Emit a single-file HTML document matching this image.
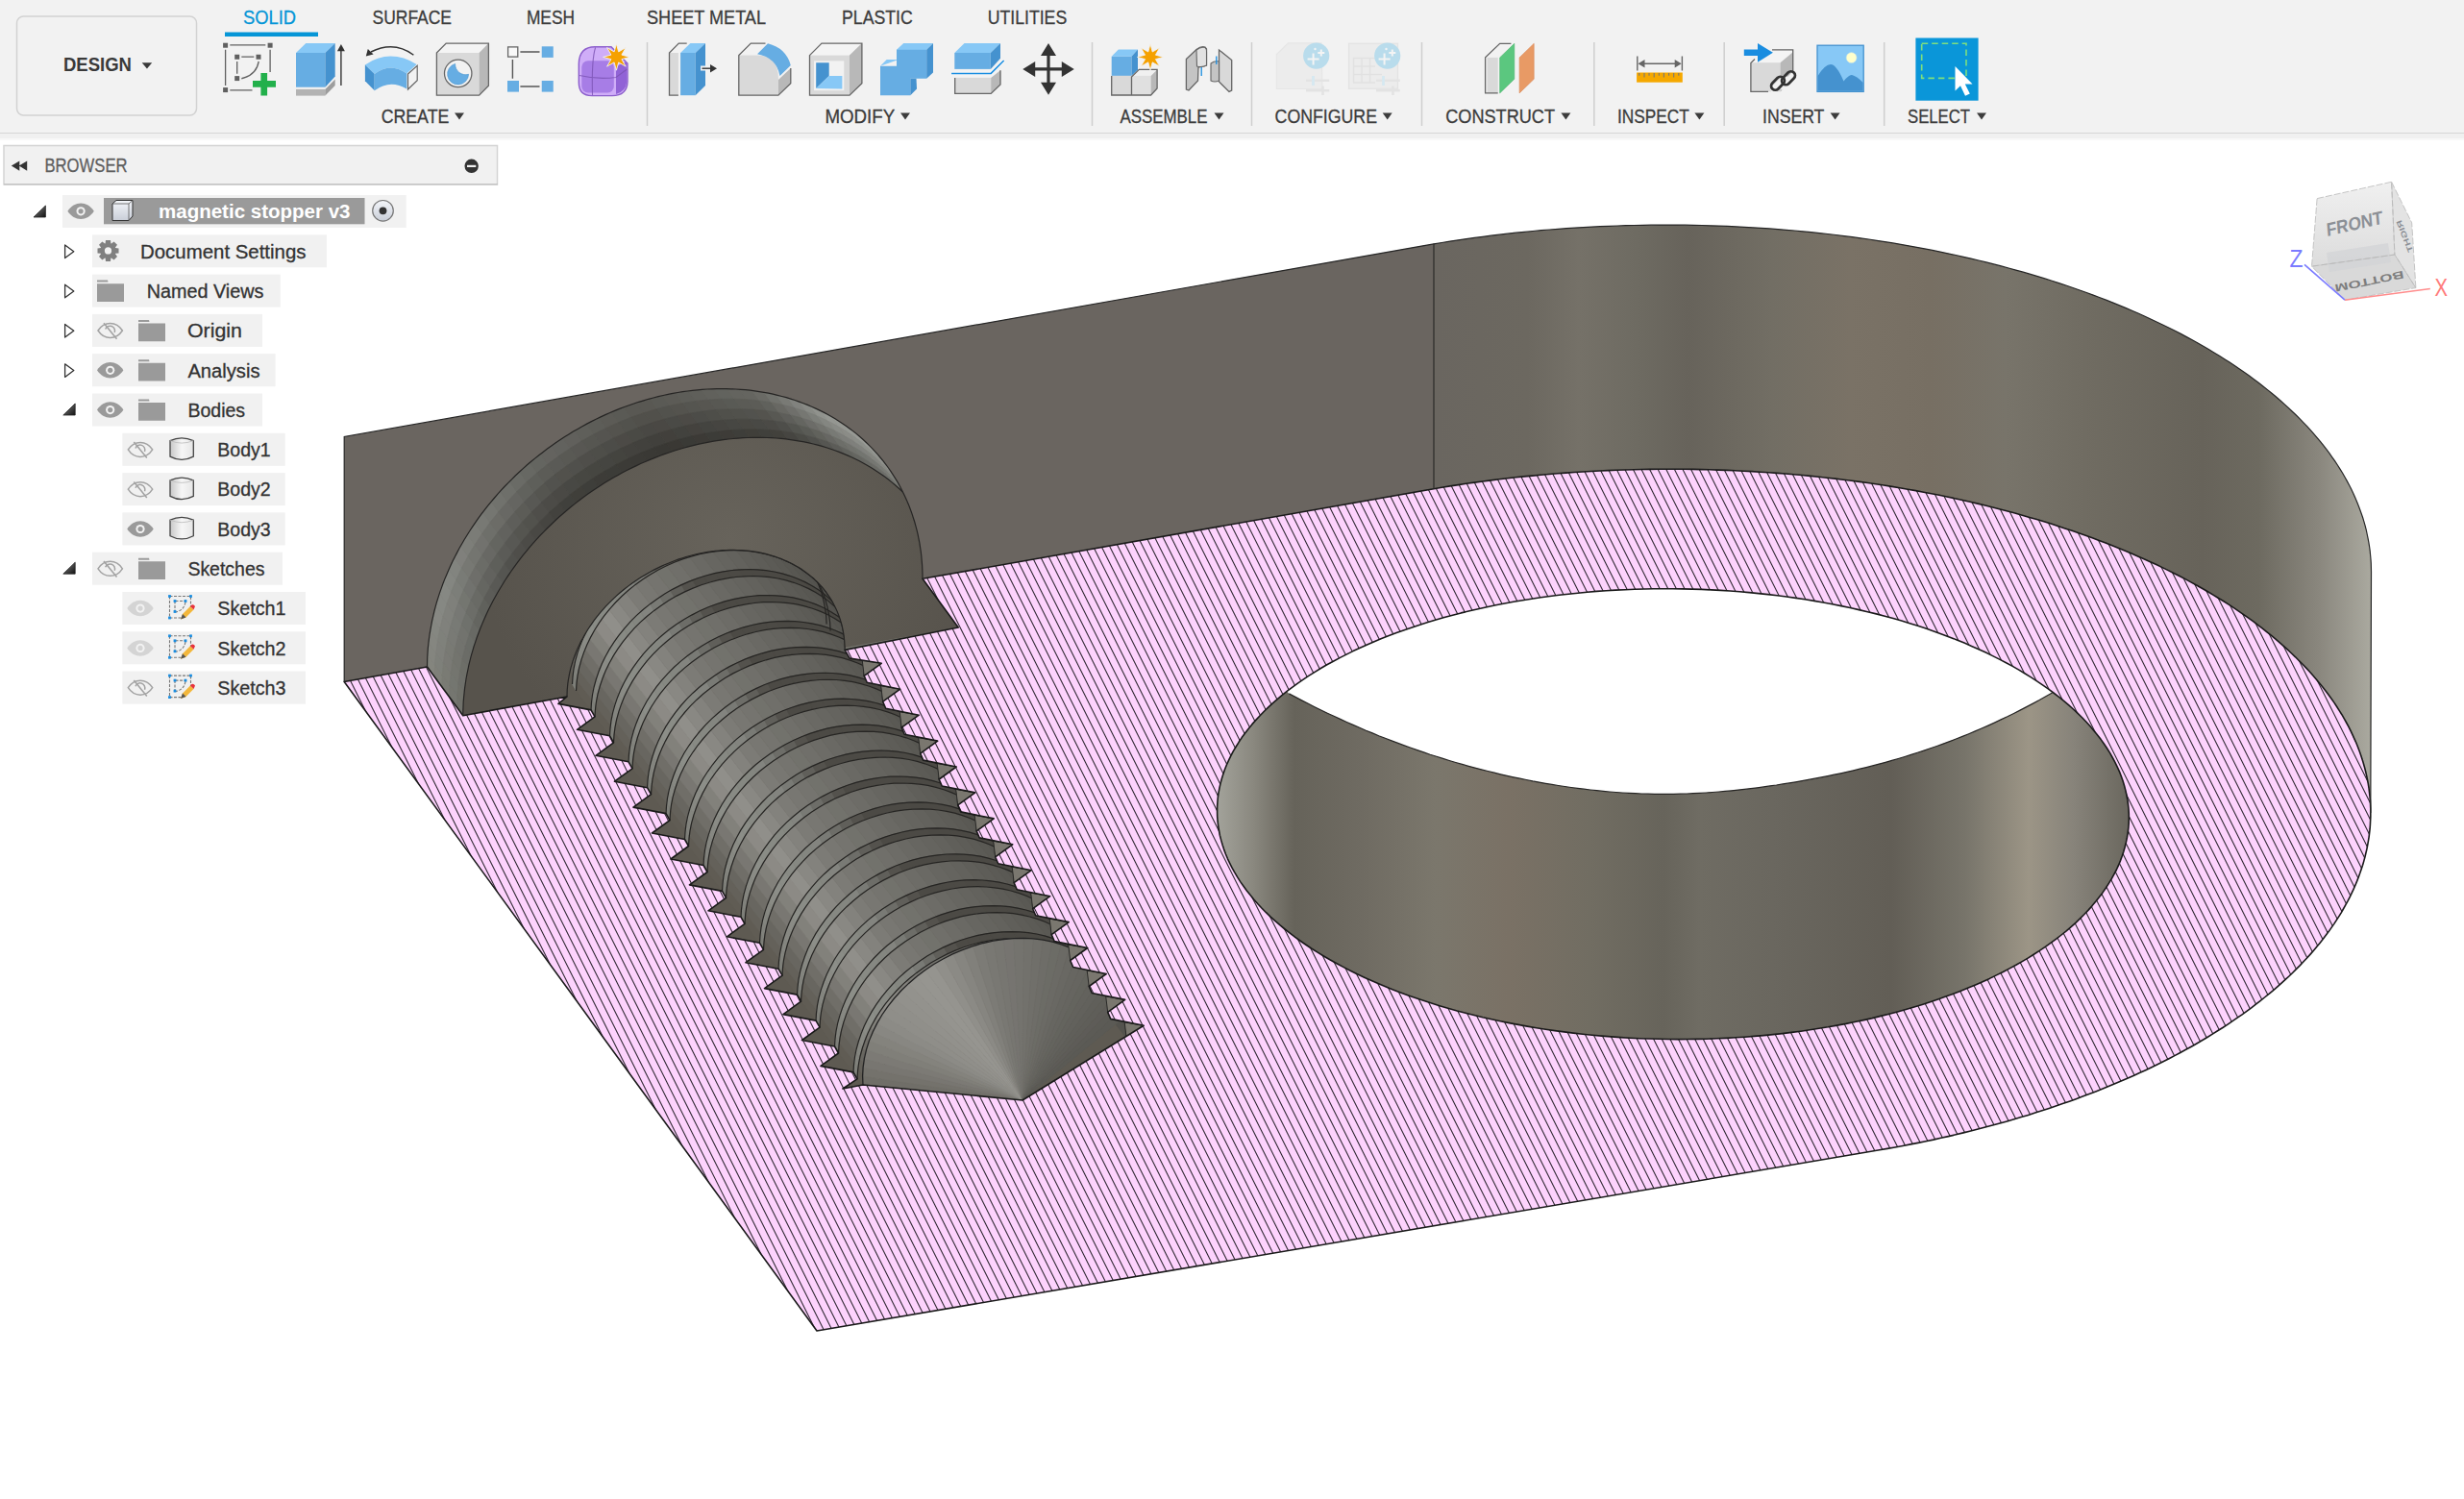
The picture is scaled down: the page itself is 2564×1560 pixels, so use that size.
<!DOCTYPE html>
<html><head><meta charset="utf-8"><style>
html,body{margin:0;padding:0;background:#fff;width:2564px;height:1560px;overflow:hidden}
svg{display:block}
text{font-family:"Liberation Sans",sans-serif}
</style></head><body>
<svg width="2564" height="1560" viewBox="0 0 2564 1560">
<rect width="2564" height="1560" fill="#ffffff"/>
<defs><linearGradient id="gwall" gradientUnits="userSpaceOnUse" x1="1492" y1="0" x2="2467" y2="0"><stop offset="0" stop-color="#6a6660"/><stop offset="0.1" stop-color="#6c6860"/><stop offset="0.155" stop-color="#757168"/><stop offset="0.217" stop-color="#6e6b62"/><stop offset="0.271" stop-color="#67635b"/><stop offset="0.36" stop-color="#726e64"/><stop offset="0.445" stop-color="#7a7266"/><stop offset="0.53" stop-color="#776f63"/><stop offset="0.61" stop-color="#78746a"/><stop offset="0.695" stop-color="#706c62"/><stop offset="0.82" stop-color="#67635a"/><stop offset="0.88" stop-color="#6d6a60"/><stop offset="0.945" stop-color="#8a877e"/><stop offset="1" stop-color="#aaa99f"/></linearGradient><linearGradient id="ghole" gradientUnits="userSpaceOnUse" x1="1266" y1="0" x2="2215" y2="0"><stop offset="0" stop-color="#a3a39b"/><stop offset="0.04" stop-color="#8a887f"/><stop offset="0.085" stop-color="#66635a"/><stop offset="0.16" stop-color="#6f6b62"/><stop offset="0.24" stop-color="#7b776c"/><stop offset="0.32" stop-color="#7a7165"/><stop offset="0.41" stop-color="#716d62"/><stop offset="0.49" stop-color="#67645b"/><stop offset="0.53" stop-color="#6f6c63"/><stop offset="0.61" stop-color="#6a675f"/><stop offset="0.74" stop-color="#625e56"/><stop offset="0.82" stop-color="#77746a"/><stop offset="0.89" stop-color="#9c9586"/><stop offset="0.94" stop-color="#87837a"/><stop offset="1" stop-color="#6a675e"/></linearGradient></defs>
<path d="M358.2,454.5 L1492.0,253.8 L1492.0,508.7 L358.2,709.5 Z" fill="#6a6560"/>
<path d="M1492.0,253.8 L1500.4,252.5 L1508.9,251.1 L1517.4,249.8 L1525.9,248.6 L1534.5,247.4 L1543.0,246.3 L1551.6,245.2 L1560.3,244.2 L1568.9,243.2 L1577.6,242.2 L1586.3,241.4 L1595.0,240.5 L1603.7,239.7 L1612.4,239.0 L1621.2,238.3 L1630.0,237.7 L1638.7,237.1 L1647.5,236.6 L1656.3,236.1 L1665.1,235.7 L1674.0,235.3 L1682.8,235.0 L1691.6,234.7 L1700.5,234.5 L1709.3,234.3 L1718.1,234.2 L1727.0,234.1 L1735.8,234.1 L1744.6,234.1 L1753.5,234.2 L1762.3,234.4 L1771.1,234.5 L1780.0,234.8 L1788.8,235.1 L1797.6,235.4 L1806.3,235.8 L1815.1,236.3 L1823.9,236.8 L1832.6,237.3 L1841.4,237.9 L1850.1,238.6 L1858.8,239.3 L1867.5,240.0 L1876.1,240.8 L1884.7,241.7 L1893.4,242.6 L1901.9,243.5 L1910.5,244.5 L1919.0,245.6 L1927.5,246.7 L1936.0,247.8 L1944.5,249.0 L1952.9,250.3 L1961.3,251.6 L1969.6,252.9 L1977.9,254.3 L1986.2,255.8 L1994.5,257.3 L2002.7,258.8 L2010.8,260.4 L2019.0,262.1 L2027.0,263.8 L2035.1,265.5 L2043.1,267.3 L2051.0,269.1 L2058.9,271.0 L2066.8,272.9 L2074.6,274.9 L2082.4,276.9 L2090.1,279.0 L2097.7,281.1 L2105.3,283.2 L2112.9,285.4 L2120.4,287.6 L2127.8,289.9 L2135.2,292.3 L2142.5,294.6 L2149.8,297.0 L2157.0,299.5 L2164.1,302.0 L2171.2,304.5 L2178.2,307.1 L2185.2,309.7 L2192.1,312.4 L2198.9,315.1 L2205.6,317.9 L2212.3,320.6 L2219.0,323.5 L2225.5,326.3 L2232.0,329.2 L2238.4,332.2 L2244.7,335.2 L2251.0,338.2 L2257.2,341.2 L2263.3,344.3 L2269.3,347.4 L2275.3,350.6 L2281.2,353.8 L2287.0,357.0 L2292.7,360.3 L2298.3,363.6 L2303.9,366.9 L2309.4,370.3 L2314.8,373.7 L2320.1,377.1 L2325.3,380.6 L2330.4,384.1 L2335.5,387.6 L2340.5,391.1 L2345.4,394.7 L2350.2,398.3 L2354.9,402.0 L2359.5,405.6 L2364.0,409.3 L2368.5,413.0 L2372.8,416.8 L2377.1,420.6 L2381.3,424.4 L2385.3,428.2 L2389.3,432.0 L2393.2,435.9 L2397.0,439.8 L2400.7,443.7 L2404.3,447.7 L2407.8,451.6 L2411.2,455.6 L2414.6,459.6 L2417.8,463.6 L2420.9,467.7 L2423.9,471.7 L2426.8,475.8 L2429.7,479.9 L2432.4,484.0 L2435.0,488.1 L2437.6,492.3 L2440.0,496.5 L2442.3,500.6 L2444.5,504.8 L2446.7,509.0 L2448.7,513.2 L2450.6,517.5 L2452.4,521.7 L2454.1,526.0 L2455.7,530.2 L2457.2,534.5 L2458.7,538.8 L2460.0,543.1 L2461.2,547.4 L2462.3,551.7 L2463.2,556.0 L2464.1,560.3 L2464.9,564.7 L2465.6,569.0 L2466.2,573.3 L2466.6,577.7 L2467.0,582.0 L2467.3,586.4 L2467.4,590.7 L2467.5,595.1 L2466.8,845.9 L2466.8,841.6 L2466.6,837.3 L2466.4,833.0 L2466.0,828.6 L2465.5,824.3 L2465.0,820.0 L2464.3,815.7 L2463.5,811.4 L2462.6,807.1 L2461.6,802.8 L2460.5,798.5 L2459.3,794.2 L2458.0,790.0 L2456.6,785.7 L2455.1,781.5 L2453.5,777.2 L2451.8,773.0 L2449.9,768.8 L2448.0,764.6 L2446.0,760.4 L2443.9,756.2 L2441.6,752.0 L2439.3,747.9 L2436.9,743.7 L2434.3,739.6 L2431.7,735.5 L2429.0,731.4 L2426.1,727.3 L2423.2,723.3 L2420.2,719.2 L2417.1,715.2 L2413.8,711.2 L2410.5,707.2 L2407.1,703.3 L2403.6,699.3 L2400.0,695.4 L2396.3,691.5 L2392.5,687.7 L2388.6,683.8 L2384.6,680.0 L2380.5,676.2 L2376.3,672.4 L2372.0,668.7 L2367.7,664.9 L2363.2,661.2 L2358.7,657.6 L2354.1,653.9 L2349.4,650.3 L2344.6,646.7 L2339.7,643.2 L2334.7,639.6 L2329.6,636.1 L2324.5,632.7 L2319.2,629.2 L2313.9,625.8 L2308.5,622.5 L2303.0,619.1 L2297.4,615.8 L2291.8,612.5 L2286.1,609.3 L2280.3,606.1 L2274.4,602.9 L2268.4,599.8 L2262.4,596.7 L2256.2,593.6 L2250.1,590.6 L2243.8,587.6 L2237.5,584.7 L2231.0,581.7 L2224.6,578.9 L2218.0,576.0 L2211.4,573.2 L2204.7,570.5 L2197.9,567.8 L2191.1,565.1 L2184.2,562.4 L2177.2,559.8 L2170.2,557.3 L2163.1,554.8 L2156.0,552.3 L2148.8,549.9 L2141.5,547.5 L2134.2,545.1 L2126.8,542.8 L2119.4,540.6 L2111.9,538.4 L2104.3,536.2 L2096.7,534.1 L2089.1,532.0 L2081.3,530.0 L2073.6,528.0 L2065.8,526.0 L2057.9,524.1 L2050.0,522.3 L2042.1,520.5 L2034.1,518.7 L2026.0,517.0 L2017.9,515.3 L2009.8,513.7 L2001.7,512.2 L1993.5,510.6 L1985.2,509.2 L1976.9,507.7 L1968.6,506.4 L1960.3,505.0 L1951.9,503.8 L1943.5,502.5 L1935.0,501.4 L1926.6,500.2 L1918.1,499.2 L1909.5,498.1 L1901.0,497.2 L1892.4,496.2 L1883.8,495.4 L1875.2,494.5 L1866.5,493.8 L1857.8,493.0 L1849.2,492.4 L1840.5,491.7 L1831.7,491.2 L1823.0,490.6 L1814.2,490.2 L1805.5,489.7 L1796.7,489.4 L1787.9,489.1 L1779.1,488.8 L1770.3,488.6 L1761.5,488.4 L1752.7,488.3 L1743.9,488.2 L1735.1,488.2 L1726.2,488.3 L1717.4,488.4 L1708.6,488.5 L1699.8,488.7 L1691.0,489.0 L1682.2,489.3 L1673.4,489.6 L1664.6,490.0 L1655.8,490.5 L1647.0,491.0 L1638.2,491.5 L1629.5,492.1 L1620.7,492.8 L1612.0,493.5 L1603.3,494.2 L1594.6,495.1 L1585.9,495.9 L1577.2,496.8 L1568.6,497.8 L1560.0,498.8 L1551.4,499.9 L1542.8,501.0 L1534.3,502.1 L1525.8,503.3 L1517.3,504.6 L1508.8,505.9 L1500.4,507.3 L1492.0,508.7 Z" fill="url(#gwall)"/>
<path d="M444.5,694.0 L444.6,689.3 L444.7,684.5 L445.0,679.7 L445.3,675.0 L445.8,670.2 L446.4,665.4 L447.0,660.6 L447.8,655.8 L448.7,651.0 L449.6,646.2 L450.7,641.3 L451.8,636.5 L453.1,631.7 L454.4,626.9 L455.9,622.1 L457.4,617.4 L459.1,612.6 L460.8,607.8 L462.6,603.1 L464.6,598.4 L466.6,593.7 L468.7,589.0 L470.9,584.3 L473.2,579.7 L475.6,575.1 L478.0,570.5 L480.6,566.0 L483.2,561.5 L486.0,557.0 L488.8,552.5 L491.7,548.1 L494.6,543.8 L497.7,539.4 L500.8,535.2 L504.1,530.9 L507.4,526.7 L510.7,522.6 L514.2,518.5 L517.7,514.4 L521.3,510.4 L524.9,506.5 L528.7,502.6 L532.5,498.8 L536.3,495.0 L540.3,491.3 L544.3,487.6 L548.3,484.0 L552.4,480.5 L556.6,477.1 L560.8,473.7 L565.1,470.4 L569.5,467.1 L573.8,463.9 L578.3,460.8 L582.8,457.8 L587.3,454.8 L591.9,451.9 L596.5,449.1 L601.2,446.4 L605.9,443.7 L610.6,441.1 L615.4,438.6 L620.2,436.2 L625.1,433.9 L629.9,431.6 L634.8,429.5 L639.8,427.4 L644.7,425.4 L649.7,423.5 L654.7,421.7 L659.7,420.0 L664.7,418.3 L669.8,416.8 L674.8,415.3 L679.9,414.0 L685.0,412.7 L690.1,411.5 L695.2,410.4 L700.2,409.4 L705.3,408.5 L710.4,407.7 L715.5,407.0 L720.6,406.3 L725.7,405.8 L730.7,405.4 L735.8,405.0 L740.8,404.8 L745.9,404.6 L750.9,404.6 L755.9,404.6 L760.8,404.8 L765.8,405.0 L770.7,405.3 L775.6,405.7 L780.5,406.2 L785.3,406.9 L790.1,407.6 L794.9,408.4 L799.6,409.2 L804.3,410.2 L809.0,411.3 L813.6,412.5 L818.2,413.7 L822.7,415.1 L827.2,416.5 L831.6,418.1 L836.0,419.7 L840.3,421.4 L844.6,423.2 L848.8,425.1 L853.0,427.1 L857.1,429.1 L861.1,431.3 L865.1,433.5 L869.0,435.8 L872.8,438.2 L876.6,440.7 L880.3,443.3 L884.0,445.9 L887.6,448.6 L891.1,451.4 L894.5,454.3 L897.9,457.3 L901.1,460.3 L904.3,463.4 L907.5,466.6 L910.5,469.8 L913.5,473.1 L916.3,476.5 L919.1,479.9 L921.8,483.4 L924.5,487.0 L927.0,490.7 L929.4,494.4 L931.8,498.1 L934.1,501.9 L936.3,505.8 L938.3,509.8 L940.3,513.7 L942.2,517.8 L944.1,521.9 L945.8,526.0 L947.4,530.2 L948.9,534.4 L950.3,538.7 L951.7,543.0 L952.9,547.4 L954.1,551.8 L955.1,556.2 L956.0,560.7 L956.9,565.2 L957.6,569.8 L958.3,574.3 L958.8,578.9 L959.2,583.6 L959.6,588.2 L959.8,592.9 L960.0,597.6 L960.0,602.3 L968.0,606.3 L1001.2,658.0 L477.8,749.7 Z" fill="#77776f"/>
<clipPath id="cbclip0"><path d="M444.5,694.0 L444.6,689.3 L444.7,684.5 L445.0,679.7 L445.3,675.0 L445.8,670.2 L446.4,665.4 L447.0,660.6 L447.8,655.8 L448.7,651.0 L449.6,646.2 L450.7,641.3 L451.8,636.5 L453.1,631.7 L454.4,626.9 L455.9,622.1 L457.4,617.4 L459.1,612.6 L460.8,607.8 L462.6,603.1 L464.6,598.4 L466.6,593.7 L468.7,589.0 L470.9,584.3 L473.2,579.7 L475.6,575.1 L478.0,570.5 L480.6,566.0 L483.2,561.5 L486.0,557.0 L488.8,552.5 L491.7,548.1 L494.6,543.8 L497.7,539.4 L500.8,535.2 L504.1,530.9 L507.4,526.7 L510.7,522.6 L514.2,518.5 L517.7,514.4 L521.3,510.4 L524.9,506.5 L528.7,502.6 L532.5,498.8 L536.3,495.0 L540.3,491.3 L544.3,487.6 L548.3,484.0 L552.4,480.5 L556.6,477.1 L560.8,473.7 L565.1,470.4 L569.5,467.1 L573.8,463.9 L578.3,460.8 L582.8,457.8 L587.3,454.8 L591.9,451.9 L596.5,449.1 L601.2,446.4 L605.9,443.7 L610.6,441.1 L615.4,438.6 L620.2,436.2 L625.1,433.9 L629.9,431.6 L634.8,429.5 L639.8,427.4 L644.7,425.4 L649.7,423.5 L654.7,421.7 L659.7,420.0 L664.7,418.3 L669.8,416.8 L674.8,415.3 L679.9,414.0 L685.0,412.7 L690.1,411.5 L695.2,410.4 L700.2,409.4 L705.3,408.5 L710.4,407.7 L715.5,407.0 L720.6,406.3 L725.7,405.8 L730.7,405.4 L735.8,405.0 L740.8,404.8 L745.9,404.6 L750.9,404.6 L755.9,404.6 L760.8,404.8 L765.8,405.0 L770.7,405.3 L775.6,405.7 L780.5,406.2 L785.3,406.9 L790.1,407.6 L794.9,408.4 L799.6,409.2 L804.3,410.2 L809.0,411.3 L813.6,412.5 L818.2,413.7 L822.7,415.1 L827.2,416.5 L831.6,418.1 L836.0,419.7 L840.3,421.4 L844.6,423.2 L848.8,425.1 L853.0,427.1 L857.1,429.1 L861.1,431.3 L865.1,433.5 L869.0,435.8 L872.8,438.2 L876.6,440.7 L880.3,443.3 L884.0,445.9 L887.6,448.6 L891.1,451.4 L894.5,454.3 L897.9,457.3 L901.1,460.3 L904.3,463.4 L907.5,466.6 L910.5,469.8 L913.5,473.1 L916.3,476.5 L919.1,479.9 L921.8,483.4 L924.5,487.0 L927.0,490.7 L929.4,494.4 L931.8,498.1 L934.1,501.9 L936.3,505.8 L938.3,509.8 L940.3,513.7 L942.2,517.8 L944.1,521.9 L945.8,526.0 L947.4,530.2 L948.9,534.4 L950.3,538.7 L951.7,543.0 L952.9,547.4 L954.1,551.8 L955.1,556.2 L956.0,560.7 L956.9,565.2 L957.6,569.8 L958.3,574.3 L958.8,578.9 L959.2,583.6 L959.6,588.2 L959.8,592.9 L960.0,597.6 L960.0,602.3 L968.0,606.3 L1001.2,658.0 L477.8,749.7 Z"/></clipPath><g clip-path="url(#cbclip0)">
<path d="M444.5,694.0 L444.9,681.4 L452.6,692.0 L452.2,704.5 Z" fill="#84857e" stroke="#84857e" stroke-width="0.7"/>
<path d="M452.2,704.5 L452.6,692.0 L460.4,702.5 L460.0,715.1 Z" fill="#7f8079" stroke="#7f8079" stroke-width="0.7"/>
<path d="M460.0,715.1 L460.4,702.5 L468.1,713.1 L467.7,725.6 Z" fill="#7a7b74" stroke="#7a7b74" stroke-width="0.7"/>
<path d="M467.7,725.6 L468.1,713.1 L475.9,723.6 L475.5,736.2 Z" fill="#757670" stroke="#757670" stroke-width="0.7"/>
<path d="M475.5,736.2 L475.9,723.6 L483.6,734.1 L483.2,746.7 Z" fill="#70716b" stroke="#70716b" stroke-width="0.7"/>
<path d="M444.9,681.4 L446.0,668.7 L453.7,679.3 L452.6,692.0 Z" fill="#84857f" stroke="#84857f" stroke-width="0.7"/>
<path d="M452.6,692.0 L453.7,679.3 L461.5,689.8 L460.4,702.5 Z" fill="#7e807a" stroke="#7e807a" stroke-width="0.7"/>
<path d="M460.4,702.5 L461.5,689.8 L469.2,700.4 L468.1,713.1 Z" fill="#7a7b74" stroke="#7a7b74" stroke-width="0.7"/>
<path d="M468.1,713.1 L469.2,700.4 L477.0,710.9 L475.9,723.6 Z" fill="#747670" stroke="#747670" stroke-width="0.7"/>
<path d="M475.9,723.6 L477.0,710.9 L484.7,721.5 L483.6,734.1 Z" fill="#70716a" stroke="#70716a" stroke-width="0.7"/>
<path d="M446.0,668.7 L447.8,656.0 L455.5,666.6 L453.7,679.3 Z" fill="#858680" stroke="#858680" stroke-width="0.7"/>
<path d="M453.7,679.3 L455.5,666.6 L463.3,677.1 L461.5,689.8 Z" fill="#7f807b" stroke="#7f807b" stroke-width="0.7"/>
<path d="M461.5,689.8 L463.3,677.1 L471.0,687.7 L469.2,700.4 Z" fill="#7a7a75" stroke="#7a7a75" stroke-width="0.7"/>
<path d="M469.2,700.4 L471.0,687.7 L478.7,698.2 L477.0,710.9 Z" fill="#74756f" stroke="#74756f" stroke-width="0.7"/>
<path d="M477.0,710.9 L478.7,698.2 L486.5,708.7 L484.7,721.5 Z" fill="#6e6f6a" stroke="#6e6f6a" stroke-width="0.7"/>
<path d="M447.8,656.0 L450.2,643.3 L458.0,653.8 L455.5,666.6 Z" fill="#858781" stroke="#858781" stroke-width="0.7"/>
<path d="M455.5,666.6 L458.0,653.8 L465.7,664.4 L463.3,677.1 Z" fill="#7f817b" stroke="#7f817b" stroke-width="0.7"/>
<path d="M463.3,677.1 L465.7,664.4 L473.5,674.9 L471.0,687.7 Z" fill="#797a74" stroke="#797a74" stroke-width="0.7"/>
<path d="M471.0,687.7 L473.5,674.9 L481.2,685.4 L478.7,698.2 Z" fill="#73746e" stroke="#73746e" stroke-width="0.7"/>
<path d="M478.7,698.2 L481.2,685.4 L489.0,696.0 L486.5,708.7 Z" fill="#6d6e68" stroke="#6d6e68" stroke-width="0.7"/>
<path d="M450.2,643.3 L453.4,630.5 L461.2,641.1 L458.0,653.8 Z" fill="#878883" stroke="#878883" stroke-width="0.7"/>
<path d="M458.0,653.8 L461.2,641.1 L468.9,651.6 L465.7,664.4 Z" fill="#80817c" stroke="#80817c" stroke-width="0.7"/>
<path d="M465.7,664.4 L468.9,651.6 L476.7,662.2 L473.5,674.9 Z" fill="#797a75" stroke="#797a75" stroke-width="0.7"/>
<path d="M473.5,674.9 L476.7,662.2 L484.4,672.7 L481.2,685.4 Z" fill="#72736e" stroke="#72736e" stroke-width="0.7"/>
<path d="M481.2,685.4 L484.4,672.7 L492.2,683.3 L489.0,696.0 Z" fill="#6b6c67" stroke="#6b6c67" stroke-width="0.7"/>
<path d="M453.4,630.5 L457.3,617.8 L465.0,628.4 L461.2,641.1 Z" fill="#868883" stroke="#868883" stroke-width="0.7"/>
<path d="M461.2,641.1 L465.0,628.4 L472.8,638.9 L468.9,651.6 Z" fill="#80817c" stroke="#80817c" stroke-width="0.7"/>
<path d="M468.9,651.6 L472.8,638.9 L480.5,649.5 L476.7,662.2 Z" fill="#787a75" stroke="#787a75" stroke-width="0.7"/>
<path d="M476.7,662.2 L480.5,649.5 L488.3,660.0 L484.4,672.7 Z" fill="#72736e" stroke="#72736e" stroke-width="0.7"/>
<path d="M484.4,672.7 L488.3,660.0 L496.0,670.6 L492.2,683.3 Z" fill="#6a6c67" stroke="#6a6c67" stroke-width="0.7"/>
<path d="M457.3,617.8 L461.8,605.2 L469.6,615.8 L465.0,628.4 Z" fill="#868883" stroke="#868883" stroke-width="0.7"/>
<path d="M465.0,628.4 L469.6,615.8 L477.3,626.3 L472.8,638.9 Z" fill="#7f807b" stroke="#7f807b" stroke-width="0.7"/>
<path d="M472.8,638.9 L477.3,626.3 L485.1,636.9 L480.5,649.5 Z" fill="#777874" stroke="#777874" stroke-width="0.7"/>
<path d="M480.5,649.5 L485.1,636.9 L492.8,647.4 L488.3,660.0 Z" fill="#6f716c" stroke="#6f716c" stroke-width="0.7"/>
<path d="M488.3,660.0 L492.8,647.4 L500.6,658.0 L496.0,670.6 Z" fill="#686964" stroke="#686964" stroke-width="0.7"/>
<path d="M461.8,605.2 L467.0,592.7 L474.8,603.3 L469.6,615.8 Z" fill="#848681" stroke="#848681" stroke-width="0.7"/>
<path d="M469.6,615.8 L474.8,603.3 L482.5,613.8 L477.3,626.3 Z" fill="#7c7e79" stroke="#7c7e79" stroke-width="0.7"/>
<path d="M477.3,626.3 L482.5,613.8 L490.2,624.4 L485.1,636.9 Z" fill="#747670" stroke="#747670" stroke-width="0.7"/>
<path d="M485.1,636.9 L490.2,624.4 L498.0,634.9 L492.8,647.4 Z" fill="#6c6d68" stroke="#6c6d68" stroke-width="0.7"/>
<path d="M492.8,647.4 L498.0,634.9 L505.7,645.5 L500.6,658.0 Z" fill="#646560" stroke="#646560" stroke-width="0.7"/>
<path d="M467.0,592.7 L472.8,580.4 L480.6,590.9 L474.8,603.3 Z" fill="#82847f" stroke="#82847f" stroke-width="0.7"/>
<path d="M474.8,603.3 L480.6,590.9 L488.3,601.5 L482.5,613.8 Z" fill="#797b76" stroke="#797b76" stroke-width="0.7"/>
<path d="M482.5,613.8 L488.3,601.5 L496.1,612.0 L490.2,624.4 Z" fill="#71726e" stroke="#71726e" stroke-width="0.7"/>
<path d="M490.2,624.4 L496.1,612.0 L503.8,622.6 L498.0,634.9 Z" fill="#696a65" stroke="#696a65" stroke-width="0.7"/>
<path d="M498.0,634.9 L503.8,622.6 L511.6,633.1 L505.7,645.5 Z" fill="#60615c" stroke="#60615c" stroke-width="0.7"/>
<path d="M472.8,580.4 L479.3,568.3 L487.0,578.8 L480.6,590.9 Z" fill="#80807c" stroke="#80807c" stroke-width="0.7"/>
<path d="M480.6,590.9 L487.0,578.8 L494.8,589.3 L488.3,601.5 Z" fill="#777873" stroke="#777873" stroke-width="0.7"/>
<path d="M488.3,601.5 L494.8,589.3 L502.5,599.9 L496.1,612.0 Z" fill="#6e6e6a" stroke="#6e6e6a" stroke-width="0.7"/>
<path d="M496.1,612.0 L502.5,599.9 L510.3,610.4 L503.8,622.6 Z" fill="#656661" stroke="#656661" stroke-width="0.7"/>
<path d="M503.8,622.6 L510.3,610.4 L518.0,621.0 L511.6,633.1 Z" fill="#5c5c58" stroke="#5c5c58" stroke-width="0.7"/>
<path d="M479.3,568.3 L486.4,556.3 L494.1,566.9 L487.0,578.8 Z" fill="#7d7e79" stroke="#7d7e79" stroke-width="0.7"/>
<path d="M487.0,578.8 L494.1,566.9 L501.9,577.4 L494.8,589.3 Z" fill="#747570" stroke="#747570" stroke-width="0.7"/>
<path d="M494.8,589.3 L501.9,577.4 L509.6,588.0 L502.5,599.9 Z" fill="#6b6c67" stroke="#6b6c67" stroke-width="0.7"/>
<path d="M502.5,599.9 L509.6,588.0 L517.4,598.5 L510.3,610.4 Z" fill="#62625e" stroke="#62625e" stroke-width="0.7"/>
<path d="M510.3,610.4 L517.4,598.5 L525.1,609.0 L518.0,621.0 Z" fill="#595955" stroke="#595955" stroke-width="0.7"/>
<path d="M486.4,556.3 L494.0,544.6 L501.8,555.2 L494.1,566.9 Z" fill="#7b7c77" stroke="#7b7c77" stroke-width="0.7"/>
<path d="M494.1,566.9 L501.8,555.2 L509.5,565.7 L501.9,577.4 Z" fill="#72726e" stroke="#72726e" stroke-width="0.7"/>
<path d="M501.9,577.4 L509.5,565.7 L517.3,576.3 L509.6,588.0 Z" fill="#686864" stroke="#686864" stroke-width="0.7"/>
<path d="M509.6,588.0 L517.3,576.3 L525.0,586.8 L517.4,598.5 Z" fill="#5e5f5a" stroke="#5e5f5a" stroke-width="0.7"/>
<path d="M517.4,598.5 L525.0,586.8 L532.8,597.4 L525.1,609.0 Z" fill="#555551" stroke="#555551" stroke-width="0.7"/>
<path d="M494.0,544.6 L502.3,533.2 L510.0,543.8 L501.8,555.2 Z" fill="#787974" stroke="#787974" stroke-width="0.7"/>
<path d="M501.8,555.2 L510.0,543.8 L517.8,554.3 L509.5,565.7 Z" fill="#6e6f6a" stroke="#6e6f6a" stroke-width="0.7"/>
<path d="M509.5,565.7 L517.8,554.3 L525.5,564.9 L517.3,576.3 Z" fill="#646560" stroke="#646560" stroke-width="0.7"/>
<path d="M517.3,576.3 L525.5,564.9 L533.3,575.4 L525.0,586.8 Z" fill="#5b5b57" stroke="#5b5b57" stroke-width="0.7"/>
<path d="M525.0,586.8 L533.3,575.4 L541.0,586.0 L532.8,597.4 Z" fill="#51514d" stroke="#51514d" stroke-width="0.7"/>
<path d="M502.3,533.2 L511.1,522.2 L518.8,532.7 L510.0,543.8 Z" fill="#757671" stroke="#757671" stroke-width="0.7"/>
<path d="M510.0,543.8 L518.8,532.7 L526.6,543.3 L517.8,554.3 Z" fill="#6c6c67" stroke="#6c6c67" stroke-width="0.7"/>
<path d="M517.8,554.3 L526.6,543.3 L534.3,553.8 L525.5,564.9 Z" fill="#62625e" stroke="#62625e" stroke-width="0.7"/>
<path d="M525.5,564.9 L534.3,553.8 L542.1,564.3 L533.3,575.4 Z" fill="#585854" stroke="#585854" stroke-width="0.7"/>
<path d="M533.3,575.4 L542.1,564.3 L549.8,574.9 L541.0,586.0 Z" fill="#4f4e4a" stroke="#4f4e4a" stroke-width="0.7"/>
<path d="M511.1,522.2 L520.4,511.4 L528.1,522.0 L518.8,532.7 Z" fill="#71726d" stroke="#71726d" stroke-width="0.7"/>
<path d="M518.8,532.7 L528.1,522.0 L535.9,532.5 L526.6,543.3 Z" fill="#686864" stroke="#686864" stroke-width="0.7"/>
<path d="M526.6,543.3 L535.9,532.5 L543.6,543.1 L534.3,553.8 Z" fill="#5e5e5a" stroke="#5e5e5a" stroke-width="0.7"/>
<path d="M534.3,553.8 L543.6,543.1 L551.4,553.6 L542.1,564.3 Z" fill="#555550" stroke="#555550" stroke-width="0.7"/>
<path d="M542.1,564.3 L551.4,553.6 L559.1,564.2 L549.8,574.9 Z" fill="#4c4b47" stroke="#4c4b47" stroke-width="0.7"/>
<path d="M520.4,511.4 L530.2,501.1 L537.9,511.6 L528.1,522.0 Z" fill="#6e6f6a" stroke="#6e6f6a" stroke-width="0.7"/>
<path d="M528.1,522.0 L537.9,511.6 L545.7,522.2 L535.9,532.5 Z" fill="#656561" stroke="#656561" stroke-width="0.7"/>
<path d="M535.9,532.5 L545.7,522.2 L553.4,532.7 L543.6,543.1 Z" fill="#5c5c57" stroke="#5c5c57" stroke-width="0.7"/>
<path d="M543.6,543.1 L553.4,532.7 L561.2,543.2 L551.4,553.6 Z" fill="#52524d" stroke="#52524d" stroke-width="0.7"/>
<path d="M551.4,553.6 L561.2,543.2 L568.9,553.8 L559.1,564.2 Z" fill="#494844" stroke="#494844" stroke-width="0.7"/>
<path d="M530.2,501.1 L540.5,491.1 L548.2,501.6 L537.9,511.6 Z" fill="#6a6b66" stroke="#6a6b66" stroke-width="0.7"/>
<path d="M537.9,511.6 L548.2,501.6 L556.0,512.2 L545.7,522.2 Z" fill="#61625d" stroke="#61625d" stroke-width="0.7"/>
<path d="M545.7,522.2 L556.0,512.2 L563.7,522.7 L553.4,532.7 Z" fill="#585854" stroke="#585854" stroke-width="0.7"/>
<path d="M553.4,532.7 L563.7,522.7 L571.5,533.3 L561.2,543.2 Z" fill="#4f4e4a" stroke="#4f4e4a" stroke-width="0.7"/>
<path d="M561.2,543.2 L571.5,533.3 L579.2,543.8 L568.9,553.8 Z" fill="#464541" stroke="#464541" stroke-width="0.7"/>
<path d="M540.5,491.1 L551.2,481.6 L558.9,492.1 L548.2,501.6 Z" fill="#676863" stroke="#676863" stroke-width="0.7"/>
<path d="M548.2,501.6 L558.9,492.1 L566.7,502.7 L556.0,512.2 Z" fill="#5e5f5a" stroke="#5e5f5a" stroke-width="0.7"/>
<path d="M556.0,512.2 L566.7,502.7 L574.4,513.2 L563.7,522.7 Z" fill="#555550" stroke="#555550" stroke-width="0.7"/>
<path d="M563.7,522.7 L574.4,513.2 L582.2,523.8 L571.5,533.3 Z" fill="#4c4b47" stroke="#4c4b47" stroke-width="0.7"/>
<path d="M571.5,533.3 L582.2,523.8 L589.9,534.3 L579.2,543.8 Z" fill="#43423e" stroke="#43423e" stroke-width="0.7"/>
<path d="M551.2,481.6 L562.3,472.5 L570.1,483.0 L558.9,492.1 Z" fill="#646560" stroke="#646560" stroke-width="0.7"/>
<path d="M558.9,492.1 L570.1,483.0 L577.8,493.6 L566.7,502.7 Z" fill="#5c5c57" stroke="#5c5c57" stroke-width="0.7"/>
<path d="M566.7,502.7 L577.8,493.6 L585.6,504.1 L574.4,513.2 Z" fill="#52524e" stroke="#52524e" stroke-width="0.7"/>
<path d="M574.4,513.2 L585.6,504.1 L593.3,514.7 L582.2,523.8 Z" fill="#4a4945" stroke="#4a4945" stroke-width="0.7"/>
<path d="M582.2,523.8 L593.3,514.7 L601.1,525.2 L589.9,534.3 Z" fill="#40403c" stroke="#40403c" stroke-width="0.7"/>
<path d="M562.3,472.5 L573.8,463.9 L581.6,474.5 L570.1,483.0 Z" fill="#64635f" stroke="#64635f" stroke-width="0.7"/>
<path d="M570.1,483.0 L581.6,474.5 L589.3,485.0 L577.8,493.6 Z" fill="#5a5a56" stroke="#5a5a56" stroke-width="0.7"/>
<path d="M577.8,493.6 L589.3,485.0 L597.1,495.5 L585.6,504.1 Z" fill="#52514c" stroke="#52514c" stroke-width="0.7"/>
<path d="M585.6,504.1 L597.1,495.5 L604.8,506.1 L593.3,514.7 Z" fill="#484844" stroke="#484844" stroke-width="0.7"/>
<path d="M593.3,514.7 L604.8,506.1 L612.6,516.6 L601.1,525.2 Z" fill="#403f3a" stroke="#403f3a" stroke-width="0.7"/>
<path d="M573.8,463.9 L585.7,455.8 L593.5,466.4 L581.6,474.5 Z" fill="#62625e" stroke="#62625e" stroke-width="0.7"/>
<path d="M581.6,474.5 L593.5,466.4 L601.2,476.9 L589.3,485.0 Z" fill="#595954" stroke="#595954" stroke-width="0.7"/>
<path d="M589.3,485.0 L601.2,476.9 L609.0,487.5 L597.1,495.5 Z" fill="#50504c" stroke="#50504c" stroke-width="0.7"/>
<path d="M597.1,495.5 L609.0,487.5 L616.7,498.0 L604.8,506.1 Z" fill="#474742" stroke="#474742" stroke-width="0.7"/>
<path d="M604.8,506.1 L616.7,498.0 L624.5,508.6 L612.6,516.6 Z" fill="#3e3e3a" stroke="#3e3e3a" stroke-width="0.7"/>
<path d="M585.7,455.8 L597.9,448.3 L605.7,458.8 L593.5,466.4 Z" fill="#61605c" stroke="#61605c" stroke-width="0.7"/>
<path d="M593.5,466.4 L605.7,458.8 L613.4,469.4 L601.2,476.9 Z" fill="#585753" stroke="#585753" stroke-width="0.7"/>
<path d="M601.2,476.9 L613.4,469.4 L621.2,479.9 L609.0,487.5 Z" fill="#4f4e4a" stroke="#4f4e4a" stroke-width="0.7"/>
<path d="M609.0,487.5 L621.2,479.9 L628.9,490.5 L616.7,498.0 Z" fill="#464641" stroke="#464641" stroke-width="0.7"/>
<path d="M616.7,498.0 L628.9,490.5 L636.6,501.0 L624.5,508.6 Z" fill="#3d3c38" stroke="#3d3c38" stroke-width="0.7"/>
<path d="M597.9,448.3 L610.4,441.3 L618.1,451.8 L605.7,458.8 Z" fill="#5f5f5a" stroke="#5f5f5a" stroke-width="0.7"/>
<path d="M605.7,458.8 L618.1,451.8 L625.9,462.4 L613.4,469.4 Z" fill="#565651" stroke="#565651" stroke-width="0.7"/>
<path d="M613.4,469.4 L625.9,462.4 L633.6,472.9 L621.2,479.9 Z" fill="#4e4e49" stroke="#4e4e49" stroke-width="0.7"/>
<path d="M621.2,479.9 L633.6,472.9 L641.4,483.4 L628.9,490.5 Z" fill="#454541" stroke="#454541" stroke-width="0.7"/>
<path d="M628.9,490.5 L641.4,483.4 L649.1,494.0 L636.6,501.0 Z" fill="#3c3c38" stroke="#3c3c38" stroke-width="0.7"/>
<path d="M610.4,441.3 L623.1,434.8 L630.9,445.4 L618.1,451.8 Z" fill="#5d5d58" stroke="#5d5d58" stroke-width="0.7"/>
<path d="M618.1,451.8 L630.9,445.4 L638.6,455.9 L625.9,462.4 Z" fill="#555450" stroke="#555450" stroke-width="0.7"/>
<path d="M625.9,462.4 L638.6,455.9 L646.4,466.5 L633.6,472.9 Z" fill="#4c4c48" stroke="#4c4c48" stroke-width="0.7"/>
<path d="M633.6,472.9 L646.4,466.5 L654.1,477.0 L641.4,483.4 Z" fill="#44443f" stroke="#44443f" stroke-width="0.7"/>
<path d="M641.4,483.4 L654.1,477.0 L661.9,487.5 L649.1,494.0 Z" fill="#3c3b37" stroke="#3c3b37" stroke-width="0.7"/>
<path d="M623.1,434.8 L636.1,429.0 L643.8,439.5 L630.9,445.4 Z" fill="#5c5b56" stroke="#5c5b56" stroke-width="0.7"/>
<path d="M630.9,445.4 L643.8,439.5 L651.6,450.0 L638.6,455.9 Z" fill="#54534e" stroke="#54534e" stroke-width="0.7"/>
<path d="M638.6,455.9 L651.6,450.0 L659.3,460.6 L646.4,466.5 Z" fill="#4c4a46" stroke="#4c4a46" stroke-width="0.7"/>
<path d="M646.4,466.5 L659.3,460.6 L667.1,471.1 L654.1,477.0 Z" fill="#43423e" stroke="#43423e" stroke-width="0.7"/>
<path d="M654.1,477.0 L667.1,471.1 L674.8,481.7 L661.9,487.5 Z" fill="#3b3a36" stroke="#3b3a36" stroke-width="0.7"/>
<path d="M636.1,429.0 L649.2,423.7 L656.9,434.2 L643.8,439.5 Z" fill="#5a5a55" stroke="#5a5a55" stroke-width="0.7"/>
<path d="M643.8,439.5 L656.9,434.2 L664.7,444.8 L651.6,450.0 Z" fill="#52524d" stroke="#52524d" stroke-width="0.7"/>
<path d="M651.6,450.0 L664.7,444.8 L672.4,455.3 L659.3,460.6 Z" fill="#4a4a45" stroke="#4a4a45" stroke-width="0.7"/>
<path d="M659.3,460.6 L672.4,455.3 L680.2,465.9 L667.1,471.1 Z" fill="#42413d" stroke="#42413d" stroke-width="0.7"/>
<path d="M667.1,471.1 L680.2,465.9 L687.9,476.4 L674.8,481.7 Z" fill="#3a3935" stroke="#3a3935" stroke-width="0.7"/>
<path d="M649.2,423.7 L662.5,419.1 L670.2,429.6 L656.9,434.2 Z" fill="#595853" stroke="#595853" stroke-width="0.7"/>
<path d="M656.9,434.2 L670.2,429.6 L678.0,440.1 L664.7,444.8 Z" fill="#51504b" stroke="#51504b" stroke-width="0.7"/>
<path d="M664.7,444.8 L678.0,440.1 L685.7,450.7 L672.4,455.3 Z" fill="#494844" stroke="#494844" stroke-width="0.7"/>
<path d="M672.4,455.3 L685.7,450.7 L693.5,461.2 L680.2,465.9 Z" fill="#41403c" stroke="#41403c" stroke-width="0.7"/>
<path d="M680.2,465.9 L693.5,461.2 L701.2,471.8 L687.9,476.4 Z" fill="#393834" stroke="#393834" stroke-width="0.7"/>
<path d="M662.5,419.1 L675.8,415.0 L683.6,425.6 L670.2,429.6 Z" fill="#595853" stroke="#595853" stroke-width="0.7"/>
<path d="M670.2,429.6 L683.6,425.6 L691.3,436.1 L678.0,440.1 Z" fill="#51504b" stroke="#51504b" stroke-width="0.7"/>
<path d="M678.0,440.1 L691.3,436.1 L699.1,446.7 L685.7,450.7 Z" fill="#4a4844" stroke="#4a4844" stroke-width="0.7"/>
<path d="M685.7,450.7 L699.1,446.7 L706.8,457.2 L693.5,461.2 Z" fill="#42403c" stroke="#42403c" stroke-width="0.7"/>
<path d="M693.5,461.2 L706.8,457.2 L714.6,467.8 L701.2,471.8 Z" fill="#3a3834" stroke="#3a3834" stroke-width="0.7"/>
<path d="M675.8,415.0 L689.3,411.7 L697.0,422.2 L683.6,425.6 Z" fill="#5a5a55" stroke="#5a5a55" stroke-width="0.7"/>
<path d="M683.6,425.6 L697.0,422.2 L704.8,432.8 L691.3,436.1 Z" fill="#52524d" stroke="#52524d" stroke-width="0.7"/>
<path d="M691.3,436.1 L704.8,432.8 L712.5,443.3 L699.1,446.7 Z" fill="#4a4a46" stroke="#4a4a46" stroke-width="0.7"/>
<path d="M699.1,446.7 L712.5,443.3 L720.3,453.8 L706.8,457.2 Z" fill="#42423e" stroke="#42423e" stroke-width="0.7"/>
<path d="M706.8,457.2 L720.3,453.8 L728.0,464.4 L714.6,467.8 Z" fill="#3a3a36" stroke="#3a3a36" stroke-width="0.7"/>
<path d="M689.3,411.7 L702.8,408.9 L710.5,419.5 L697.0,422.2 Z" fill="#5c5b56" stroke="#5c5b56" stroke-width="0.7"/>
<path d="M697.0,422.2 L710.5,419.5 L718.3,430.0 L704.8,432.8 Z" fill="#54534e" stroke="#54534e" stroke-width="0.7"/>
<path d="M704.8,432.8 L718.3,430.0 L726.0,440.6 L712.5,443.3 Z" fill="#4c4a46" stroke="#4c4a46" stroke-width="0.7"/>
<path d="M712.5,443.3 L726.0,440.6 L733.8,451.1 L720.3,453.8 Z" fill="#44423e" stroke="#44423e" stroke-width="0.7"/>
<path d="M720.3,453.8 L733.8,451.1 L741.5,461.7 L728.0,464.4 Z" fill="#3c3a36" stroke="#3c3a36" stroke-width="0.7"/>
<path d="M702.8,408.9 L716.3,406.9 L724.0,417.4 L710.5,419.5 Z" fill="#5d5d58" stroke="#5d5d58" stroke-width="0.7"/>
<path d="M710.5,419.5 L724.0,417.4 L731.8,428.0 L718.3,430.0 Z" fill="#555550" stroke="#555550" stroke-width="0.7"/>
<path d="M718.3,430.0 L731.8,428.0 L739.5,438.5 L726.0,440.6 Z" fill="#4c4c48" stroke="#4c4c48" stroke-width="0.7"/>
<path d="M726.0,440.6 L739.5,438.5 L747.3,449.1 L733.8,451.1 Z" fill="#444440" stroke="#444440" stroke-width="0.7"/>
<path d="M733.8,451.1 L747.3,449.1 L755.0,459.6 L741.5,461.7 Z" fill="#3c3c38" stroke="#3c3c38" stroke-width="0.7"/>
<path d="M716.3,406.9 L729.7,405.5 L737.5,416.0 L724.0,417.4 Z" fill="#5f5f5a" stroke="#5f5f5a" stroke-width="0.7"/>
<path d="M724.0,417.4 L737.5,416.0 L745.2,426.5 L731.8,428.0 Z" fill="#575651" stroke="#575651" stroke-width="0.7"/>
<path d="M731.8,428.0 L745.2,426.5 L753.0,437.1 L739.5,438.5 Z" fill="#4e4e49" stroke="#4e4e49" stroke-width="0.7"/>
<path d="M739.5,438.5 L753.0,437.1 L760.7,447.6 L747.3,449.1 Z" fill="#464541" stroke="#464541" stroke-width="0.7"/>
<path d="M747.3,449.1 L760.7,447.6 L768.5,458.2 L755.0,459.6 Z" fill="#3e3c38" stroke="#3e3c38" stroke-width="0.7"/>
<path d="M729.7,405.5 L743.1,404.7 L750.9,415.3 L737.5,416.0 Z" fill="#61615c" stroke="#61615c" stroke-width="0.7"/>
<path d="M737.5,416.0 L750.9,415.3 L758.6,425.8 L745.2,426.5 Z" fill="#585853" stroke="#585853" stroke-width="0.7"/>
<path d="M745.2,426.5 L758.6,425.8 L766.3,436.3 L753.0,437.1 Z" fill="#50504b" stroke="#50504b" stroke-width="0.7"/>
<path d="M753.0,437.1 L766.3,436.3 L774.1,446.9 L760.7,447.6 Z" fill="#474743" stroke="#474743" stroke-width="0.7"/>
<path d="M760.7,447.6 L774.1,446.9 L781.8,457.4 L768.5,458.2 Z" fill="#3e3e3a" stroke="#3e3e3a" stroke-width="0.7"/>
<path d="M743.1,404.7 L756.4,404.6 L764.1,415.2 L750.9,415.3 Z" fill="#62635e" stroke="#62635e" stroke-width="0.7"/>
<path d="M750.9,415.3 L764.1,415.2 L771.9,425.7 L758.6,425.8 Z" fill="#595a55" stroke="#595a55" stroke-width="0.7"/>
<path d="M758.6,425.8 L771.9,425.7 L779.6,436.3 L766.3,436.3 Z" fill="#51514c" stroke="#51514c" stroke-width="0.7"/>
<path d="M766.3,436.3 L779.6,436.3 L787.4,446.8 L774.1,446.9 Z" fill="#494843" stroke="#494843" stroke-width="0.7"/>
<path d="M774.1,446.9 L787.4,446.8 L795.1,457.4 L781.8,457.4 Z" fill="#403f3a" stroke="#403f3a" stroke-width="0.7"/>
<path d="M756.4,404.6 L769.5,405.2 L777.2,415.8 L764.1,415.2 Z" fill="#64645f" stroke="#64645f" stroke-width="0.7"/>
<path d="M764.1,415.2 L777.2,415.8 L785.0,426.3 L771.9,425.7 Z" fill="#5b5b56" stroke="#5b5b56" stroke-width="0.7"/>
<path d="M771.9,425.7 L785.0,426.3 L792.7,436.9 L779.6,436.3 Z" fill="#52524e" stroke="#52524e" stroke-width="0.7"/>
<path d="M779.6,436.3 L792.7,436.9 L800.5,447.4 L787.4,446.8 Z" fill="#494945" stroke="#494945" stroke-width="0.7"/>
<path d="M787.4,446.8 L800.5,447.4 L808.2,458.0 L795.1,457.4 Z" fill="#40403c" stroke="#40403c" stroke-width="0.7"/>
<path d="M769.5,405.2 L782.4,406.5 L790.2,417.0 L777.2,415.8 Z" fill="#656560" stroke="#656560" stroke-width="0.7"/>
<path d="M777.2,415.8 L790.2,417.0 L797.9,427.6 L785.0,426.3 Z" fill="#5c5c57" stroke="#5c5c57" stroke-width="0.7"/>
<path d="M785.0,426.3 L797.9,427.6 L805.7,438.1 L792.7,436.9 Z" fill="#54534e" stroke="#54534e" stroke-width="0.7"/>
<path d="M792.7,436.9 L805.7,438.1 L813.4,448.7 L800.5,447.4 Z" fill="#4b4a46" stroke="#4b4a46" stroke-width="0.7"/>
<path d="M800.5,447.4 L813.4,448.7 L821.2,459.2 L808.2,458.0 Z" fill="#42413c" stroke="#42413c" stroke-width="0.7"/>
<path d="M782.4,406.5 L795.1,408.4 L802.9,418.9 L790.2,417.0 Z" fill="#6a6a65" stroke="#6a6a65" stroke-width="0.7"/>
<path d="M790.2,417.0 L802.9,418.9 L810.6,429.5 L797.9,427.6 Z" fill="#60615c" stroke="#60615c" stroke-width="0.7"/>
<path d="M797.9,427.6 L810.6,429.5 L818.4,440.0 L805.7,438.1 Z" fill="#585853" stroke="#585853" stroke-width="0.7"/>
<path d="M805.7,438.1 L818.4,440.0 L826.1,450.6 L813.4,448.7 Z" fill="#4e4e4a" stroke="#4e4e4a" stroke-width="0.7"/>
<path d="M813.4,448.7 L826.1,450.6 L833.9,461.1 L821.2,459.2 Z" fill="#464541" stroke="#464541" stroke-width="0.7"/>
<path d="M795.1,408.4 L807.6,411.0 L815.3,421.5 L802.9,418.9 Z" fill="#71726d" stroke="#71726d" stroke-width="0.7"/>
<path d="M802.9,418.9 L815.3,421.5 L823.1,432.1 L810.6,429.5 Z" fill="#686863" stroke="#686863" stroke-width="0.7"/>
<path d="M810.6,429.5 L823.1,432.1 L830.8,442.6 L818.4,440.0 Z" fill="#5e5e5a" stroke="#5e5e5a" stroke-width="0.7"/>
<path d="M818.4,440.0 L830.8,442.6 L838.6,453.2 L826.1,450.6 Z" fill="#545550" stroke="#545550" stroke-width="0.7"/>
<path d="M826.1,450.6 L838.6,453.2 L846.3,463.7 L833.9,461.1 Z" fill="#4b4b46" stroke="#4b4b46" stroke-width="0.7"/>
<path d="M807.6,411.0 L819.7,414.2 L827.5,424.7 L815.3,421.5 Z" fill="#797a75" stroke="#797a75" stroke-width="0.7"/>
<path d="M815.3,421.5 L827.5,424.7 L835.2,435.3 L823.1,432.1 Z" fill="#6f6f6b" stroke="#6f6f6b" stroke-width="0.7"/>
<path d="M823.1,432.1 L835.2,435.3 L843.0,445.8 L830.8,442.6 Z" fill="#646560" stroke="#646560" stroke-width="0.7"/>
<path d="M830.8,442.6 L843.0,445.8 L850.7,456.4 L838.6,453.2 Z" fill="#5a5b56" stroke="#5a5b56" stroke-width="0.7"/>
<path d="M838.6,453.2 L850.7,456.4 L858.5,466.9 L846.3,463.7 Z" fill="#50504c" stroke="#50504c" stroke-width="0.7"/>
<path d="M819.7,414.2 L831.6,418.1 L839.3,428.6 L827.5,424.7 Z" fill="#81827e" stroke="#81827e" stroke-width="0.7"/>
<path d="M827.5,424.7 L839.3,428.6 L847.1,439.2 L835.2,435.3 Z" fill="#767772" stroke="#767772" stroke-width="0.7"/>
<path d="M835.2,435.3 L847.1,439.2 L854.8,449.7 L843.0,445.8 Z" fill="#6c6c68" stroke="#6c6c68" stroke-width="0.7"/>
<path d="M843.0,445.8 L854.8,449.7 L862.6,460.2 L850.7,456.4 Z" fill="#61625c" stroke="#61625c" stroke-width="0.7"/>
<path d="M850.7,456.4 L862.6,460.2 L870.3,470.8 L858.5,466.9 Z" fill="#565652" stroke="#565652" stroke-width="0.7"/>
<path d="M831.6,418.1 L843.1,422.6 L850.8,433.1 L839.3,428.6 Z" fill="#888a85" stroke="#888a85" stroke-width="0.7"/>
<path d="M839.3,428.6 L850.8,433.1 L858.6,443.7 L847.1,439.2 Z" fill="#7d7f7a" stroke="#7d7f7a" stroke-width="0.7"/>
<path d="M847.1,439.2 L858.6,443.7 L866.3,454.2 L854.8,449.7 Z" fill="#72736e" stroke="#72736e" stroke-width="0.7"/>
<path d="M854.8,449.7 L866.3,454.2 L874.1,464.7 L862.6,460.2 Z" fill="#676763" stroke="#676763" stroke-width="0.7"/>
<path d="M862.6,460.2 L874.1,464.7 L881.8,475.3 L870.3,470.8 Z" fill="#5c5c58" stroke="#5c5c58" stroke-width="0.7"/>
<path d="M843.1,422.6 L854.2,427.7 L861.9,438.2 L850.8,433.1 Z" fill="#90928d" stroke="#90928d" stroke-width="0.7"/>
<path d="M850.8,433.1 L861.9,438.2 L869.7,448.8 L858.6,443.7 Z" fill="#848681" stroke="#848681" stroke-width="0.7"/>
<path d="M858.6,443.7 L869.7,448.8 L877.4,459.3 L866.3,454.2 Z" fill="#787a75" stroke="#787a75" stroke-width="0.7"/>
<path d="M866.3,454.2 L877.4,459.3 L885.2,469.9 L874.1,464.7 Z" fill="#6d6e69" stroke="#6d6e69" stroke-width="0.7"/>
<path d="M874.1,464.7 L885.2,469.9 L892.9,480.4 L881.8,475.3 Z" fill="#61625d" stroke="#61625d" stroke-width="0.7"/>
<path d="M854.2,427.7 L864.9,433.4 L872.6,443.9 L861.9,438.2 Z" fill="#959792" stroke="#959792" stroke-width="0.7"/>
<path d="M861.9,438.2 L872.6,443.9 L880.4,454.5 L869.7,448.8 Z" fill="#898b86" stroke="#898b86" stroke-width="0.7"/>
<path d="M869.7,448.8 L880.4,454.5 L888.1,465.0 L877.4,459.3 Z" fill="#7d7e7a" stroke="#7d7e7a" stroke-width="0.7"/>
<path d="M877.4,459.3 L888.1,465.0 L895.9,475.6 L885.2,469.9 Z" fill="#71726d" stroke="#71726d" stroke-width="0.7"/>
<path d="M885.2,469.9 L895.9,475.6 L903.6,486.1 L892.9,480.4 Z" fill="#656661" stroke="#656661" stroke-width="0.7"/>
<path d="M864.9,433.4 L875.1,439.7 L882.9,450.2 L872.6,443.9 Z" fill="#969893" stroke="#969893" stroke-width="0.7"/>
<path d="M872.6,443.9 L882.9,450.2 L890.6,460.8 L880.4,454.5 Z" fill="#8b8c87" stroke="#8b8c87" stroke-width="0.7"/>
<path d="M880.4,454.5 L890.6,460.8 L898.4,471.3 L888.1,465.0 Z" fill="#7f807c" stroke="#7f807c" stroke-width="0.7"/>
<path d="M888.1,465.0 L898.4,471.3 L906.1,481.9 L895.9,475.6 Z" fill="#737570" stroke="#737570" stroke-width="0.7"/>
<path d="M895.9,475.6 L906.1,481.9 L913.9,492.4 L903.6,486.1 Z" fill="#686964" stroke="#686964" stroke-width="0.7"/>
<path d="M875.1,439.7 L884.9,446.6 L892.6,457.1 L882.9,450.2 Z" fill="#979994" stroke="#979994" stroke-width="0.7"/>
<path d="M882.9,450.2 L892.6,457.1 L900.4,467.7 L890.6,460.8 Z" fill="#8c8e89" stroke="#8c8e89" stroke-width="0.7"/>
<path d="M890.6,460.8 L900.4,467.7 L908.1,478.2 L898.4,471.3 Z" fill="#81827e" stroke="#81827e" stroke-width="0.7"/>
<path d="M898.4,471.3 L908.1,478.2 L915.9,488.8 L906.1,481.9 Z" fill="#767772" stroke="#767772" stroke-width="0.7"/>
<path d="M906.1,481.9 L915.9,488.8 L923.6,499.3 L913.9,492.4 Z" fill="#6b6c67" stroke="#6b6c67" stroke-width="0.7"/>
<path d="M884.9,446.6 L894.2,454.0 L901.9,464.6 L892.6,457.1 Z" fill="#9a9b96" stroke="#9a9b96" stroke-width="0.7"/>
<path d="M892.6,457.1 L901.9,464.6 L909.7,475.1 L900.4,467.7 Z" fill="#8e908b" stroke="#8e908b" stroke-width="0.7"/>
<path d="M900.4,467.7 L909.7,475.1 L917.4,485.7 L908.1,478.2 Z" fill="#848580" stroke="#848580" stroke-width="0.7"/>
<path d="M908.1,478.2 L917.4,485.7 L925.1,496.2 L915.9,488.8 Z" fill="#787a75" stroke="#787a75" stroke-width="0.7"/>
<path d="M915.9,488.8 L925.1,496.2 L932.9,506.7 L923.6,499.3 Z" fill="#6e6f6a" stroke="#6e6f6a" stroke-width="0.7"/>
<path d="M894.2,454.0 L902.9,462.0 L910.6,472.5 L901.9,464.6 Z" fill="#9b9d98" stroke="#9b9d98" stroke-width="0.7"/>
<path d="M901.9,464.6 L910.6,472.5 L918.4,483.1 L909.7,475.1 Z" fill="#90928d" stroke="#90928d" stroke-width="0.7"/>
<path d="M909.7,475.1 L918.4,483.1 L926.1,493.6 L917.4,485.7 Z" fill="#868782" stroke="#868782" stroke-width="0.7"/>
<path d="M917.4,485.7 L926.1,493.6 L933.9,504.2 L925.1,496.2 Z" fill="#7b7c77" stroke="#7b7c77" stroke-width="0.7"/>
<path d="M925.1,496.2 L933.9,504.2 L941.6,514.7 L932.9,506.7 Z" fill="#70716c" stroke="#70716c" stroke-width="0.7"/>
<path d="M902.9,462.0 L911.1,470.5 L918.8,481.0 L910.6,472.5 Z" fill="#9c9e99" stroke="#9c9e99" stroke-width="0.7"/>
<path d="M910.6,472.5 L918.8,481.0 L926.6,491.5 L918.4,483.1 Z" fill="#92938e" stroke="#92938e" stroke-width="0.7"/>
<path d="M918.4,483.1 L926.6,491.5 L934.3,502.1 L926.1,493.6 Z" fill="#888984" stroke="#888984" stroke-width="0.7"/>
<path d="M926.1,493.6 L934.3,502.1 L942.1,512.6 L933.9,504.2 Z" fill="#7d7f7a" stroke="#7d7f7a" stroke-width="0.7"/>
<path d="M933.9,504.2 L942.1,512.6 L949.8,523.2 L941.6,514.7 Z" fill="#73746f" stroke="#73746f" stroke-width="0.7"/>
<path d="M911.1,470.5 L918.7,479.4 L926.5,490.0 L918.8,481.0 Z" fill="#999b96" stroke="#999b96" stroke-width="0.7"/>
<path d="M918.8,481.0 L926.5,490.0 L934.2,500.5 L926.6,491.5 Z" fill="#8f918c" stroke="#8f918c" stroke-width="0.7"/>
<path d="M926.6,491.5 L934.2,500.5 L942.0,511.1 L934.3,502.1 Z" fill="#858682" stroke="#858682" stroke-width="0.7"/>
<path d="M934.3,502.1 L942.0,511.1 L949.7,521.6 L942.1,512.6 Z" fill="#7b7c77" stroke="#7b7c77" stroke-width="0.7"/>
<path d="M942.1,512.6 L949.7,521.6 L957.5,532.1 L949.8,523.2 Z" fill="#71726d" stroke="#71726d" stroke-width="0.7"/>
<path d="M918.7,479.4 L925.7,488.8 L933.5,499.4 L926.5,490.0 Z" fill="#91938e" stroke="#91938e" stroke-width="0.7"/>
<path d="M926.5,490.0 L933.5,499.4 L941.2,509.9 L934.2,500.5 Z" fill="#888984" stroke="#888984" stroke-width="0.7"/>
<path d="M934.2,500.5 L941.2,509.9 L949.0,520.5 L942.0,511.1 Z" fill="#7f807a" stroke="#7f807a" stroke-width="0.7"/>
<path d="M942.0,511.1 L949.0,520.5 L956.7,531.0 L949.7,521.6 Z" fill="#767671" stroke="#767671" stroke-width="0.7"/>
<path d="M949.7,521.6 L956.7,531.0 L964.5,541.6 L957.5,532.1 Z" fill="#6d6c67" stroke="#6d6c67" stroke-width="0.7"/>
<path d="M925.7,488.8 L932.2,498.7 L939.9,509.2 L933.5,499.4 Z" fill="#8a8b86" stroke="#8a8b86" stroke-width="0.7"/>
<path d="M933.5,499.4 L939.9,509.2 L947.6,519.8 L941.2,509.9 Z" fill="#81827c" stroke="#81827c" stroke-width="0.7"/>
<path d="M941.2,509.9 L947.6,519.8 L955.4,530.3 L949.0,520.5 Z" fill="#787874" stroke="#787874" stroke-width="0.7"/>
<path d="M949.0,520.5 L955.4,530.3 L963.1,540.9 L956.7,531.0 Z" fill="#6f706a" stroke="#6f706a" stroke-width="0.7"/>
<path d="M956.7,531.0 L963.1,540.9 L970.9,551.4 L964.5,541.6 Z" fill="#666662" stroke="#666662" stroke-width="0.7"/>
<path d="M932.2,498.7 L937.9,509.0 L945.7,519.5 L939.9,509.2 Z" fill="#82837e" stroke="#82837e" stroke-width="0.7"/>
<path d="M939.9,509.2 L945.7,519.5 L953.4,530.1 L947.6,519.8 Z" fill="#7a7a75" stroke="#7a7a75" stroke-width="0.7"/>
<path d="M947.6,519.8 L953.4,530.1 L961.2,540.6 L955.4,530.3 Z" fill="#72726c" stroke="#72726c" stroke-width="0.7"/>
<path d="M955.4,530.3 L961.2,540.6 L968.9,551.2 L963.1,540.9 Z" fill="#696964" stroke="#696964" stroke-width="0.7"/>
<path d="M963.1,540.9 L968.9,551.2 L976.7,561.7 L970.9,551.4 Z" fill="#61605b" stroke="#61605b" stroke-width="0.7"/>
<path d="M937.9,509.0 L943.1,519.6 L950.8,530.2 L945.7,519.5 Z" fill="#7a7b76" stroke="#7a7b76" stroke-width="0.7"/>
<path d="M945.7,519.5 L950.8,530.2 L958.6,540.7 L953.4,530.1 Z" fill="#73736e" stroke="#73736e" stroke-width="0.7"/>
<path d="M953.4,530.1 L958.6,540.7 L966.3,551.3 L961.2,540.6 Z" fill="#6c6b66" stroke="#6c6b66" stroke-width="0.7"/>
<path d="M961.2,540.6 L966.3,551.3 L974.1,561.8 L968.9,551.2 Z" fill="#64635e" stroke="#64635e" stroke-width="0.7"/>
<path d="M968.9,551.2 L974.1,561.8 L981.8,572.3 L976.7,561.7 Z" fill="#5d5b56" stroke="#5d5b56" stroke-width="0.7"/>
<path d="M943.1,519.6 L947.6,530.6 L955.3,541.2 L950.8,530.2 Z" fill="#767570" stroke="#767570" stroke-width="0.7"/>
<path d="M950.8,530.2 L955.3,541.2 L963.0,551.7 L958.6,540.7 Z" fill="#6f6e69" stroke="#6f6e69" stroke-width="0.7"/>
<path d="M958.6,540.7 L963.0,551.7 L970.8,562.3 L966.3,551.3 Z" fill="#686762" stroke="#686762" stroke-width="0.7"/>
<path d="M966.3,551.3 L970.8,562.3 L978.5,572.8 L974.1,561.8 Z" fill="#61605b" stroke="#61605b" stroke-width="0.7"/>
<path d="M974.1,561.8 L978.5,572.8 L986.3,583.4 L981.8,572.3 Z" fill="#5a5954" stroke="#5a5954" stroke-width="0.7"/>
<path d="M947.6,530.6 L951.4,542.0 L959.1,552.5 L955.3,541.2 Z" fill="#70706b" stroke="#70706b" stroke-width="0.7"/>
<path d="M955.3,541.2 L959.1,552.5 L966.9,563.0 L963.0,551.7 Z" fill="#6a6964" stroke="#6a6964" stroke-width="0.7"/>
<path d="M963.0,551.7 L966.9,563.0 L974.6,573.6 L970.8,562.3 Z" fill="#64635e" stroke="#64635e" stroke-width="0.7"/>
<path d="M970.8,562.3 L974.6,573.6 L982.3,584.1 L978.5,572.8 Z" fill="#5e5d58" stroke="#5e5d58" stroke-width="0.7"/>
<path d="M978.5,572.8 L982.3,584.1 L990.1,594.7 L986.3,583.4 Z" fill="#585651" stroke="#585651" stroke-width="0.7"/>
<path d="M951.4,542.0 L954.5,553.6 L962.2,564.1 L959.1,552.5 Z" fill="#6b6a65" stroke="#6b6a65" stroke-width="0.7"/>
<path d="M959.1,552.5 L962.2,564.1 L970.0,574.7 L966.9,563.0 Z" fill="#66655f" stroke="#66655f" stroke-width="0.7"/>
<path d="M966.9,563.0 L970.0,574.7 L977.7,585.2 L974.6,573.6 Z" fill="#605f5a" stroke="#605f5a" stroke-width="0.7"/>
<path d="M974.6,573.6 L977.7,585.2 L985.5,595.7 L982.3,584.1 Z" fill="#5b5954" stroke="#5b5954" stroke-width="0.7"/>
<path d="M982.3,584.1 L985.5,595.7 L993.2,606.3 L990.1,594.7 Z" fill="#56544e" stroke="#56544e" stroke-width="0.7"/>
<path d="M954.5,553.6 L956.9,565.4 L964.7,576.0 L962.2,564.1 Z" fill="#666560" stroke="#666560" stroke-width="0.7"/>
<path d="M962.2,564.1 L964.7,576.0 L972.4,586.5 L970.0,574.7 Z" fill="#61605a" stroke="#61605a" stroke-width="0.7"/>
<path d="M970.0,574.7 L972.4,586.5 L980.2,597.1 L977.7,585.2 Z" fill="#5c5b56" stroke="#5c5b56" stroke-width="0.7"/>
<path d="M977.7,585.2 L980.2,597.1 L987.9,607.6 L985.5,595.7 Z" fill="#585650" stroke="#585650" stroke-width="0.7"/>
<path d="M985.5,595.7 L987.9,607.6 L995.7,618.2 L993.2,606.3 Z" fill="#53514c" stroke="#53514c" stroke-width="0.7"/>
<path d="M956.9,565.4 L958.6,577.5 L966.4,588.1 L964.7,576.0 Z" fill="#615f59" stroke="#615f59" stroke-width="0.7"/>
<path d="M964.7,576.0 L966.4,588.1 L974.1,598.6 L972.4,586.5 Z" fill="#5d5b55" stroke="#5d5b55" stroke-width="0.7"/>
<path d="M972.4,586.5 L974.1,598.6 L981.9,609.2 L980.2,597.1 Z" fill="#595651" stroke="#595651" stroke-width="0.7"/>
<path d="M980.2,597.1 L981.9,609.2 L989.6,619.7 L987.9,607.6 Z" fill="#55524d" stroke="#55524d" stroke-width="0.7"/>
<path d="M987.9,607.6 L989.6,619.7 L997.4,630.3 L995.7,618.2 Z" fill="#514e49" stroke="#514e49" stroke-width="0.7"/>
<path d="M958.6,577.5 L959.7,589.8 L967.4,600.4 L966.4,588.1 Z" fill="#5b5953" stroke="#5b5953" stroke-width="0.7"/>
<path d="M966.4,588.1 L967.4,600.4 L975.2,610.9 L974.1,598.6 Z" fill="#585650" stroke="#585650" stroke-width="0.7"/>
<path d="M974.1,598.6 L975.2,610.9 L982.9,621.5 L981.9,609.2 Z" fill="#55524c" stroke="#55524c" stroke-width="0.7"/>
<path d="M981.9,609.2 L982.9,621.5 L990.7,632.0 L989.6,619.7 Z" fill="#524f49" stroke="#524f49" stroke-width="0.7"/>
<path d="M989.6,619.7 L990.7,632.0 L998.4,642.6 L997.4,630.3 Z" fill="#4f4c46" stroke="#4f4c46" stroke-width="0.7"/>
<path d="M959.7,589.8 L960.0,602.3 L967.7,612.8 L967.4,600.4 Z" fill="#57544e" stroke="#57544e" stroke-width="0.7"/>
<path d="M967.4,600.4 L967.7,612.8 L975.5,623.4 L975.2,610.9 Z" fill="#54514b" stroke="#54514b" stroke-width="0.7"/>
<path d="M975.2,610.9 L975.5,623.4 L983.2,633.9 L982.9,621.5 Z" fill="#524e48" stroke="#524e48" stroke-width="0.7"/>
<path d="M982.9,621.5 L983.2,633.9 L991.0,644.5 L990.7,632.0 Z" fill="#4f4c46" stroke="#4f4c46" stroke-width="0.7"/>
<path d="M990.7,632.0 L991.0,644.5 L998.7,655.0 L998.4,642.6 Z" fill="#4c4943" stroke="#4c4943" stroke-width="0.7"/>
</g>
<clipPath id="cbclip"><path d="M444.5,694.0 L444.6,689.3 L444.7,684.5 L445.0,679.7 L445.3,675.0 L445.8,670.2 L446.4,665.4 L447.0,660.6 L447.8,655.8 L448.7,651.0 L449.6,646.2 L450.7,641.3 L451.8,636.5 L453.1,631.7 L454.4,626.9 L455.9,622.1 L457.4,617.4 L459.1,612.6 L460.8,607.8 L462.6,603.1 L464.6,598.4 L466.6,593.7 L468.7,589.0 L470.9,584.3 L473.2,579.7 L475.6,575.1 L478.0,570.5 L480.6,566.0 L483.2,561.5 L486.0,557.0 L488.8,552.5 L491.7,548.1 L494.6,543.8 L497.7,539.4 L500.8,535.2 L504.1,530.9 L507.4,526.7 L510.7,522.6 L514.2,518.5 L517.7,514.4 L521.3,510.4 L524.9,506.5 L528.7,502.6 L532.5,498.8 L536.3,495.0 L540.3,491.3 L544.3,487.6 L548.3,484.0 L552.4,480.5 L556.6,477.1 L560.8,473.7 L565.1,470.4 L569.5,467.1 L573.8,463.9 L578.3,460.8 L582.8,457.8 L587.3,454.8 L591.9,451.9 L596.5,449.1 L601.2,446.4 L605.9,443.7 L610.6,441.1 L615.4,438.6 L620.2,436.2 L625.1,433.9 L629.9,431.6 L634.8,429.5 L639.8,427.4 L644.7,425.4 L649.7,423.5 L654.7,421.7 L659.7,420.0 L664.7,418.3 L669.8,416.8 L674.8,415.3 L679.9,414.0 L685.0,412.7 L690.1,411.5 L695.2,410.4 L700.2,409.4 L705.3,408.5 L710.4,407.7 L715.5,407.0 L720.6,406.3 L725.7,405.8 L730.7,405.4 L735.8,405.0 L740.8,404.8 L745.9,404.6 L750.9,404.6 L755.9,404.6 L760.8,404.8 L765.8,405.0 L770.7,405.3 L775.6,405.7 L780.5,406.2 L785.3,406.9 L790.1,407.6 L794.9,408.4 L799.6,409.2 L804.3,410.2 L809.0,411.3 L813.6,412.5 L818.2,413.7 L822.7,415.1 L827.2,416.5 L831.6,418.1 L836.0,419.7 L840.3,421.4 L844.6,423.2 L848.8,425.1 L853.0,427.1 L857.1,429.1 L861.1,431.3 L865.1,433.5 L869.0,435.8 L872.8,438.2 L876.6,440.7 L880.3,443.3 L884.0,445.9 L887.6,448.6 L891.1,451.4 L894.5,454.3 L897.9,457.3 L901.1,460.3 L904.3,463.4 L907.5,466.6 L910.5,469.8 L913.5,473.1 L916.3,476.5 L919.1,479.9 L921.8,483.4 L924.5,487.0 L927.0,490.7 L929.4,494.4 L931.8,498.1 L934.1,501.9 L936.3,505.8 L938.3,509.8 L940.3,513.7 L942.2,517.8 L944.1,521.9 L945.8,526.0 L947.4,530.2 L948.9,534.4 L950.3,538.7 L951.7,543.0 L952.9,547.4 L954.1,551.8 L955.1,556.2 L956.0,560.7 L956.9,565.2 L957.6,569.8 L958.3,574.3 L958.8,578.9 L959.2,583.6 L959.6,588.2 L959.8,592.9 L960.0,597.6 L960.0,602.3 L968.0,606.3 L1001.2,658.0 L477.8,749.7 Z"/></clipPath>
<radialGradient id="gfloor" gradientUnits="userSpaceOnUse" cx="760" cy="560" r="260"><stop offset="0" stop-color="#67635b"/><stop offset="1" stop-color="#57534c"/></radialGradient>
<path d="M481.8,744.7 L481.8,740.0 L482.0,735.2 L482.2,730.4 L482.6,725.7 L483.1,720.9 L483.6,716.1 L484.3,711.3 L485.0,706.5 L485.9,701.7 L486.9,696.9 L487.9,692.0 L489.1,687.2 L490.3,682.4 L491.7,677.6 L493.1,672.8 L494.7,668.1 L496.3,663.3 L498.1,658.5 L499.9,653.8 L501.8,649.1 L503.8,644.4 L505.9,639.7 L508.1,635.0 L510.4,630.4 L512.8,625.8 L515.3,621.2 L517.8,616.7 L520.5,612.2 L523.2,607.7 L526.0,603.2 L528.9,598.8 L531.9,594.5 L535.0,590.1 L538.1,585.9 L541.3,581.6 L544.6,577.4 L548.0,573.3 L551.4,569.2 L554.9,565.1 L558.5,561.1 L562.2,557.2 L565.9,553.3 L569.7,549.5 L573.6,545.7 L577.5,542.0 L581.5,538.3 L585.6,534.7 L589.7,531.2 L593.8,527.8 L598.1,524.4 L602.4,521.1 L606.7,517.8 L611.1,514.6 L615.5,511.5 L620.0,508.5 L624.6,505.5 L629.1,502.6 L633.8,499.8 L638.4,497.1 L643.1,494.4 L647.9,491.8 L652.7,489.3 L657.5,486.9 L662.3,484.6 L667.2,482.3 L672.1,480.2 L677.0,478.1 L682.0,476.1 L686.9,474.2 L691.9,472.4 L696.9,470.7 L702.0,469.0 L707.0,467.5 L712.1,466.0 L717.2,464.7 L722.2,463.4 L727.3,462.2 L732.4,461.1 L737.5,460.1 L742.6,459.2 L747.7,458.4 L752.8,457.7 L757.8,457.0 L762.9,456.5 L768.0,456.1 L773.0,455.7 L778.1,455.5 L783.1,455.3 L788.1,455.3 L793.1,455.3 L798.1,455.5 L803.0,455.7 L808.0,456.0 L812.9,456.4 L817.7,456.9 L822.6,457.6 L827.4,458.3 L832.1,459.1 L836.9,459.9 L841.6,460.9 L846.2,462.0 L850.8,463.2 L855.4,464.4 L859.9,465.8 L864.4,467.2 L868.8,468.8 L873.2,470.4 L877.5,472.1 L881.8,473.9 L886.0,475.8 L890.2,477.8 L894.3,479.8 L898.3,482.0 L902.3,484.2 L906.2,486.5 L910.1,488.9 L913.9,491.4 L917.6,494.0 L921.2,496.6 L924.8,499.3 L928.3,502.1 L931.7,505.0 L935.1,508.0 L938.4,511.0 L941.6,514.1 L944.7,517.3 L947.7,520.5 L950.7,523.8 L953.6,527.2 L956.4,530.6 L959.1,534.1 L961.7,537.7 L964.2,541.4 L966.7,545.1 L969.1,548.8 L971.3,552.6 L973.5,556.5 L975.6,560.5 L977.6,564.4 L979.5,568.5 L981.3,572.6 L983.0,576.7 L984.6,580.9 L986.2,585.1 L987.6,589.4 L988.9,593.7 L990.2,598.1 L991.3,602.5 L992.3,606.9 L993.3,611.4 L994.1,615.9 L994.9,620.5 L995.5,625.0 L996.0,629.6 L996.5,634.3 L996.8,638.9 L997.1,643.6 L997.2,648.3 L997.2,653.0 Z" fill="url(#gfloor)" clip-path="url(#cbclip)"/>
<clipPath id="boreclip"><path d="M590.0,725.0 L590.1,721.7 L590.2,718.3 L590.5,715.0 L590.8,711.6 L591.3,708.2 L591.9,704.8 L592.5,701.4 L593.3,698.0 L594.1,694.7 L595.1,691.3 L596.1,687.9 L597.3,684.5 L598.5,681.2 L599.9,677.8 L601.3,674.5 L602.8,671.2 L604.4,667.9 L606.2,664.7 L608.0,661.4 L609.8,658.2 L611.8,655.0 L613.9,651.9 L616.0,648.8 L618.2,645.7 L620.5,642.6 L622.9,639.6 L625.4,636.7 L627.9,633.8 L630.5,630.9 L633.2,628.1 L636.0,625.3 L638.8,622.6 L641.7,619.9 L644.7,617.3 L647.7,614.8 L650.8,612.3 L653.9,609.9 L657.1,607.5 L660.3,605.2 L663.6,603.0 L667.0,600.8 L670.4,598.7 L673.8,596.7 L677.3,594.8 L680.8,592.9 L684.4,591.1 L688.0,589.4 L691.6,587.7 L695.3,586.2 L699.0,584.7 L702.7,583.3 L706.4,581.9 L710.2,580.7 L713.9,579.5 L717.7,578.5 L721.5,577.5 L725.3,576.6 L729.1,575.8 L732.9,575.0 L736.8,574.4 L740.6,573.8 L744.4,573.4 L748.2,573.0 L752.0,572.7 L755.8,572.5 L759.5,572.4 L763.3,572.4 L767.0,572.5 L770.7,572.6 L774.4,572.9 L778.1,573.2 L781.7,573.6 L785.3,574.1 L788.8,574.7 L792.3,575.4 L795.8,576.2 L799.3,577.1 L802.6,578.0 L806.0,579.1 L809.3,580.2 L812.5,581.4 L815.7,582.7 L818.8,584.1 L821.9,585.5 L824.9,587.0 L827.9,588.7 L830.7,590.3 L833.6,592.1 L836.3,593.9 L839.0,595.9 L841.6,597.9 L844.1,599.9 L846.6,602.0 L848.9,604.3 L851.2,606.5 L853.4,608.9 L855.6,611.2 L857.6,613.7 L859.6,616.2 L861.4,618.8 L863.2,621.4 L864.9,624.1 L866.5,626.9 L868.0,629.7 L869.4,632.5 L870.8,635.4 L872.0,638.4 L873.1,641.3 L874.2,644.4 L875.1,647.4 L876.0,650.5 L876.7,653.7 L877.3,656.8 L877.9,660.0 L878.3,663.3 L878.7,666.5 L878.9,669.8 L879.1,673.1 L879.1,676.4 L960.0,700.0 L1230.0,1070.0 L1064.0,1160.0 L860.0,1150.0 L560.0,740.0 Z"/></clipPath>
<path d="M590.0,725.0 L590.1,721.7 L590.2,718.3 L590.5,715.0 L590.8,711.6 L591.3,708.2 L591.9,704.8 L592.5,701.4 L593.3,698.0 L594.1,694.7 L595.1,691.3 L596.1,687.9 L597.3,684.5 L598.5,681.2 L599.9,677.8 L601.3,674.5 L602.8,671.2 L604.4,667.9 L606.2,664.7 L608.0,661.4 L609.8,658.2 L611.8,655.0 L613.9,651.9 L616.0,648.8 L618.2,645.7 L620.5,642.6 L622.9,639.6 L625.4,636.7 L627.9,633.8 L630.5,630.9 L633.2,628.1 L636.0,625.3 L638.8,622.6 L641.7,619.9 L644.7,617.3 L647.7,614.8 L650.8,612.3 L653.9,609.9 L657.1,607.5 L660.3,605.2 L663.6,603.0 L667.0,600.8 L670.4,598.7 L673.8,596.7 L677.3,594.8 L680.8,592.9 L684.4,591.1 L688.0,589.4 L691.6,587.7 L695.3,586.2 L699.0,584.7 L702.7,583.3 L706.4,581.9 L710.2,580.7 L713.9,579.5 L717.7,578.5 L721.5,577.5 L725.3,576.6 L729.1,575.8 L732.9,575.0 L736.8,574.4 L740.6,573.8 L744.4,573.4 L748.2,573.0 L752.0,572.7 L755.8,572.5 L759.5,572.4 L763.3,572.4 L767.0,572.5 L770.7,572.6 L774.4,572.9 L778.1,573.2 L781.7,573.6 L785.3,574.1 L788.8,574.7 L792.3,575.4 L795.8,576.2 L799.3,577.1 L802.6,578.0 L806.0,579.1 L809.3,580.2 L812.5,581.4 L815.7,582.7 L818.8,584.1 L821.9,585.5 L824.9,587.0 L827.9,588.7 L830.7,590.3 L833.6,592.1 L836.3,593.9 L839.0,595.9 L841.6,597.9 L844.1,599.9 L846.6,602.0 L848.9,604.3 L851.2,606.5 L853.4,608.9 L855.6,611.2 L857.6,613.7 L859.6,616.2 L861.4,618.8 L863.2,621.4 L864.9,624.1 L866.5,626.9 L868.0,629.7 L869.4,632.5 L870.8,635.4 L872.0,638.4 L873.1,641.3 L874.2,644.4 L875.1,647.4 L876.0,650.5 L876.7,653.7 L877.3,656.8 L877.9,660.0 L878.3,663.3 L878.7,666.5 L878.9,669.8 L879.1,673.1 L879.1,676.4 L960.0,700.0 L1230.0,1070.0 L1064.0,1160.0 L860.0,1150.0 L560.0,740.0 Z" fill="#5e5a52"/>
<g clip-path="url(#boreclip)">
<path d="M576.0,685.0 L576.8,674.3 L580.8,681.3 L580.0,692.0 Z" fill="#7e7f79" stroke="#7e7f79" stroke-width="0.6"/>
<path d="M580.0,692.0 L580.8,681.3 L596.3,701.2 L595.5,712.0 Z" fill="#605c54" stroke="#605c54" stroke-width="0.6"/>
<path d="M576.8,674.3 L578.6,663.4 L582.6,670.4 L580.8,681.3 Z" fill="#81827c" stroke="#81827c" stroke-width="0.6"/>
<path d="M580.8,681.3 L582.6,670.4 L598.1,690.3 L596.3,701.2 Z" fill="#64615a" stroke="#64615a" stroke-width="0.6"/>
<path d="M578.6,663.4 L581.5,652.5 L585.5,659.5 L582.6,670.4 Z" fill="#84857f" stroke="#84857f" stroke-width="0.6"/>
<path d="M582.6,670.4 L585.5,659.5 L601.0,679.4 L598.1,690.3 Z" fill="#686660" stroke="#686660" stroke-width="0.6"/>
<path d="M581.5,652.5 L585.4,641.6 L589.4,648.6 L585.5,659.5 Z" fill="#878882" stroke="#878882" stroke-width="0.6"/>
<path d="M585.5,659.5 L589.4,648.6 L604.9,668.6 L601.0,679.4 Z" fill="#706e68" stroke="#706e68" stroke-width="0.6"/>
<path d="M585.4,641.6 L590.2,630.9 L594.2,637.9 L589.4,648.6 Z" fill="#8a8b85" stroke="#8a8b85" stroke-width="0.6"/>
<path d="M589.4,648.6 L594.2,637.9 L609.7,657.9 L604.9,668.6 Z" fill="#797772" stroke="#797772" stroke-width="0.6"/>
<path d="M590.2,630.9 L596.0,620.5 L600.0,627.5 L594.2,637.9 Z" fill="#8c8e88" stroke="#8c8e88" stroke-width="0.6"/>
<path d="M594.2,637.9 L600.0,627.5 L615.5,647.4 L609.7,657.9 Z" fill="#82817b" stroke="#82817b" stroke-width="0.6"/>
<path d="M596.0,620.5 L602.7,610.4 L606.7,617.4 L600.0,627.5 Z" fill="#8a8c86" stroke="#8a8c86" stroke-width="0.6"/>
<path d="M600.0,627.5 L606.7,617.4 L622.2,637.3 L615.5,647.4 Z" fill="#8c8a85" stroke="#8c8a85" stroke-width="0.6"/>
<path d="M602.7,610.4 L610.3,600.7 L614.3,607.7 L606.7,617.4 Z" fill="#888a84" stroke="#888a84" stroke-width="0.6"/>
<path d="M606.7,617.4 L614.3,607.7 L629.8,627.6 L622.2,637.3 Z" fill="#908f8a" stroke="#908f8a" stroke-width="0.6"/>
<path d="M610.3,600.7 L618.6,591.4 L622.6,598.4 L614.3,607.7 Z" fill="#868882" stroke="#868882" stroke-width="0.6"/>
<path d="M614.3,607.7 L622.6,598.4 L638.1,618.4 L629.8,627.6 Z" fill="#898883" stroke="#898883" stroke-width="0.6"/>
<path d="M618.6,591.4 L627.7,582.7 L631.7,589.7 L622.6,598.4 Z" fill="#848680" stroke="#848680" stroke-width="0.6"/>
<path d="M622.6,598.4 L631.7,589.7 L647.2,609.7 L638.1,618.4 Z" fill="#83827d" stroke="#83827d" stroke-width="0.6"/>
<path d="M627.7,582.7 L637.5,574.7 L641.5,581.7 L631.7,589.7 Z" fill="#83847f" stroke="#83847f" stroke-width="0.6"/>
<path d="M631.7,589.7 L641.5,581.7 L657.0,601.6 L647.2,609.7 Z" fill="#7c7b76" stroke="#7c7b76" stroke-width="0.6"/>
<path d="M637.5,574.7 L647.8,567.3 L651.8,574.3 L641.5,581.7 Z" fill="#797a75" stroke="#797a75" stroke-width="0.6"/>
<path d="M641.5,581.7 L651.8,574.3 L667.3,594.2 L657.0,601.6 Z" fill="#787772" stroke="#787772" stroke-width="0.6"/>
<path d="M647.8,567.3 L658.7,560.7 L662.7,567.7 L651.8,574.3 Z" fill="#6d6d68" stroke="#6d6d68" stroke-width="0.6"/>
<path d="M651.8,574.3 L662.7,567.7 L678.2,587.6 L667.3,594.2 Z" fill="#75746f" stroke="#75746f" stroke-width="0.6"/>
<path d="M658.7,560.7 L670.1,554.8 L674.1,561.8 L662.7,567.7 Z" fill="#605f5a" stroke="#605f5a" stroke-width="0.6"/>
<path d="M662.7,567.7 L674.1,561.8 L689.6,581.7 L678.2,587.6 Z" fill="#72726c" stroke="#72726c" stroke-width="0.6"/>
<path d="M670.1,554.8 L681.8,549.8 L685.8,556.8 L674.1,561.8 Z" fill="#54524d" stroke="#54524d" stroke-width="0.6"/>
<path d="M674.1,561.8 L685.8,556.8 L701.3,576.7 L689.6,581.7 Z" fill="#706f6a" stroke="#706f6a" stroke-width="0.6"/>
<path d="M681.8,549.8 L693.7,545.7 L697.7,552.7 L685.8,556.8 Z" fill="#4c4a45" stroke="#4c4a45" stroke-width="0.6"/>
<path d="M685.8,556.8 L697.7,552.7 L713.2,572.6 L701.3,576.7 Z" fill="#6d6c67" stroke="#6d6c67" stroke-width="0.6"/>
<path d="M693.7,545.7 L705.8,542.5 L709.8,549.5 L697.7,552.7 Z" fill="#4c4a45" stroke="#4c4a45" stroke-width="0.6"/>
<path d="M697.7,552.7 L709.8,549.5 L725.3,569.4 L713.2,572.6 Z" fill="#6a6964" stroke="#6a6964" stroke-width="0.6"/>
<path d="M705.8,542.5 L718.1,540.3 L722.1,547.3 L709.8,549.5 Z" fill="#4c4a45" stroke="#4c4a45" stroke-width="0.6"/>
<path d="M709.8,549.5 L722.1,547.3 L737.6,567.2 L725.3,569.4 Z" fill="#676661" stroke="#676661" stroke-width="0.6"/>
<path d="M718.1,540.3 L730.3,539.0 L734.3,546.0 L722.1,547.3 Z" fill="#4c4a45" stroke="#4c4a45" stroke-width="0.6"/>
<path d="M722.1,547.3 L734.3,546.0 L749.8,565.9 L737.6,567.2 Z" fill="#65645f" stroke="#65645f" stroke-width="0.6"/>
<path d="M730.3,539.0 L742.4,538.7 L746.4,545.7 L734.3,546.0 Z" fill="#4b4944" stroke="#4b4944" stroke-width="0.6"/>
<path d="M734.3,546.0 L746.4,545.7 L761.9,565.6 L749.8,565.9 Z" fill="#63625d" stroke="#63625d" stroke-width="0.6"/>
<path d="M742.4,538.7 L754.4,539.4 L758.4,546.4 L746.4,545.7 Z" fill="#4b4944" stroke="#4b4944" stroke-width="0.6"/>
<path d="M746.4,545.7 L758.4,546.4 L773.9,566.3 L761.9,565.6 Z" fill="#605f5a" stroke="#605f5a" stroke-width="0.6"/>
<path d="M754.4,539.4 L766.1,541.0 L770.1,548.0 L758.4,546.4 Z" fill="#4b4944" stroke="#4b4944" stroke-width="0.6"/>
<path d="M758.4,546.4 L770.1,548.0 L785.6,568.0 L773.9,566.3 Z" fill="#5e5d58" stroke="#5e5d58" stroke-width="0.6"/>
<path d="M766.1,541.0 L777.4,543.7 L781.4,550.7 L770.1,548.0 Z" fill="#4b4944" stroke="#4b4944" stroke-width="0.6"/>
<path d="M770.1,548.0 L781.4,550.7 L796.9,570.6 L785.6,568.0 Z" fill="#5c5b56" stroke="#5c5b56" stroke-width="0.6"/>
<path d="M777.4,543.7 L788.3,547.3 L792.3,554.3 L781.4,550.7 Z" fill="#4b4944" stroke="#4b4944" stroke-width="0.6"/>
<path d="M781.4,550.7 L792.3,554.3 L807.8,574.2 L796.9,570.6 Z" fill="#5a5954" stroke="#5a5954" stroke-width="0.6"/>
<path d="M788.3,547.3 L798.7,551.8 L802.7,558.8 L792.3,554.3 Z" fill="#4b4944" stroke="#4b4944" stroke-width="0.6"/>
<path d="M792.3,554.3 L802.7,558.8 L818.2,578.7 L807.8,574.2 Z" fill="#585752" stroke="#585752" stroke-width="0.6"/>
<path d="M798.7,551.8 L808.4,557.2 L812.4,564.2 L802.7,558.8 Z" fill="#4a4843" stroke="#4a4843" stroke-width="0.6"/>
<path d="M802.7,558.8 L812.4,564.2 L827.9,584.2 L818.2,578.7 Z" fill="#565550" stroke="#565550" stroke-width="0.6"/>
<path d="M808.4,557.2 L817.5,563.5 L821.5,570.5 L812.4,564.2 Z" fill="#4a4843" stroke="#4a4843" stroke-width="0.6"/>
<path d="M812.4,564.2 L821.5,570.5 L837.0,590.4 L827.9,584.2 Z" fill="#54534f" stroke="#54534f" stroke-width="0.6"/>
<path d="M817.5,563.5 L825.9,570.6 L829.9,577.6 L821.5,570.5 Z" fill="#4a4843" stroke="#4a4843" stroke-width="0.6"/>
<path d="M821.5,570.5 L829.9,577.6 L845.4,597.5 L837.0,590.4 Z" fill="#53524d" stroke="#53524d" stroke-width="0.6"/>
<path d="M825.9,570.6 L833.4,578.5 L837.4,585.5 L829.9,577.6 Z" fill="#4a4843" stroke="#4a4843" stroke-width="0.6"/>
<path d="M829.9,577.6 L837.4,585.5 L852.9,605.4 L845.4,597.5 Z" fill="#52514c" stroke="#52514c" stroke-width="0.6"/>
<path d="M833.4,578.5 L840.1,587.0 L844.1,594.0 L837.4,585.5 Z" fill="#4b4944" stroke="#4b4944" stroke-width="0.6"/>
<path d="M837.4,585.5 L844.1,594.0 L859.6,614.0 L852.9,605.4 Z" fill="#504f4b" stroke="#504f4b" stroke-width="0.6"/>
<path d="M840.1,587.0 L845.9,596.3 L849.9,603.3 L844.1,594.0 Z" fill="#4b4944" stroke="#4b4944" stroke-width="0.6"/>
<path d="M844.1,594.0 L849.9,603.3 L865.4,623.2 L859.6,614.0 Z" fill="#4f4e4a" stroke="#4f4e4a" stroke-width="0.6"/>
<path d="M845.9,596.3 L850.8,606.0 L854.8,613.0 L849.9,603.3 Z" fill="#4c4a45" stroke="#4c4a45" stroke-width="0.6"/>
<path d="M849.9,603.3 L854.8,613.0 L870.3,633.0 L865.4,623.2 Z" fill="#504f4b" stroke="#504f4b" stroke-width="0.6"/>
<path d="M850.8,606.0 L854.7,616.3 L858.7,623.3 L854.8,613.0 Z" fill="#4d4b46" stroke="#4d4b46" stroke-width="0.6"/>
<path d="M854.8,613.0 L858.7,623.3 L874.2,643.3 L870.3,633.0 Z" fill="#51504b" stroke="#51504b" stroke-width="0.6"/>
<path d="M854.7,616.3 L857.5,627.1 L861.5,634.1 L858.7,623.3 Z" fill="#4e4c47" stroke="#4e4c47" stroke-width="0.6"/>
<path d="M858.7,623.3 L861.5,634.1 L877.0,654.0 L874.2,643.3 Z" fill="#52514c" stroke="#52514c" stroke-width="0.6"/>
<path d="M857.5,627.1 L859.4,638.2 L863.4,645.2 L861.5,634.1 Z" fill="#4f4d48" stroke="#4f4d48" stroke-width="0.6"/>
<path d="M861.5,634.1 L863.4,645.2 L878.9,665.1 L877.0,654.0 Z" fill="#53524d" stroke="#53524d" stroke-width="0.6"/>
<path d="M859.4,638.2 L860.1,649.5 L864.1,656.5 L863.4,645.2 Z" fill="#504e49" stroke="#504e49" stroke-width="0.6"/>
<path d="M863.4,645.2 L864.1,656.5 L879.6,676.4 L878.9,665.1 Z" fill="#54534e" stroke="#54534e" stroke-width="0.6"/>
<path d="M595.5,712.0 L596.3,701.2 L600.3,708.2 L599.5,719.0 Z" fill="#7e7f79" stroke="#7e7f79" stroke-width="0.6"/>
<path d="M599.5,719.0 L600.3,708.2 L615.8,728.1 L615.0,738.9 Z" fill="#605c54" stroke="#605c54" stroke-width="0.6"/>
<path d="M596.3,701.2 L598.1,690.3 L602.1,697.3 L600.3,708.2 Z" fill="#81827c" stroke="#81827c" stroke-width="0.6"/>
<path d="M600.3,708.2 L602.1,697.3 L617.6,717.2 L615.8,728.1 Z" fill="#64615a" stroke="#64615a" stroke-width="0.6"/>
<path d="M598.1,690.3 L601.0,679.4 L605.0,686.4 L602.1,697.3 Z" fill="#84857f" stroke="#84857f" stroke-width="0.6"/>
<path d="M602.1,697.3 L605.0,686.4 L620.5,706.3 L617.6,717.2 Z" fill="#686660" stroke="#686660" stroke-width="0.6"/>
<path d="M601.0,679.4 L604.9,668.6 L608.9,675.6 L605.0,686.4 Z" fill="#878882" stroke="#878882" stroke-width="0.6"/>
<path d="M605.0,686.4 L608.9,675.6 L624.4,695.5 L620.5,706.3 Z" fill="#706e68" stroke="#706e68" stroke-width="0.6"/>
<path d="M604.9,668.6 L609.7,657.9 L613.7,664.9 L608.9,675.6 Z" fill="#8a8b85" stroke="#8a8b85" stroke-width="0.6"/>
<path d="M608.9,675.6 L613.7,664.9 L629.2,684.8 L624.4,695.5 Z" fill="#797772" stroke="#797772" stroke-width="0.6"/>
<path d="M609.7,657.9 L615.5,647.4 L619.5,654.4 L613.7,664.9 Z" fill="#8c8e88" stroke="#8c8e88" stroke-width="0.6"/>
<path d="M613.7,664.9 L619.5,654.4 L635.0,674.4 L629.2,684.8 Z" fill="#82817b" stroke="#82817b" stroke-width="0.6"/>
<path d="M615.5,647.4 L622.2,637.3 L626.2,644.3 L619.5,654.4 Z" fill="#8a8c86" stroke="#8a8c86" stroke-width="0.6"/>
<path d="M619.5,654.4 L626.2,644.3 L641.7,664.2 L635.0,674.4 Z" fill="#8c8a85" stroke="#8c8a85" stroke-width="0.6"/>
<path d="M622.2,637.3 L629.8,627.6 L633.8,634.6 L626.2,644.3 Z" fill="#888a84" stroke="#888a84" stroke-width="0.6"/>
<path d="M626.2,644.3 L633.8,634.6 L649.3,654.5 L641.7,664.2 Z" fill="#908f8a" stroke="#908f8a" stroke-width="0.6"/>
<path d="M629.8,627.6 L638.1,618.4 L642.1,625.4 L633.8,634.6 Z" fill="#868882" stroke="#868882" stroke-width="0.6"/>
<path d="M633.8,634.6 L642.1,625.4 L657.6,645.3 L649.3,654.5 Z" fill="#898883" stroke="#898883" stroke-width="0.6"/>
<path d="M638.1,618.4 L647.2,609.7 L651.2,616.7 L642.1,625.4 Z" fill="#848680" stroke="#848680" stroke-width="0.6"/>
<path d="M642.1,625.4 L651.2,616.7 L666.7,636.6 L657.6,645.3 Z" fill="#83827d" stroke="#83827d" stroke-width="0.6"/>
<path d="M647.2,609.7 L657.0,601.6 L661.0,608.6 L651.2,616.7 Z" fill="#83847f" stroke="#83847f" stroke-width="0.6"/>
<path d="M651.2,616.7 L661.0,608.6 L676.5,628.5 L666.7,636.6 Z" fill="#7c7b76" stroke="#7c7b76" stroke-width="0.6"/>
<path d="M657.0,601.6 L667.3,594.2 L671.3,601.2 L661.0,608.6 Z" fill="#797a75" stroke="#797a75" stroke-width="0.6"/>
<path d="M661.0,608.6 L671.3,601.2 L686.8,621.2 L676.5,628.5 Z" fill="#787772" stroke="#787772" stroke-width="0.6"/>
<path d="M667.3,594.2 L678.2,587.6 L682.2,594.6 L671.3,601.2 Z" fill="#6d6d68" stroke="#6d6d68" stroke-width="0.6"/>
<path d="M671.3,601.2 L682.2,594.6 L697.7,614.5 L686.8,621.2 Z" fill="#75746f" stroke="#75746f" stroke-width="0.6"/>
<path d="M678.2,587.6 L689.6,581.7 L693.6,588.7 L682.2,594.6 Z" fill="#605f5a" stroke="#605f5a" stroke-width="0.6"/>
<path d="M682.2,594.6 L693.6,588.7 L709.1,608.7 L697.7,614.5 Z" fill="#72726c" stroke="#72726c" stroke-width="0.6"/>
<path d="M689.6,581.7 L701.3,576.7 L705.3,583.7 L693.6,588.7 Z" fill="#54524d" stroke="#54524d" stroke-width="0.6"/>
<path d="M693.6,588.7 L705.3,583.7 L720.8,603.7 L709.1,608.7 Z" fill="#706f6a" stroke="#706f6a" stroke-width="0.6"/>
<path d="M701.3,576.7 L713.2,572.6 L717.2,579.6 L705.3,583.7 Z" fill="#4c4a45" stroke="#4c4a45" stroke-width="0.6"/>
<path d="M705.3,583.7 L717.2,579.6 L732.7,599.6 L720.8,603.7 Z" fill="#6d6c67" stroke="#6d6c67" stroke-width="0.6"/>
<path d="M713.2,572.6 L725.3,569.4 L729.3,576.4 L717.2,579.6 Z" fill="#4c4a45" stroke="#4c4a45" stroke-width="0.6"/>
<path d="M717.2,579.6 L729.3,576.4 L744.8,596.4 L732.7,599.6 Z" fill="#6a6964" stroke="#6a6964" stroke-width="0.6"/>
<path d="M725.3,569.4 L737.6,567.2 L741.6,574.2 L729.3,576.4 Z" fill="#4c4a45" stroke="#4c4a45" stroke-width="0.6"/>
<path d="M729.3,576.4 L741.6,574.2 L757.1,594.1 L744.8,596.4 Z" fill="#676661" stroke="#676661" stroke-width="0.6"/>
<path d="M737.6,567.2 L749.8,565.9 L753.8,572.9 L741.6,574.2 Z" fill="#4c4a45" stroke="#4c4a45" stroke-width="0.6"/>
<path d="M741.6,574.2 L753.8,572.9 L769.3,592.9 L757.1,594.1 Z" fill="#65645f" stroke="#65645f" stroke-width="0.6"/>
<path d="M749.8,565.9 L761.9,565.6 L765.9,572.6 L753.8,572.9 Z" fill="#4b4944" stroke="#4b4944" stroke-width="0.6"/>
<path d="M753.8,572.9 L765.9,572.6 L781.4,592.6 L769.3,592.9 Z" fill="#63625d" stroke="#63625d" stroke-width="0.6"/>
<path d="M761.9,565.6 L773.9,566.3 L777.9,573.3 L765.9,572.6 Z" fill="#4b4944" stroke="#4b4944" stroke-width="0.6"/>
<path d="M765.9,572.6 L777.9,573.3 L793.4,593.2 L781.4,592.6 Z" fill="#605f5a" stroke="#605f5a" stroke-width="0.6"/>
<path d="M773.9,566.3 L785.6,568.0 L789.6,575.0 L777.9,573.3 Z" fill="#4b4944" stroke="#4b4944" stroke-width="0.6"/>
<path d="M777.9,573.3 L789.6,575.0 L805.1,594.9 L793.4,593.2 Z" fill="#5e5d58" stroke="#5e5d58" stroke-width="0.6"/>
<path d="M785.6,568.0 L796.9,570.6 L800.9,577.6 L789.6,575.0 Z" fill="#4b4944" stroke="#4b4944" stroke-width="0.6"/>
<path d="M789.6,575.0 L800.9,577.6 L816.4,597.5 L805.1,594.9 Z" fill="#5c5b56" stroke="#5c5b56" stroke-width="0.6"/>
<path d="M796.9,570.6 L807.8,574.2 L811.8,581.2 L800.9,577.6 Z" fill="#4b4944" stroke="#4b4944" stroke-width="0.6"/>
<path d="M800.9,577.6 L811.8,581.2 L827.3,601.1 L816.4,597.5 Z" fill="#5a5954" stroke="#5a5954" stroke-width="0.6"/>
<path d="M807.8,574.2 L818.2,578.7 L822.2,585.7 L811.8,581.2 Z" fill="#4b4944" stroke="#4b4944" stroke-width="0.6"/>
<path d="M811.8,581.2 L822.2,585.7 L837.7,605.7 L827.3,601.1 Z" fill="#585752" stroke="#585752" stroke-width="0.6"/>
<path d="M818.2,578.7 L827.9,584.2 L831.9,591.2 L822.2,585.7 Z" fill="#4a4843" stroke="#4a4843" stroke-width="0.6"/>
<path d="M822.2,585.7 L831.9,591.2 L847.4,611.1 L837.7,605.7 Z" fill="#565550" stroke="#565550" stroke-width="0.6"/>
<path d="M827.9,584.2 L837.0,590.4 L841.0,597.4 L831.9,591.2 Z" fill="#4a4843" stroke="#4a4843" stroke-width="0.6"/>
<path d="M831.9,591.2 L841.0,597.4 L856.5,617.4 L847.4,611.1 Z" fill="#54534f" stroke="#54534f" stroke-width="0.6"/>
<path d="M837.0,590.4 L845.4,597.5 L849.4,604.5 L841.0,597.4 Z" fill="#4a4843" stroke="#4a4843" stroke-width="0.6"/>
<path d="M841.0,597.4 L849.4,604.5 L864.9,624.5 L856.5,617.4 Z" fill="#53524d" stroke="#53524d" stroke-width="0.6"/>
<path d="M845.4,597.5 L852.9,605.4 L856.9,612.4 L849.4,604.5 Z" fill="#4a4843" stroke="#4a4843" stroke-width="0.6"/>
<path d="M849.4,604.5 L856.9,612.4 L872.4,632.3 L864.9,624.5 Z" fill="#52514c" stroke="#52514c" stroke-width="0.6"/>
<path d="M852.9,605.4 L859.6,614.0 L863.6,621.0 L856.9,612.4 Z" fill="#4b4944" stroke="#4b4944" stroke-width="0.6"/>
<path d="M856.9,612.4 L863.6,621.0 L879.1,640.9 L872.4,632.3 Z" fill="#504f4b" stroke="#504f4b" stroke-width="0.6"/>
<path d="M859.6,614.0 L865.4,623.2 L869.4,630.2 L863.6,621.0 Z" fill="#4b4944" stroke="#4b4944" stroke-width="0.6"/>
<path d="M863.6,621.0 L869.4,630.2 L884.9,650.1 L879.1,640.9 Z" fill="#4f4e4a" stroke="#4f4e4a" stroke-width="0.6"/>
<path d="M865.4,623.2 L870.3,633.0 L874.3,640.0 L869.4,630.2 Z" fill="#4c4a45" stroke="#4c4a45" stroke-width="0.6"/>
<path d="M869.4,630.2 L874.3,640.0 L889.8,659.9 L884.9,650.1 Z" fill="#504f4b" stroke="#504f4b" stroke-width="0.6"/>
<path d="M870.3,633.0 L874.2,643.3 L878.2,650.3 L874.3,640.0 Z" fill="#4d4b46" stroke="#4d4b46" stroke-width="0.6"/>
<path d="M874.3,640.0 L878.2,650.3 L893.7,670.2 L889.8,659.9 Z" fill="#51504b" stroke="#51504b" stroke-width="0.6"/>
<path d="M874.2,643.3 L877.0,654.0 L881.0,661.0 L878.2,650.3 Z" fill="#4e4c47" stroke="#4e4c47" stroke-width="0.6"/>
<path d="M878.2,650.3 L881.0,661.0 L896.5,680.9 L893.7,670.2 Z" fill="#52514c" stroke="#52514c" stroke-width="0.6"/>
<path d="M877.0,654.0 L878.9,665.1 L882.9,672.1 L881.0,661.0 Z" fill="#4f4d48" stroke="#4f4d48" stroke-width="0.6"/>
<path d="M881.0,661.0 L882.9,672.1 L898.4,692.0 L896.5,680.9 Z" fill="#53524d" stroke="#53524d" stroke-width="0.6"/>
<path d="M878.9,665.1 L879.6,676.4 L883.6,683.4 L882.9,672.1 Z" fill="#504e49" stroke="#504e49" stroke-width="0.6"/>
<path d="M882.9,672.1 L883.6,683.4 L899.1,703.4 L898.4,692.0 Z" fill="#54534e" stroke="#54534e" stroke-width="0.6"/>
<path d="M615.0,738.9 L615.8,728.1 L619.8,735.1 L619.0,745.9 Z" fill="#7e7f79" stroke="#7e7f79" stroke-width="0.6"/>
<path d="M619.0,745.9 L619.8,735.1 L635.3,755.0 L634.5,765.8 Z" fill="#605c54" stroke="#605c54" stroke-width="0.6"/>
<path d="M615.8,728.1 L617.6,717.2 L621.6,724.2 L619.8,735.1 Z" fill="#81827c" stroke="#81827c" stroke-width="0.6"/>
<path d="M619.8,735.1 L621.6,724.2 L637.1,744.2 L635.3,755.0 Z" fill="#64615a" stroke="#64615a" stroke-width="0.6"/>
<path d="M617.6,717.2 L620.5,706.3 L624.5,713.3 L621.6,724.2 Z" fill="#84857f" stroke="#84857f" stroke-width="0.6"/>
<path d="M621.6,724.2 L624.5,713.3 L640.0,733.2 L637.1,744.2 Z" fill="#686660" stroke="#686660" stroke-width="0.6"/>
<path d="M620.5,706.3 L624.4,695.5 L628.4,702.5 L624.5,713.3 Z" fill="#878882" stroke="#878882" stroke-width="0.6"/>
<path d="M624.5,713.3 L628.4,702.5 L643.9,722.4 L640.0,733.2 Z" fill="#706e68" stroke="#706e68" stroke-width="0.6"/>
<path d="M624.4,695.5 L629.2,684.8 L633.2,691.8 L628.4,702.5 Z" fill="#8a8b85" stroke="#8a8b85" stroke-width="0.6"/>
<path d="M628.4,702.5 L633.2,691.8 L648.7,711.7 L643.9,722.4 Z" fill="#797772" stroke="#797772" stroke-width="0.6"/>
<path d="M629.2,684.8 L635.0,674.4 L639.0,681.4 L633.2,691.8 Z" fill="#8c8e88" stroke="#8c8e88" stroke-width="0.6"/>
<path d="M633.2,691.8 L639.0,681.4 L654.5,701.3 L648.7,711.7 Z" fill="#82817b" stroke="#82817b" stroke-width="0.6"/>
<path d="M635.0,674.4 L641.7,664.2 L645.7,671.2 L639.0,681.4 Z" fill="#8a8c86" stroke="#8a8c86" stroke-width="0.6"/>
<path d="M639.0,681.4 L645.7,671.2 L661.2,691.2 L654.5,701.3 Z" fill="#8c8a85" stroke="#8c8a85" stroke-width="0.6"/>
<path d="M641.7,664.2 L649.3,654.5 L653.3,661.5 L645.7,671.2 Z" fill="#888a84" stroke="#888a84" stroke-width="0.6"/>
<path d="M645.7,671.2 L653.3,661.5 L668.8,681.5 L661.2,691.2 Z" fill="#908f8a" stroke="#908f8a" stroke-width="0.6"/>
<path d="M649.3,654.5 L657.6,645.3 L661.6,652.3 L653.3,661.5 Z" fill="#868882" stroke="#868882" stroke-width="0.6"/>
<path d="M653.3,661.5 L661.6,652.3 L677.1,672.2 L668.8,681.5 Z" fill="#898883" stroke="#898883" stroke-width="0.6"/>
<path d="M657.6,645.3 L666.7,636.6 L670.7,643.6 L661.6,652.3 Z" fill="#848680" stroke="#848680" stroke-width="0.6"/>
<path d="M661.6,652.3 L670.7,643.6 L686.2,663.5 L677.1,672.2 Z" fill="#83827d" stroke="#83827d" stroke-width="0.6"/>
<path d="M666.7,636.6 L676.5,628.5 L680.5,635.5 L670.7,643.6 Z" fill="#83847f" stroke="#83847f" stroke-width="0.6"/>
<path d="M670.7,643.6 L680.5,635.5 L696.0,655.5 L686.2,663.5 Z" fill="#7c7b76" stroke="#7c7b76" stroke-width="0.6"/>
<path d="M676.5,628.5 L686.8,621.2 L690.8,628.2 L680.5,635.5 Z" fill="#797a75" stroke="#797a75" stroke-width="0.6"/>
<path d="M680.5,635.5 L690.8,628.2 L706.3,648.1 L696.0,655.5 Z" fill="#787772" stroke="#787772" stroke-width="0.6"/>
<path d="M686.8,621.2 L697.7,614.5 L701.7,621.5 L690.8,628.2 Z" fill="#6d6d68" stroke="#6d6d68" stroke-width="0.6"/>
<path d="M690.8,628.2 L701.7,621.5 L717.2,641.4 L706.3,648.1 Z" fill="#75746f" stroke="#75746f" stroke-width="0.6"/>
<path d="M697.7,614.5 L709.1,608.7 L713.1,615.7 L701.7,621.5 Z" fill="#605f5a" stroke="#605f5a" stroke-width="0.6"/>
<path d="M701.7,621.5 L713.1,615.7 L728.6,635.6 L717.2,641.4 Z" fill="#72726c" stroke="#72726c" stroke-width="0.6"/>
<path d="M709.1,608.7 L720.8,603.7 L724.8,610.7 L713.1,615.7 Z" fill="#54524d" stroke="#54524d" stroke-width="0.6"/>
<path d="M713.1,615.7 L724.8,610.7 L740.3,630.6 L728.6,635.6 Z" fill="#706f6a" stroke="#706f6a" stroke-width="0.6"/>
<path d="M720.8,603.7 L732.7,599.6 L736.7,606.6 L724.8,610.7 Z" fill="#4c4a45" stroke="#4c4a45" stroke-width="0.6"/>
<path d="M724.8,610.7 L736.7,606.6 L752.2,626.5 L740.3,630.6 Z" fill="#6d6c67" stroke="#6d6c67" stroke-width="0.6"/>
<path d="M732.7,599.6 L744.8,596.4 L748.8,603.4 L736.7,606.6 Z" fill="#4c4a45" stroke="#4c4a45" stroke-width="0.6"/>
<path d="M736.7,606.6 L748.8,603.4 L764.3,623.3 L752.2,626.5 Z" fill="#6a6964" stroke="#6a6964" stroke-width="0.6"/>
<path d="M744.8,596.4 L757.1,594.1 L761.1,601.1 L748.8,603.4 Z" fill="#4c4a45" stroke="#4c4a45" stroke-width="0.6"/>
<path d="M748.8,603.4 L761.1,601.1 L776.6,621.1 L764.3,623.3 Z" fill="#676661" stroke="#676661" stroke-width="0.6"/>
<path d="M757.1,594.1 L769.3,592.9 L773.3,599.9 L761.1,601.1 Z" fill="#4c4a45" stroke="#4c4a45" stroke-width="0.6"/>
<path d="M761.1,601.1 L773.3,599.9 L788.8,619.8 L776.6,621.1 Z" fill="#65645f" stroke="#65645f" stroke-width="0.6"/>
<path d="M769.3,592.9 L781.4,592.6 L785.4,599.6 L773.3,599.9 Z" fill="#4b4944" stroke="#4b4944" stroke-width="0.6"/>
<path d="M773.3,599.9 L785.4,599.6 L800.9,619.5 L788.8,619.8 Z" fill="#63625d" stroke="#63625d" stroke-width="0.6"/>
<path d="M781.4,592.6 L793.4,593.2 L797.4,600.2 L785.4,599.6 Z" fill="#4b4944" stroke="#4b4944" stroke-width="0.6"/>
<path d="M785.4,599.6 L797.4,600.2 L812.9,620.2 L800.9,619.5 Z" fill="#605f5a" stroke="#605f5a" stroke-width="0.6"/>
<path d="M793.4,593.2 L805.1,594.9 L809.1,601.9 L797.4,600.2 Z" fill="#4b4944" stroke="#4b4944" stroke-width="0.6"/>
<path d="M797.4,600.2 L809.1,601.9 L824.6,621.8 L812.9,620.2 Z" fill="#5e5d58" stroke="#5e5d58" stroke-width="0.6"/>
<path d="M805.1,594.9 L816.4,597.5 L820.4,604.5 L809.1,601.9 Z" fill="#4b4944" stroke="#4b4944" stroke-width="0.6"/>
<path d="M809.1,601.9 L820.4,604.5 L835.9,624.5 L824.6,621.8 Z" fill="#5c5b56" stroke="#5c5b56" stroke-width="0.6"/>
<path d="M816.4,597.5 L827.3,601.1 L831.3,608.1 L820.4,604.5 Z" fill="#4b4944" stroke="#4b4944" stroke-width="0.6"/>
<path d="M820.4,604.5 L831.3,608.1 L846.8,628.1 L835.9,624.5 Z" fill="#5a5954" stroke="#5a5954" stroke-width="0.6"/>
<path d="M827.3,601.1 L837.7,605.7 L841.7,612.7 L831.3,608.1 Z" fill="#4b4944" stroke="#4b4944" stroke-width="0.6"/>
<path d="M831.3,608.1 L841.7,612.7 L857.2,632.6 L846.8,628.1 Z" fill="#585752" stroke="#585752" stroke-width="0.6"/>
<path d="M837.7,605.7 L847.4,611.1 L851.4,618.1 L841.7,612.7 Z" fill="#4a4843" stroke="#4a4843" stroke-width="0.6"/>
<path d="M841.7,612.7 L851.4,618.1 L866.9,638.0 L857.2,632.6 Z" fill="#565550" stroke="#565550" stroke-width="0.6"/>
<path d="M847.4,611.1 L856.5,617.4 L860.5,624.4 L851.4,618.1 Z" fill="#4a4843" stroke="#4a4843" stroke-width="0.6"/>
<path d="M851.4,618.1 L860.5,624.4 L876.0,644.3 L866.9,638.0 Z" fill="#54534f" stroke="#54534f" stroke-width="0.6"/>
<path d="M856.5,617.4 L864.9,624.5 L868.9,631.5 L860.5,624.4 Z" fill="#4a4843" stroke="#4a4843" stroke-width="0.6"/>
<path d="M860.5,624.4 L868.9,631.5 L884.4,651.4 L876.0,644.3 Z" fill="#53524d" stroke="#53524d" stroke-width="0.6"/>
<path d="M864.9,624.5 L872.4,632.3 L876.4,639.3 L868.9,631.5 Z" fill="#4a4843" stroke="#4a4843" stroke-width="0.6"/>
<path d="M868.9,631.5 L876.4,639.3 L891.9,659.3 L884.4,651.4 Z" fill="#52514c" stroke="#52514c" stroke-width="0.6"/>
<path d="M872.4,632.3 L879.1,640.9 L883.1,647.9 L876.4,639.3 Z" fill="#4b4944" stroke="#4b4944" stroke-width="0.6"/>
<path d="M876.4,639.3 L883.1,647.9 L898.6,667.8 L891.9,659.3 Z" fill="#504f4b" stroke="#504f4b" stroke-width="0.6"/>
<path d="M879.1,640.9 L884.9,650.1 L888.9,657.1 L883.1,647.9 Z" fill="#4b4944" stroke="#4b4944" stroke-width="0.6"/>
<path d="M883.1,647.9 L888.9,657.1 L904.4,677.0 L898.6,667.8 Z" fill="#4f4e4a" stroke="#4f4e4a" stroke-width="0.6"/>
<path d="M884.9,650.1 L889.8,659.9 L893.8,666.9 L888.9,657.1 Z" fill="#4c4a45" stroke="#4c4a45" stroke-width="0.6"/>
<path d="M888.9,657.1 L893.8,666.9 L909.3,686.8 L904.4,677.0 Z" fill="#504f4b" stroke="#504f4b" stroke-width="0.6"/>
<path d="M889.8,659.9 L893.7,670.2 L897.7,677.2 L893.8,666.9 Z" fill="#4d4b46" stroke="#4d4b46" stroke-width="0.6"/>
<path d="M893.8,666.9 L897.7,677.2 L913.2,697.1 L909.3,686.8 Z" fill="#51504b" stroke="#51504b" stroke-width="0.6"/>
<path d="M893.7,670.2 L896.5,680.9 L900.5,687.9 L897.7,677.2 Z" fill="#4e4c47" stroke="#4e4c47" stroke-width="0.6"/>
<path d="M897.7,677.2 L900.5,687.9 L916.0,707.9 L913.2,697.1 Z" fill="#52514c" stroke="#52514c" stroke-width="0.6"/>
<path d="M896.5,680.9 L898.4,692.0 L902.4,699.0 L900.5,687.9 Z" fill="#4f4d48" stroke="#4f4d48" stroke-width="0.6"/>
<path d="M900.5,687.9 L902.4,699.0 L917.9,718.9 L916.0,707.9 Z" fill="#53524d" stroke="#53524d" stroke-width="0.6"/>
<path d="M898.4,692.0 L899.1,703.4 L903.1,710.4 L902.4,699.0 Z" fill="#504e49" stroke="#504e49" stroke-width="0.6"/>
<path d="M902.4,699.0 L903.1,710.4 L918.6,730.3 L917.9,718.9 Z" fill="#54534e" stroke="#54534e" stroke-width="0.6"/>
<path d="M634.5,765.8 L635.3,755.0 L639.3,762.0 L638.5,772.8 Z" fill="#7e7f79" stroke="#7e7f79" stroke-width="0.6"/>
<path d="M638.5,772.8 L639.3,762.0 L654.8,782.0 L654.0,792.8 Z" fill="#605c54" stroke="#605c54" stroke-width="0.6"/>
<path d="M635.3,755.0 L637.1,744.2 L641.1,751.2 L639.3,762.0 Z" fill="#81827c" stroke="#81827c" stroke-width="0.6"/>
<path d="M639.3,762.0 L641.1,751.2 L656.6,771.1 L654.8,782.0 Z" fill="#64615a" stroke="#64615a" stroke-width="0.6"/>
<path d="M637.1,744.2 L640.0,733.2 L644.0,740.2 L641.1,751.2 Z" fill="#84857f" stroke="#84857f" stroke-width="0.6"/>
<path d="M641.1,751.2 L644.0,740.2 L659.5,760.2 L656.6,771.1 Z" fill="#686660" stroke="#686660" stroke-width="0.6"/>
<path d="M640.0,733.2 L643.9,722.4 L647.9,729.4 L644.0,740.2 Z" fill="#878882" stroke="#878882" stroke-width="0.6"/>
<path d="M644.0,740.2 L647.9,729.4 L663.4,749.3 L659.5,760.2 Z" fill="#706e68" stroke="#706e68" stroke-width="0.6"/>
<path d="M643.9,722.4 L648.7,711.7 L652.7,718.7 L647.9,729.4 Z" fill="#8a8b85" stroke="#8a8b85" stroke-width="0.6"/>
<path d="M647.9,729.4 L652.7,718.7 L668.2,738.7 L663.4,749.3 Z" fill="#797772" stroke="#797772" stroke-width="0.6"/>
<path d="M648.7,711.7 L654.5,701.3 L658.5,708.3 L652.7,718.7 Z" fill="#8c8e88" stroke="#8c8e88" stroke-width="0.6"/>
<path d="M652.7,718.7 L658.5,708.3 L674.0,728.2 L668.2,738.7 Z" fill="#82817b" stroke="#82817b" stroke-width="0.6"/>
<path d="M654.5,701.3 L661.2,691.2 L665.2,698.2 L658.5,708.3 Z" fill="#8a8c86" stroke="#8a8c86" stroke-width="0.6"/>
<path d="M658.5,708.3 L665.2,698.2 L680.7,718.1 L674.0,728.2 Z" fill="#8c8a85" stroke="#8c8a85" stroke-width="0.6"/>
<path d="M661.2,691.2 L668.8,681.5 L672.8,688.5 L665.2,698.2 Z" fill="#888a84" stroke="#888a84" stroke-width="0.6"/>
<path d="M665.2,698.2 L672.8,688.5 L688.3,708.4 L680.7,718.1 Z" fill="#908f8a" stroke="#908f8a" stroke-width="0.6"/>
<path d="M668.8,681.5 L677.1,672.2 L681.1,679.2 L672.8,688.5 Z" fill="#868882" stroke="#868882" stroke-width="0.6"/>
<path d="M672.8,688.5 L681.1,679.2 L696.6,699.1 L688.3,708.4 Z" fill="#898883" stroke="#898883" stroke-width="0.6"/>
<path d="M677.1,672.2 L686.2,663.5 L690.2,670.5 L681.1,679.2 Z" fill="#848680" stroke="#848680" stroke-width="0.6"/>
<path d="M681.1,679.2 L690.2,670.5 L705.7,690.5 L696.6,699.1 Z" fill="#83827d" stroke="#83827d" stroke-width="0.6"/>
<path d="M686.2,663.5 L696.0,655.5 L700.0,662.5 L690.2,670.5 Z" fill="#83847f" stroke="#83847f" stroke-width="0.6"/>
<path d="M690.2,670.5 L700.0,662.5 L715.5,682.4 L705.7,690.5 Z" fill="#7c7b76" stroke="#7c7b76" stroke-width="0.6"/>
<path d="M696.0,655.5 L706.3,648.1 L710.3,655.1 L700.0,662.5 Z" fill="#797a75" stroke="#797a75" stroke-width="0.6"/>
<path d="M700.0,662.5 L710.3,655.1 L725.8,675.0 L715.5,682.4 Z" fill="#787772" stroke="#787772" stroke-width="0.6"/>
<path d="M706.3,648.1 L717.2,641.4 L721.2,648.4 L710.3,655.1 Z" fill="#6d6d68" stroke="#6d6d68" stroke-width="0.6"/>
<path d="M710.3,655.1 L721.2,648.4 L736.7,668.4 L725.8,675.0 Z" fill="#75746f" stroke="#75746f" stroke-width="0.6"/>
<path d="M717.2,641.4 L728.6,635.6 L732.6,642.6 L721.2,648.4 Z" fill="#605f5a" stroke="#605f5a" stroke-width="0.6"/>
<path d="M721.2,648.4 L732.6,642.6 L748.1,662.5 L736.7,668.4 Z" fill="#72726c" stroke="#72726c" stroke-width="0.6"/>
<path d="M728.6,635.6 L740.3,630.6 L744.3,637.6 L732.6,642.6 Z" fill="#54524d" stroke="#54524d" stroke-width="0.6"/>
<path d="M732.6,642.6 L744.3,637.6 L759.8,657.5 L748.1,662.5 Z" fill="#706f6a" stroke="#706f6a" stroke-width="0.6"/>
<path d="M740.3,630.6 L752.2,626.5 L756.2,633.5 L744.3,637.6 Z" fill="#4c4a45" stroke="#4c4a45" stroke-width="0.6"/>
<path d="M744.3,637.6 L756.2,633.5 L771.7,653.4 L759.8,657.5 Z" fill="#6d6c67" stroke="#6d6c67" stroke-width="0.6"/>
<path d="M752.2,626.5 L764.3,623.3 L768.3,630.3 L756.2,633.5 Z" fill="#4c4a45" stroke="#4c4a45" stroke-width="0.6"/>
<path d="M756.2,633.5 L768.3,630.3 L783.8,650.2 L771.7,653.4 Z" fill="#6a6964" stroke="#6a6964" stroke-width="0.6"/>
<path d="M764.3,623.3 L776.6,621.1 L780.6,628.1 L768.3,630.3 Z" fill="#4c4a45" stroke="#4c4a45" stroke-width="0.6"/>
<path d="M768.3,630.3 L780.6,628.1 L796.1,648.0 L783.8,650.2 Z" fill="#676661" stroke="#676661" stroke-width="0.6"/>
<path d="M776.6,621.1 L788.8,619.8 L792.8,626.8 L780.6,628.1 Z" fill="#4c4a45" stroke="#4c4a45" stroke-width="0.6"/>
<path d="M780.6,628.1 L792.8,626.8 L808.3,646.7 L796.1,648.0 Z" fill="#65645f" stroke="#65645f" stroke-width="0.6"/>
<path d="M788.8,619.8 L800.9,619.5 L804.9,626.5 L792.8,626.8 Z" fill="#4b4944" stroke="#4b4944" stroke-width="0.6"/>
<path d="M792.8,626.8 L804.9,626.5 L820.4,646.4 L808.3,646.7 Z" fill="#63625d" stroke="#63625d" stroke-width="0.6"/>
<path d="M800.9,619.5 L812.9,620.2 L816.9,627.2 L804.9,626.5 Z" fill="#4b4944" stroke="#4b4944" stroke-width="0.6"/>
<path d="M804.9,626.5 L816.9,627.2 L832.4,647.1 L820.4,646.4 Z" fill="#605f5a" stroke="#605f5a" stroke-width="0.6"/>
<path d="M812.9,620.2 L824.6,621.8 L828.6,628.8 L816.9,627.2 Z" fill="#4b4944" stroke="#4b4944" stroke-width="0.6"/>
<path d="M816.9,627.2 L828.6,628.8 L844.1,648.8 L832.4,647.1 Z" fill="#5e5d58" stroke="#5e5d58" stroke-width="0.6"/>
<path d="M824.6,621.8 L835.9,624.5 L839.9,631.5 L828.6,628.8 Z" fill="#4b4944" stroke="#4b4944" stroke-width="0.6"/>
<path d="M828.6,628.8 L839.9,631.5 L855.4,651.4 L844.1,648.8 Z" fill="#5c5b56" stroke="#5c5b56" stroke-width="0.6"/>
<path d="M835.9,624.5 L846.8,628.1 L850.8,635.1 L839.9,631.5 Z" fill="#4b4944" stroke="#4b4944" stroke-width="0.6"/>
<path d="M839.9,631.5 L850.8,635.1 L866.3,655.0 L855.4,651.4 Z" fill="#5a5954" stroke="#5a5954" stroke-width="0.6"/>
<path d="M846.8,628.1 L857.2,632.6 L861.2,639.6 L850.8,635.1 Z" fill="#4b4944" stroke="#4b4944" stroke-width="0.6"/>
<path d="M850.8,635.1 L861.2,639.6 L876.7,659.5 L866.3,655.0 Z" fill="#585752" stroke="#585752" stroke-width="0.6"/>
<path d="M857.2,632.6 L866.9,638.0 L870.9,645.0 L861.2,639.6 Z" fill="#4a4843" stroke="#4a4843" stroke-width="0.6"/>
<path d="M861.2,639.6 L870.9,645.0 L886.4,664.9 L876.7,659.5 Z" fill="#565550" stroke="#565550" stroke-width="0.6"/>
<path d="M866.9,638.0 L876.0,644.3 L880.0,651.3 L870.9,645.0 Z" fill="#4a4843" stroke="#4a4843" stroke-width="0.6"/>
<path d="M870.9,645.0 L880.0,651.3 L895.5,671.2 L886.4,664.9 Z" fill="#54534f" stroke="#54534f" stroke-width="0.6"/>
<path d="M876.0,644.3 L884.4,651.4 L888.4,658.4 L880.0,651.3 Z" fill="#4a4843" stroke="#4a4843" stroke-width="0.6"/>
<path d="M880.0,651.3 L888.4,658.4 L903.9,678.3 L895.5,671.2 Z" fill="#53524d" stroke="#53524d" stroke-width="0.6"/>
<path d="M884.4,651.4 L891.9,659.3 L895.9,666.3 L888.4,658.4 Z" fill="#4a4843" stroke="#4a4843" stroke-width="0.6"/>
<path d="M888.4,658.4 L895.9,666.3 L911.4,686.2 L903.9,678.3 Z" fill="#52514c" stroke="#52514c" stroke-width="0.6"/>
<path d="M891.9,659.3 L898.6,667.8 L902.6,674.8 L895.9,666.3 Z" fill="#4b4944" stroke="#4b4944" stroke-width="0.6"/>
<path d="M895.9,666.3 L902.6,674.8 L918.1,694.8 L911.4,686.2 Z" fill="#504f4b" stroke="#504f4b" stroke-width="0.6"/>
<path d="M898.6,667.8 L904.4,677.0 L908.4,684.0 L902.6,674.8 Z" fill="#4b4944" stroke="#4b4944" stroke-width="0.6"/>
<path d="M902.6,674.8 L908.4,684.0 L923.9,704.0 L918.1,694.8 Z" fill="#4f4e4a" stroke="#4f4e4a" stroke-width="0.6"/>
<path d="M904.4,677.0 L909.3,686.8 L913.3,693.8 L908.4,684.0 Z" fill="#4c4a45" stroke="#4c4a45" stroke-width="0.6"/>
<path d="M908.4,684.0 L913.3,693.8 L928.8,713.8 L923.9,704.0 Z" fill="#504f4b" stroke="#504f4b" stroke-width="0.6"/>
<path d="M909.3,686.8 L913.2,697.1 L917.2,704.1 L913.3,693.8 Z" fill="#4d4b46" stroke="#4d4b46" stroke-width="0.6"/>
<path d="M913.3,693.8 L917.2,704.1 L932.7,724.1 L928.8,713.8 Z" fill="#51504b" stroke="#51504b" stroke-width="0.6"/>
<path d="M913.2,697.1 L916.0,707.9 L920.0,714.9 L917.2,704.1 Z" fill="#4e4c47" stroke="#4e4c47" stroke-width="0.6"/>
<path d="M917.2,704.1 L920.0,714.9 L935.5,734.8 L932.7,724.1 Z" fill="#52514c" stroke="#52514c" stroke-width="0.6"/>
<path d="M916.0,707.9 L917.9,718.9 L921.9,725.9 L920.0,714.9 Z" fill="#4f4d48" stroke="#4f4d48" stroke-width="0.6"/>
<path d="M920.0,714.9 L921.9,725.9 L937.4,745.9 L935.5,734.8 Z" fill="#53524d" stroke="#53524d" stroke-width="0.6"/>
<path d="M917.9,718.9 L918.6,730.3 L922.6,737.3 L921.9,725.9 Z" fill="#504e49" stroke="#504e49" stroke-width="0.6"/>
<path d="M921.9,725.9 L922.6,737.3 L938.1,757.2 L937.4,745.9 Z" fill="#54534e" stroke="#54534e" stroke-width="0.6"/>
<path d="M654.0,792.8 L654.8,782.0 L658.8,789.0 L658.0,799.8 Z" fill="#7e7f79" stroke="#7e7f79" stroke-width="0.6"/>
<path d="M658.0,799.8 L658.8,789.0 L674.3,808.9 L673.5,819.7 Z" fill="#605c54" stroke="#605c54" stroke-width="0.6"/>
<path d="M654.8,782.0 L656.6,771.1 L660.6,778.1 L658.8,789.0 Z" fill="#81827c" stroke="#81827c" stroke-width="0.6"/>
<path d="M658.8,789.0 L660.6,778.1 L676.1,798.0 L674.3,808.9 Z" fill="#64615a" stroke="#64615a" stroke-width="0.6"/>
<path d="M656.6,771.1 L659.5,760.2 L663.5,767.2 L660.6,778.1 Z" fill="#84857f" stroke="#84857f" stroke-width="0.6"/>
<path d="M660.6,778.1 L663.5,767.2 L679.0,787.1 L676.1,798.0 Z" fill="#686660" stroke="#686660" stroke-width="0.6"/>
<path d="M659.5,760.2 L663.4,749.3 L667.4,756.3 L663.5,767.2 Z" fill="#878882" stroke="#878882" stroke-width="0.6"/>
<path d="M663.5,767.2 L667.4,756.3 L682.9,776.3 L679.0,787.1 Z" fill="#706e68" stroke="#706e68" stroke-width="0.6"/>
<path d="M663.4,749.3 L668.2,738.7 L672.2,745.7 L667.4,756.3 Z" fill="#8a8b85" stroke="#8a8b85" stroke-width="0.6"/>
<path d="M667.4,756.3 L672.2,745.7 L687.7,765.6 L682.9,776.3 Z" fill="#797772" stroke="#797772" stroke-width="0.6"/>
<path d="M668.2,738.7 L674.0,728.2 L678.0,735.2 L672.2,745.7 Z" fill="#8c8e88" stroke="#8c8e88" stroke-width="0.6"/>
<path d="M672.2,745.7 L678.0,735.2 L693.5,755.2 L687.7,765.6 Z" fill="#82817b" stroke="#82817b" stroke-width="0.6"/>
<path d="M674.0,728.2 L680.7,718.1 L684.7,725.1 L678.0,735.2 Z" fill="#8a8c86" stroke="#8a8c86" stroke-width="0.6"/>
<path d="M678.0,735.2 L684.7,725.1 L700.2,745.0 L693.5,755.2 Z" fill="#8c8a85" stroke="#8c8a85" stroke-width="0.6"/>
<path d="M680.7,718.1 L688.3,708.4 L692.3,715.4 L684.7,725.1 Z" fill="#888a84" stroke="#888a84" stroke-width="0.6"/>
<path d="M684.7,725.1 L692.3,715.4 L707.8,735.3 L700.2,745.0 Z" fill="#908f8a" stroke="#908f8a" stroke-width="0.6"/>
<path d="M688.3,708.4 L696.6,699.1 L700.6,706.1 L692.3,715.4 Z" fill="#868882" stroke="#868882" stroke-width="0.6"/>
<path d="M692.3,715.4 L700.6,706.1 L716.1,726.1 L707.8,735.3 Z" fill="#898883" stroke="#898883" stroke-width="0.6"/>
<path d="M696.6,699.1 L705.7,690.5 L709.7,697.5 L700.6,706.1 Z" fill="#848680" stroke="#848680" stroke-width="0.6"/>
<path d="M700.6,706.1 L709.7,697.5 L725.2,717.4 L716.1,726.1 Z" fill="#83827d" stroke="#83827d" stroke-width="0.6"/>
<path d="M705.7,690.5 L715.5,682.4 L719.5,689.4 L709.7,697.5 Z" fill="#83847f" stroke="#83847f" stroke-width="0.6"/>
<path d="M709.7,697.5 L719.5,689.4 L735.0,709.3 L725.2,717.4 Z" fill="#7c7b76" stroke="#7c7b76" stroke-width="0.6"/>
<path d="M715.5,682.4 L725.8,675.0 L729.8,682.0 L719.5,689.4 Z" fill="#797a75" stroke="#797a75" stroke-width="0.6"/>
<path d="M719.5,689.4 L729.8,682.0 L745.3,701.9 L735.0,709.3 Z" fill="#787772" stroke="#787772" stroke-width="0.6"/>
<path d="M725.8,675.0 L736.7,668.4 L740.7,675.4 L729.8,682.0 Z" fill="#6d6d68" stroke="#6d6d68" stroke-width="0.6"/>
<path d="M729.8,682.0 L740.7,675.4 L756.2,695.3 L745.3,701.9 Z" fill="#75746f" stroke="#75746f" stroke-width="0.6"/>
<path d="M736.7,668.4 L748.1,662.5 L752.1,669.5 L740.7,675.4 Z" fill="#605f5a" stroke="#605f5a" stroke-width="0.6"/>
<path d="M740.7,675.4 L752.1,669.5 L767.6,689.5 L756.2,695.3 Z" fill="#72726c" stroke="#72726c" stroke-width="0.6"/>
<path d="M748.1,662.5 L759.8,657.5 L763.8,664.5 L752.1,669.5 Z" fill="#54524d" stroke="#54524d" stroke-width="0.6"/>
<path d="M752.1,669.5 L763.8,664.5 L779.3,684.5 L767.6,689.5 Z" fill="#706f6a" stroke="#706f6a" stroke-width="0.6"/>
<path d="M759.8,657.5 L771.7,653.4 L775.7,660.4 L763.8,664.5 Z" fill="#4c4a45" stroke="#4c4a45" stroke-width="0.6"/>
<path d="M763.8,664.5 L775.7,660.4 L791.2,680.4 L779.3,684.5 Z" fill="#6d6c67" stroke="#6d6c67" stroke-width="0.6"/>
<path d="M771.7,653.4 L783.8,650.2 L787.8,657.2 L775.7,660.4 Z" fill="#4c4a45" stroke="#4c4a45" stroke-width="0.6"/>
<path d="M775.7,660.4 L787.8,657.2 L803.3,677.2 L791.2,680.4 Z" fill="#6a6964" stroke="#6a6964" stroke-width="0.6"/>
<path d="M783.8,650.2 L796.1,648.0 L800.1,655.0 L787.8,657.2 Z" fill="#4c4a45" stroke="#4c4a45" stroke-width="0.6"/>
<path d="M787.8,657.2 L800.1,655.0 L815.6,674.9 L803.3,677.2 Z" fill="#676661" stroke="#676661" stroke-width="0.6"/>
<path d="M796.1,648.0 L808.3,646.7 L812.3,653.7 L800.1,655.0 Z" fill="#4c4a45" stroke="#4c4a45" stroke-width="0.6"/>
<path d="M800.1,655.0 L812.3,653.7 L827.8,673.6 L815.6,674.9 Z" fill="#65645f" stroke="#65645f" stroke-width="0.6"/>
<path d="M808.3,646.7 L820.4,646.4 L824.4,653.4 L812.3,653.7 Z" fill="#4b4944" stroke="#4b4944" stroke-width="0.6"/>
<path d="M812.3,653.7 L824.4,653.4 L839.9,673.3 L827.8,673.6 Z" fill="#63625d" stroke="#63625d" stroke-width="0.6"/>
<path d="M820.4,646.4 L832.4,647.1 L836.4,654.1 L824.4,653.4 Z" fill="#4b4944" stroke="#4b4944" stroke-width="0.6"/>
<path d="M824.4,653.4 L836.4,654.1 L851.9,674.0 L839.9,673.3 Z" fill="#605f5a" stroke="#605f5a" stroke-width="0.6"/>
<path d="M832.4,647.1 L844.1,648.8 L848.1,655.8 L836.4,654.1 Z" fill="#4b4944" stroke="#4b4944" stroke-width="0.6"/>
<path d="M836.4,654.1 L848.1,655.8 L863.6,675.7 L851.9,674.0 Z" fill="#5e5d58" stroke="#5e5d58" stroke-width="0.6"/>
<path d="M844.1,648.8 L855.4,651.4 L859.4,658.4 L848.1,655.8 Z" fill="#4b4944" stroke="#4b4944" stroke-width="0.6"/>
<path d="M848.1,655.8 L859.4,658.4 L874.9,678.3 L863.6,675.7 Z" fill="#5c5b56" stroke="#5c5b56" stroke-width="0.6"/>
<path d="M855.4,651.4 L866.3,655.0 L870.3,662.0 L859.4,658.4 Z" fill="#4b4944" stroke="#4b4944" stroke-width="0.6"/>
<path d="M859.4,658.4 L870.3,662.0 L885.8,681.9 L874.9,678.3 Z" fill="#5a5954" stroke="#5a5954" stroke-width="0.6"/>
<path d="M866.3,655.0 L876.7,659.5 L880.7,666.5 L870.3,662.0 Z" fill="#4b4944" stroke="#4b4944" stroke-width="0.6"/>
<path d="M870.3,662.0 L880.7,666.5 L896.2,686.5 L885.8,681.9 Z" fill="#585752" stroke="#585752" stroke-width="0.6"/>
<path d="M876.7,659.5 L886.4,664.9 L890.4,671.9 L880.7,666.5 Z" fill="#4a4843" stroke="#4a4843" stroke-width="0.6"/>
<path d="M880.7,666.5 L890.4,671.9 L905.9,691.9 L896.2,686.5 Z" fill="#565550" stroke="#565550" stroke-width="0.6"/>
<path d="M886.4,664.9 L895.5,671.2 L899.5,678.2 L890.4,671.9 Z" fill="#4a4843" stroke="#4a4843" stroke-width="0.6"/>
<path d="M890.4,671.9 L899.5,678.2 L915.0,698.2 L905.9,691.9 Z" fill="#54534f" stroke="#54534f" stroke-width="0.6"/>
<path d="M895.5,671.2 L903.9,678.3 L907.9,685.3 L899.5,678.2 Z" fill="#4a4843" stroke="#4a4843" stroke-width="0.6"/>
<path d="M899.5,678.2 L907.9,685.3 L923.4,705.3 L915.0,698.2 Z" fill="#53524d" stroke="#53524d" stroke-width="0.6"/>
<path d="M903.9,678.3 L911.4,686.2 L915.4,693.2 L907.9,685.3 Z" fill="#4a4843" stroke="#4a4843" stroke-width="0.6"/>
<path d="M907.9,685.3 L915.4,693.2 L930.9,713.1 L923.4,705.3 Z" fill="#52514c" stroke="#52514c" stroke-width="0.6"/>
<path d="M911.4,686.2 L918.1,694.8 L922.1,701.8 L915.4,693.2 Z" fill="#4b4944" stroke="#4b4944" stroke-width="0.6"/>
<path d="M915.4,693.2 L922.1,701.8 L937.6,721.7 L930.9,713.1 Z" fill="#504f4b" stroke="#504f4b" stroke-width="0.6"/>
<path d="M918.1,694.8 L923.9,704.0 L927.9,711.0 L922.1,701.8 Z" fill="#4b4944" stroke="#4b4944" stroke-width="0.6"/>
<path d="M922.1,701.8 L927.9,711.0 L943.4,730.9 L937.6,721.7 Z" fill="#4f4e4a" stroke="#4f4e4a" stroke-width="0.6"/>
<path d="M923.9,704.0 L928.8,713.8 L932.8,720.8 L927.9,711.0 Z" fill="#4c4a45" stroke="#4c4a45" stroke-width="0.6"/>
<path d="M927.9,711.0 L932.8,720.8 L948.3,740.7 L943.4,730.9 Z" fill="#504f4b" stroke="#504f4b" stroke-width="0.6"/>
<path d="M928.8,713.8 L932.7,724.1 L936.7,731.1 L932.8,720.8 Z" fill="#4d4b46" stroke="#4d4b46" stroke-width="0.6"/>
<path d="M932.8,720.8 L936.7,731.1 L952.2,751.0 L948.3,740.7 Z" fill="#51504b" stroke="#51504b" stroke-width="0.6"/>
<path d="M932.7,724.1 L935.5,734.8 L939.5,741.8 L936.7,731.1 Z" fill="#4e4c47" stroke="#4e4c47" stroke-width="0.6"/>
<path d="M936.7,731.1 L939.5,741.8 L955.0,761.7 L952.2,751.0 Z" fill="#52514c" stroke="#52514c" stroke-width="0.6"/>
<path d="M935.5,734.8 L937.4,745.9 L941.4,752.9 L939.5,741.8 Z" fill="#4f4d48" stroke="#4f4d48" stroke-width="0.6"/>
<path d="M939.5,741.8 L941.4,752.9 L956.9,772.8 L955.0,761.7 Z" fill="#53524d" stroke="#53524d" stroke-width="0.6"/>
<path d="M937.4,745.9 L938.1,757.2 L942.1,764.2 L941.4,752.9 Z" fill="#504e49" stroke="#504e49" stroke-width="0.6"/>
<path d="M941.4,752.9 L942.1,764.2 L957.6,784.2 L956.9,772.8 Z" fill="#54534e" stroke="#54534e" stroke-width="0.6"/>
<path d="M673.5,819.7 L674.3,808.9 L678.3,815.9 L677.5,826.7 Z" fill="#7e7f79" stroke="#7e7f79" stroke-width="0.6"/>
<path d="M677.5,826.7 L678.3,815.9 L693.8,835.8 L693.0,846.6 Z" fill="#605c54" stroke="#605c54" stroke-width="0.6"/>
<path d="M674.3,808.9 L676.1,798.0 L680.1,805.0 L678.3,815.9 Z" fill="#81827c" stroke="#81827c" stroke-width="0.6"/>
<path d="M678.3,815.9 L680.1,805.0 L695.6,824.9 L693.8,835.8 Z" fill="#64615a" stroke="#64615a" stroke-width="0.6"/>
<path d="M676.1,798.0 L679.0,787.1 L683.0,794.1 L680.1,805.0 Z" fill="#84857f" stroke="#84857f" stroke-width="0.6"/>
<path d="M680.1,805.0 L683.0,794.1 L698.5,814.0 L695.6,824.9 Z" fill="#686660" stroke="#686660" stroke-width="0.6"/>
<path d="M679.0,787.1 L682.9,776.3 L686.9,783.3 L683.0,794.1 Z" fill="#878882" stroke="#878882" stroke-width="0.6"/>
<path d="M683.0,794.1 L686.9,783.3 L702.4,803.2 L698.5,814.0 Z" fill="#706e68" stroke="#706e68" stroke-width="0.6"/>
<path d="M682.9,776.3 L687.7,765.6 L691.7,772.6 L686.9,783.3 Z" fill="#8a8b85" stroke="#8a8b85" stroke-width="0.6"/>
<path d="M686.9,783.3 L691.7,772.6 L707.2,792.5 L702.4,803.2 Z" fill="#797772" stroke="#797772" stroke-width="0.6"/>
<path d="M687.7,765.6 L693.5,755.2 L697.5,762.2 L691.7,772.6 Z" fill="#8c8e88" stroke="#8c8e88" stroke-width="0.6"/>
<path d="M691.7,772.6 L697.5,762.2 L713.0,782.1 L707.2,792.5 Z" fill="#82817b" stroke="#82817b" stroke-width="0.6"/>
<path d="M693.5,755.2 L700.2,745.0 L704.2,752.0 L697.5,762.2 Z" fill="#8a8c86" stroke="#8a8c86" stroke-width="0.6"/>
<path d="M697.5,762.2 L704.2,752.0 L719.7,772.0 L713.0,782.1 Z" fill="#8c8a85" stroke="#8c8a85" stroke-width="0.6"/>
<path d="M700.2,745.0 L707.8,735.3 L711.8,742.3 L704.2,752.0 Z" fill="#888a84" stroke="#888a84" stroke-width="0.6"/>
<path d="M704.2,752.0 L711.8,742.3 L727.3,762.2 L719.7,772.0 Z" fill="#908f8a" stroke="#908f8a" stroke-width="0.6"/>
<path d="M707.8,735.3 L716.1,726.1 L720.1,733.1 L711.8,742.3 Z" fill="#868882" stroke="#868882" stroke-width="0.6"/>
<path d="M711.8,742.3 L720.1,733.1 L735.6,753.0 L727.3,762.2 Z" fill="#898883" stroke="#898883" stroke-width="0.6"/>
<path d="M716.1,726.1 L725.2,717.4 L729.2,724.4 L720.1,733.1 Z" fill="#848680" stroke="#848680" stroke-width="0.6"/>
<path d="M720.1,733.1 L729.2,724.4 L744.7,744.3 L735.6,753.0 Z" fill="#83827d" stroke="#83827d" stroke-width="0.6"/>
<path d="M725.2,717.4 L735.0,709.3 L739.0,716.3 L729.2,724.4 Z" fill="#83847f" stroke="#83847f" stroke-width="0.6"/>
<path d="M729.2,724.4 L739.0,716.3 L754.5,736.3 L744.7,744.3 Z" fill="#7c7b76" stroke="#7c7b76" stroke-width="0.6"/>
<path d="M735.0,709.3 L745.3,701.9 L749.3,708.9 L739.0,716.3 Z" fill="#797a75" stroke="#797a75" stroke-width="0.6"/>
<path d="M739.0,716.3 L749.3,708.9 L764.8,728.9 L754.5,736.3 Z" fill="#787772" stroke="#787772" stroke-width="0.6"/>
<path d="M745.3,701.9 L756.2,695.3 L760.2,702.3 L749.3,708.9 Z" fill="#6d6d68" stroke="#6d6d68" stroke-width="0.6"/>
<path d="M749.3,708.9 L760.2,702.3 L775.7,722.2 L764.8,728.9 Z" fill="#75746f" stroke="#75746f" stroke-width="0.6"/>
<path d="M756.2,695.3 L767.6,689.5 L771.6,696.5 L760.2,702.3 Z" fill="#605f5a" stroke="#605f5a" stroke-width="0.6"/>
<path d="M760.2,702.3 L771.6,696.5 L787.1,716.4 L775.7,722.2 Z" fill="#72726c" stroke="#72726c" stroke-width="0.6"/>
<path d="M767.6,689.5 L779.3,684.5 L783.3,691.5 L771.6,696.5 Z" fill="#54524d" stroke="#54524d" stroke-width="0.6"/>
<path d="M771.6,696.5 L783.3,691.5 L798.8,711.4 L787.1,716.4 Z" fill="#706f6a" stroke="#706f6a" stroke-width="0.6"/>
<path d="M779.3,684.5 L791.2,680.4 L795.2,687.4 L783.3,691.5 Z" fill="#4c4a45" stroke="#4c4a45" stroke-width="0.6"/>
<path d="M783.3,691.5 L795.2,687.4 L810.7,707.3 L798.8,711.4 Z" fill="#6d6c67" stroke="#6d6c67" stroke-width="0.6"/>
<path d="M791.2,680.4 L803.3,677.2 L807.3,684.2 L795.2,687.4 Z" fill="#4c4a45" stroke="#4c4a45" stroke-width="0.6"/>
<path d="M795.2,687.4 L807.3,684.2 L822.8,704.1 L810.7,707.3 Z" fill="#6a6964" stroke="#6a6964" stroke-width="0.6"/>
<path d="M803.3,677.2 L815.6,674.9 L819.6,681.9 L807.3,684.2 Z" fill="#4c4a45" stroke="#4c4a45" stroke-width="0.6"/>
<path d="M807.3,684.2 L819.6,681.9 L835.1,701.9 L822.8,704.1 Z" fill="#676661" stroke="#676661" stroke-width="0.6"/>
<path d="M815.6,674.9 L827.8,673.6 L831.8,680.6 L819.6,681.9 Z" fill="#4c4a45" stroke="#4c4a45" stroke-width="0.6"/>
<path d="M819.6,681.9 L831.8,680.6 L847.3,700.6 L835.1,701.9 Z" fill="#65645f" stroke="#65645f" stroke-width="0.6"/>
<path d="M827.8,673.6 L839.9,673.3 L843.9,680.3 L831.8,680.6 Z" fill="#4b4944" stroke="#4b4944" stroke-width="0.6"/>
<path d="M831.8,680.6 L843.9,680.3 L859.4,700.3 L847.3,700.6 Z" fill="#63625d" stroke="#63625d" stroke-width="0.6"/>
<path d="M839.9,673.3 L851.9,674.0 L855.9,681.0 L843.9,680.3 Z" fill="#4b4944" stroke="#4b4944" stroke-width="0.6"/>
<path d="M843.9,680.3 L855.9,681.0 L871.4,701.0 L859.4,700.3 Z" fill="#605f5a" stroke="#605f5a" stroke-width="0.6"/>
<path d="M851.9,674.0 L863.6,675.7 L867.6,682.7 L855.9,681.0 Z" fill="#4b4944" stroke="#4b4944" stroke-width="0.6"/>
<path d="M855.9,681.0 L867.6,682.7 L883.1,702.6 L871.4,701.0 Z" fill="#5e5d58" stroke="#5e5d58" stroke-width="0.6"/>
<path d="M863.6,675.7 L874.9,678.3 L878.9,685.3 L867.6,682.7 Z" fill="#4b4944" stroke="#4b4944" stroke-width="0.6"/>
<path d="M867.6,682.7 L878.9,685.3 L894.4,705.3 L883.1,702.6 Z" fill="#5c5b56" stroke="#5c5b56" stroke-width="0.6"/>
<path d="M874.9,678.3 L885.8,681.9 L889.8,688.9 L878.9,685.3 Z" fill="#4b4944" stroke="#4b4944" stroke-width="0.6"/>
<path d="M878.9,685.3 L889.8,688.9 L905.3,708.9 L894.4,705.3 Z" fill="#5a5954" stroke="#5a5954" stroke-width="0.6"/>
<path d="M885.8,681.9 L896.2,686.5 L900.2,693.5 L889.8,688.9 Z" fill="#4b4944" stroke="#4b4944" stroke-width="0.6"/>
<path d="M889.8,688.9 L900.2,693.5 L915.7,713.4 L905.3,708.9 Z" fill="#585752" stroke="#585752" stroke-width="0.6"/>
<path d="M896.2,686.5 L905.9,691.9 L909.9,698.9 L900.2,693.5 Z" fill="#4a4843" stroke="#4a4843" stroke-width="0.6"/>
<path d="M900.2,693.5 L909.9,698.9 L925.4,718.8 L915.7,713.4 Z" fill="#565550" stroke="#565550" stroke-width="0.6"/>
<path d="M905.9,691.9 L915.0,698.2 L919.0,705.2 L909.9,698.9 Z" fill="#4a4843" stroke="#4a4843" stroke-width="0.6"/>
<path d="M909.9,698.9 L919.0,705.2 L934.5,725.1 L925.4,718.8 Z" fill="#54534f" stroke="#54534f" stroke-width="0.6"/>
<path d="M915.0,698.2 L923.4,705.3 L927.4,712.3 L919.0,705.2 Z" fill="#4a4843" stroke="#4a4843" stroke-width="0.6"/>
<path d="M919.0,705.2 L927.4,712.3 L942.9,732.2 L934.5,725.1 Z" fill="#53524d" stroke="#53524d" stroke-width="0.6"/>
<path d="M923.4,705.3 L930.9,713.1 L934.9,720.1 L927.4,712.3 Z" fill="#4a4843" stroke="#4a4843" stroke-width="0.6"/>
<path d="M927.4,712.3 L934.9,720.1 L950.4,740.1 L942.9,732.2 Z" fill="#52514c" stroke="#52514c" stroke-width="0.6"/>
<path d="M930.9,713.1 L937.6,721.7 L941.6,728.7 L934.9,720.1 Z" fill="#4b4944" stroke="#4b4944" stroke-width="0.6"/>
<path d="M934.9,720.1 L941.6,728.7 L957.1,748.6 L950.4,740.1 Z" fill="#504f4b" stroke="#504f4b" stroke-width="0.6"/>
<path d="M937.6,721.7 L943.4,730.9 L947.4,737.9 L941.6,728.7 Z" fill="#4b4944" stroke="#4b4944" stroke-width="0.6"/>
<path d="M941.6,728.7 L947.4,737.9 L962.9,757.8 L957.1,748.6 Z" fill="#4f4e4a" stroke="#4f4e4a" stroke-width="0.6"/>
<path d="M943.4,730.9 L948.3,740.7 L952.3,747.7 L947.4,737.9 Z" fill="#4c4a45" stroke="#4c4a45" stroke-width="0.6"/>
<path d="M947.4,737.9 L952.3,747.7 L967.8,767.6 L962.9,757.8 Z" fill="#504f4b" stroke="#504f4b" stroke-width="0.6"/>
<path d="M948.3,740.7 L952.2,751.0 L956.2,758.0 L952.3,747.7 Z" fill="#4d4b46" stroke="#4d4b46" stroke-width="0.6"/>
<path d="M952.3,747.7 L956.2,758.0 L971.7,777.9 L967.8,767.6 Z" fill="#51504b" stroke="#51504b" stroke-width="0.6"/>
<path d="M952.2,751.0 L955.0,761.7 L959.0,768.7 L956.2,758.0 Z" fill="#4e4c47" stroke="#4e4c47" stroke-width="0.6"/>
<path d="M956.2,758.0 L959.0,768.7 L974.5,788.7 L971.7,777.9 Z" fill="#52514c" stroke="#52514c" stroke-width="0.6"/>
<path d="M955.0,761.7 L956.9,772.8 L960.9,779.8 L959.0,768.7 Z" fill="#4f4d48" stroke="#4f4d48" stroke-width="0.6"/>
<path d="M959.0,768.7 L960.9,779.8 L976.4,799.7 L974.5,788.7 Z" fill="#53524d" stroke="#53524d" stroke-width="0.6"/>
<path d="M956.9,772.8 L957.6,784.2 L961.6,791.2 L960.9,779.8 Z" fill="#504e49" stroke="#504e49" stroke-width="0.6"/>
<path d="M960.9,779.8 L961.6,791.2 L977.1,811.1 L976.4,799.7 Z" fill="#54534e" stroke="#54534e" stroke-width="0.6"/>
<path d="M693.0,846.6 L693.8,835.8 L697.8,842.8 L697.0,853.6 Z" fill="#7e7f79" stroke="#7e7f79" stroke-width="0.6"/>
<path d="M697.0,853.6 L697.8,842.8 L713.3,862.8 L712.5,873.5 Z" fill="#605c54" stroke="#605c54" stroke-width="0.6"/>
<path d="M693.8,835.8 L695.6,824.9 L699.6,831.9 L697.8,842.8 Z" fill="#81827c" stroke="#81827c" stroke-width="0.6"/>
<path d="M697.8,842.8 L699.6,831.9 L715.1,851.9 L713.3,862.8 Z" fill="#64615a" stroke="#64615a" stroke-width="0.6"/>
<path d="M695.6,824.9 L698.5,814.0 L702.5,821.0 L699.6,831.9 Z" fill="#84857f" stroke="#84857f" stroke-width="0.6"/>
<path d="M699.6,831.9 L702.5,821.0 L718.0,841.0 L715.1,851.9 Z" fill="#686660" stroke="#686660" stroke-width="0.6"/>
<path d="M698.5,814.0 L702.4,803.2 L706.4,810.2 L702.5,821.0 Z" fill="#878882" stroke="#878882" stroke-width="0.6"/>
<path d="M702.5,821.0 L706.4,810.2 L721.9,830.1 L718.0,841.0 Z" fill="#706e68" stroke="#706e68" stroke-width="0.6"/>
<path d="M702.4,803.2 L707.2,792.5 L711.2,799.5 L706.4,810.2 Z" fill="#8a8b85" stroke="#8a8b85" stroke-width="0.6"/>
<path d="M706.4,810.2 L711.2,799.5 L726.7,819.5 L721.9,830.1 Z" fill="#797772" stroke="#797772" stroke-width="0.6"/>
<path d="M707.2,792.5 L713.0,782.1 L717.0,789.1 L711.2,799.5 Z" fill="#8c8e88" stroke="#8c8e88" stroke-width="0.6"/>
<path d="M711.2,799.5 L717.0,789.1 L732.5,809.0 L726.7,819.5 Z" fill="#82817b" stroke="#82817b" stroke-width="0.6"/>
<path d="M713.0,782.1 L719.7,772.0 L723.7,779.0 L717.0,789.1 Z" fill="#8a8c86" stroke="#8a8c86" stroke-width="0.6"/>
<path d="M717.0,789.1 L723.7,779.0 L739.2,798.9 L732.5,809.0 Z" fill="#8c8a85" stroke="#8c8a85" stroke-width="0.6"/>
<path d="M719.7,772.0 L727.3,762.2 L731.3,769.2 L723.7,779.0 Z" fill="#888a84" stroke="#888a84" stroke-width="0.6"/>
<path d="M723.7,779.0 L731.3,769.2 L746.8,789.2 L739.2,798.9 Z" fill="#908f8a" stroke="#908f8a" stroke-width="0.6"/>
<path d="M727.3,762.2 L735.6,753.0 L739.6,760.0 L731.3,769.2 Z" fill="#868882" stroke="#868882" stroke-width="0.6"/>
<path d="M731.3,769.2 L739.6,760.0 L755.1,779.9 L746.8,789.2 Z" fill="#898883" stroke="#898883" stroke-width="0.6"/>
<path d="M735.6,753.0 L744.7,744.3 L748.7,751.3 L739.6,760.0 Z" fill="#848680" stroke="#848680" stroke-width="0.6"/>
<path d="M739.6,760.0 L748.7,751.3 L764.2,771.3 L755.1,779.9 Z" fill="#83827d" stroke="#83827d" stroke-width="0.6"/>
<path d="M744.7,744.3 L754.5,736.3 L758.5,743.3 L748.7,751.3 Z" fill="#83847f" stroke="#83847f" stroke-width="0.6"/>
<path d="M748.7,751.3 L758.5,743.3 L774.0,763.2 L764.2,771.3 Z" fill="#7c7b76" stroke="#7c7b76" stroke-width="0.6"/>
<path d="M754.5,736.3 L764.8,728.9 L768.8,735.9 L758.5,743.3 Z" fill="#797a75" stroke="#797a75" stroke-width="0.6"/>
<path d="M758.5,743.3 L768.8,735.9 L784.3,755.8 L774.0,763.2 Z" fill="#787772" stroke="#787772" stroke-width="0.6"/>
<path d="M764.8,728.9 L775.7,722.2 L779.7,729.2 L768.8,735.9 Z" fill="#6d6d68" stroke="#6d6d68" stroke-width="0.6"/>
<path d="M768.8,735.9 L779.7,729.2 L795.2,749.2 L784.3,755.8 Z" fill="#75746f" stroke="#75746f" stroke-width="0.6"/>
<path d="M775.7,722.2 L787.1,716.4 L791.1,723.4 L779.7,729.2 Z" fill="#605f5a" stroke="#605f5a" stroke-width="0.6"/>
<path d="M779.7,729.2 L791.1,723.4 L806.6,743.3 L795.2,749.2 Z" fill="#72726c" stroke="#72726c" stroke-width="0.6"/>
<path d="M787.1,716.4 L798.8,711.4 L802.8,718.4 L791.1,723.4 Z" fill="#54524d" stroke="#54524d" stroke-width="0.6"/>
<path d="M791.1,723.4 L802.8,718.4 L818.3,738.3 L806.6,743.3 Z" fill="#706f6a" stroke="#706f6a" stroke-width="0.6"/>
<path d="M798.8,711.4 L810.7,707.3 L814.7,714.3 L802.8,718.4 Z" fill="#4c4a45" stroke="#4c4a45" stroke-width="0.6"/>
<path d="M802.8,718.4 L814.7,714.3 L830.2,734.2 L818.3,738.3 Z" fill="#6d6c67" stroke="#6d6c67" stroke-width="0.6"/>
<path d="M810.7,707.3 L822.8,704.1 L826.8,711.1 L814.7,714.3 Z" fill="#4c4a45" stroke="#4c4a45" stroke-width="0.6"/>
<path d="M814.7,714.3 L826.8,711.1 L842.3,731.0 L830.2,734.2 Z" fill="#6a6964" stroke="#6a6964" stroke-width="0.6"/>
<path d="M822.8,704.1 L835.1,701.9 L839.1,708.9 L826.8,711.1 Z" fill="#4c4a45" stroke="#4c4a45" stroke-width="0.6"/>
<path d="M826.8,711.1 L839.1,708.9 L854.6,728.8 L842.3,731.0 Z" fill="#676661" stroke="#676661" stroke-width="0.6"/>
<path d="M835.1,701.9 L847.3,700.6 L851.3,707.6 L839.1,708.9 Z" fill="#4c4a45" stroke="#4c4a45" stroke-width="0.6"/>
<path d="M839.1,708.9 L851.3,707.6 L866.8,727.5 L854.6,728.8 Z" fill="#65645f" stroke="#65645f" stroke-width="0.6"/>
<path d="M847.3,700.6 L859.4,700.3 L863.4,707.3 L851.3,707.6 Z" fill="#4b4944" stroke="#4b4944" stroke-width="0.6"/>
<path d="M851.3,707.6 L863.4,707.3 L878.9,727.2 L866.8,727.5 Z" fill="#63625d" stroke="#63625d" stroke-width="0.6"/>
<path d="M859.4,700.3 L871.4,701.0 L875.4,708.0 L863.4,707.3 Z" fill="#4b4944" stroke="#4b4944" stroke-width="0.6"/>
<path d="M863.4,707.3 L875.4,708.0 L890.9,727.9 L878.9,727.2 Z" fill="#605f5a" stroke="#605f5a" stroke-width="0.6"/>
<path d="M871.4,701.0 L883.1,702.6 L887.1,709.6 L875.4,708.0 Z" fill="#4b4944" stroke="#4b4944" stroke-width="0.6"/>
<path d="M875.4,708.0 L887.1,709.6 L902.6,729.6 L890.9,727.9 Z" fill="#5e5d58" stroke="#5e5d58" stroke-width="0.6"/>
<path d="M883.1,702.6 L894.4,705.3 L898.4,712.3 L887.1,709.6 Z" fill="#4b4944" stroke="#4b4944" stroke-width="0.6"/>
<path d="M887.1,709.6 L898.4,712.3 L913.9,732.2 L902.6,729.6 Z" fill="#5c5b56" stroke="#5c5b56" stroke-width="0.6"/>
<path d="M894.4,705.3 L905.3,708.9 L909.3,715.9 L898.4,712.3 Z" fill="#4b4944" stroke="#4b4944" stroke-width="0.6"/>
<path d="M898.4,712.3 L909.3,715.9 L924.8,735.8 L913.9,732.2 Z" fill="#5a5954" stroke="#5a5954" stroke-width="0.6"/>
<path d="M905.3,708.9 L915.7,713.4 L919.7,720.4 L909.3,715.9 Z" fill="#4b4944" stroke="#4b4944" stroke-width="0.6"/>
<path d="M909.3,715.9 L919.7,720.4 L935.2,740.3 L924.8,735.8 Z" fill="#585752" stroke="#585752" stroke-width="0.6"/>
<path d="M915.7,713.4 L925.4,718.8 L929.4,725.8 L919.7,720.4 Z" fill="#4a4843" stroke="#4a4843" stroke-width="0.6"/>
<path d="M919.7,720.4 L929.4,725.8 L944.9,745.7 L935.2,740.3 Z" fill="#565550" stroke="#565550" stroke-width="0.6"/>
<path d="M925.4,718.8 L934.5,725.1 L938.5,732.1 L929.4,725.8 Z" fill="#4a4843" stroke="#4a4843" stroke-width="0.6"/>
<path d="M929.4,725.8 L938.5,732.1 L954.0,752.0 L944.9,745.7 Z" fill="#54534f" stroke="#54534f" stroke-width="0.6"/>
<path d="M934.5,725.1 L942.9,732.2 L946.9,739.2 L938.5,732.1 Z" fill="#4a4843" stroke="#4a4843" stroke-width="0.6"/>
<path d="M938.5,732.1 L946.9,739.2 L962.4,759.1 L954.0,752.0 Z" fill="#53524d" stroke="#53524d" stroke-width="0.6"/>
<path d="M942.9,732.2 L950.4,740.1 L954.4,747.1 L946.9,739.2 Z" fill="#4a4843" stroke="#4a4843" stroke-width="0.6"/>
<path d="M946.9,739.2 L954.4,747.1 L969.9,767.0 L962.4,759.1 Z" fill="#52514c" stroke="#52514c" stroke-width="0.6"/>
<path d="M950.4,740.1 L957.1,748.6 L961.1,755.6 L954.4,747.1 Z" fill="#4b4944" stroke="#4b4944" stroke-width="0.6"/>
<path d="M954.4,747.1 L961.1,755.6 L976.6,775.6 L969.9,767.0 Z" fill="#504f4b" stroke="#504f4b" stroke-width="0.6"/>
<path d="M957.1,748.6 L962.9,757.8 L966.9,764.8 L961.1,755.6 Z" fill="#4b4944" stroke="#4b4944" stroke-width="0.6"/>
<path d="M961.1,755.6 L966.9,764.8 L982.4,784.8 L976.6,775.6 Z" fill="#4f4e4a" stroke="#4f4e4a" stroke-width="0.6"/>
<path d="M962.9,757.8 L967.8,767.6 L971.8,774.6 L966.9,764.8 Z" fill="#4c4a45" stroke="#4c4a45" stroke-width="0.6"/>
<path d="M966.9,764.8 L971.8,774.6 L987.3,794.6 L982.4,784.8 Z" fill="#504f4b" stroke="#504f4b" stroke-width="0.6"/>
<path d="M967.8,767.6 L971.7,777.9 L975.7,784.9 L971.8,774.6 Z" fill="#4d4b46" stroke="#4d4b46" stroke-width="0.6"/>
<path d="M971.8,774.6 L975.7,784.9 L991.2,804.9 L987.3,794.6 Z" fill="#51504b" stroke="#51504b" stroke-width="0.6"/>
<path d="M971.7,777.9 L974.5,788.7 L978.5,795.7 L975.7,784.9 Z" fill="#4e4c47" stroke="#4e4c47" stroke-width="0.6"/>
<path d="M975.7,784.9 L978.5,795.7 L994.0,815.6 L991.2,804.9 Z" fill="#52514c" stroke="#52514c" stroke-width="0.6"/>
<path d="M974.5,788.7 L976.4,799.7 L980.4,806.7 L978.5,795.7 Z" fill="#4f4d48" stroke="#4f4d48" stroke-width="0.6"/>
<path d="M978.5,795.7 L980.4,806.7 L995.9,826.7 L994.0,815.6 Z" fill="#53524d" stroke="#53524d" stroke-width="0.6"/>
<path d="M976.4,799.7 L977.1,811.1 L981.1,818.1 L980.4,806.7 Z" fill="#504e49" stroke="#504e49" stroke-width="0.6"/>
<path d="M980.4,806.7 L981.1,818.1 L996.6,838.0 L995.9,826.7 Z" fill="#54534e" stroke="#54534e" stroke-width="0.6"/>
<path d="M712.5,873.5 L713.3,862.8 L717.3,869.8 L716.5,880.5 Z" fill="#7e7f79" stroke="#7e7f79" stroke-width="0.6"/>
<path d="M716.5,880.5 L717.3,869.8 L732.8,889.7 L732.0,900.5 Z" fill="#605c54" stroke="#605c54" stroke-width="0.6"/>
<path d="M713.3,862.8 L715.1,851.9 L719.1,858.9 L717.3,869.8 Z" fill="#81827c" stroke="#81827c" stroke-width="0.6"/>
<path d="M717.3,869.8 L719.1,858.9 L734.6,878.8 L732.8,889.7 Z" fill="#64615a" stroke="#64615a" stroke-width="0.6"/>
<path d="M715.1,851.9 L718.0,841.0 L722.0,848.0 L719.1,858.9 Z" fill="#84857f" stroke="#84857f" stroke-width="0.6"/>
<path d="M719.1,858.9 L722.0,848.0 L737.5,867.9 L734.6,878.8 Z" fill="#686660" stroke="#686660" stroke-width="0.6"/>
<path d="M718.0,841.0 L721.9,830.1 L725.9,837.1 L722.0,848.0 Z" fill="#878882" stroke="#878882" stroke-width="0.6"/>
<path d="M722.0,848.0 L725.9,837.1 L741.4,857.1 L737.5,867.9 Z" fill="#706e68" stroke="#706e68" stroke-width="0.6"/>
<path d="M721.9,830.1 L726.7,819.5 L730.7,826.5 L725.9,837.1 Z" fill="#8a8b85" stroke="#8a8b85" stroke-width="0.6"/>
<path d="M725.9,837.1 L730.7,826.5 L746.2,846.4 L741.4,857.1 Z" fill="#797772" stroke="#797772" stroke-width="0.6"/>
<path d="M726.7,819.5 L732.5,809.0 L736.5,816.0 L730.7,826.5 Z" fill="#8c8e88" stroke="#8c8e88" stroke-width="0.6"/>
<path d="M730.7,826.5 L736.5,816.0 L752.0,835.9 L746.2,846.4 Z" fill="#82817b" stroke="#82817b" stroke-width="0.6"/>
<path d="M732.5,809.0 L739.2,798.9 L743.2,805.9 L736.5,816.0 Z" fill="#8a8c86" stroke="#8a8c86" stroke-width="0.6"/>
<path d="M736.5,816.0 L743.2,805.9 L758.7,825.8 L752.0,835.9 Z" fill="#8c8a85" stroke="#8c8a85" stroke-width="0.6"/>
<path d="M739.2,798.9 L746.8,789.2 L750.8,796.2 L743.2,805.9 Z" fill="#888a84" stroke="#888a84" stroke-width="0.6"/>
<path d="M743.2,805.9 L750.8,796.2 L766.3,816.1 L758.7,825.8 Z" fill="#908f8a" stroke="#908f8a" stroke-width="0.6"/>
<path d="M746.8,789.2 L755.1,779.9 L759.1,786.9 L750.8,796.2 Z" fill="#868882" stroke="#868882" stroke-width="0.6"/>
<path d="M750.8,796.2 L759.1,786.9 L774.6,806.9 L766.3,816.1 Z" fill="#898883" stroke="#898883" stroke-width="0.6"/>
<path d="M755.1,779.9 L764.2,771.3 L768.2,778.3 L759.1,786.9 Z" fill="#848680" stroke="#848680" stroke-width="0.6"/>
<path d="M759.1,786.9 L768.2,778.3 L783.7,798.2 L774.6,806.9 Z" fill="#83827d" stroke="#83827d" stroke-width="0.6"/>
<path d="M764.2,771.3 L774.0,763.2 L778.0,770.2 L768.2,778.3 Z" fill="#83847f" stroke="#83847f" stroke-width="0.6"/>
<path d="M768.2,778.3 L778.0,770.2 L793.5,790.1 L783.7,798.2 Z" fill="#7c7b76" stroke="#7c7b76" stroke-width="0.6"/>
<path d="M774.0,763.2 L784.3,755.8 L788.3,762.8 L778.0,770.2 Z" fill="#797a75" stroke="#797a75" stroke-width="0.6"/>
<path d="M778.0,770.2 L788.3,762.8 L803.8,782.7 L793.5,790.1 Z" fill="#787772" stroke="#787772" stroke-width="0.6"/>
<path d="M784.3,755.8 L795.2,749.2 L799.2,756.2 L788.3,762.8 Z" fill="#6d6d68" stroke="#6d6d68" stroke-width="0.6"/>
<path d="M788.3,762.8 L799.2,756.2 L814.7,776.1 L803.8,782.7 Z" fill="#75746f" stroke="#75746f" stroke-width="0.6"/>
<path d="M795.2,749.2 L806.6,743.3 L810.6,750.3 L799.2,756.2 Z" fill="#605f5a" stroke="#605f5a" stroke-width="0.6"/>
<path d="M799.2,756.2 L810.6,750.3 L826.1,770.3 L814.7,776.1 Z" fill="#72726c" stroke="#72726c" stroke-width="0.6"/>
<path d="M806.6,743.3 L818.3,738.3 L822.3,745.3 L810.6,750.3 Z" fill="#54524d" stroke="#54524d" stroke-width="0.6"/>
<path d="M810.6,750.3 L822.3,745.3 L837.8,765.3 L826.1,770.3 Z" fill="#706f6a" stroke="#706f6a" stroke-width="0.6"/>
<path d="M818.3,738.3 L830.2,734.2 L834.2,741.2 L822.3,745.3 Z" fill="#4c4a45" stroke="#4c4a45" stroke-width="0.6"/>
<path d="M822.3,745.3 L834.2,741.2 L849.7,761.1 L837.8,765.3 Z" fill="#6d6c67" stroke="#6d6c67" stroke-width="0.6"/>
<path d="M830.2,734.2 L842.3,731.0 L846.3,738.0 L834.2,741.2 Z" fill="#4c4a45" stroke="#4c4a45" stroke-width="0.6"/>
<path d="M834.2,741.2 L846.3,738.0 L861.8,758.0 L849.7,761.1 Z" fill="#6a6964" stroke="#6a6964" stroke-width="0.6"/>
<path d="M842.3,731.0 L854.6,728.8 L858.6,735.8 L846.3,738.0 Z" fill="#4c4a45" stroke="#4c4a45" stroke-width="0.6"/>
<path d="M846.3,738.0 L858.6,735.8 L874.1,755.7 L861.8,758.0 Z" fill="#676661" stroke="#676661" stroke-width="0.6"/>
<path d="M854.6,728.8 L866.8,727.5 L870.8,734.5 L858.6,735.8 Z" fill="#4c4a45" stroke="#4c4a45" stroke-width="0.6"/>
<path d="M858.6,735.8 L870.8,734.5 L886.3,754.4 L874.1,755.7 Z" fill="#65645f" stroke="#65645f" stroke-width="0.6"/>
<path d="M866.8,727.5 L878.9,727.2 L882.9,734.2 L870.8,734.5 Z" fill="#4b4944" stroke="#4b4944" stroke-width="0.6"/>
<path d="M870.8,734.5 L882.9,734.2 L898.4,754.1 L886.3,754.4 Z" fill="#63625d" stroke="#63625d" stroke-width="0.6"/>
<path d="M878.9,727.2 L890.9,727.9 L894.9,734.9 L882.9,734.2 Z" fill="#4b4944" stroke="#4b4944" stroke-width="0.6"/>
<path d="M882.9,734.2 L894.9,734.9 L910.4,754.8 L898.4,754.1 Z" fill="#605f5a" stroke="#605f5a" stroke-width="0.6"/>
<path d="M890.9,727.9 L902.6,729.6 L906.6,736.6 L894.9,734.9 Z" fill="#4b4944" stroke="#4b4944" stroke-width="0.6"/>
<path d="M894.9,734.9 L906.6,736.6 L922.1,756.5 L910.4,754.8 Z" fill="#5e5d58" stroke="#5e5d58" stroke-width="0.6"/>
<path d="M902.6,729.6 L913.9,732.2 L917.9,739.2 L906.6,736.6 Z" fill="#4b4944" stroke="#4b4944" stroke-width="0.6"/>
<path d="M906.6,736.6 L917.9,739.2 L933.4,759.1 L922.1,756.5 Z" fill="#5c5b56" stroke="#5c5b56" stroke-width="0.6"/>
<path d="M913.9,732.2 L924.8,735.8 L928.8,742.8 L917.9,739.2 Z" fill="#4b4944" stroke="#4b4944" stroke-width="0.6"/>
<path d="M917.9,739.2 L928.8,742.8 L944.3,762.7 L933.4,759.1 Z" fill="#5a5954" stroke="#5a5954" stroke-width="0.6"/>
<path d="M924.8,735.8 L935.2,740.3 L939.2,747.3 L928.8,742.8 Z" fill="#4b4944" stroke="#4b4944" stroke-width="0.6"/>
<path d="M928.8,742.8 L939.2,747.3 L954.7,767.2 L944.3,762.7 Z" fill="#585752" stroke="#585752" stroke-width="0.6"/>
<path d="M935.2,740.3 L944.9,745.7 L948.9,752.7 L939.2,747.3 Z" fill="#4a4843" stroke="#4a4843" stroke-width="0.6"/>
<path d="M939.2,747.3 L948.9,752.7 L964.4,772.7 L954.7,767.2 Z" fill="#565550" stroke="#565550" stroke-width="0.6"/>
<path d="M944.9,745.7 L954.0,752.0 L958.0,759.0 L948.9,752.7 Z" fill="#4a4843" stroke="#4a4843" stroke-width="0.6"/>
<path d="M948.9,752.7 L958.0,759.0 L973.5,779.0 L964.4,772.7 Z" fill="#54534f" stroke="#54534f" stroke-width="0.6"/>
<path d="M954.0,752.0 L962.4,759.1 L966.4,766.1 L958.0,759.0 Z" fill="#4a4843" stroke="#4a4843" stroke-width="0.6"/>
<path d="M958.0,759.0 L966.4,766.1 L981.9,786.1 L973.5,779.0 Z" fill="#53524d" stroke="#53524d" stroke-width="0.6"/>
<path d="M962.4,759.1 L969.9,767.0 L973.9,774.0 L966.4,766.1 Z" fill="#4a4843" stroke="#4a4843" stroke-width="0.6"/>
<path d="M966.4,766.1 L973.9,774.0 L989.4,793.9 L981.9,786.1 Z" fill="#52514c" stroke="#52514c" stroke-width="0.6"/>
<path d="M969.9,767.0 L976.6,775.6 L980.6,782.6 L973.9,774.0 Z" fill="#4b4944" stroke="#4b4944" stroke-width="0.6"/>
<path d="M973.9,774.0 L980.6,782.6 L996.1,802.5 L989.4,793.9 Z" fill="#504f4b" stroke="#504f4b" stroke-width="0.6"/>
<path d="M976.6,775.6 L982.4,784.8 L986.4,791.8 L980.6,782.6 Z" fill="#4b4944" stroke="#4b4944" stroke-width="0.6"/>
<path d="M980.6,782.6 L986.4,791.8 L1001.9,811.7 L996.1,802.5 Z" fill="#4f4e4a" stroke="#4f4e4a" stroke-width="0.6"/>
<path d="M982.4,784.8 L987.3,794.6 L991.3,801.6 L986.4,791.8 Z" fill="#4c4a45" stroke="#4c4a45" stroke-width="0.6"/>
<path d="M986.4,791.8 L991.3,801.6 L1006.8,821.5 L1001.9,811.7 Z" fill="#504f4b" stroke="#504f4b" stroke-width="0.6"/>
<path d="M987.3,794.6 L991.2,804.9 L995.2,811.9 L991.3,801.6 Z" fill="#4d4b46" stroke="#4d4b46" stroke-width="0.6"/>
<path d="M991.3,801.6 L995.2,811.9 L1010.7,831.8 L1006.8,821.5 Z" fill="#51504b" stroke="#51504b" stroke-width="0.6"/>
<path d="M991.2,804.9 L994.0,815.6 L998.0,822.6 L995.2,811.9 Z" fill="#4e4c47" stroke="#4e4c47" stroke-width="0.6"/>
<path d="M995.2,811.9 L998.0,822.6 L1013.5,842.5 L1010.7,831.8 Z" fill="#52514c" stroke="#52514c" stroke-width="0.6"/>
<path d="M994.0,815.6 L995.9,826.7 L999.9,833.7 L998.0,822.6 Z" fill="#4f4d48" stroke="#4f4d48" stroke-width="0.6"/>
<path d="M998.0,822.6 L999.9,833.7 L1015.4,853.6 L1013.5,842.5 Z" fill="#53524d" stroke="#53524d" stroke-width="0.6"/>
<path d="M995.9,826.7 L996.6,838.0 L1000.6,845.0 L999.9,833.7 Z" fill="#504e49" stroke="#504e49" stroke-width="0.6"/>
<path d="M999.9,833.7 L1000.6,845.0 L1016.1,864.9 L1015.4,853.6 Z" fill="#54534e" stroke="#54534e" stroke-width="0.6"/>
<path d="M732.0,900.5 L732.8,889.7 L736.8,896.7 L736.0,907.5 Z" fill="#7e7f79" stroke="#7e7f79" stroke-width="0.6"/>
<path d="M736.0,907.5 L736.8,896.7 L752.3,916.6 L751.5,927.4 Z" fill="#605c54" stroke="#605c54" stroke-width="0.6"/>
<path d="M732.8,889.7 L734.6,878.8 L738.6,885.8 L736.8,896.7 Z" fill="#81827c" stroke="#81827c" stroke-width="0.6"/>
<path d="M736.8,896.7 L738.6,885.8 L754.1,905.7 L752.3,916.6 Z" fill="#64615a" stroke="#64615a" stroke-width="0.6"/>
<path d="M734.6,878.8 L737.5,867.9 L741.5,874.9 L738.6,885.8 Z" fill="#84857f" stroke="#84857f" stroke-width="0.6"/>
<path d="M738.6,885.8 L741.5,874.9 L757.0,894.8 L754.1,905.7 Z" fill="#686660" stroke="#686660" stroke-width="0.6"/>
<path d="M737.5,867.9 L741.4,857.1 L745.4,864.1 L741.5,874.9 Z" fill="#878882" stroke="#878882" stroke-width="0.6"/>
<path d="M741.5,874.9 L745.4,864.1 L760.9,884.0 L757.0,894.8 Z" fill="#706e68" stroke="#706e68" stroke-width="0.6"/>
<path d="M741.4,857.1 L746.2,846.4 L750.2,853.4 L745.4,864.1 Z" fill="#8a8b85" stroke="#8a8b85" stroke-width="0.6"/>
<path d="M745.4,864.1 L750.2,853.4 L765.7,873.3 L760.9,884.0 Z" fill="#797772" stroke="#797772" stroke-width="0.6"/>
<path d="M746.2,846.4 L752.0,835.9 L756.0,842.9 L750.2,853.4 Z" fill="#8c8e88" stroke="#8c8e88" stroke-width="0.6"/>
<path d="M750.2,853.4 L756.0,842.9 L771.5,862.9 L765.7,873.3 Z" fill="#82817b" stroke="#82817b" stroke-width="0.6"/>
<path d="M752.0,835.9 L758.7,825.8 L762.7,832.8 L756.0,842.9 Z" fill="#8a8c86" stroke="#8a8c86" stroke-width="0.6"/>
<path d="M756.0,842.9 L762.7,832.8 L778.2,852.8 L771.5,862.9 Z" fill="#8c8a85" stroke="#8c8a85" stroke-width="0.6"/>
<path d="M758.7,825.8 L766.3,816.1 L770.3,823.1 L762.7,832.8 Z" fill="#888a84" stroke="#888a84" stroke-width="0.6"/>
<path d="M762.7,832.8 L770.3,823.1 L785.8,843.0 L778.2,852.8 Z" fill="#908f8a" stroke="#908f8a" stroke-width="0.6"/>
<path d="M766.3,816.1 L774.6,806.9 L778.6,813.9 L770.3,823.1 Z" fill="#868882" stroke="#868882" stroke-width="0.6"/>
<path d="M770.3,823.1 L778.6,813.9 L794.1,833.8 L785.8,843.0 Z" fill="#898883" stroke="#898883" stroke-width="0.6"/>
<path d="M774.6,806.9 L783.7,798.2 L787.7,805.2 L778.6,813.9 Z" fill="#848680" stroke="#848680" stroke-width="0.6"/>
<path d="M778.6,813.9 L787.7,805.2 L803.2,825.1 L794.1,833.8 Z" fill="#83827d" stroke="#83827d" stroke-width="0.6"/>
<path d="M783.7,798.2 L793.5,790.1 L797.5,797.1 L787.7,805.2 Z" fill="#83847f" stroke="#83847f" stroke-width="0.6"/>
<path d="M787.7,805.2 L797.5,797.1 L813.0,817.0 L803.2,825.1 Z" fill="#7c7b76" stroke="#7c7b76" stroke-width="0.6"/>
<path d="M793.5,790.1 L803.8,782.7 L807.8,789.7 L797.5,797.1 Z" fill="#797a75" stroke="#797a75" stroke-width="0.6"/>
<path d="M797.5,797.1 L807.8,789.7 L823.3,809.7 L813.0,817.0 Z" fill="#787772" stroke="#787772" stroke-width="0.6"/>
<path d="M803.8,782.7 L814.7,776.1 L818.7,783.1 L807.8,789.7 Z" fill="#6d6d68" stroke="#6d6d68" stroke-width="0.6"/>
<path d="M807.8,789.7 L818.7,783.1 L834.2,803.0 L823.3,809.7 Z" fill="#75746f" stroke="#75746f" stroke-width="0.6"/>
<path d="M814.7,776.1 L826.1,770.3 L830.1,777.3 L818.7,783.1 Z" fill="#605f5a" stroke="#605f5a" stroke-width="0.6"/>
<path d="M818.7,783.1 L830.1,777.3 L845.6,797.2 L834.2,803.0 Z" fill="#72726c" stroke="#72726c" stroke-width="0.6"/>
<path d="M826.1,770.3 L837.8,765.3 L841.8,772.3 L830.1,777.3 Z" fill="#54524d" stroke="#54524d" stroke-width="0.6"/>
<path d="M830.1,777.3 L841.8,772.3 L857.3,792.2 L845.6,797.2 Z" fill="#706f6a" stroke="#706f6a" stroke-width="0.6"/>
<path d="M837.8,765.3 L849.7,761.1 L853.7,768.1 L841.8,772.3 Z" fill="#4c4a45" stroke="#4c4a45" stroke-width="0.6"/>
<path d="M841.8,772.3 L853.7,768.1 L869.2,788.1 L857.3,792.2 Z" fill="#6d6c67" stroke="#6d6c67" stroke-width="0.6"/>
<path d="M849.7,761.1 L861.8,758.0 L865.8,765.0 L853.7,768.1 Z" fill="#4c4a45" stroke="#4c4a45" stroke-width="0.6"/>
<path d="M853.7,768.1 L865.8,765.0 L881.3,784.9 L869.2,788.1 Z" fill="#6a6964" stroke="#6a6964" stroke-width="0.6"/>
<path d="M861.8,758.0 L874.1,755.7 L878.1,762.7 L865.8,765.0 Z" fill="#4c4a45" stroke="#4c4a45" stroke-width="0.6"/>
<path d="M865.8,765.0 L878.1,762.7 L893.6,782.6 L881.3,784.9 Z" fill="#676661" stroke="#676661" stroke-width="0.6"/>
<path d="M874.1,755.7 L886.3,754.4 L890.3,761.4 L878.1,762.7 Z" fill="#4c4a45" stroke="#4c4a45" stroke-width="0.6"/>
<path d="M878.1,762.7 L890.3,761.4 L905.8,781.4 L893.6,782.6 Z" fill="#65645f" stroke="#65645f" stroke-width="0.6"/>
<path d="M886.3,754.4 L898.4,754.1 L902.4,761.1 L890.3,761.4 Z" fill="#4b4944" stroke="#4b4944" stroke-width="0.6"/>
<path d="M890.3,761.4 L902.4,761.1 L917.9,781.1 L905.8,781.4 Z" fill="#63625d" stroke="#63625d" stroke-width="0.6"/>
<path d="M898.4,754.1 L910.4,754.8 L914.4,761.8 L902.4,761.1 Z" fill="#4b4944" stroke="#4b4944" stroke-width="0.6"/>
<path d="M902.4,761.1 L914.4,761.8 L929.9,781.8 L917.9,781.1 Z" fill="#605f5a" stroke="#605f5a" stroke-width="0.6"/>
<path d="M910.4,754.8 L922.1,756.5 L926.1,763.5 L914.4,761.8 Z" fill="#4b4944" stroke="#4b4944" stroke-width="0.6"/>
<path d="M914.4,761.8 L926.1,763.5 L941.6,783.4 L929.9,781.8 Z" fill="#5e5d58" stroke="#5e5d58" stroke-width="0.6"/>
<path d="M922.1,756.5 L933.4,759.1 L937.4,766.1 L926.1,763.5 Z" fill="#4b4944" stroke="#4b4944" stroke-width="0.6"/>
<path d="M926.1,763.5 L937.4,766.1 L952.9,786.1 L941.6,783.4 Z" fill="#5c5b56" stroke="#5c5b56" stroke-width="0.6"/>
<path d="M933.4,759.1 L944.3,762.7 L948.3,769.7 L937.4,766.1 Z" fill="#4b4944" stroke="#4b4944" stroke-width="0.6"/>
<path d="M937.4,766.1 L948.3,769.7 L963.8,789.7 L952.9,786.1 Z" fill="#5a5954" stroke="#5a5954" stroke-width="0.6"/>
<path d="M944.3,762.7 L954.7,767.2 L958.7,774.2 L948.3,769.7 Z" fill="#4b4944" stroke="#4b4944" stroke-width="0.6"/>
<path d="M948.3,769.7 L958.7,774.2 L974.2,794.2 L963.8,789.7 Z" fill="#585752" stroke="#585752" stroke-width="0.6"/>
<path d="M954.7,767.2 L964.4,772.7 L968.4,779.7 L958.7,774.2 Z" fill="#4a4843" stroke="#4a4843" stroke-width="0.6"/>
<path d="M958.7,774.2 L968.4,779.7 L983.9,799.6 L974.2,794.2 Z" fill="#565550" stroke="#565550" stroke-width="0.6"/>
<path d="M964.4,772.7 L973.5,779.0 L977.5,786.0 L968.4,779.7 Z" fill="#4a4843" stroke="#4a4843" stroke-width="0.6"/>
<path d="M968.4,779.7 L977.5,786.0 L993.0,805.9 L983.9,799.6 Z" fill="#54534f" stroke="#54534f" stroke-width="0.6"/>
<path d="M973.5,779.0 L981.9,786.1 L985.9,793.1 L977.5,786.0 Z" fill="#4a4843" stroke="#4a4843" stroke-width="0.6"/>
<path d="M977.5,786.0 L985.9,793.1 L1001.4,813.0 L993.0,805.9 Z" fill="#53524d" stroke="#53524d" stroke-width="0.6"/>
<path d="M981.9,786.1 L989.4,793.9 L993.4,800.9 L985.9,793.1 Z" fill="#4a4843" stroke="#4a4843" stroke-width="0.6"/>
<path d="M985.9,793.1 L993.4,800.9 L1008.9,820.8 L1001.4,813.0 Z" fill="#52514c" stroke="#52514c" stroke-width="0.6"/>
<path d="M989.4,793.9 L996.1,802.5 L1000.1,809.5 L993.4,800.9 Z" fill="#4b4944" stroke="#4b4944" stroke-width="0.6"/>
<path d="M993.4,800.9 L1000.1,809.5 L1015.6,829.4 L1008.9,820.8 Z" fill="#504f4b" stroke="#504f4b" stroke-width="0.6"/>
<path d="M996.1,802.5 L1001.9,811.7 L1005.9,818.7 L1000.1,809.5 Z" fill="#4b4944" stroke="#4b4944" stroke-width="0.6"/>
<path d="M1000.1,809.5 L1005.9,818.7 L1021.4,838.6 L1015.6,829.4 Z" fill="#4f4e4a" stroke="#4f4e4a" stroke-width="0.6"/>
<path d="M1001.9,811.7 L1006.8,821.5 L1010.8,828.5 L1005.9,818.7 Z" fill="#4c4a45" stroke="#4c4a45" stroke-width="0.6"/>
<path d="M1005.9,818.7 L1010.8,828.5 L1026.3,848.4 L1021.4,838.6 Z" fill="#504f4b" stroke="#504f4b" stroke-width="0.6"/>
<path d="M1006.8,821.5 L1010.7,831.8 L1014.7,838.8 L1010.8,828.5 Z" fill="#4d4b46" stroke="#4d4b46" stroke-width="0.6"/>
<path d="M1010.8,828.5 L1014.7,838.8 L1030.2,858.7 L1026.3,848.4 Z" fill="#51504b" stroke="#51504b" stroke-width="0.6"/>
<path d="M1010.7,831.8 L1013.5,842.5 L1017.5,849.5 L1014.7,838.8 Z" fill="#4e4c47" stroke="#4e4c47" stroke-width="0.6"/>
<path d="M1014.7,838.8 L1017.5,849.5 L1033.0,869.4 L1030.2,858.7 Z" fill="#52514c" stroke="#52514c" stroke-width="0.6"/>
<path d="M1013.5,842.5 L1015.4,853.6 L1019.4,860.6 L1017.5,849.5 Z" fill="#4f4d48" stroke="#4f4d48" stroke-width="0.6"/>
<path d="M1017.5,849.5 L1019.4,860.6 L1034.9,880.5 L1033.0,869.4 Z" fill="#53524d" stroke="#53524d" stroke-width="0.6"/>
<path d="M1015.4,853.6 L1016.1,864.9 L1020.1,871.9 L1019.4,860.6 Z" fill="#504e49" stroke="#504e49" stroke-width="0.6"/>
<path d="M1019.4,860.6 L1020.1,871.9 L1035.7,891.9 L1034.9,880.5 Z" fill="#54534e" stroke="#54534e" stroke-width="0.6"/>
<path d="M751.5,927.4 L752.3,916.6 L756.3,923.6 L755.5,934.4 Z" fill="#7e7f79" stroke="#7e7f79" stroke-width="0.6"/>
<path d="M755.5,934.4 L756.3,923.6 L771.8,943.6 L771.0,954.3 Z" fill="#605c54" stroke="#605c54" stroke-width="0.6"/>
<path d="M752.3,916.6 L754.1,905.7 L758.1,912.7 L756.3,923.6 Z" fill="#81827c" stroke="#81827c" stroke-width="0.6"/>
<path d="M756.3,923.6 L758.1,912.7 L773.6,932.7 L771.8,943.6 Z" fill="#64615a" stroke="#64615a" stroke-width="0.6"/>
<path d="M754.1,905.7 L757.0,894.8 L761.0,901.8 L758.1,912.7 Z" fill="#84857f" stroke="#84857f" stroke-width="0.6"/>
<path d="M758.1,912.7 L761.0,901.8 L776.5,921.8 L773.6,932.7 Z" fill="#686660" stroke="#686660" stroke-width="0.6"/>
<path d="M757.0,894.8 L760.9,884.0 L764.9,891.0 L761.0,901.8 Z" fill="#878882" stroke="#878882" stroke-width="0.6"/>
<path d="M761.0,901.8 L764.9,891.0 L780.4,910.9 L776.5,921.8 Z" fill="#706e68" stroke="#706e68" stroke-width="0.6"/>
<path d="M760.9,884.0 L765.7,873.3 L769.7,880.3 L764.9,891.0 Z" fill="#8a8b85" stroke="#8a8b85" stroke-width="0.6"/>
<path d="M764.9,891.0 L769.7,880.3 L785.2,900.2 L780.4,910.9 Z" fill="#797772" stroke="#797772" stroke-width="0.6"/>
<path d="M765.7,873.3 L771.5,862.9 L775.5,869.9 L769.7,880.3 Z" fill="#8c8e88" stroke="#8c8e88" stroke-width="0.6"/>
<path d="M769.7,880.3 L775.5,869.9 L791.0,889.8 L785.2,900.2 Z" fill="#82817b" stroke="#82817b" stroke-width="0.6"/>
<path d="M771.5,862.9 L778.2,852.8 L782.2,859.8 L775.5,869.9 Z" fill="#8a8c86" stroke="#8a8c86" stroke-width="0.6"/>
<path d="M775.5,869.9 L782.2,859.8 L797.7,879.7 L791.0,889.8 Z" fill="#8c8a85" stroke="#8c8a85" stroke-width="0.6"/>
<path d="M778.2,852.8 L785.8,843.0 L789.8,850.0 L782.2,859.8 Z" fill="#888a84" stroke="#888a84" stroke-width="0.6"/>
<path d="M782.2,859.8 L789.8,850.0 L805.3,870.0 L797.7,879.7 Z" fill="#908f8a" stroke="#908f8a" stroke-width="0.6"/>
<path d="M785.8,843.0 L794.1,833.8 L798.1,840.8 L789.8,850.0 Z" fill="#868882" stroke="#868882" stroke-width="0.6"/>
<path d="M789.8,850.0 L798.1,840.8 L813.6,860.7 L805.3,870.0 Z" fill="#898883" stroke="#898883" stroke-width="0.6"/>
<path d="M794.1,833.8 L803.2,825.1 L807.2,832.1 L798.1,840.8 Z" fill="#848680" stroke="#848680" stroke-width="0.6"/>
<path d="M798.1,840.8 L807.2,832.1 L822.7,852.0 L813.6,860.7 Z" fill="#83827d" stroke="#83827d" stroke-width="0.6"/>
<path d="M803.2,825.1 L813.0,817.0 L817.0,824.0 L807.2,832.1 Z" fill="#83847f" stroke="#83847f" stroke-width="0.6"/>
<path d="M807.2,832.1 L817.0,824.0 L832.5,844.0 L822.7,852.0 Z" fill="#7c7b76" stroke="#7c7b76" stroke-width="0.6"/>
<path d="M813.0,817.0 L823.3,809.7 L827.3,816.7 L817.0,824.0 Z" fill="#797a75" stroke="#797a75" stroke-width="0.6"/>
<path d="M817.0,824.0 L827.3,816.7 L842.8,836.6 L832.5,844.0 Z" fill="#787772" stroke="#787772" stroke-width="0.6"/>
<path d="M823.3,809.7 L834.2,803.0 L838.2,810.0 L827.3,816.7 Z" fill="#6d6d68" stroke="#6d6d68" stroke-width="0.6"/>
<path d="M827.3,816.7 L838.2,810.0 L853.7,830.0 L842.8,836.6 Z" fill="#75746f" stroke="#75746f" stroke-width="0.6"/>
<path d="M834.2,803.0 L845.6,797.2 L849.6,804.2 L838.2,810.0 Z" fill="#605f5a" stroke="#605f5a" stroke-width="0.6"/>
<path d="M838.2,810.0 L849.6,804.2 L865.1,824.1 L853.7,830.0 Z" fill="#72726c" stroke="#72726c" stroke-width="0.6"/>
<path d="M845.6,797.2 L857.3,792.2 L861.3,799.2 L849.6,804.2 Z" fill="#54524d" stroke="#54524d" stroke-width="0.6"/>
<path d="M849.6,804.2 L861.3,799.2 L876.8,819.1 L865.1,824.1 Z" fill="#706f6a" stroke="#706f6a" stroke-width="0.6"/>
<path d="M857.3,792.2 L869.2,788.1 L873.2,795.1 L861.3,799.2 Z" fill="#4c4a45" stroke="#4c4a45" stroke-width="0.6"/>
<path d="M861.3,799.2 L873.2,795.1 L888.7,815.0 L876.8,819.1 Z" fill="#6d6c67" stroke="#6d6c67" stroke-width="0.6"/>
<path d="M869.2,788.1 L881.3,784.9 L885.3,791.9 L873.2,795.1 Z" fill="#4c4a45" stroke="#4c4a45" stroke-width="0.6"/>
<path d="M873.2,795.1 L885.3,791.9 L900.8,811.8 L888.7,815.0 Z" fill="#6a6964" stroke="#6a6964" stroke-width="0.6"/>
<path d="M881.3,784.9 L893.6,782.6 L897.6,789.6 L885.3,791.9 Z" fill="#4c4a45" stroke="#4c4a45" stroke-width="0.6"/>
<path d="M885.3,791.9 L897.6,789.6 L913.1,809.6 L900.8,811.8 Z" fill="#676661" stroke="#676661" stroke-width="0.6"/>
<path d="M893.6,782.6 L905.8,781.4 L909.8,788.4 L897.6,789.6 Z" fill="#4c4a45" stroke="#4c4a45" stroke-width="0.6"/>
<path d="M897.6,789.6 L909.8,788.4 L925.3,808.3 L913.1,809.6 Z" fill="#65645f" stroke="#65645f" stroke-width="0.6"/>
<path d="M905.8,781.4 L917.9,781.1 L921.9,788.1 L909.8,788.4 Z" fill="#4b4944" stroke="#4b4944" stroke-width="0.6"/>
<path d="M909.8,788.4 L921.9,788.1 L937.4,808.0 L925.3,808.3 Z" fill="#63625d" stroke="#63625d" stroke-width="0.6"/>
<path d="M917.9,781.1 L929.9,781.8 L933.9,788.8 L921.9,788.1 Z" fill="#4b4944" stroke="#4b4944" stroke-width="0.6"/>
<path d="M921.9,788.1 L933.9,788.8 L949.4,808.7 L937.4,808.0 Z" fill="#605f5a" stroke="#605f5a" stroke-width="0.6"/>
<path d="M929.9,781.8 L941.6,783.4 L945.6,790.4 L933.9,788.8 Z" fill="#4b4944" stroke="#4b4944" stroke-width="0.6"/>
<path d="M933.9,788.8 L945.6,790.4 L961.1,810.3 L949.4,808.7 Z" fill="#5e5d58" stroke="#5e5d58" stroke-width="0.6"/>
<path d="M941.6,783.4 L952.9,786.1 L956.9,793.1 L945.6,790.4 Z" fill="#4b4944" stroke="#4b4944" stroke-width="0.6"/>
<path d="M945.6,790.4 L956.9,793.1 L972.4,813.0 L961.1,810.3 Z" fill="#5c5b56" stroke="#5c5b56" stroke-width="0.6"/>
<path d="M952.9,786.1 L963.8,789.7 L967.8,796.7 L956.9,793.1 Z" fill="#4b4944" stroke="#4b4944" stroke-width="0.6"/>
<path d="M956.9,793.1 L967.8,796.7 L983.3,816.6 L972.4,813.0 Z" fill="#5a5954" stroke="#5a5954" stroke-width="0.6"/>
<path d="M963.8,789.7 L974.2,794.2 L978.2,801.2 L967.8,796.7 Z" fill="#4b4944" stroke="#4b4944" stroke-width="0.6"/>
<path d="M967.8,796.7 L978.2,801.2 L993.7,821.1 L983.3,816.6 Z" fill="#585752" stroke="#585752" stroke-width="0.6"/>
<path d="M974.2,794.2 L983.9,799.6 L987.9,806.6 L978.2,801.2 Z" fill="#4a4843" stroke="#4a4843" stroke-width="0.6"/>
<path d="M978.2,801.2 L987.9,806.6 L1003.4,826.5 L993.7,821.1 Z" fill="#565550" stroke="#565550" stroke-width="0.6"/>
<path d="M983.9,799.6 L993.0,805.9 L997.0,812.9 L987.9,806.6 Z" fill="#4a4843" stroke="#4a4843" stroke-width="0.6"/>
<path d="M987.9,806.6 L997.0,812.9 L1012.5,832.8 L1003.4,826.5 Z" fill="#54534f" stroke="#54534f" stroke-width="0.6"/>
<path d="M993.0,805.9 L1001.4,813.0 L1005.4,820.0 L997.0,812.9 Z" fill="#4a4843" stroke="#4a4843" stroke-width="0.6"/>
<path d="M997.0,812.9 L1005.4,820.0 L1020.9,839.9 L1012.5,832.8 Z" fill="#53524d" stroke="#53524d" stroke-width="0.6"/>
<path d="M1001.4,813.0 L1008.9,820.8 L1012.9,827.8 L1005.4,820.0 Z" fill="#4a4843" stroke="#4a4843" stroke-width="0.6"/>
<path d="M1005.4,820.0 L1012.9,827.8 L1028.4,847.8 L1020.9,839.9 Z" fill="#52514c" stroke="#52514c" stroke-width="0.6"/>
<path d="M1008.9,820.8 L1015.6,829.4 L1019.6,836.4 L1012.9,827.8 Z" fill="#4b4944" stroke="#4b4944" stroke-width="0.6"/>
<path d="M1012.9,827.8 L1019.6,836.4 L1035.1,856.3 L1028.4,847.8 Z" fill="#504f4b" stroke="#504f4b" stroke-width="0.6"/>
<path d="M1015.6,829.4 L1021.4,838.6 L1025.4,845.6 L1019.6,836.4 Z" fill="#4b4944" stroke="#4b4944" stroke-width="0.6"/>
<path d="M1019.6,836.4 L1025.4,845.6 L1040.9,865.6 L1035.1,856.3 Z" fill="#4f4e4a" stroke="#4f4e4a" stroke-width="0.6"/>
<path d="M1021.4,838.6 L1026.3,848.4 L1030.3,855.4 L1025.4,845.6 Z" fill="#4c4a45" stroke="#4c4a45" stroke-width="0.6"/>
<path d="M1025.4,845.6 L1030.3,855.4 L1045.8,875.3 L1040.9,865.6 Z" fill="#504f4b" stroke="#504f4b" stroke-width="0.6"/>
<path d="M1026.3,848.4 L1030.2,858.7 L1034.2,865.7 L1030.3,855.4 Z" fill="#4d4b46" stroke="#4d4b46" stroke-width="0.6"/>
<path d="M1030.3,855.4 L1034.2,865.7 L1049.7,885.6 L1045.8,875.3 Z" fill="#51504b" stroke="#51504b" stroke-width="0.6"/>
<path d="M1030.2,858.7 L1033.0,869.4 L1037.0,876.4 L1034.2,865.7 Z" fill="#4e4c47" stroke="#4e4c47" stroke-width="0.6"/>
<path d="M1034.2,865.7 L1037.0,876.4 L1052.5,896.4 L1049.7,885.6 Z" fill="#52514c" stroke="#52514c" stroke-width="0.6"/>
<path d="M1033.0,869.4 L1034.9,880.5 L1038.9,887.5 L1037.0,876.4 Z" fill="#4f4d48" stroke="#4f4d48" stroke-width="0.6"/>
<path d="M1037.0,876.4 L1038.9,887.5 L1054.4,907.5 L1052.5,896.4 Z" fill="#53524d" stroke="#53524d" stroke-width="0.6"/>
<path d="M1034.9,880.5 L1035.7,891.9 L1039.7,898.9 L1038.9,887.5 Z" fill="#504e49" stroke="#504e49" stroke-width="0.6"/>
<path d="M1038.9,887.5 L1039.7,898.9 L1055.2,918.8 L1054.4,907.5 Z" fill="#54534e" stroke="#54534e" stroke-width="0.6"/>
<path d="M771.0,954.3 L771.8,943.6 L775.8,950.6 L775.0,961.3 Z" fill="#7e7f79" stroke="#7e7f79" stroke-width="0.6"/>
<path d="M775.0,961.3 L775.8,950.6 L791.3,970.5 L790.5,981.3 Z" fill="#605c54" stroke="#605c54" stroke-width="0.6"/>
<path d="M771.8,943.6 L773.6,932.7 L777.6,939.7 L775.8,950.6 Z" fill="#81827c" stroke="#81827c" stroke-width="0.6"/>
<path d="M775.8,950.6 L777.6,939.7 L793.1,959.6 L791.3,970.5 Z" fill="#64615a" stroke="#64615a" stroke-width="0.6"/>
<path d="M773.6,932.7 L776.5,921.8 L780.5,928.8 L777.6,939.7 Z" fill="#84857f" stroke="#84857f" stroke-width="0.6"/>
<path d="M777.6,939.7 L780.5,928.8 L796.0,948.7 L793.1,959.6 Z" fill="#686660" stroke="#686660" stroke-width="0.6"/>
<path d="M776.5,921.8 L780.4,910.9 L784.4,917.9 L780.5,928.8 Z" fill="#878882" stroke="#878882" stroke-width="0.6"/>
<path d="M780.5,928.8 L784.4,917.9 L799.9,937.9 L796.0,948.7 Z" fill="#706e68" stroke="#706e68" stroke-width="0.6"/>
<path d="M780.4,910.9 L785.2,900.2 L789.2,907.2 L784.4,917.9 Z" fill="#8a8b85" stroke="#8a8b85" stroke-width="0.6"/>
<path d="M784.4,917.9 L789.2,907.2 L804.7,927.2 L799.9,937.9 Z" fill="#797772" stroke="#797772" stroke-width="0.6"/>
<path d="M785.2,900.2 L791.0,889.8 L795.0,896.8 L789.2,907.2 Z" fill="#8c8e88" stroke="#8c8e88" stroke-width="0.6"/>
<path d="M789.2,907.2 L795.0,896.8 L810.5,916.7 L804.7,927.2 Z" fill="#82817b" stroke="#82817b" stroke-width="0.6"/>
<path d="M791.0,889.8 L797.7,879.7 L801.7,886.7 L795.0,896.8 Z" fill="#8a8c86" stroke="#8a8c86" stroke-width="0.6"/>
<path d="M795.0,896.8 L801.7,886.7 L817.2,906.6 L810.5,916.7 Z" fill="#8c8a85" stroke="#8c8a85" stroke-width="0.6"/>
<path d="M797.7,879.7 L805.3,870.0 L809.3,877.0 L801.7,886.7 Z" fill="#888a84" stroke="#888a84" stroke-width="0.6"/>
<path d="M801.7,886.7 L809.3,877.0 L824.8,896.9 L817.2,906.6 Z" fill="#908f8a" stroke="#908f8a" stroke-width="0.6"/>
<path d="M805.3,870.0 L813.6,860.7 L817.6,867.7 L809.3,877.0 Z" fill="#868882" stroke="#868882" stroke-width="0.6"/>
<path d="M809.3,877.0 L817.6,867.7 L833.1,887.7 L824.8,896.9 Z" fill="#898883" stroke="#898883" stroke-width="0.6"/>
<path d="M813.6,860.7 L822.7,852.0 L826.7,859.0 L817.6,867.7 Z" fill="#848680" stroke="#848680" stroke-width="0.6"/>
<path d="M817.6,867.7 L826.7,859.0 L842.2,879.0 L833.1,887.7 Z" fill="#83827d" stroke="#83827d" stroke-width="0.6"/>
<path d="M822.7,852.0 L832.5,844.0 L836.5,851.0 L826.7,859.0 Z" fill="#83847f" stroke="#83847f" stroke-width="0.6"/>
<path d="M826.7,859.0 L836.5,851.0 L852.0,870.9 L842.2,879.0 Z" fill="#7c7b76" stroke="#7c7b76" stroke-width="0.6"/>
<path d="M832.5,844.0 L842.8,836.6 L846.8,843.6 L836.5,851.0 Z" fill="#797a75" stroke="#797a75" stroke-width="0.6"/>
<path d="M836.5,851.0 L846.8,843.6 L862.3,863.5 L852.0,870.9 Z" fill="#787772" stroke="#787772" stroke-width="0.6"/>
<path d="M842.8,836.6 L853.7,830.0 L857.7,837.0 L846.8,843.6 Z" fill="#6d6d68" stroke="#6d6d68" stroke-width="0.6"/>
<path d="M846.8,843.6 L857.7,837.0 L873.2,856.9 L862.3,863.5 Z" fill="#75746f" stroke="#75746f" stroke-width="0.6"/>
<path d="M853.7,830.0 L865.1,824.1 L869.1,831.1 L857.7,837.0 Z" fill="#605f5a" stroke="#605f5a" stroke-width="0.6"/>
<path d="M857.7,837.0 L869.1,831.1 L884.6,851.0 L873.2,856.9 Z" fill="#72726c" stroke="#72726c" stroke-width="0.6"/>
<path d="M865.1,824.1 L876.8,819.1 L880.8,826.1 L869.1,831.1 Z" fill="#54524d" stroke="#54524d" stroke-width="0.6"/>
<path d="M869.1,831.1 L880.8,826.1 L896.3,846.0 L884.6,851.0 Z" fill="#706f6a" stroke="#706f6a" stroke-width="0.6"/>
<path d="M876.8,819.1 L888.7,815.0 L892.7,822.0 L880.8,826.1 Z" fill="#4c4a45" stroke="#4c4a45" stroke-width="0.6"/>
<path d="M880.8,826.1 L892.7,822.0 L908.2,841.9 L896.3,846.0 Z" fill="#6d6c67" stroke="#6d6c67" stroke-width="0.6"/>
<path d="M888.7,815.0 L900.8,811.8 L904.8,818.8 L892.7,822.0 Z" fill="#4c4a45" stroke="#4c4a45" stroke-width="0.6"/>
<path d="M892.7,822.0 L904.8,818.8 L920.3,838.7 L908.2,841.9 Z" fill="#6a6964" stroke="#6a6964" stroke-width="0.6"/>
<path d="M900.8,811.8 L913.1,809.6 L917.1,816.6 L904.8,818.8 Z" fill="#4c4a45" stroke="#4c4a45" stroke-width="0.6"/>
<path d="M904.8,818.8 L917.1,816.6 L932.6,836.5 L920.3,838.7 Z" fill="#676661" stroke="#676661" stroke-width="0.6"/>
<path d="M913.1,809.6 L925.3,808.3 L929.3,815.3 L917.1,816.6 Z" fill="#4c4a45" stroke="#4c4a45" stroke-width="0.6"/>
<path d="M917.1,816.6 L929.3,815.3 L944.8,835.2 L932.6,836.5 Z" fill="#65645f" stroke="#65645f" stroke-width="0.6"/>
<path d="M925.3,808.3 L937.4,808.0 L941.4,815.0 L929.3,815.3 Z" fill="#4b4944" stroke="#4b4944" stroke-width="0.6"/>
<path d="M929.3,815.3 L941.4,815.0 L956.9,834.9 L944.8,835.2 Z" fill="#63625d" stroke="#63625d" stroke-width="0.6"/>
<path d="M937.4,808.0 L949.4,808.7 L953.4,815.7 L941.4,815.0 Z" fill="#4b4944" stroke="#4b4944" stroke-width="0.6"/>
<path d="M941.4,815.0 L953.4,815.7 L968.9,835.6 L956.9,834.9 Z" fill="#605f5a" stroke="#605f5a" stroke-width="0.6"/>
<path d="M949.4,808.7 L961.1,810.3 L965.1,817.3 L953.4,815.7 Z" fill="#4b4944" stroke="#4b4944" stroke-width="0.6"/>
<path d="M953.4,815.7 L965.1,817.3 L980.6,837.3 L968.9,835.6 Z" fill="#5e5d58" stroke="#5e5d58" stroke-width="0.6"/>
<path d="M961.1,810.3 L972.4,813.0 L976.4,820.0 L965.1,817.3 Z" fill="#4b4944" stroke="#4b4944" stroke-width="0.6"/>
<path d="M965.1,817.3 L976.4,820.0 L991.9,839.9 L980.6,837.3 Z" fill="#5c5b56" stroke="#5c5b56" stroke-width="0.6"/>
<path d="M972.4,813.0 L983.3,816.6 L987.3,823.6 L976.4,820.0 Z" fill="#4b4944" stroke="#4b4944" stroke-width="0.6"/>
<path d="M976.4,820.0 L987.3,823.6 L1002.8,843.5 L991.9,839.9 Z" fill="#5a5954" stroke="#5a5954" stroke-width="0.6"/>
<path d="M983.3,816.6 L993.7,821.1 L997.7,828.1 L987.3,823.6 Z" fill="#4b4944" stroke="#4b4944" stroke-width="0.6"/>
<path d="M987.3,823.6 L997.7,828.1 L1013.2,848.0 L1002.8,843.5 Z" fill="#585752" stroke="#585752" stroke-width="0.6"/>
<path d="M993.7,821.1 L1003.4,826.5 L1007.4,833.5 L997.7,828.1 Z" fill="#4a4843" stroke="#4a4843" stroke-width="0.6"/>
<path d="M997.7,828.1 L1007.4,833.5 L1022.9,853.5 L1013.2,848.0 Z" fill="#565550" stroke="#565550" stroke-width="0.6"/>
<path d="M1003.4,826.5 L1012.5,832.8 L1016.5,839.8 L1007.4,833.5 Z" fill="#4a4843" stroke="#4a4843" stroke-width="0.6"/>
<path d="M1007.4,833.5 L1016.5,839.8 L1032.0,859.7 L1022.9,853.5 Z" fill="#54534f" stroke="#54534f" stroke-width="0.6"/>
<path d="M1012.5,832.8 L1020.9,839.9 L1024.9,846.9 L1016.5,839.8 Z" fill="#4a4843" stroke="#4a4843" stroke-width="0.6"/>
<path d="M1016.5,839.8 L1024.9,846.9 L1040.4,866.8 L1032.0,859.7 Z" fill="#53524d" stroke="#53524d" stroke-width="0.6"/>
<path d="M1020.9,839.9 L1028.4,847.8 L1032.4,854.8 L1024.9,846.9 Z" fill="#4a4843" stroke="#4a4843" stroke-width="0.6"/>
<path d="M1024.9,846.9 L1032.4,854.8 L1047.9,874.7 L1040.4,866.8 Z" fill="#52514c" stroke="#52514c" stroke-width="0.6"/>
<path d="M1028.4,847.8 L1035.1,856.3 L1039.1,863.3 L1032.4,854.8 Z" fill="#4b4944" stroke="#4b4944" stroke-width="0.6"/>
<path d="M1032.4,854.8 L1039.1,863.3 L1054.6,883.3 L1047.9,874.7 Z" fill="#504f4b" stroke="#504f4b" stroke-width="0.6"/>
<path d="M1035.1,856.3 L1040.9,865.6 L1044.9,872.6 L1039.1,863.3 Z" fill="#4b4944" stroke="#4b4944" stroke-width="0.6"/>
<path d="M1039.1,863.3 L1044.9,872.6 L1060.4,892.5 L1054.6,883.3 Z" fill="#4f4e4a" stroke="#4f4e4a" stroke-width="0.6"/>
<path d="M1040.9,865.6 L1045.8,875.3 L1049.8,882.3 L1044.9,872.6 Z" fill="#4c4a45" stroke="#4c4a45" stroke-width="0.6"/>
<path d="M1044.9,872.6 L1049.8,882.3 L1065.3,902.3 L1060.4,892.5 Z" fill="#504f4b" stroke="#504f4b" stroke-width="0.6"/>
<path d="M1045.8,875.3 L1049.7,885.6 L1053.7,892.6 L1049.8,882.3 Z" fill="#4d4b46" stroke="#4d4b46" stroke-width="0.6"/>
<path d="M1049.8,882.3 L1053.7,892.6 L1069.2,912.6 L1065.3,902.3 Z" fill="#51504b" stroke="#51504b" stroke-width="0.6"/>
<path d="M1049.7,885.6 L1052.5,896.4 L1056.5,903.4 L1053.7,892.6 Z" fill="#4e4c47" stroke="#4e4c47" stroke-width="0.6"/>
<path d="M1053.7,892.6 L1056.5,903.4 L1072.0,923.3 L1069.2,912.6 Z" fill="#52514c" stroke="#52514c" stroke-width="0.6"/>
<path d="M1052.5,896.4 L1054.4,907.5 L1058.4,914.5 L1056.5,903.4 Z" fill="#4f4d48" stroke="#4f4d48" stroke-width="0.6"/>
<path d="M1056.5,903.4 L1058.4,914.5 L1073.9,934.4 L1072.0,923.3 Z" fill="#53524d" stroke="#53524d" stroke-width="0.6"/>
<path d="M1054.4,907.5 L1055.2,918.8 L1059.2,925.8 L1058.4,914.5 Z" fill="#504e49" stroke="#504e49" stroke-width="0.6"/>
<path d="M1058.4,914.5 L1059.2,925.8 L1074.7,945.7 L1073.9,934.4 Z" fill="#54534e" stroke="#54534e" stroke-width="0.6"/>
<path d="M790.5,981.3 L791.3,970.5 L795.3,977.5 L794.5,988.3 Z" fill="#7e7f79" stroke="#7e7f79" stroke-width="0.6"/>
<path d="M794.5,988.3 L795.3,977.5 L810.8,997.4 L810.0,1008.2 Z" fill="#605c54" stroke="#605c54" stroke-width="0.6"/>
<path d="M791.3,970.5 L793.1,959.6 L797.1,966.6 L795.3,977.5 Z" fill="#81827c" stroke="#81827c" stroke-width="0.6"/>
<path d="M795.3,977.5 L797.1,966.6 L812.6,986.5 L810.8,997.4 Z" fill="#64615a" stroke="#64615a" stroke-width="0.6"/>
<path d="M793.1,959.6 L796.0,948.7 L800.0,955.7 L797.1,966.6 Z" fill="#84857f" stroke="#84857f" stroke-width="0.6"/>
<path d="M797.1,966.6 L800.0,955.7 L815.5,975.6 L812.6,986.5 Z" fill="#686660" stroke="#686660" stroke-width="0.6"/>
<path d="M796.0,948.7 L799.9,937.9 L803.9,944.9 L800.0,955.7 Z" fill="#878882" stroke="#878882" stroke-width="0.6"/>
<path d="M800.0,955.7 L803.9,944.9 L819.4,964.8 L815.5,975.6 Z" fill="#706e68" stroke="#706e68" stroke-width="0.6"/>
<path d="M799.9,937.9 L804.7,927.2 L808.7,934.2 L803.9,944.9 Z" fill="#8a8b85" stroke="#8a8b85" stroke-width="0.6"/>
<path d="M803.9,944.9 L808.7,934.2 L824.2,954.1 L819.4,964.8 Z" fill="#797772" stroke="#797772" stroke-width="0.6"/>
<path d="M804.7,927.2 L810.5,916.7 L814.5,923.7 L808.7,934.2 Z" fill="#8c8e88" stroke="#8c8e88" stroke-width="0.6"/>
<path d="M808.7,934.2 L814.5,923.7 L830.0,943.7 L824.2,954.1 Z" fill="#82817b" stroke="#82817b" stroke-width="0.6"/>
<path d="M810.5,916.7 L817.2,906.6 L821.2,913.6 L814.5,923.7 Z" fill="#8a8c86" stroke="#8a8c86" stroke-width="0.6"/>
<path d="M814.5,923.7 L821.2,913.6 L836.7,933.5 L830.0,943.7 Z" fill="#8c8a85" stroke="#8c8a85" stroke-width="0.6"/>
<path d="M817.2,906.6 L824.8,896.9 L828.8,903.9 L821.2,913.6 Z" fill="#888a84" stroke="#888a84" stroke-width="0.6"/>
<path d="M821.2,913.6 L828.8,903.9 L844.3,923.8 L836.7,933.5 Z" fill="#908f8a" stroke="#908f8a" stroke-width="0.6"/>
<path d="M824.8,896.9 L833.1,887.7 L837.1,894.7 L828.8,903.9 Z" fill="#868882" stroke="#868882" stroke-width="0.6"/>
<path d="M828.8,903.9 L837.1,894.7 L852.6,914.6 L844.3,923.8 Z" fill="#898883" stroke="#898883" stroke-width="0.6"/>
<path d="M833.1,887.7 L842.2,879.0 L846.2,886.0 L837.1,894.7 Z" fill="#848680" stroke="#848680" stroke-width="0.6"/>
<path d="M837.1,894.7 L846.2,886.0 L861.7,905.9 L852.6,914.6 Z" fill="#83827d" stroke="#83827d" stroke-width="0.6"/>
<path d="M842.2,879.0 L852.0,870.9 L856.0,877.9 L846.2,886.0 Z" fill="#83847f" stroke="#83847f" stroke-width="0.6"/>
<path d="M846.2,886.0 L856.0,877.9 L871.5,897.8 L861.7,905.9 Z" fill="#7c7b76" stroke="#7c7b76" stroke-width="0.6"/>
<path d="M852.0,870.9 L862.3,863.5 L866.3,870.5 L856.0,877.9 Z" fill="#797a75" stroke="#797a75" stroke-width="0.6"/>
<path d="M856.0,877.9 L866.3,870.5 L881.8,890.5 L871.5,897.8 Z" fill="#787772" stroke="#787772" stroke-width="0.6"/>
<path d="M862.3,863.5 L873.2,856.9 L877.2,863.9 L866.3,870.5 Z" fill="#6d6d68" stroke="#6d6d68" stroke-width="0.6"/>
<path d="M866.3,870.5 L877.2,863.9 L892.7,883.8 L881.8,890.5 Z" fill="#75746f" stroke="#75746f" stroke-width="0.6"/>
<path d="M873.2,856.9 L884.6,851.0 L888.6,858.0 L877.2,863.9 Z" fill="#605f5a" stroke="#605f5a" stroke-width="0.6"/>
<path d="M877.2,863.9 L888.6,858.0 L904.1,878.0 L892.7,883.8 Z" fill="#72726c" stroke="#72726c" stroke-width="0.6"/>
<path d="M884.6,851.0 L896.3,846.0 L900.3,853.0 L888.6,858.0 Z" fill="#54524d" stroke="#54524d" stroke-width="0.6"/>
<path d="M888.6,858.0 L900.3,853.0 L915.8,873.0 L904.1,878.0 Z" fill="#706f6a" stroke="#706f6a" stroke-width="0.6"/>
<path d="M896.3,846.0 L908.2,841.9 L912.2,848.9 L900.3,853.0 Z" fill="#4c4a45" stroke="#4c4a45" stroke-width="0.6"/>
<path d="M900.3,853.0 L912.2,848.9 L927.7,868.9 L915.8,873.0 Z" fill="#6d6c67" stroke="#6d6c67" stroke-width="0.6"/>
<path d="M908.2,841.9 L920.3,838.7 L924.3,845.7 L912.2,848.9 Z" fill="#4c4a45" stroke="#4c4a45" stroke-width="0.6"/>
<path d="M912.2,848.9 L924.3,845.7 L939.8,865.7 L927.7,868.9 Z" fill="#6a6964" stroke="#6a6964" stroke-width="0.6"/>
<path d="M920.3,838.7 L932.6,836.5 L936.6,843.5 L924.3,845.7 Z" fill="#4c4a45" stroke="#4c4a45" stroke-width="0.6"/>
<path d="M924.3,845.7 L936.6,843.5 L952.1,863.4 L939.8,865.7 Z" fill="#676661" stroke="#676661" stroke-width="0.6"/>
<path d="M932.6,836.5 L944.8,835.2 L948.8,842.2 L936.6,843.5 Z" fill="#4c4a45" stroke="#4c4a45" stroke-width="0.6"/>
<path d="M936.6,843.5 L948.8,842.2 L964.3,862.2 L952.1,863.4 Z" fill="#65645f" stroke="#65645f" stroke-width="0.6"/>
<path d="M944.8,835.2 L956.9,834.9 L960.9,841.9 L948.8,842.2 Z" fill="#4b4944" stroke="#4b4944" stroke-width="0.6"/>
<path d="M948.8,842.2 L960.9,841.9 L976.4,861.9 L964.3,862.2 Z" fill="#63625d" stroke="#63625d" stroke-width="0.6"/>
<path d="M956.9,834.9 L968.9,835.6 L972.9,842.6 L960.9,841.9 Z" fill="#4b4944" stroke="#4b4944" stroke-width="0.6"/>
<path d="M960.9,841.9 L972.9,842.6 L988.4,862.5 L976.4,861.9 Z" fill="#605f5a" stroke="#605f5a" stroke-width="0.6"/>
<path d="M968.9,835.6 L980.6,837.3 L984.6,844.3 L972.9,842.6 Z" fill="#4b4944" stroke="#4b4944" stroke-width="0.6"/>
<path d="M972.9,842.6 L984.6,844.3 L1000.1,864.2 L988.4,862.5 Z" fill="#5e5d58" stroke="#5e5d58" stroke-width="0.6"/>
<path d="M980.6,837.3 L991.9,839.9 L995.9,846.9 L984.6,844.3 Z" fill="#4b4944" stroke="#4b4944" stroke-width="0.6"/>
<path d="M984.6,844.3 L995.9,846.9 L1011.4,866.8 L1000.1,864.2 Z" fill="#5c5b56" stroke="#5c5b56" stroke-width="0.6"/>
<path d="M991.9,839.9 L1002.8,843.5 L1006.8,850.5 L995.9,846.9 Z" fill="#4b4944" stroke="#4b4944" stroke-width="0.6"/>
<path d="M995.9,846.9 L1006.8,850.5 L1022.3,870.4 L1011.4,866.8 Z" fill="#5a5954" stroke="#5a5954" stroke-width="0.6"/>
<path d="M1002.8,843.5 L1013.2,848.0 L1017.2,855.0 L1006.8,850.5 Z" fill="#4b4944" stroke="#4b4944" stroke-width="0.6"/>
<path d="M1006.8,850.5 L1017.2,855.0 L1032.7,875.0 L1022.3,870.4 Z" fill="#585752" stroke="#585752" stroke-width="0.6"/>
<path d="M1013.2,848.0 L1022.9,853.5 L1026.9,860.5 L1017.2,855.0 Z" fill="#4a4843" stroke="#4a4843" stroke-width="0.6"/>
<path d="M1017.2,855.0 L1026.9,860.5 L1042.4,880.4 L1032.7,875.0 Z" fill="#565550" stroke="#565550" stroke-width="0.6"/>
<path d="M1022.9,853.5 L1032.0,859.7 L1036.0,866.7 L1026.9,860.5 Z" fill="#4a4843" stroke="#4a4843" stroke-width="0.6"/>
<path d="M1026.9,860.5 L1036.0,866.7 L1051.5,886.7 L1042.4,880.4 Z" fill="#54534f" stroke="#54534f" stroke-width="0.6"/>
<path d="M1032.0,859.7 L1040.4,866.8 L1044.4,873.8 L1036.0,866.7 Z" fill="#4a4843" stroke="#4a4843" stroke-width="0.6"/>
<path d="M1036.0,866.7 L1044.4,873.8 L1059.9,893.8 L1051.5,886.7 Z" fill="#53524d" stroke="#53524d" stroke-width="0.6"/>
<path d="M1040.4,866.8 L1047.9,874.7 L1051.9,881.7 L1044.4,873.8 Z" fill="#4a4843" stroke="#4a4843" stroke-width="0.6"/>
<path d="M1044.4,873.8 L1051.9,881.7 L1067.4,901.6 L1059.9,893.8 Z" fill="#52514c" stroke="#52514c" stroke-width="0.6"/>
<path d="M1047.9,874.7 L1054.6,883.3 L1058.6,890.3 L1051.9,881.7 Z" fill="#4b4944" stroke="#4b4944" stroke-width="0.6"/>
<path d="M1051.9,881.7 L1058.6,890.3 L1074.1,910.2 L1067.4,901.6 Z" fill="#504f4b" stroke="#504f4b" stroke-width="0.6"/>
<path d="M1054.6,883.3 L1060.4,892.5 L1064.4,899.5 L1058.6,890.3 Z" fill="#4b4944" stroke="#4b4944" stroke-width="0.6"/>
<path d="M1058.6,890.3 L1064.4,899.5 L1079.9,919.4 L1074.1,910.2 Z" fill="#4f4e4a" stroke="#4f4e4a" stroke-width="0.6"/>
<path d="M1060.4,892.5 L1065.3,902.3 L1069.3,909.3 L1064.4,899.5 Z" fill="#4c4a45" stroke="#4c4a45" stroke-width="0.6"/>
<path d="M1064.4,899.5 L1069.3,909.3 L1084.8,929.2 L1079.9,919.4 Z" fill="#504f4b" stroke="#504f4b" stroke-width="0.6"/>
<path d="M1065.3,902.3 L1069.2,912.6 L1073.2,919.6 L1069.3,909.3 Z" fill="#4d4b46" stroke="#4d4b46" stroke-width="0.6"/>
<path d="M1069.3,909.3 L1073.2,919.6 L1088.7,939.5 L1084.8,929.2 Z" fill="#51504b" stroke="#51504b" stroke-width="0.6"/>
<path d="M1069.2,912.6 L1072.0,923.3 L1076.0,930.3 L1073.2,919.6 Z" fill="#4e4c47" stroke="#4e4c47" stroke-width="0.6"/>
<path d="M1073.2,919.6 L1076.0,930.3 L1091.5,950.2 L1088.7,939.5 Z" fill="#52514c" stroke="#52514c" stroke-width="0.6"/>
<path d="M1072.0,923.3 L1073.9,934.4 L1077.9,941.4 L1076.0,930.3 Z" fill="#4f4d48" stroke="#4f4d48" stroke-width="0.6"/>
<path d="M1076.0,930.3 L1077.9,941.4 L1093.4,961.3 L1091.5,950.2 Z" fill="#53524d" stroke="#53524d" stroke-width="0.6"/>
<path d="M1073.9,934.4 L1074.7,945.7 L1078.7,952.7 L1077.9,941.4 Z" fill="#504e49" stroke="#504e49" stroke-width="0.6"/>
<path d="M1077.9,941.4 L1078.7,952.7 L1094.2,972.7 L1093.4,961.3 Z" fill="#54534e" stroke="#54534e" stroke-width="0.6"/>
<path d="M810.0,1008.2 L810.8,997.4 L814.8,1004.4 L814.0,1015.2 Z" fill="#7e7f79" stroke="#7e7f79" stroke-width="0.6"/>
<path d="M814.0,1015.2 L814.8,1004.4 L830.3,1024.3 L829.5,1035.1 Z" fill="#605c54" stroke="#605c54" stroke-width="0.6"/>
<path d="M810.8,997.4 L812.6,986.5 L816.6,993.5 L814.8,1004.4 Z" fill="#81827c" stroke="#81827c" stroke-width="0.6"/>
<path d="M814.8,1004.4 L816.6,993.5 L832.1,1013.5 L830.3,1024.3 Z" fill="#64615a" stroke="#64615a" stroke-width="0.6"/>
<path d="M812.6,986.5 L815.5,975.6 L819.5,982.6 L816.6,993.5 Z" fill="#84857f" stroke="#84857f" stroke-width="0.6"/>
<path d="M816.6,993.5 L819.5,982.6 L835.0,1002.5 L832.1,1013.5 Z" fill="#686660" stroke="#686660" stroke-width="0.6"/>
<path d="M815.5,975.6 L819.4,964.8 L823.4,971.8 L819.5,982.6 Z" fill="#878882" stroke="#878882" stroke-width="0.6"/>
<path d="M819.5,982.6 L823.4,971.8 L838.9,991.7 L835.0,1002.5 Z" fill="#706e68" stroke="#706e68" stroke-width="0.6"/>
<path d="M819.4,964.8 L824.2,954.1 L828.2,961.1 L823.4,971.8 Z" fill="#8a8b85" stroke="#8a8b85" stroke-width="0.6"/>
<path d="M823.4,971.8 L828.2,961.1 L843.7,981.0 L838.9,991.7 Z" fill="#797772" stroke="#797772" stroke-width="0.6"/>
<path d="M824.2,954.1 L830.0,943.7 L834.0,950.7 L828.2,961.1 Z" fill="#8c8e88" stroke="#8c8e88" stroke-width="0.6"/>
<path d="M828.2,961.1 L834.0,950.7 L849.5,970.6 L843.7,981.0 Z" fill="#82817b" stroke="#82817b" stroke-width="0.6"/>
<path d="M830.0,943.7 L836.7,933.5 L840.7,940.5 L834.0,950.7 Z" fill="#8a8c86" stroke="#8a8c86" stroke-width="0.6"/>
<path d="M834.0,950.7 L840.7,940.5 L856.2,960.5 L849.5,970.6 Z" fill="#8c8a85" stroke="#8c8a85" stroke-width="0.6"/>
<path d="M836.7,933.5 L844.3,923.8 L848.3,930.8 L840.7,940.5 Z" fill="#888a84" stroke="#888a84" stroke-width="0.6"/>
<path d="M840.7,940.5 L848.3,930.8 L863.8,950.8 L856.2,960.5 Z" fill="#908f8a" stroke="#908f8a" stroke-width="0.6"/>
<path d="M844.3,923.8 L852.6,914.6 L856.6,921.6 L848.3,930.8 Z" fill="#868882" stroke="#868882" stroke-width="0.6"/>
<path d="M848.3,930.8 L856.6,921.6 L872.1,941.5 L863.8,950.8 Z" fill="#898883" stroke="#898883" stroke-width="0.6"/>
<path d="M852.6,914.6 L861.7,905.9 L865.7,912.9 L856.6,921.6 Z" fill="#848680" stroke="#848680" stroke-width="0.6"/>
<path d="M856.6,921.6 L865.7,912.9 L881.2,932.8 L872.1,941.5 Z" fill="#83827d" stroke="#83827d" stroke-width="0.6"/>
<path d="M861.7,905.9 L871.5,897.8 L875.5,904.8 L865.7,912.9 Z" fill="#83847f" stroke="#83847f" stroke-width="0.6"/>
<path d="M865.7,912.9 L875.5,904.8 L891.0,924.8 L881.2,932.8 Z" fill="#7c7b76" stroke="#7c7b76" stroke-width="0.6"/>
<path d="M871.5,897.8 L881.8,890.5 L885.8,897.5 L875.5,904.8 Z" fill="#797a75" stroke="#797a75" stroke-width="0.6"/>
<path d="M875.5,904.8 L885.8,897.5 L901.3,917.4 L891.0,924.8 Z" fill="#787772" stroke="#787772" stroke-width="0.6"/>
<path d="M881.8,890.5 L892.7,883.8 L896.7,890.8 L885.8,897.5 Z" fill="#6d6d68" stroke="#6d6d68" stroke-width="0.6"/>
<path d="M885.8,897.5 L896.7,890.8 L912.2,910.7 L901.3,917.4 Z" fill="#75746f" stroke="#75746f" stroke-width="0.6"/>
<path d="M892.7,883.8 L904.1,878.0 L908.1,885.0 L896.7,890.8 Z" fill="#605f5a" stroke="#605f5a" stroke-width="0.6"/>
<path d="M896.7,890.8 L908.1,885.0 L923.6,904.9 L912.2,910.7 Z" fill="#72726c" stroke="#72726c" stroke-width="0.6"/>
<path d="M904.1,878.0 L915.8,873.0 L919.8,880.0 L908.1,885.0 Z" fill="#54524d" stroke="#54524d" stroke-width="0.6"/>
<path d="M908.1,885.0 L919.8,880.0 L935.3,899.9 L923.6,904.9 Z" fill="#706f6a" stroke="#706f6a" stroke-width="0.6"/>
<path d="M915.8,873.0 L927.7,868.9 L931.7,875.9 L919.8,880.0 Z" fill="#4c4a45" stroke="#4c4a45" stroke-width="0.6"/>
<path d="M919.8,880.0 L931.7,875.9 L947.2,895.8 L935.3,899.9 Z" fill="#6d6c67" stroke="#6d6c67" stroke-width="0.6"/>
<path d="M927.7,868.9 L939.8,865.7 L943.8,872.7 L931.7,875.9 Z" fill="#4c4a45" stroke="#4c4a45" stroke-width="0.6"/>
<path d="M931.7,875.9 L943.8,872.7 L959.3,892.6 L947.2,895.8 Z" fill="#6a6964" stroke="#6a6964" stroke-width="0.6"/>
<path d="M939.8,865.7 L952.1,863.4 L956.1,870.4 L943.8,872.7 Z" fill="#4c4a45" stroke="#4c4a45" stroke-width="0.6"/>
<path d="M943.8,872.7 L956.1,870.4 L971.6,890.4 L959.3,892.6 Z" fill="#676661" stroke="#676661" stroke-width="0.6"/>
<path d="M952.1,863.4 L964.3,862.2 L968.3,869.2 L956.1,870.4 Z" fill="#4c4a45" stroke="#4c4a45" stroke-width="0.6"/>
<path d="M956.1,870.4 L968.3,869.2 L983.8,889.1 L971.6,890.4 Z" fill="#65645f" stroke="#65645f" stroke-width="0.6"/>
<path d="M964.3,862.2 L976.4,861.9 L980.4,868.9 L968.3,869.2 Z" fill="#4b4944" stroke="#4b4944" stroke-width="0.6"/>
<path d="M968.3,869.2 L980.4,868.9 L995.9,888.8 L983.8,889.1 Z" fill="#63625d" stroke="#63625d" stroke-width="0.6"/>
<path d="M976.4,861.9 L988.4,862.5 L992.4,869.5 L980.4,868.9 Z" fill="#4b4944" stroke="#4b4944" stroke-width="0.6"/>
<path d="M980.4,868.9 L992.4,869.5 L1007.9,889.5 L995.9,888.8 Z" fill="#605f5a" stroke="#605f5a" stroke-width="0.6"/>
<path d="M988.4,862.5 L1000.1,864.2 L1004.1,871.2 L992.4,869.5 Z" fill="#4b4944" stroke="#4b4944" stroke-width="0.6"/>
<path d="M992.4,869.5 L1004.1,871.2 L1019.6,891.1 L1007.9,889.5 Z" fill="#5e5d58" stroke="#5e5d58" stroke-width="0.6"/>
<path d="M1000.1,864.2 L1011.4,866.8 L1015.4,873.8 L1004.1,871.2 Z" fill="#4b4944" stroke="#4b4944" stroke-width="0.6"/>
<path d="M1004.1,871.2 L1015.4,873.8 L1030.9,893.8 L1019.6,891.1 Z" fill="#5c5b56" stroke="#5c5b56" stroke-width="0.6"/>
<path d="M1011.4,866.8 L1022.3,870.4 L1026.3,877.4 L1015.4,873.8 Z" fill="#4b4944" stroke="#4b4944" stroke-width="0.6"/>
<path d="M1015.4,873.8 L1026.3,877.4 L1041.8,897.4 L1030.9,893.8 Z" fill="#5a5954" stroke="#5a5954" stroke-width="0.6"/>
<path d="M1022.3,870.4 L1032.7,875.0 L1036.7,882.0 L1026.3,877.4 Z" fill="#4b4944" stroke="#4b4944" stroke-width="0.6"/>
<path d="M1026.3,877.4 L1036.7,882.0 L1052.2,901.9 L1041.8,897.4 Z" fill="#585752" stroke="#585752" stroke-width="0.6"/>
<path d="M1032.7,875.0 L1042.4,880.4 L1046.4,887.4 L1036.7,882.0 Z" fill="#4a4843" stroke="#4a4843" stroke-width="0.6"/>
<path d="M1036.7,882.0 L1046.4,887.4 L1061.9,907.3 L1052.2,901.9 Z" fill="#565550" stroke="#565550" stroke-width="0.6"/>
<path d="M1042.4,880.4 L1051.5,886.7 L1055.5,893.7 L1046.4,887.4 Z" fill="#4a4843" stroke="#4a4843" stroke-width="0.6"/>
<path d="M1046.4,887.4 L1055.5,893.7 L1071.0,913.6 L1061.9,907.3 Z" fill="#54534f" stroke="#54534f" stroke-width="0.6"/>
<path d="M1051.5,886.7 L1059.9,893.8 L1063.9,900.8 L1055.5,893.7 Z" fill="#4a4843" stroke="#4a4843" stroke-width="0.6"/>
<path d="M1055.5,893.7 L1063.9,900.8 L1079.4,920.7 L1071.0,913.6 Z" fill="#53524d" stroke="#53524d" stroke-width="0.6"/>
<path d="M1059.9,893.8 L1067.4,901.6 L1071.4,908.6 L1063.9,900.8 Z" fill="#4a4843" stroke="#4a4843" stroke-width="0.6"/>
<path d="M1063.9,900.8 L1071.4,908.6 L1086.9,928.6 L1079.4,920.7 Z" fill="#52514c" stroke="#52514c" stroke-width="0.6"/>
<path d="M1067.4,901.6 L1074.1,910.2 L1078.1,917.2 L1071.4,908.6 Z" fill="#4b4944" stroke="#4b4944" stroke-width="0.6"/>
<path d="M1071.4,908.6 L1078.1,917.2 L1093.6,937.1 L1086.9,928.6 Z" fill="#504f4b" stroke="#504f4b" stroke-width="0.6"/>
<path d="M1074.1,910.2 L1079.9,919.4 L1083.9,926.4 L1078.1,917.2 Z" fill="#4b4944" stroke="#4b4944" stroke-width="0.6"/>
<path d="M1078.1,917.2 L1083.9,926.4 L1099.4,946.3 L1093.6,937.1 Z" fill="#4f4e4a" stroke="#4f4e4a" stroke-width="0.6"/>
<path d="M1079.9,919.4 L1084.8,929.2 L1088.8,936.2 L1083.9,926.4 Z" fill="#4c4a45" stroke="#4c4a45" stroke-width="0.6"/>
<path d="M1083.9,926.4 L1088.8,936.2 L1104.3,956.1 L1099.4,946.3 Z" fill="#504f4b" stroke="#504f4b" stroke-width="0.6"/>
<path d="M1084.8,929.2 L1088.7,939.5 L1092.7,946.5 L1088.8,936.2 Z" fill="#4d4b46" stroke="#4d4b46" stroke-width="0.6"/>
<path d="M1088.8,936.2 L1092.7,946.5 L1108.2,966.4 L1104.3,956.1 Z" fill="#51504b" stroke="#51504b" stroke-width="0.6"/>
<path d="M1088.7,939.5 L1091.5,950.2 L1095.5,957.2 L1092.7,946.5 Z" fill="#4e4c47" stroke="#4e4c47" stroke-width="0.6"/>
<path d="M1092.7,946.5 L1095.5,957.2 L1111.0,977.2 L1108.2,966.4 Z" fill="#52514c" stroke="#52514c" stroke-width="0.6"/>
<path d="M1091.5,950.2 L1093.4,961.3 L1097.4,968.3 L1095.5,957.2 Z" fill="#4f4d48" stroke="#4f4d48" stroke-width="0.6"/>
<path d="M1095.5,957.2 L1097.4,968.3 L1112.9,988.2 L1111.0,977.2 Z" fill="#53524d" stroke="#53524d" stroke-width="0.6"/>
<path d="M1093.4,961.3 L1094.2,972.7 L1098.2,979.7 L1097.4,968.3 Z" fill="#504e49" stroke="#504e49" stroke-width="0.6"/>
<path d="M1097.4,968.3 L1098.2,979.7 L1113.7,999.6 L1112.9,988.2 Z" fill="#54534e" stroke="#54534e" stroke-width="0.6"/>
<path d="M829.5,1035.1 L830.3,1024.3 L834.3,1031.3 L833.5,1042.1 Z" fill="#7e7f79" stroke="#7e7f79" stroke-width="0.6"/>
<path d="M833.5,1042.1 L834.3,1031.3 L849.8,1051.3 L849.0,1062.1 Z" fill="#605c54" stroke="#605c54" stroke-width="0.6"/>
<path d="M830.3,1024.3 L832.1,1013.5 L836.1,1020.5 L834.3,1031.3 Z" fill="#81827c" stroke="#81827c" stroke-width="0.6"/>
<path d="M834.3,1031.3 L836.1,1020.5 L851.6,1040.4 L849.8,1051.3 Z" fill="#64615a" stroke="#64615a" stroke-width="0.6"/>
<path d="M832.1,1013.5 L835.0,1002.5 L839.0,1009.5 L836.1,1020.5 Z" fill="#84857f" stroke="#84857f" stroke-width="0.6"/>
<path d="M836.1,1020.5 L839.0,1009.5 L854.5,1029.5 L851.6,1040.4 Z" fill="#686660" stroke="#686660" stroke-width="0.6"/>
<path d="M835.0,1002.5 L838.9,991.7 L842.9,998.7 L839.0,1009.5 Z" fill="#878882" stroke="#878882" stroke-width="0.6"/>
<path d="M839.0,1009.5 L842.9,998.7 L858.4,1018.6 L854.5,1029.5 Z" fill="#706e68" stroke="#706e68" stroke-width="0.6"/>
<path d="M838.9,991.7 L843.7,981.0 L847.7,988.0 L842.9,998.7 Z" fill="#8a8b85" stroke="#8a8b85" stroke-width="0.6"/>
<path d="M842.9,998.7 L847.7,988.0 L863.2,1008.0 L858.4,1018.6 Z" fill="#797772" stroke="#797772" stroke-width="0.6"/>
<path d="M843.7,981.0 L849.5,970.6 L853.5,977.6 L847.7,988.0 Z" fill="#8c8e88" stroke="#8c8e88" stroke-width="0.6"/>
<path d="M847.7,988.0 L853.5,977.6 L869.0,997.5 L863.2,1008.0 Z" fill="#82817b" stroke="#82817b" stroke-width="0.6"/>
<path d="M849.5,970.6 L856.2,960.5 L860.2,967.5 L853.5,977.6 Z" fill="#8a8c86" stroke="#8a8c86" stroke-width="0.6"/>
<path d="M853.5,977.6 L860.2,967.5 L875.7,987.4 L869.0,997.5 Z" fill="#8c8a85" stroke="#8c8a85" stroke-width="0.6"/>
<path d="M856.2,960.5 L863.8,950.8 L867.8,957.8 L860.2,967.5 Z" fill="#888a84" stroke="#888a84" stroke-width="0.6"/>
<path d="M860.2,967.5 L867.8,957.8 L883.3,977.7 L875.7,987.4 Z" fill="#908f8a" stroke="#908f8a" stroke-width="0.6"/>
<path d="M863.8,950.8 L872.1,941.5 L876.1,948.5 L867.8,957.8 Z" fill="#868882" stroke="#868882" stroke-width="0.6"/>
<path d="M867.8,957.8 L876.1,948.5 L891.6,968.4 L883.3,977.7 Z" fill="#898883" stroke="#898883" stroke-width="0.6"/>
<path d="M872.1,941.5 L881.2,932.8 L885.2,939.8 L876.1,948.5 Z" fill="#848680" stroke="#848680" stroke-width="0.6"/>
<path d="M876.1,948.5 L885.2,939.8 L900.7,959.8 L891.6,968.4 Z" fill="#83827d" stroke="#83827d" stroke-width="0.6"/>
<path d="M881.2,932.8 L891.0,924.8 L895.0,931.8 L885.2,939.8 Z" fill="#83847f" stroke="#83847f" stroke-width="0.6"/>
<path d="M885.2,939.8 L895.0,931.8 L910.5,951.7 L900.7,959.8 Z" fill="#7c7b76" stroke="#7c7b76" stroke-width="0.6"/>
<path d="M891.0,924.8 L901.3,917.4 L905.3,924.4 L895.0,931.8 Z" fill="#797a75" stroke="#797a75" stroke-width="0.6"/>
<path d="M895.0,931.8 L905.3,924.4 L920.8,944.3 L910.5,951.7 Z" fill="#787772" stroke="#787772" stroke-width="0.6"/>
<path d="M901.3,917.4 L912.2,910.7 L916.2,917.7 L905.3,924.4 Z" fill="#6d6d68" stroke="#6d6d68" stroke-width="0.6"/>
<path d="M905.3,924.4 L916.2,917.7 L931.7,937.7 L920.8,944.3 Z" fill="#75746f" stroke="#75746f" stroke-width="0.6"/>
<path d="M912.2,910.7 L923.6,904.9 L927.6,911.9 L916.2,917.7 Z" fill="#605f5a" stroke="#605f5a" stroke-width="0.6"/>
<path d="M916.2,917.7 L927.6,911.9 L943.1,931.8 L931.7,937.7 Z" fill="#72726c" stroke="#72726c" stroke-width="0.6"/>
<path d="M923.6,904.9 L935.3,899.9 L939.3,906.9 L927.6,911.9 Z" fill="#54524d" stroke="#54524d" stroke-width="0.6"/>
<path d="M927.6,911.9 L939.3,906.9 L954.8,926.8 L943.1,931.8 Z" fill="#706f6a" stroke="#706f6a" stroke-width="0.6"/>
<path d="M935.3,899.9 L947.2,895.8 L951.2,902.8 L939.3,906.9 Z" fill="#4c4a45" stroke="#4c4a45" stroke-width="0.6"/>
<path d="M939.3,906.9 L951.2,902.8 L966.7,922.7 L954.8,926.8 Z" fill="#6d6c67" stroke="#6d6c67" stroke-width="0.6"/>
<path d="M947.2,895.8 L959.3,892.6 L963.3,899.6 L951.2,902.8 Z" fill="#4c4a45" stroke="#4c4a45" stroke-width="0.6"/>
<path d="M951.2,902.8 L963.3,899.6 L978.8,919.5 L966.7,922.7 Z" fill="#6a6964" stroke="#6a6964" stroke-width="0.6"/>
<path d="M959.3,892.6 L971.6,890.4 L975.6,897.4 L963.3,899.6 Z" fill="#4c4a45" stroke="#4c4a45" stroke-width="0.6"/>
<path d="M963.3,899.6 L975.6,897.4 L991.1,917.3 L978.8,919.5 Z" fill="#676661" stroke="#676661" stroke-width="0.6"/>
<path d="M971.6,890.4 L983.8,889.1 L987.8,896.1 L975.6,897.4 Z" fill="#4c4a45" stroke="#4c4a45" stroke-width="0.6"/>
<path d="M975.6,897.4 L987.8,896.1 L1003.3,916.0 L991.1,917.3 Z" fill="#65645f" stroke="#65645f" stroke-width="0.6"/>
<path d="M983.8,889.1 L995.9,888.8 L999.9,895.8 L987.8,896.1 Z" fill="#4b4944" stroke="#4b4944" stroke-width="0.6"/>
<path d="M987.8,896.1 L999.9,895.8 L1015.4,915.7 L1003.3,916.0 Z" fill="#63625d" stroke="#63625d" stroke-width="0.6"/>
<path d="M995.9,888.8 L1007.9,889.5 L1011.9,896.5 L999.9,895.8 Z" fill="#4b4944" stroke="#4b4944" stroke-width="0.6"/>
<path d="M999.9,895.8 L1011.9,896.5 L1027.4,916.4 L1015.4,915.7 Z" fill="#605f5a" stroke="#605f5a" stroke-width="0.6"/>
<path d="M1007.9,889.5 L1019.6,891.1 L1023.6,898.1 L1011.9,896.5 Z" fill="#4b4944" stroke="#4b4944" stroke-width="0.6"/>
<path d="M1011.9,896.5 L1023.6,898.1 L1039.1,918.1 L1027.4,916.4 Z" fill="#5e5d58" stroke="#5e5d58" stroke-width="0.6"/>
<path d="M1019.6,891.1 L1030.9,893.8 L1034.9,900.8 L1023.6,898.1 Z" fill="#4b4944" stroke="#4b4944" stroke-width="0.6"/>
<path d="M1023.6,898.1 L1034.9,900.8 L1050.4,920.7 L1039.1,918.1 Z" fill="#5c5b56" stroke="#5c5b56" stroke-width="0.6"/>
<path d="M1030.9,893.8 L1041.8,897.4 L1045.8,904.4 L1034.9,900.8 Z" fill="#4b4944" stroke="#4b4944" stroke-width="0.6"/>
<path d="M1034.9,900.8 L1045.8,904.4 L1061.3,924.3 L1050.4,920.7 Z" fill="#5a5954" stroke="#5a5954" stroke-width="0.6"/>
<path d="M1041.8,897.4 L1052.2,901.9 L1056.2,908.9 L1045.8,904.4 Z" fill="#4b4944" stroke="#4b4944" stroke-width="0.6"/>
<path d="M1045.8,904.4 L1056.2,908.9 L1071.7,928.8 L1061.3,924.3 Z" fill="#585752" stroke="#585752" stroke-width="0.6"/>
<path d="M1052.2,901.9 L1061.9,907.3 L1065.9,914.3 L1056.2,908.9 Z" fill="#4a4843" stroke="#4a4843" stroke-width="0.6"/>
<path d="M1056.2,908.9 L1065.9,914.3 L1081.4,934.2 L1071.7,928.8 Z" fill="#565550" stroke="#565550" stroke-width="0.6"/>
<path d="M1061.9,907.3 L1071.0,913.6 L1075.0,920.6 L1065.9,914.3 Z" fill="#4a4843" stroke="#4a4843" stroke-width="0.6"/>
<path d="M1065.9,914.3 L1075.0,920.6 L1090.5,940.5 L1081.4,934.2 Z" fill="#54534f" stroke="#54534f" stroke-width="0.6"/>
<path d="M1071.0,913.6 L1079.4,920.7 L1083.4,927.7 L1075.0,920.6 Z" fill="#4a4843" stroke="#4a4843" stroke-width="0.6"/>
<path d="M1075.0,920.6 L1083.4,927.7 L1098.9,947.6 L1090.5,940.5 Z" fill="#53524d" stroke="#53524d" stroke-width="0.6"/>
<path d="M1079.4,920.7 L1086.9,928.6 L1090.9,935.6 L1083.4,927.7 Z" fill="#4a4843" stroke="#4a4843" stroke-width="0.6"/>
<path d="M1083.4,927.7 L1090.9,935.6 L1106.4,955.5 L1098.9,947.6 Z" fill="#52514c" stroke="#52514c" stroke-width="0.6"/>
<path d="M1086.9,928.6 L1093.6,937.1 L1097.6,944.1 L1090.9,935.6 Z" fill="#4b4944" stroke="#4b4944" stroke-width="0.6"/>
<path d="M1090.9,935.6 L1097.6,944.1 L1113.1,964.1 L1106.4,955.5 Z" fill="#504f4b" stroke="#504f4b" stroke-width="0.6"/>
<path d="M1093.6,937.1 L1099.4,946.3 L1103.4,953.3 L1097.6,944.1 Z" fill="#4b4944" stroke="#4b4944" stroke-width="0.6"/>
<path d="M1097.6,944.1 L1103.4,953.3 L1118.9,973.3 L1113.1,964.1 Z" fill="#4f4e4a" stroke="#4f4e4a" stroke-width="0.6"/>
<path d="M1099.4,946.3 L1104.3,956.1 L1108.3,963.1 L1103.4,953.3 Z" fill="#4c4a45" stroke="#4c4a45" stroke-width="0.6"/>
<path d="M1103.4,953.3 L1108.3,963.1 L1123.8,983.1 L1118.9,973.3 Z" fill="#504f4b" stroke="#504f4b" stroke-width="0.6"/>
<path d="M1104.3,956.1 L1108.2,966.4 L1112.2,973.4 L1108.3,963.1 Z" fill="#4d4b46" stroke="#4d4b46" stroke-width="0.6"/>
<path d="M1108.3,963.1 L1112.2,973.4 L1127.7,993.4 L1123.8,983.1 Z" fill="#51504b" stroke="#51504b" stroke-width="0.6"/>
<path d="M1108.2,966.4 L1111.0,977.2 L1115.0,984.2 L1112.2,973.4 Z" fill="#4e4c47" stroke="#4e4c47" stroke-width="0.6"/>
<path d="M1112.2,973.4 L1115.0,984.2 L1130.5,1004.1 L1127.7,993.4 Z" fill="#52514c" stroke="#52514c" stroke-width="0.6"/>
<path d="M1111.0,977.2 L1112.9,988.2 L1116.9,995.2 L1115.0,984.2 Z" fill="#4f4d48" stroke="#4f4d48" stroke-width="0.6"/>
<path d="M1115.0,984.2 L1116.9,995.2 L1132.4,1015.2 L1130.5,1004.1 Z" fill="#53524d" stroke="#53524d" stroke-width="0.6"/>
<path d="M1112.9,988.2 L1113.7,999.6 L1117.7,1006.6 L1116.9,995.2 Z" fill="#504e49" stroke="#504e49" stroke-width="0.6"/>
<path d="M1116.9,995.2 L1117.7,1006.6 L1133.2,1026.5 L1132.4,1015.2 Z" fill="#54534e" stroke="#54534e" stroke-width="0.6"/>
<path d="M849.0,1062.1 L849.8,1051.3 L853.8,1058.3 L853.0,1069.1 Z" fill="#7e7f79" stroke="#7e7f79" stroke-width="0.6"/>
<path d="M853.0,1069.1 L853.8,1058.3 L869.3,1078.2 L868.5,1089.0 Z" fill="#605c54" stroke="#605c54" stroke-width="0.6"/>
<path d="M849.8,1051.3 L851.6,1040.4 L855.6,1047.4 L853.8,1058.3 Z" fill="#81827c" stroke="#81827c" stroke-width="0.6"/>
<path d="M853.8,1058.3 L855.6,1047.4 L871.1,1067.3 L869.3,1078.2 Z" fill="#64615a" stroke="#64615a" stroke-width="0.6"/>
<path d="M851.6,1040.4 L854.5,1029.5 L858.5,1036.5 L855.6,1047.4 Z" fill="#84857f" stroke="#84857f" stroke-width="0.6"/>
<path d="M855.6,1047.4 L858.5,1036.5 L874.0,1056.4 L871.1,1067.3 Z" fill="#686660" stroke="#686660" stroke-width="0.6"/>
<path d="M854.5,1029.5 L858.4,1018.6 L862.4,1025.6 L858.5,1036.5 Z" fill="#878882" stroke="#878882" stroke-width="0.6"/>
<path d="M858.5,1036.5 L862.4,1025.6 L877.9,1045.6 L874.0,1056.4 Z" fill="#706e68" stroke="#706e68" stroke-width="0.6"/>
<path d="M858.4,1018.6 L863.2,1008.0 L867.2,1015.0 L862.4,1025.6 Z" fill="#8a8b85" stroke="#8a8b85" stroke-width="0.6"/>
<path d="M862.4,1025.6 L867.2,1015.0 L882.7,1034.9 L877.9,1045.6 Z" fill="#797772" stroke="#797772" stroke-width="0.6"/>
<path d="M863.2,1008.0 L869.0,997.5 L873.0,1004.5 L867.2,1015.0 Z" fill="#8c8e88" stroke="#8c8e88" stroke-width="0.6"/>
<path d="M867.2,1015.0 L873.0,1004.5 L888.5,1024.5 L882.7,1034.9 Z" fill="#82817b" stroke="#82817b" stroke-width="0.6"/>
<path d="M869.0,997.5 L875.7,987.4 L879.7,994.4 L873.0,1004.5 Z" fill="#8a8c86" stroke="#8a8c86" stroke-width="0.6"/>
<path d="M873.0,1004.5 L879.7,994.4 L895.2,1014.3 L888.5,1024.5 Z" fill="#8c8a85" stroke="#8c8a85" stroke-width="0.6"/>
<path d="M875.7,987.4 L883.3,977.7 L887.3,984.7 L879.7,994.4 Z" fill="#888a84" stroke="#888a84" stroke-width="0.6"/>
<path d="M879.7,994.4 L887.3,984.7 L902.8,1004.6 L895.2,1014.3 Z" fill="#908f8a" stroke="#908f8a" stroke-width="0.6"/>
<path d="M883.3,977.7 L891.6,968.4 L895.6,975.4 L887.3,984.7 Z" fill="#868882" stroke="#868882" stroke-width="0.6"/>
<path d="M887.3,984.7 L895.6,975.4 L911.1,995.4 L902.8,1004.6 Z" fill="#898883" stroke="#898883" stroke-width="0.6"/>
<path d="M891.6,968.4 L900.7,959.8 L904.7,966.8 L895.6,975.4 Z" fill="#848680" stroke="#848680" stroke-width="0.6"/>
<path d="M895.6,975.4 L904.7,966.8 L920.2,986.7 L911.1,995.4 Z" fill="#83827d" stroke="#83827d" stroke-width="0.6"/>
<path d="M900.7,959.8 L910.5,951.7 L914.5,958.7 L904.7,966.8 Z" fill="#83847f" stroke="#83847f" stroke-width="0.6"/>
<path d="M904.7,966.8 L914.5,958.7 L930.0,978.6 L920.2,986.7 Z" fill="#7c7b76" stroke="#7c7b76" stroke-width="0.6"/>
<path d="M910.5,951.7 L920.8,944.3 L924.8,951.3 L914.5,958.7 Z" fill="#797a75" stroke="#797a75" stroke-width="0.6"/>
<path d="M914.5,958.7 L924.8,951.3 L940.3,971.2 L930.0,978.6 Z" fill="#787772" stroke="#787772" stroke-width="0.6"/>
<path d="M920.8,944.3 L931.7,937.7 L935.7,944.7 L924.8,951.3 Z" fill="#6d6d68" stroke="#6d6d68" stroke-width="0.6"/>
<path d="M924.8,951.3 L935.7,944.7 L951.2,964.6 L940.3,971.2 Z" fill="#75746f" stroke="#75746f" stroke-width="0.6"/>
<path d="M931.7,937.7 L943.1,931.8 L947.1,938.8 L935.7,944.7 Z" fill="#605f5a" stroke="#605f5a" stroke-width="0.6"/>
<path d="M935.7,944.7 L947.1,938.8 L962.6,958.8 L951.2,964.6 Z" fill="#72726c" stroke="#72726c" stroke-width="0.6"/>
<path d="M943.1,931.8 L954.8,926.8 L958.8,933.8 L947.1,938.8 Z" fill="#54524d" stroke="#54524d" stroke-width="0.6"/>
<path d="M947.1,938.8 L958.8,933.8 L974.3,953.8 L962.6,958.8 Z" fill="#706f6a" stroke="#706f6a" stroke-width="0.6"/>
<path d="M954.8,926.8 L966.7,922.7 L970.7,929.7 L958.8,933.8 Z" fill="#4c4a45" stroke="#4c4a45" stroke-width="0.6"/>
<path d="M958.8,933.8 L970.7,929.7 L986.2,949.7 L974.3,953.8 Z" fill="#6d6c67" stroke="#6d6c67" stroke-width="0.6"/>
<path d="M966.7,922.7 L978.8,919.5 L982.8,926.5 L970.7,929.7 Z" fill="#4c4a45" stroke="#4c4a45" stroke-width="0.6"/>
<path d="M970.7,929.7 L982.8,926.5 L998.3,946.5 L986.2,949.7 Z" fill="#6a6964" stroke="#6a6964" stroke-width="0.6"/>
<path d="M978.8,919.5 L991.1,917.3 L995.1,924.3 L982.8,926.5 Z" fill="#4c4a45" stroke="#4c4a45" stroke-width="0.6"/>
<path d="M982.8,926.5 L995.1,924.3 L1010.6,944.2 L998.3,946.5 Z" fill="#676661" stroke="#676661" stroke-width="0.6"/>
<path d="M991.1,917.3 L1003.3,916.0 L1007.3,923.0 L995.1,924.3 Z" fill="#4c4a45" stroke="#4c4a45" stroke-width="0.6"/>
<path d="M995.1,924.3 L1007.3,923.0 L1022.8,942.9 L1010.6,944.2 Z" fill="#65645f" stroke="#65645f" stroke-width="0.6"/>
<path d="M1003.3,916.0 L1015.4,915.7 L1019.4,922.7 L1007.3,923.0 Z" fill="#4b4944" stroke="#4b4944" stroke-width="0.6"/>
<path d="M1007.3,923.0 L1019.4,922.7 L1034.9,942.6 L1022.8,942.9 Z" fill="#63625d" stroke="#63625d" stroke-width="0.6"/>
<path d="M1015.4,915.7 L1027.4,916.4 L1031.4,923.4 L1019.4,922.7 Z" fill="#4b4944" stroke="#4b4944" stroke-width="0.6"/>
<path d="M1019.4,922.7 L1031.4,923.4 L1046.9,943.3 L1034.9,942.6 Z" fill="#605f5a" stroke="#605f5a" stroke-width="0.6"/>
<path d="M1027.4,916.4 L1039.1,918.1 L1043.1,925.1 L1031.4,923.4 Z" fill="#4b4944" stroke="#4b4944" stroke-width="0.6"/>
<path d="M1031.4,923.4 L1043.1,925.1 L1058.6,945.0 L1046.9,943.3 Z" fill="#5e5d58" stroke="#5e5d58" stroke-width="0.6"/>
<path d="M1039.1,918.1 L1050.4,920.7 L1054.4,927.7 L1043.1,925.1 Z" fill="#4b4944" stroke="#4b4944" stroke-width="0.6"/>
<path d="M1043.1,925.1 L1054.4,927.7 L1069.9,947.6 L1058.6,945.0 Z" fill="#5c5b56" stroke="#5c5b56" stroke-width="0.6"/>
<path d="M1050.4,920.7 L1061.3,924.3 L1065.3,931.3 L1054.4,927.7 Z" fill="#4b4944" stroke="#4b4944" stroke-width="0.6"/>
<path d="M1054.4,927.7 L1065.3,931.3 L1080.8,951.2 L1069.9,947.6 Z" fill="#5a5954" stroke="#5a5954" stroke-width="0.6"/>
<path d="M1061.3,924.3 L1071.7,928.8 L1075.7,935.8 L1065.3,931.3 Z" fill="#4b4944" stroke="#4b4944" stroke-width="0.6"/>
<path d="M1065.3,931.3 L1075.7,935.8 L1091.2,955.8 L1080.8,951.2 Z" fill="#585752" stroke="#585752" stroke-width="0.6"/>
<path d="M1071.7,928.8 L1081.4,934.2 L1085.4,941.2 L1075.7,935.8 Z" fill="#4a4843" stroke="#4a4843" stroke-width="0.6"/>
<path d="M1075.7,935.8 L1085.4,941.2 L1100.9,961.2 L1091.2,955.8 Z" fill="#565550" stroke="#565550" stroke-width="0.6"/>
<path d="M1081.4,934.2 L1090.5,940.5 L1094.5,947.5 L1085.4,941.2 Z" fill="#4a4843" stroke="#4a4843" stroke-width="0.6"/>
<path d="M1085.4,941.2 L1094.5,947.5 L1110.0,967.5 L1100.9,961.2 Z" fill="#54534f" stroke="#54534f" stroke-width="0.6"/>
<path d="M1090.5,940.5 L1098.9,947.6 L1102.9,954.6 L1094.5,947.5 Z" fill="#4a4843" stroke="#4a4843" stroke-width="0.6"/>
<path d="M1094.5,947.5 L1102.9,954.6 L1118.4,974.6 L1110.0,967.5 Z" fill="#53524d" stroke="#53524d" stroke-width="0.6"/>
<path d="M1098.9,947.6 L1106.4,955.5 L1110.4,962.5 L1102.9,954.6 Z" fill="#4a4843" stroke="#4a4843" stroke-width="0.6"/>
<path d="M1102.9,954.6 L1110.4,962.5 L1125.9,982.4 L1118.4,974.6 Z" fill="#52514c" stroke="#52514c" stroke-width="0.6"/>
<path d="M1106.4,955.5 L1113.1,964.1 L1117.1,971.1 L1110.4,962.5 Z" fill="#4b4944" stroke="#4b4944" stroke-width="0.6"/>
<path d="M1110.4,962.5 L1117.1,971.1 L1132.6,991.0 L1125.9,982.4 Z" fill="#504f4b" stroke="#504f4b" stroke-width="0.6"/>
<path d="M1113.1,964.1 L1118.9,973.3 L1122.9,980.3 L1117.1,971.1 Z" fill="#4b4944" stroke="#4b4944" stroke-width="0.6"/>
<path d="M1117.1,971.1 L1122.9,980.3 L1138.4,1000.2 L1132.6,991.0 Z" fill="#4f4e4a" stroke="#4f4e4a" stroke-width="0.6"/>
<path d="M1118.9,973.3 L1123.8,983.1 L1127.8,990.1 L1122.9,980.3 Z" fill="#4c4a45" stroke="#4c4a45" stroke-width="0.6"/>
<path d="M1122.9,980.3 L1127.8,990.1 L1143.3,1010.0 L1138.4,1000.2 Z" fill="#504f4b" stroke="#504f4b" stroke-width="0.6"/>
<path d="M1123.8,983.1 L1127.7,993.4 L1131.7,1000.4 L1127.8,990.1 Z" fill="#4d4b46" stroke="#4d4b46" stroke-width="0.6"/>
<path d="M1127.8,990.1 L1131.7,1000.4 L1147.2,1020.3 L1143.3,1010.0 Z" fill="#51504b" stroke="#51504b" stroke-width="0.6"/>
<path d="M1127.7,993.4 L1130.5,1004.1 L1134.5,1011.1 L1131.7,1000.4 Z" fill="#4e4c47" stroke="#4e4c47" stroke-width="0.6"/>
<path d="M1131.7,1000.4 L1134.5,1011.1 L1150.0,1031.0 L1147.2,1020.3 Z" fill="#52514c" stroke="#52514c" stroke-width="0.6"/>
<path d="M1130.5,1004.1 L1132.4,1015.2 L1136.4,1022.2 L1134.5,1011.1 Z" fill="#4f4d48" stroke="#4f4d48" stroke-width="0.6"/>
<path d="M1134.5,1011.1 L1136.4,1022.2 L1151.9,1042.1 L1150.0,1031.0 Z" fill="#53524d" stroke="#53524d" stroke-width="0.6"/>
<path d="M1132.4,1015.2 L1133.2,1026.5 L1137.2,1033.5 L1136.4,1022.2 Z" fill="#504e49" stroke="#504e49" stroke-width="0.6"/>
<path d="M1136.4,1022.2 L1137.2,1033.5 L1152.7,1053.5 L1151.9,1042.1 Z" fill="#54534e" stroke="#54534e" stroke-width="0.6"/>
<path d="M868.5,1089.0 L869.3,1078.2 L873.3,1085.2 L872.5,1096.0 Z" fill="#7e7f79" stroke="#7e7f79" stroke-width="0.6"/>
<path d="M872.5,1096.0 L873.3,1085.2 L888.8,1105.1 L888.0,1115.9 Z" fill="#605c54" stroke="#605c54" stroke-width="0.6"/>
<path d="M869.3,1078.2 L871.1,1067.3 L875.1,1074.3 L873.3,1085.2 Z" fill="#81827c" stroke="#81827c" stroke-width="0.6"/>
<path d="M873.3,1085.2 L875.1,1074.3 L890.6,1094.2 L888.8,1105.1 Z" fill="#64615a" stroke="#64615a" stroke-width="0.6"/>
<path d="M871.1,1067.3 L874.0,1056.4 L878.0,1063.4 L875.1,1074.3 Z" fill="#84857f" stroke="#84857f" stroke-width="0.6"/>
<path d="M875.1,1074.3 L878.0,1063.4 L893.5,1083.3 L890.6,1094.2 Z" fill="#686660" stroke="#686660" stroke-width="0.6"/>
<path d="M874.0,1056.4 L877.9,1045.6 L881.9,1052.6 L878.0,1063.4 Z" fill="#878882" stroke="#878882" stroke-width="0.6"/>
<path d="M878.0,1063.4 L881.9,1052.6 L897.4,1072.5 L893.5,1083.3 Z" fill="#706e68" stroke="#706e68" stroke-width="0.6"/>
<path d="M877.9,1045.6 L882.7,1034.9 L886.7,1041.9 L881.9,1052.6 Z" fill="#8a8b85" stroke="#8a8b85" stroke-width="0.6"/>
<path d="M881.9,1052.6 L886.7,1041.9 L902.2,1061.8 L897.4,1072.5 Z" fill="#797772" stroke="#797772" stroke-width="0.6"/>
<path d="M882.7,1034.9 L888.5,1024.5 L892.5,1031.5 L886.7,1041.9 Z" fill="#8c8e88" stroke="#8c8e88" stroke-width="0.6"/>
<path d="M886.7,1041.9 L892.5,1031.5 L908.0,1051.4 L902.2,1061.8 Z" fill="#82817b" stroke="#82817b" stroke-width="0.6"/>
<path d="M888.5,1024.5 L895.2,1014.3 L899.2,1021.3 L892.5,1031.5 Z" fill="#8a8c86" stroke="#8a8c86" stroke-width="0.6"/>
<path d="M892.5,1031.5 L899.2,1021.3 L914.7,1041.3 L908.0,1051.4 Z" fill="#8c8a85" stroke="#8c8a85" stroke-width="0.6"/>
<path d="M895.2,1014.3 L902.8,1004.6 L906.8,1011.6 L899.2,1021.3 Z" fill="#888a84" stroke="#888a84" stroke-width="0.6"/>
<path d="M899.2,1021.3 L906.8,1011.6 L922.3,1031.5 L914.7,1041.3 Z" fill="#908f8a" stroke="#908f8a" stroke-width="0.6"/>
<path d="M902.8,1004.6 L911.1,995.4 L915.1,1002.4 L906.8,1011.6 Z" fill="#868882" stroke="#868882" stroke-width="0.6"/>
<path d="M906.8,1011.6 L915.1,1002.4 L930.6,1022.3 L922.3,1031.5 Z" fill="#898883" stroke="#898883" stroke-width="0.6"/>
<path d="M911.1,995.4 L920.2,986.7 L924.2,993.7 L915.1,1002.4 Z" fill="#848680" stroke="#848680" stroke-width="0.6"/>
<path d="M915.1,1002.4 L924.2,993.7 L939.7,1013.6 L930.6,1022.3 Z" fill="#83827d" stroke="#83827d" stroke-width="0.6"/>
<path d="M920.2,986.7 L930.0,978.6 L934.0,985.6 L924.2,993.7 Z" fill="#83847f" stroke="#83847f" stroke-width="0.6"/>
<path d="M924.2,993.7 L934.0,985.6 L949.5,1005.6 L939.7,1013.6 Z" fill="#7c7b76" stroke="#7c7b76" stroke-width="0.6"/>
<path d="M930.0,978.6 L940.3,971.2 L944.3,978.2 L934.0,985.6 Z" fill="#797a75" stroke="#797a75" stroke-width="0.6"/>
<path d="M934.0,985.6 L944.3,978.2 L959.8,998.2 L949.5,1005.6 Z" fill="#787772" stroke="#787772" stroke-width="0.6"/>
<path d="M940.3,971.2 L951.2,964.6 L955.2,971.6 L944.3,978.2 Z" fill="#6d6d68" stroke="#6d6d68" stroke-width="0.6"/>
<path d="M944.3,978.2 L955.2,971.6 L970.7,991.5 L959.8,998.2 Z" fill="#75746f" stroke="#75746f" stroke-width="0.6"/>
<path d="M951.2,964.6 L962.6,958.8 L966.6,965.8 L955.2,971.6 Z" fill="#605f5a" stroke="#605f5a" stroke-width="0.6"/>
<path d="M955.2,971.6 L966.6,965.8 L982.1,985.7 L970.7,991.5 Z" fill="#72726c" stroke="#72726c" stroke-width="0.6"/>
<path d="M962.6,958.8 L974.3,953.8 L978.3,960.8 L966.6,965.8 Z" fill="#54524d" stroke="#54524d" stroke-width="0.6"/>
<path d="M966.6,965.8 L978.3,960.8 L993.8,980.7 L982.1,985.7 Z" fill="#706f6a" stroke="#706f6a" stroke-width="0.6"/>
<path d="M974.3,953.8 L986.2,949.7 L990.2,956.7 L978.3,960.8 Z" fill="#4c4a45" stroke="#4c4a45" stroke-width="0.6"/>
<path d="M978.3,960.8 L990.2,956.7 L1005.7,976.6 L993.8,980.7 Z" fill="#6d6c67" stroke="#6d6c67" stroke-width="0.6"/>
<path d="M986.2,949.7 L998.3,946.5 L1002.3,953.5 L990.2,956.7 Z" fill="#4c4a45" stroke="#4c4a45" stroke-width="0.6"/>
<path d="M990.2,956.7 L1002.3,953.5 L1017.8,973.4 L1005.7,976.6 Z" fill="#6a6964" stroke="#6a6964" stroke-width="0.6"/>
<path d="M998.3,946.5 L1010.6,944.2 L1014.6,951.2 L1002.3,953.5 Z" fill="#4c4a45" stroke="#4c4a45" stroke-width="0.6"/>
<path d="M1002.3,953.5 L1014.6,951.2 L1030.1,971.2 L1017.8,973.4 Z" fill="#676661" stroke="#676661" stroke-width="0.6"/>
<path d="M1010.6,944.2 L1022.8,942.9 L1026.8,949.9 L1014.6,951.2 Z" fill="#4c4a45" stroke="#4c4a45" stroke-width="0.6"/>
<path d="M1014.6,951.2 L1026.8,949.9 L1042.3,969.9 L1030.1,971.2 Z" fill="#65645f" stroke="#65645f" stroke-width="0.6"/>
<path d="M1022.8,942.9 L1034.9,942.6 L1038.9,949.6 L1026.8,949.9 Z" fill="#4b4944" stroke="#4b4944" stroke-width="0.6"/>
<path d="M1026.8,949.9 L1038.9,949.6 L1054.4,969.6 L1042.3,969.9 Z" fill="#63625d" stroke="#63625d" stroke-width="0.6"/>
<path d="M1034.9,942.6 L1046.9,943.3 L1050.9,950.3 L1038.9,949.6 Z" fill="#4b4944" stroke="#4b4944" stroke-width="0.6"/>
<path d="M1038.9,949.6 L1050.9,950.3 L1066.4,970.3 L1054.4,969.6 Z" fill="#605f5a" stroke="#605f5a" stroke-width="0.6"/>
<path d="M1046.9,943.3 L1058.6,945.0 L1062.6,952.0 L1050.9,950.3 Z" fill="#4b4944" stroke="#4b4944" stroke-width="0.6"/>
<path d="M1050.9,950.3 L1062.6,952.0 L1078.1,971.9 L1066.4,970.3 Z" fill="#5e5d58" stroke="#5e5d58" stroke-width="0.6"/>
<path d="M1058.6,945.0 L1069.9,947.6 L1073.9,954.6 L1062.6,952.0 Z" fill="#4b4944" stroke="#4b4944" stroke-width="0.6"/>
<path d="M1062.6,952.0 L1073.9,954.6 L1089.4,974.6 L1078.1,971.9 Z" fill="#5c5b56" stroke="#5c5b56" stroke-width="0.6"/>
<path d="M1069.9,947.6 L1080.8,951.2 L1084.8,958.2 L1073.9,954.6 Z" fill="#4b4944" stroke="#4b4944" stroke-width="0.6"/>
<path d="M1073.9,954.6 L1084.8,958.2 L1100.3,978.2 L1089.4,974.6 Z" fill="#5a5954" stroke="#5a5954" stroke-width="0.6"/>
<path d="M1080.8,951.2 L1091.2,955.8 L1095.2,962.8 L1084.8,958.2 Z" fill="#4b4944" stroke="#4b4944" stroke-width="0.6"/>
<path d="M1084.8,958.2 L1095.2,962.8 L1110.7,982.7 L1100.3,978.2 Z" fill="#585752" stroke="#585752" stroke-width="0.6"/>
<path d="M1091.2,955.8 L1100.9,961.2 L1104.9,968.2 L1095.2,962.8 Z" fill="#4a4843" stroke="#4a4843" stroke-width="0.6"/>
<path d="M1095.2,962.8 L1104.9,968.2 L1120.4,988.1 L1110.7,982.7 Z" fill="#565550" stroke="#565550" stroke-width="0.6"/>
<path d="M1100.9,961.2 L1110.0,967.5 L1114.0,974.5 L1104.9,968.2 Z" fill="#4a4843" stroke="#4a4843" stroke-width="0.6"/>
<path d="M1104.9,968.2 L1114.0,974.5 L1129.5,994.4 L1120.4,988.1 Z" fill="#54534f" stroke="#54534f" stroke-width="0.6"/>
<path d="M1110.0,967.5 L1118.4,974.6 L1122.4,981.6 L1114.0,974.5 Z" fill="#4a4843" stroke="#4a4843" stroke-width="0.6"/>
<path d="M1114.0,974.5 L1122.4,981.6 L1137.9,1001.5 L1129.5,994.4 Z" fill="#53524d" stroke="#53524d" stroke-width="0.6"/>
<path d="M1118.4,974.6 L1125.9,982.4 L1129.9,989.4 L1122.4,981.6 Z" fill="#4a4843" stroke="#4a4843" stroke-width="0.6"/>
<path d="M1122.4,981.6 L1129.9,989.4 L1145.4,1009.4 L1137.9,1001.5 Z" fill="#52514c" stroke="#52514c" stroke-width="0.6"/>
<path d="M1125.9,982.4 L1132.6,991.0 L1136.6,998.0 L1129.9,989.4 Z" fill="#4b4944" stroke="#4b4944" stroke-width="0.6"/>
<path d="M1129.9,989.4 L1136.6,998.0 L1152.1,1017.9 L1145.4,1009.4 Z" fill="#504f4b" stroke="#504f4b" stroke-width="0.6"/>
<path d="M1132.6,991.0 L1138.4,1000.2 L1142.4,1007.2 L1136.6,998.0 Z" fill="#4b4944" stroke="#4b4944" stroke-width="0.6"/>
<path d="M1136.6,998.0 L1142.4,1007.2 L1157.9,1027.1 L1152.1,1017.9 Z" fill="#4f4e4a" stroke="#4f4e4a" stroke-width="0.6"/>
<path d="M1138.4,1000.2 L1143.3,1010.0 L1147.3,1017.0 L1142.4,1007.2 Z" fill="#4c4a45" stroke="#4c4a45" stroke-width="0.6"/>
<path d="M1142.4,1007.2 L1147.3,1017.0 L1162.8,1036.9 L1157.9,1027.1 Z" fill="#504f4b" stroke="#504f4b" stroke-width="0.6"/>
<path d="M1143.3,1010.0 L1147.2,1020.3 L1151.2,1027.3 L1147.3,1017.0 Z" fill="#4d4b46" stroke="#4d4b46" stroke-width="0.6"/>
<path d="M1147.3,1017.0 L1151.2,1027.3 L1166.7,1047.2 L1162.8,1036.9 Z" fill="#51504b" stroke="#51504b" stroke-width="0.6"/>
<path d="M1147.2,1020.3 L1150.0,1031.0 L1154.0,1038.0 L1151.2,1027.3 Z" fill="#4e4c47" stroke="#4e4c47" stroke-width="0.6"/>
<path d="M1151.2,1027.3 L1154.0,1038.0 L1169.5,1058.0 L1166.7,1047.2 Z" fill="#52514c" stroke="#52514c" stroke-width="0.6"/>
<path d="M1150.0,1031.0 L1151.9,1042.1 L1155.9,1049.1 L1154.0,1038.0 Z" fill="#4f4d48" stroke="#4f4d48" stroke-width="0.6"/>
<path d="M1154.0,1038.0 L1155.9,1049.1 L1171.4,1069.0 L1169.5,1058.0 Z" fill="#53524d" stroke="#53524d" stroke-width="0.6"/>
<path d="M1151.9,1042.1 L1152.7,1053.5 L1156.7,1060.5 L1155.9,1049.1 Z" fill="#504e49" stroke="#504e49" stroke-width="0.6"/>
<path d="M1155.9,1049.1 L1156.7,1060.5 L1172.2,1080.4 L1171.4,1069.0 Z" fill="#54534e" stroke="#54534e" stroke-width="0.6"/>
<path d="M888.0,1115.9 L888.8,1105.1 L892.8,1112.1 L892.0,1122.9 Z" fill="#7e7f79" stroke="#7e7f79" stroke-width="0.6"/>
<path d="M892.0,1122.9 L892.8,1112.1 L908.3,1132.1 L907.5,1142.8 Z" fill="#605c54" stroke="#605c54" stroke-width="0.6"/>
<path d="M888.8,1105.1 L890.6,1094.2 L894.6,1101.2 L892.8,1112.1 Z" fill="#81827c" stroke="#81827c" stroke-width="0.6"/>
<path d="M892.8,1112.1 L894.6,1101.2 L910.1,1121.2 L908.3,1132.1 Z" fill="#64615a" stroke="#64615a" stroke-width="0.6"/>
<path d="M890.6,1094.2 L893.5,1083.3 L897.5,1090.3 L894.6,1101.2 Z" fill="#84857f" stroke="#84857f" stroke-width="0.6"/>
<path d="M894.6,1101.2 L897.5,1090.3 L913.0,1110.3 L910.1,1121.2 Z" fill="#686660" stroke="#686660" stroke-width="0.6"/>
<path d="M893.5,1083.3 L897.4,1072.5 L901.4,1079.5 L897.5,1090.3 Z" fill="#878882" stroke="#878882" stroke-width="0.6"/>
<path d="M897.5,1090.3 L901.4,1079.5 L916.9,1099.4 L913.0,1110.3 Z" fill="#706e68" stroke="#706e68" stroke-width="0.6"/>
<path d="M897.4,1072.5 L902.2,1061.8 L906.2,1068.8 L901.4,1079.5 Z" fill="#8a8b85" stroke="#8a8b85" stroke-width="0.6"/>
<path d="M901.4,1079.5 L906.2,1068.8 L921.7,1088.8 L916.9,1099.4 Z" fill="#797772" stroke="#797772" stroke-width="0.6"/>
<path d="M902.2,1061.8 L908.0,1051.4 L912.0,1058.4 L906.2,1068.8 Z" fill="#8c8e88" stroke="#8c8e88" stroke-width="0.6"/>
<path d="M906.2,1068.8 L912.0,1058.4 L927.5,1078.3 L921.7,1088.8 Z" fill="#82817b" stroke="#82817b" stroke-width="0.6"/>
<path d="M908.0,1051.4 L914.7,1041.3 L918.7,1048.3 L912.0,1058.4 Z" fill="#8a8c86" stroke="#8a8c86" stroke-width="0.6"/>
<path d="M912.0,1058.4 L918.7,1048.3 L934.2,1068.2 L927.5,1078.3 Z" fill="#8c8a85" stroke="#8c8a85" stroke-width="0.6"/>
<path d="M914.7,1041.3 L922.3,1031.5 L926.3,1038.5 L918.7,1048.3 Z" fill="#888a84" stroke="#888a84" stroke-width="0.6"/>
<path d="M918.7,1048.3 L926.3,1038.5 L941.8,1058.5 L934.2,1068.2 Z" fill="#908f8a" stroke="#908f8a" stroke-width="0.6"/>
<path d="M922.3,1031.5 L930.6,1022.3 L934.6,1029.3 L926.3,1038.5 Z" fill="#868882" stroke="#868882" stroke-width="0.6"/>
<path d="M926.3,1038.5 L934.6,1029.3 L950.1,1049.2 L941.8,1058.5 Z" fill="#898883" stroke="#898883" stroke-width="0.6"/>
<path d="M930.6,1022.3 L939.7,1013.6 L943.7,1020.6 L934.6,1029.3 Z" fill="#848680" stroke="#848680" stroke-width="0.6"/>
<path d="M934.6,1029.3 L943.7,1020.6 L959.2,1040.6 L950.1,1049.2 Z" fill="#83827d" stroke="#83827d" stroke-width="0.6"/>
<path d="M939.7,1013.6 L949.5,1005.6 L953.5,1012.6 L943.7,1020.6 Z" fill="#83847f" stroke="#83847f" stroke-width="0.6"/>
<path d="M943.7,1020.6 L953.5,1012.6 L969.0,1032.5 L959.2,1040.6 Z" fill="#7c7b76" stroke="#7c7b76" stroke-width="0.6"/>
<path d="M949.5,1005.6 L959.8,998.2 L963.8,1005.2 L953.5,1012.6 Z" fill="#797a75" stroke="#797a75" stroke-width="0.6"/>
<path d="M953.5,1012.6 L963.8,1005.2 L979.3,1025.1 L969.0,1032.5 Z" fill="#787772" stroke="#787772" stroke-width="0.6"/>
<path d="M959.8,998.2 L970.7,991.5 L974.7,998.5 L963.8,1005.2 Z" fill="#6d6d68" stroke="#6d6d68" stroke-width="0.6"/>
<path d="M963.8,1005.2 L974.7,998.5 L990.2,1018.5 L979.3,1025.1 Z" fill="#75746f" stroke="#75746f" stroke-width="0.6"/>
<path d="M970.7,991.5 L982.1,985.7 L986.1,992.7 L974.7,998.5 Z" fill="#605f5a" stroke="#605f5a" stroke-width="0.6"/>
<path d="M974.7,998.5 L986.1,992.7 L1001.6,1012.6 L990.2,1018.5 Z" fill="#72726c" stroke="#72726c" stroke-width="0.6"/>
<path d="M982.1,985.7 L993.8,980.7 L997.8,987.7 L986.1,992.7 Z" fill="#54524d" stroke="#54524d" stroke-width="0.6"/>
<path d="M986.1,992.7 L997.8,987.7 L1013.3,1007.6 L1001.6,1012.6 Z" fill="#706f6a" stroke="#706f6a" stroke-width="0.6"/>
<path d="M993.8,980.7 L1005.7,976.6 L1009.7,983.6 L997.8,987.7 Z" fill="#4c4a45" stroke="#4c4a45" stroke-width="0.6"/>
<path d="M997.8,987.7 L1009.7,983.6 L1025.2,1003.5 L1013.3,1007.6 Z" fill="#6d6c67" stroke="#6d6c67" stroke-width="0.6"/>
<path d="M1005.7,976.6 L1017.8,973.4 L1021.8,980.4 L1009.7,983.6 Z" fill="#4c4a45" stroke="#4c4a45" stroke-width="0.6"/>
<path d="M1009.7,983.6 L1021.8,980.4 L1037.3,1000.3 L1025.2,1003.5 Z" fill="#6a6964" stroke="#6a6964" stroke-width="0.6"/>
<path d="M1017.8,973.4 L1030.1,971.2 L1034.1,978.2 L1021.8,980.4 Z" fill="#4c4a45" stroke="#4c4a45" stroke-width="0.6"/>
<path d="M1021.8,980.4 L1034.1,978.2 L1049.6,998.1 L1037.3,1000.3 Z" fill="#676661" stroke="#676661" stroke-width="0.6"/>
<path d="M1030.1,971.2 L1042.3,969.9 L1046.3,976.9 L1034.1,978.2 Z" fill="#4c4a45" stroke="#4c4a45" stroke-width="0.6"/>
<path d="M1034.1,978.2 L1046.3,976.9 L1061.8,996.8 L1049.6,998.1 Z" fill="#65645f" stroke="#65645f" stroke-width="0.6"/>
<path d="M1042.3,969.9 L1054.4,969.6 L1058.4,976.6 L1046.3,976.9 Z" fill="#4b4944" stroke="#4b4944" stroke-width="0.6"/>
<path d="M1046.3,976.9 L1058.4,976.6 L1073.9,996.5 L1061.8,996.8 Z" fill="#63625d" stroke="#63625d" stroke-width="0.6"/>
<path d="M1054.4,969.6 L1066.4,970.3 L1070.4,977.3 L1058.4,976.6 Z" fill="#4b4944" stroke="#4b4944" stroke-width="0.6"/>
<path d="M1058.4,976.6 L1070.4,977.3 L1085.9,997.2 L1073.9,996.5 Z" fill="#605f5a" stroke="#605f5a" stroke-width="0.6"/>
<path d="M1066.4,970.3 L1078.1,971.9 L1082.1,978.9 L1070.4,977.3 Z" fill="#4b4944" stroke="#4b4944" stroke-width="0.6"/>
<path d="M1070.4,977.3 L1082.1,978.9 L1097.6,998.9 L1085.9,997.2 Z" fill="#5e5d58" stroke="#5e5d58" stroke-width="0.6"/>
<path d="M1078.1,971.9 L1089.4,974.6 L1093.4,981.6 L1082.1,978.9 Z" fill="#4b4944" stroke="#4b4944" stroke-width="0.6"/>
<path d="M1082.1,978.9 L1093.4,981.6 L1108.9,1001.5 L1097.6,998.9 Z" fill="#5c5b56" stroke="#5c5b56" stroke-width="0.6"/>
<path d="M1089.4,974.6 L1100.3,978.2 L1104.3,985.2 L1093.4,981.6 Z" fill="#4b4944" stroke="#4b4944" stroke-width="0.6"/>
<path d="M1093.4,981.6 L1104.3,985.2 L1119.8,1005.1 L1108.9,1001.5 Z" fill="#5a5954" stroke="#5a5954" stroke-width="0.6"/>
<path d="M1100.3,978.2 L1110.7,982.7 L1114.7,989.7 L1104.3,985.2 Z" fill="#4b4944" stroke="#4b4944" stroke-width="0.6"/>
<path d="M1104.3,985.2 L1114.7,989.7 L1130.2,1009.6 L1119.8,1005.1 Z" fill="#585752" stroke="#585752" stroke-width="0.6"/>
<path d="M1110.7,982.7 L1120.4,988.1 L1124.4,995.1 L1114.7,989.7 Z" fill="#4a4843" stroke="#4a4843" stroke-width="0.6"/>
<path d="M1114.7,989.7 L1124.4,995.1 L1139.9,1015.0 L1130.2,1009.6 Z" fill="#565550" stroke="#565550" stroke-width="0.6"/>
<path d="M1120.4,988.1 L1129.5,994.4 L1133.5,1001.4 L1124.4,995.1 Z" fill="#4a4843" stroke="#4a4843" stroke-width="0.6"/>
<path d="M1124.4,995.1 L1133.5,1001.4 L1149.0,1021.3 L1139.9,1015.0 Z" fill="#54534f" stroke="#54534f" stroke-width="0.6"/>
<path d="M1129.5,994.4 L1137.9,1001.5 L1141.9,1008.5 L1133.5,1001.4 Z" fill="#4a4843" stroke="#4a4843" stroke-width="0.6"/>
<path d="M1133.5,1001.4 L1141.9,1008.5 L1157.4,1028.4 L1149.0,1021.3 Z" fill="#53524d" stroke="#53524d" stroke-width="0.6"/>
<path d="M1137.9,1001.5 L1145.4,1009.4 L1149.4,1016.4 L1141.9,1008.5 Z" fill="#4a4843" stroke="#4a4843" stroke-width="0.6"/>
<path d="M1141.9,1008.5 L1149.4,1016.4 L1164.9,1036.3 L1157.4,1028.4 Z" fill="#52514c" stroke="#52514c" stroke-width="0.6"/>
<path d="M1145.4,1009.4 L1152.1,1017.9 L1156.1,1024.9 L1149.4,1016.4 Z" fill="#4b4944" stroke="#4b4944" stroke-width="0.6"/>
<path d="M1149.4,1016.4 L1156.1,1024.9 L1171.6,1044.9 L1164.9,1036.3 Z" fill="#504f4b" stroke="#504f4b" stroke-width="0.6"/>
<path d="M1152.1,1017.9 L1157.9,1027.1 L1161.9,1034.1 L1156.1,1024.9 Z" fill="#4b4944" stroke="#4b4944" stroke-width="0.6"/>
<path d="M1156.1,1024.9 L1161.9,1034.1 L1177.4,1054.1 L1171.6,1044.9 Z" fill="#4f4e4a" stroke="#4f4e4a" stroke-width="0.6"/>
<path d="M1157.9,1027.1 L1162.8,1036.9 L1166.8,1043.9 L1161.9,1034.1 Z" fill="#4c4a45" stroke="#4c4a45" stroke-width="0.6"/>
<path d="M1161.9,1034.1 L1166.8,1043.9 L1182.3,1063.9 L1177.4,1054.1 Z" fill="#504f4b" stroke="#504f4b" stroke-width="0.6"/>
<path d="M1162.8,1036.9 L1166.7,1047.2 L1170.7,1054.2 L1166.8,1043.9 Z" fill="#4d4b46" stroke="#4d4b46" stroke-width="0.6"/>
<path d="M1166.8,1043.9 L1170.7,1054.2 L1186.2,1074.2 L1182.3,1063.9 Z" fill="#51504b" stroke="#51504b" stroke-width="0.6"/>
<path d="M1166.7,1047.2 L1169.5,1058.0 L1173.5,1065.0 L1170.7,1054.2 Z" fill="#4e4c47" stroke="#4e4c47" stroke-width="0.6"/>
<path d="M1170.7,1054.2 L1173.5,1065.0 L1189.0,1084.9 L1186.2,1074.2 Z" fill="#52514c" stroke="#52514c" stroke-width="0.6"/>
<path d="M1169.5,1058.0 L1171.4,1069.0 L1175.4,1076.0 L1173.5,1065.0 Z" fill="#4f4d48" stroke="#4f4d48" stroke-width="0.6"/>
<path d="M1173.5,1065.0 L1175.4,1076.0 L1190.9,1096.0 L1189.0,1084.9 Z" fill="#53524d" stroke="#53524d" stroke-width="0.6"/>
<path d="M1171.4,1069.0 L1172.2,1080.4 L1176.2,1087.4 L1175.4,1076.0 Z" fill="#504e49" stroke="#504e49" stroke-width="0.6"/>
<path d="M1175.4,1076.0 L1176.2,1087.4 L1191.7,1107.3 L1190.9,1096.0 Z" fill="#54534e" stroke="#54534e" stroke-width="0.6"/>
<path d="M907.5,1142.8 L908.3,1132.1 L912.3,1139.1 L911.5,1149.8 Z" fill="#7e7f79" stroke="#7e7f79" stroke-width="0.6"/>
<path d="M911.5,1149.8 L912.3,1139.1 L927.8,1159.0 L927.0,1169.8 Z" fill="#605c54" stroke="#605c54" stroke-width="0.6"/>
<path d="M908.3,1132.1 L910.1,1121.2 L914.1,1128.2 L912.3,1139.1 Z" fill="#81827c" stroke="#81827c" stroke-width="0.6"/>
<path d="M912.3,1139.1 L914.1,1128.2 L929.6,1148.1 L927.8,1159.0 Z" fill="#64615a" stroke="#64615a" stroke-width="0.6"/>
<path d="M910.1,1121.2 L913.0,1110.3 L917.0,1117.3 L914.1,1128.2 Z" fill="#84857f" stroke="#84857f" stroke-width="0.6"/>
<path d="M914.1,1128.2 L917.0,1117.3 L932.5,1137.2 L929.6,1148.1 Z" fill="#686660" stroke="#686660" stroke-width="0.6"/>
<path d="M913.0,1110.3 L916.9,1099.4 L920.9,1106.4 L917.0,1117.3 Z" fill="#878882" stroke="#878882" stroke-width="0.6"/>
<path d="M917.0,1117.3 L920.9,1106.4 L936.4,1126.4 L932.5,1137.2 Z" fill="#706e68" stroke="#706e68" stroke-width="0.6"/>
<path d="M916.9,1099.4 L921.7,1088.8 L925.7,1095.8 L920.9,1106.4 Z" fill="#8a8b85" stroke="#8a8b85" stroke-width="0.6"/>
<path d="M920.9,1106.4 L925.7,1095.8 L941.2,1115.7 L936.4,1126.4 Z" fill="#797772" stroke="#797772" stroke-width="0.6"/>
<path d="M921.7,1088.8 L927.5,1078.3 L931.5,1085.3 L925.7,1095.8 Z" fill="#8c8e88" stroke="#8c8e88" stroke-width="0.6"/>
<path d="M925.7,1095.8 L931.5,1085.3 L947.0,1105.2 L941.2,1115.7 Z" fill="#82817b" stroke="#82817b" stroke-width="0.6"/>
<path d="M927.5,1078.3 L934.2,1068.2 L938.2,1075.2 L931.5,1085.3 Z" fill="#8a8c86" stroke="#8a8c86" stroke-width="0.6"/>
<path d="M931.5,1085.3 L938.2,1075.2 L953.7,1095.1 L947.0,1105.2 Z" fill="#8c8a85" stroke="#8c8a85" stroke-width="0.6"/>
<path d="M934.2,1068.2 L941.8,1058.5 L945.8,1065.5 L938.2,1075.2 Z" fill="#888a84" stroke="#888a84" stroke-width="0.6"/>
<path d="M938.2,1075.2 L945.8,1065.5 L961.3,1085.4 L953.7,1095.1 Z" fill="#908f8a" stroke="#908f8a" stroke-width="0.6"/>
<path d="M941.8,1058.5 L950.1,1049.2 L954.1,1056.2 L945.8,1065.5 Z" fill="#868882" stroke="#868882" stroke-width="0.6"/>
<path d="M945.8,1065.5 L954.1,1056.2 L969.6,1076.2 L961.3,1085.4 Z" fill="#898883" stroke="#898883" stroke-width="0.6"/>
<path d="M950.1,1049.2 L959.2,1040.6 L963.2,1047.6 L954.1,1056.2 Z" fill="#848680" stroke="#848680" stroke-width="0.6"/>
<path d="M954.1,1056.2 L963.2,1047.6 L978.7,1067.5 L969.6,1076.2 Z" fill="#83827d" stroke="#83827d" stroke-width="0.6"/>
<path d="M959.2,1040.6 L969.0,1032.5 L973.0,1039.5 L963.2,1047.6 Z" fill="#83847f" stroke="#83847f" stroke-width="0.6"/>
<path d="M963.2,1047.6 L973.0,1039.5 L988.5,1059.4 L978.7,1067.5 Z" fill="#7c7b76" stroke="#7c7b76" stroke-width="0.6"/>
<path d="M969.0,1032.5 L979.3,1025.1 L983.3,1032.1 L973.0,1039.5 Z" fill="#797a75" stroke="#797a75" stroke-width="0.6"/>
<path d="M973.0,1039.5 L983.3,1032.1 L998.8,1052.0 L988.5,1059.4 Z" fill="#787772" stroke="#787772" stroke-width="0.6"/>
<path d="M979.3,1025.1 L990.2,1018.5 L994.2,1025.5 L983.3,1032.1 Z" fill="#6d6d68" stroke="#6d6d68" stroke-width="0.6"/>
<path d="M983.3,1032.1 L994.2,1025.5 L1009.7,1045.4 L998.8,1052.0 Z" fill="#75746f" stroke="#75746f" stroke-width="0.6"/>
<path d="M990.2,1018.5 L1001.6,1012.6 L1005.6,1019.6 L994.2,1025.5 Z" fill="#605f5a" stroke="#605f5a" stroke-width="0.6"/>
<path d="M994.2,1025.5 L1005.6,1019.6 L1021.1,1039.6 L1009.7,1045.4 Z" fill="#72726c" stroke="#72726c" stroke-width="0.6"/>
<path d="M1001.6,1012.6 L1013.3,1007.6 L1017.3,1014.6 L1005.6,1019.6 Z" fill="#54524d" stroke="#54524d" stroke-width="0.6"/>
<path d="M1005.6,1019.6 L1017.3,1014.6 L1032.8,1034.6 L1021.1,1039.6 Z" fill="#706f6a" stroke="#706f6a" stroke-width="0.6"/>
<path d="M1013.3,1007.6 L1025.2,1003.5 L1029.2,1010.5 L1017.3,1014.6 Z" fill="#4c4a45" stroke="#4c4a45" stroke-width="0.6"/>
<path d="M1017.3,1014.6 L1029.2,1010.5 L1044.7,1030.4 L1032.8,1034.6 Z" fill="#6d6c67" stroke="#6d6c67" stroke-width="0.6"/>
<path d="M1025.2,1003.5 L1037.3,1000.3 L1041.3,1007.3 L1029.2,1010.5 Z" fill="#4c4a45" stroke="#4c4a45" stroke-width="0.6"/>
<path d="M1029.2,1010.5 L1041.3,1007.3 L1056.8,1027.3 L1044.7,1030.4 Z" fill="#6a6964" stroke="#6a6964" stroke-width="0.6"/>
<path d="M1037.3,1000.3 L1049.6,998.1 L1053.6,1005.1 L1041.3,1007.3 Z" fill="#4c4a45" stroke="#4c4a45" stroke-width="0.6"/>
<path d="M1041.3,1007.3 L1053.6,1005.1 L1069.1,1025.0 L1056.8,1027.3 Z" fill="#676661" stroke="#676661" stroke-width="0.6"/>
<path d="M1049.6,998.1 L1061.8,996.8 L1065.8,1003.8 L1053.6,1005.1 Z" fill="#4c4a45" stroke="#4c4a45" stroke-width="0.6"/>
<path d="M1053.6,1005.1 L1065.8,1003.8 L1081.3,1023.7 L1069.1,1025.0 Z" fill="#65645f" stroke="#65645f" stroke-width="0.6"/>
<path d="M1061.8,996.8 L1073.9,996.5 L1077.9,1003.5 L1065.8,1003.8 Z" fill="#4b4944" stroke="#4b4944" stroke-width="0.6"/>
<path d="M1065.8,1003.8 L1077.9,1003.5 L1093.4,1023.4 L1081.3,1023.7 Z" fill="#63625d" stroke="#63625d" stroke-width="0.6"/>
<path d="M1073.9,996.5 L1085.9,997.2 L1089.9,1004.2 L1077.9,1003.5 Z" fill="#4b4944" stroke="#4b4944" stroke-width="0.6"/>
<path d="M1077.9,1003.5 L1089.9,1004.2 L1105.4,1024.1 L1093.4,1023.4 Z" fill="#605f5a" stroke="#605f5a" stroke-width="0.6"/>
<path d="M1085.9,997.2 L1097.6,998.9 L1101.6,1005.9 L1089.9,1004.2 Z" fill="#4b4944" stroke="#4b4944" stroke-width="0.6"/>
<path d="M1089.9,1004.2 L1101.6,1005.9 L1117.1,1025.8 L1105.4,1024.1 Z" fill="#5e5d58" stroke="#5e5d58" stroke-width="0.6"/>
<path d="M1097.6,998.9 L1108.9,1001.5 L1112.9,1008.5 L1101.6,1005.9 Z" fill="#4b4944" stroke="#4b4944" stroke-width="0.6"/>
<path d="M1101.6,1005.9 L1112.9,1008.5 L1128.4,1028.4 L1117.1,1025.8 Z" fill="#5c5b56" stroke="#5c5b56" stroke-width="0.6"/>
<path d="M1108.9,1001.5 L1119.8,1005.1 L1123.8,1012.1 L1112.9,1008.5 Z" fill="#4b4944" stroke="#4b4944" stroke-width="0.6"/>
<path d="M1112.9,1008.5 L1123.8,1012.1 L1139.3,1032.0 L1128.4,1028.4 Z" fill="#5a5954" stroke="#5a5954" stroke-width="0.6"/>
<path d="M1119.8,1005.1 L1130.2,1009.6 L1134.2,1016.6 L1123.8,1012.1 Z" fill="#4b4944" stroke="#4b4944" stroke-width="0.6"/>
<path d="M1123.8,1012.1 L1134.2,1016.6 L1149.7,1036.5 L1139.3,1032.0 Z" fill="#585752" stroke="#585752" stroke-width="0.6"/>
<path d="M1130.2,1009.6 L1139.9,1015.0 L1143.9,1022.0 L1134.2,1016.6 Z" fill="#4a4843" stroke="#4a4843" stroke-width="0.6"/>
<path d="M1134.2,1016.6 L1143.9,1022.0 L1159.4,1042.0 L1149.7,1036.5 Z" fill="#565550" stroke="#565550" stroke-width="0.6"/>
<path d="M1139.9,1015.0 L1149.0,1021.3 L1153.0,1028.3 L1143.9,1022.0 Z" fill="#4a4843" stroke="#4a4843" stroke-width="0.6"/>
<path d="M1143.9,1022.0 L1153.0,1028.3 L1168.5,1048.3 L1159.4,1042.0 Z" fill="#54534f" stroke="#54534f" stroke-width="0.6"/>
<path d="M1149.0,1021.3 L1157.4,1028.4 L1161.4,1035.4 L1153.0,1028.3 Z" fill="#4a4843" stroke="#4a4843" stroke-width="0.6"/>
<path d="M1153.0,1028.3 L1161.4,1035.4 L1176.9,1055.4 L1168.5,1048.3 Z" fill="#53524d" stroke="#53524d" stroke-width="0.6"/>
<path d="M1157.4,1028.4 L1164.9,1036.3 L1168.9,1043.3 L1161.4,1035.4 Z" fill="#4a4843" stroke="#4a4843" stroke-width="0.6"/>
<path d="M1161.4,1035.4 L1168.9,1043.3 L1184.4,1063.2 L1176.9,1055.4 Z" fill="#52514c" stroke="#52514c" stroke-width="0.6"/>
<path d="M1164.9,1036.3 L1171.6,1044.9 L1175.6,1051.9 L1168.9,1043.3 Z" fill="#4b4944" stroke="#4b4944" stroke-width="0.6"/>
<path d="M1168.9,1043.3 L1175.6,1051.9 L1191.1,1071.8 L1184.4,1063.2 Z" fill="#504f4b" stroke="#504f4b" stroke-width="0.6"/>
<path d="M1171.6,1044.9 L1177.4,1054.1 L1181.4,1061.1 L1175.6,1051.9 Z" fill="#4b4944" stroke="#4b4944" stroke-width="0.6"/>
<path d="M1175.6,1051.9 L1181.4,1061.1 L1196.9,1081.0 L1191.1,1071.8 Z" fill="#4f4e4a" stroke="#4f4e4a" stroke-width="0.6"/>
<path d="M1177.4,1054.1 L1182.3,1063.9 L1186.3,1070.9 L1181.4,1061.1 Z" fill="#4c4a45" stroke="#4c4a45" stroke-width="0.6"/>
<path d="M1181.4,1061.1 L1186.3,1070.9 L1201.8,1090.8 L1196.9,1081.0 Z" fill="#504f4b" stroke="#504f4b" stroke-width="0.6"/>
<path d="M1182.3,1063.9 L1186.2,1074.2 L1190.2,1081.2 L1186.3,1070.9 Z" fill="#4d4b46" stroke="#4d4b46" stroke-width="0.6"/>
<path d="M1186.3,1070.9 L1190.2,1081.2 L1205.7,1101.1 L1201.8,1090.8 Z" fill="#51504b" stroke="#51504b" stroke-width="0.6"/>
<path d="M1186.2,1074.2 L1189.0,1084.9 L1193.0,1091.9 L1190.2,1081.2 Z" fill="#4e4c47" stroke="#4e4c47" stroke-width="0.6"/>
<path d="M1190.2,1081.2 L1193.0,1091.9 L1208.5,1111.8 L1205.7,1101.1 Z" fill="#52514c" stroke="#52514c" stroke-width="0.6"/>
<path d="M1189.0,1084.9 L1190.9,1096.0 L1194.9,1103.0 L1193.0,1091.9 Z" fill="#4f4d48" stroke="#4f4d48" stroke-width="0.6"/>
<path d="M1193.0,1091.9 L1194.9,1103.0 L1210.4,1122.9 L1208.5,1111.8 Z" fill="#53524d" stroke="#53524d" stroke-width="0.6"/>
<path d="M1190.9,1096.0 L1191.7,1107.3 L1195.7,1114.3 L1194.9,1103.0 Z" fill="#504e49" stroke="#504e49" stroke-width="0.6"/>
<path d="M1194.9,1103.0 L1195.7,1114.3 L1211.2,1134.2 L1210.4,1122.9 Z" fill="#54534e" stroke="#54534e" stroke-width="0.6"/>
<path d="M576.0,685.0 L576.5,677.1 L577.5,669.1 L579.1,661.1 L581.3,653.1 L584.0,645.1 L587.2,637.2 L591.0,629.4 L595.2,621.8 L600.0,614.3 L605.2,607.0 L610.9,599.9 L617.0,593.1 L623.5,586.6 L630.4,580.4 L637.7,574.5 L645.3,569.0 L653.1,563.9 L661.2,559.3 L669.6,555.0 L678.1,551.3 L686.8,547.9 L695.7,545.1 L704.6,542.8 L713.6,541.0 L722.6,539.7 L731.5,538.9 L740.5,538.7 L749.3,539.0 L758.0,539.8 L766.6,541.1 L774.9,543.0 L783.0,545.4 L790.9,548.3 L798.5,551.7 L805.7,555.6 L812.6,559.9 L819.1,564.8 L825.2,570.0 L830.9,575.7 L836.1,581.7 L840.9,588.1 L845.2,594.9 L848.9,602.0 L852.2,609.4 L854.9,617.0 L857.0,624.9 L858.6,632.9 L859.7,641.1 L860.1,649.5" fill="none" stroke="#262523" stroke-width="1.2"/>
<path d="M580.0,692.0 L580.5,684.1 L581.5,676.1 L583.1,668.1 L585.3,660.1 L588.0,652.1 L591.2,644.2 L595.0,636.4 L599.2,628.8 L604.0,621.3 L609.2,614.0 L614.9,606.9 L621.0,600.1 L627.5,593.6 L634.4,587.4 L641.7,581.5 L649.3,576.0 L657.1,570.9 L665.2,566.3 L673.6,562.0 L682.1,558.3 L690.8,554.9 L699.7,552.1 L708.6,549.8 L717.6,548.0 L726.6,546.7 L735.5,545.9 L744.5,545.7 L753.3,546.0 L762.0,546.8 L770.6,548.1 L778.9,550.0 L787.0,552.4 L794.9,555.3 L802.5,558.7 L809.7,562.6 L816.6,566.9 L823.1,571.8 L829.2,577.0 L834.9,582.7 L840.1,588.7 L844.9,595.1 L849.2,601.9 L852.9,609.0 L856.2,616.4 L858.9,624.0 L861.0,631.9 L862.6,639.9 L863.7,648.1 L864.1,656.5" fill="none" stroke="#262523" stroke-width="1.2"/>
<path d="M595.5,712.0 L596.0,704.1 L597.0,696.1 L598.6,688.1 L600.8,680.1 L603.5,672.1 L606.7,664.2 L610.5,656.4 L614.7,648.7 L619.5,641.2 L624.7,633.9 L630.4,626.8 L636.5,620.0 L643.0,613.5 L649.9,607.3 L657.2,601.4 L664.8,596.0 L672.6,590.9 L680.7,586.2 L689.1,582.0 L697.6,578.2 L706.3,574.9 L715.2,572.1 L724.1,569.7 L733.1,567.9 L742.1,566.6 L751.0,565.8 L760.0,565.6 L768.8,565.9 L777.5,566.7 L786.1,568.1 L794.4,569.9 L802.5,572.3 L810.4,575.2 L818.0,578.6 L825.2,582.5 L832.1,586.9 L838.6,591.7 L844.7,596.9 L850.4,602.6 L855.6,608.6 L860.4,615.1 L864.7,621.8 L868.4,628.9 L871.7,636.3 L874.4,643.9 L876.5,651.8 L878.1,659.8 L879.2,668.1 L879.6,676.4" fill="none" stroke="#262523" stroke-width="1.2"/>
<path d="M599.5,719.0 L600.0,711.1 L601.0,703.1 L602.6,695.1 L604.8,687.1 L607.5,679.1 L610.7,671.2 L614.5,663.4 L618.7,655.7 L623.5,648.2 L628.7,640.9 L634.4,633.8 L640.5,627.0 L647.0,620.5 L653.9,614.3 L661.2,608.4 L668.8,603.0 L676.6,597.9 L684.7,593.2 L693.1,589.0 L701.6,585.2 L710.3,581.9 L719.2,579.1 L728.1,576.7 L737.1,574.9 L746.1,573.6 L755.0,572.8 L764.0,572.6 L772.8,572.9 L781.5,573.7 L790.1,575.1 L798.4,576.9 L806.5,579.3 L814.4,582.2 L822.0,585.6 L829.2,589.5 L836.1,593.9 L842.6,598.7 L848.7,603.9 L854.4,609.6 L859.6,615.6 L864.4,622.1 L868.7,628.8 L872.4,635.9 L875.7,643.3 L878.4,650.9 L880.5,658.8 L882.1,666.8 L883.2,675.1 L883.6,683.4" fill="none" stroke="#262523" stroke-width="1.2"/>
<path d="M615.0,738.9 L615.5,731.0 L616.5,723.0 L618.1,715.0 L620.3,707.0 L623.0,699.0 L626.2,691.1 L630.0,683.3 L634.2,675.6 L639.0,668.1 L644.2,660.8 L649.9,653.8 L656.0,646.9 L662.5,640.4 L669.4,634.2 L676.7,628.4 L684.3,622.9 L692.1,617.8 L700.2,613.1 L708.6,608.9 L717.1,605.1 L725.8,601.8 L734.7,599.0 L743.6,596.7 L752.6,594.8 L761.6,593.5 L770.5,592.8 L779.5,592.5 L788.3,592.8 L797.0,593.6 L805.6,595.0 L813.9,596.9 L822.0,599.3 L829.9,602.2 L837.5,605.6 L844.7,609.4 L851.6,613.8 L858.1,618.6 L864.2,623.9 L869.9,629.5 L875.1,635.6 L879.9,642.0 L884.2,648.8 L887.9,655.8 L891.2,663.2 L893.9,670.9 L896.0,678.7 L897.6,686.8 L898.7,695.0 L899.1,703.4" fill="none" stroke="#262523" stroke-width="1.2"/>
<path d="M619.0,745.9 L619.5,738.0 L620.5,730.0 L622.1,722.0 L624.3,714.0 L627.0,706.0 L630.2,698.1 L634.0,690.3 L638.2,682.6 L643.0,675.1 L648.2,667.8 L653.9,660.8 L660.0,653.9 L666.5,647.4 L673.4,641.2 L680.7,635.4 L688.3,629.9 L696.1,624.8 L704.2,620.1 L712.6,615.9 L721.1,612.1 L729.8,608.8 L738.7,606.0 L747.6,603.7 L756.6,601.8 L765.6,600.5 L774.5,599.8 L783.5,599.5 L792.3,599.8 L801.0,600.6 L809.6,602.0 L817.9,603.9 L826.0,606.3 L833.9,609.2 L841.5,612.6 L848.7,616.4 L855.6,620.8 L862.1,625.6 L868.2,630.9 L873.9,636.5 L879.1,642.6 L883.9,649.0 L888.2,655.8 L891.9,662.8 L895.2,670.2 L897.9,677.9 L900.0,685.7 L901.6,693.8 L902.7,702.0 L903.1,710.4" fill="none" stroke="#262523" stroke-width="1.2"/>
<path d="M634.5,765.8 L635.0,757.9 L636.0,749.9 L637.6,741.9 L639.8,733.9 L642.5,725.9 L645.7,718.0 L649.5,710.2 L653.7,702.6 L658.5,695.1 L663.7,687.8 L669.4,680.7 L675.5,673.9 L682.0,667.4 L688.9,661.2 L696.2,655.3 L703.8,649.8 L711.6,644.7 L719.7,640.1 L728.1,635.8 L736.6,632.0 L745.3,628.7 L754.2,625.9 L763.1,623.6 L772.1,621.8 L781.1,620.5 L790.0,619.7 L799.0,619.5 L807.8,619.8 L816.5,620.6 L825.1,621.9 L833.4,623.8 L841.5,626.2 L849.4,629.1 L857.0,632.5 L864.2,636.4 L871.1,640.7 L877.6,645.5 L883.7,650.8 L889.4,656.5 L894.6,662.5 L899.4,668.9 L903.7,675.7 L907.4,682.8 L910.7,690.2 L913.4,697.8 L915.5,705.6 L917.1,713.7 L918.2,721.9 L918.6,730.3" fill="none" stroke="#262523" stroke-width="1.2"/>
<path d="M638.5,772.8 L639.0,764.9 L640.0,756.9 L641.6,748.9 L643.8,740.9 L646.5,732.9 L649.7,725.0 L653.5,717.2 L657.7,709.6 L662.5,702.1 L667.7,694.8 L673.4,687.7 L679.5,680.9 L686.0,674.4 L692.9,668.2 L700.2,662.3 L707.8,656.8 L715.6,651.7 L723.7,647.1 L732.1,642.8 L740.6,639.0 L749.3,635.7 L758.2,632.9 L767.1,630.6 L776.1,628.8 L785.1,627.5 L794.0,626.7 L803.0,626.5 L811.8,626.8 L820.5,627.6 L829.1,628.9 L837.4,630.8 L845.5,633.2 L853.4,636.1 L861.0,639.5 L868.2,643.4 L875.1,647.7 L881.6,652.5 L887.7,657.8 L893.4,663.5 L898.6,669.5 L903.4,675.9 L907.7,682.7 L911.4,689.8 L914.7,697.2 L917.4,704.8 L919.5,712.6 L921.1,720.7 L922.2,728.9 L922.6,737.3" fill="none" stroke="#262523" stroke-width="1.2"/>
<path d="M654.0,792.8 L654.5,784.8 L655.5,776.9 L657.1,768.9 L659.3,760.8 L662.0,752.9 L665.2,745.0 L669.0,737.2 L673.2,729.5 L678.0,722.0 L683.2,714.7 L688.9,707.6 L695.0,700.8 L701.5,694.3 L708.4,688.1 L715.7,682.2 L723.3,676.8 L731.1,671.7 L739.2,667.0 L747.6,662.8 L756.1,659.0 L764.8,655.7 L773.7,652.8 L782.6,650.5 L791.6,648.7 L800.6,647.4 L809.5,646.6 L818.5,646.4 L827.3,646.7 L836.0,647.5 L844.6,648.9 L852.9,650.7 L861.0,653.1 L868.9,656.0 L876.5,659.4 L883.7,663.3 L890.6,667.7 L897.1,672.5 L903.2,677.7 L908.9,683.4 L914.1,689.4 L918.9,695.9 L923.2,702.6 L926.9,709.7 L930.2,717.1 L932.9,724.7 L935.0,732.6 L936.6,740.6 L937.7,748.9 L938.1,757.2" fill="none" stroke="#262523" stroke-width="1.2"/>
<path d="M658.0,799.8 L658.5,791.8 L659.5,783.9 L661.1,775.9 L663.3,767.8 L666.0,759.9 L669.2,752.0 L673.0,744.2 L677.2,736.5 L682.0,729.0 L687.2,721.7 L692.9,714.6 L699.0,707.8 L705.5,701.3 L712.4,695.1 L719.7,689.2 L727.3,683.8 L735.1,678.7 L743.2,674.0 L751.6,669.8 L760.1,666.0 L768.8,662.7 L777.7,659.8 L786.6,657.5 L795.6,655.7 L804.6,654.4 L813.5,653.6 L822.5,653.4 L831.3,653.7 L840.0,654.5 L848.6,655.9 L856.9,657.7 L865.0,660.1 L872.9,663.0 L880.5,666.4 L887.7,670.3 L894.6,674.7 L901.1,679.5 L907.2,684.7 L912.9,690.4 L918.1,696.4 L922.9,702.9 L927.2,709.6 L930.9,716.7 L934.2,724.1 L936.9,731.7 L939.0,739.6 L940.6,747.6 L941.7,755.9 L942.1,764.2" fill="none" stroke="#262523" stroke-width="1.2"/>
<path d="M673.5,819.7 L674.0,811.8 L675.0,803.8 L676.6,795.8 L678.8,787.8 L681.5,779.8 L684.7,771.9 L688.5,764.1 L692.7,756.4 L697.5,748.9 L702.7,741.6 L708.4,734.5 L714.5,727.7 L721.0,721.2 L727.9,715.0 L735.2,709.2 L742.8,703.7 L750.6,698.6 L758.7,693.9 L767.1,689.7 L775.6,685.9 L784.3,682.6 L793.2,679.8 L802.1,677.4 L811.1,675.6 L820.1,674.3 L829.0,673.6 L838.0,673.3 L846.8,673.6 L855.5,674.4 L864.1,675.8 L872.4,677.7 L880.5,680.1 L888.4,683.0 L896.0,686.4 L903.2,690.2 L910.1,694.6 L916.6,699.4 L922.7,704.7 L928.4,710.3 L933.6,716.4 L938.4,722.8 L942.7,729.6 L946.4,736.6 L949.7,744.0 L952.4,751.6 L954.5,759.5 L956.1,767.6 L957.2,775.8 L957.6,784.2" fill="none" stroke="#262523" stroke-width="1.2"/>
<path d="M677.5,826.7 L678.0,818.8 L679.0,810.8 L680.6,802.8 L682.8,794.8 L685.5,786.8 L688.7,778.9 L692.5,771.1 L696.7,763.4 L701.5,755.9 L706.7,748.6 L712.4,741.5 L718.5,734.7 L725.0,728.2 L731.9,722.0 L739.2,716.2 L746.8,710.7 L754.6,705.6 L762.7,700.9 L771.1,696.7 L779.6,692.9 L788.3,689.6 L797.2,686.8 L806.1,684.4 L815.1,682.6 L824.1,681.3 L833.0,680.6 L842.0,680.3 L850.8,680.6 L859.5,681.4 L868.1,682.8 L876.4,684.7 L884.5,687.1 L892.4,690.0 L900.0,693.4 L907.2,697.2 L914.1,701.6 L920.6,706.4 L926.7,711.7 L932.4,717.3 L937.6,723.4 L942.4,729.8 L946.7,736.6 L950.4,743.6 L953.7,751.0 L956.4,758.6 L958.5,766.5 L960.1,774.6 L961.2,782.8 L961.6,791.2" fill="none" stroke="#262523" stroke-width="1.2"/>
<path d="M693.0,846.6 L693.5,838.7 L694.5,830.7 L696.1,822.7 L698.3,814.7 L701.0,806.7 L704.2,798.8 L708.0,791.0 L712.2,783.3 L717.0,775.8 L722.2,768.5 L727.9,761.5 L734.0,754.7 L740.5,748.1 L747.4,742.0 L754.7,736.1 L762.3,730.6 L770.1,725.5 L778.2,720.9 L786.6,716.6 L795.1,712.8 L803.8,709.5 L812.7,706.7 L821.6,704.4 L830.6,702.6 L839.6,701.3 L848.5,700.5 L857.5,700.3 L866.3,700.5 L875.0,701.4 L883.6,702.7 L891.9,704.6 L900.0,707.0 L907.9,709.9 L915.5,713.3 L922.7,717.2 L929.6,721.5 L936.1,726.3 L942.2,731.6 L947.9,737.2 L953.1,743.3 L957.9,749.7 L962.2,756.5 L965.9,763.6 L969.2,770.9 L971.9,778.6 L974.0,786.4 L975.6,794.5 L976.7,802.7 L977.1,811.1" fill="none" stroke="#262523" stroke-width="1.2"/>
<path d="M697.0,853.6 L697.5,845.7 L698.5,837.7 L700.1,829.7 L702.3,821.7 L705.0,813.7 L708.2,805.8 L712.0,798.0 L716.2,790.3 L721.0,782.8 L726.2,775.5 L731.9,768.5 L738.0,761.7 L744.5,755.1 L751.4,749.0 L758.7,743.1 L766.3,737.6 L774.1,732.5 L782.2,727.9 L790.6,723.6 L799.1,719.8 L807.8,716.5 L816.7,713.7 L825.6,711.4 L834.6,709.6 L843.6,708.3 L852.5,707.5 L861.5,707.3 L870.3,707.5 L879.0,708.4 L887.6,709.7 L895.9,711.6 L904.0,714.0 L911.9,716.9 L919.5,720.3 L926.7,724.2 L933.6,728.5 L940.1,733.3 L946.2,738.6 L951.9,744.2 L957.1,750.3 L961.9,756.7 L966.2,763.5 L969.9,770.6 L973.2,777.9 L975.9,785.6 L978.0,793.4 L979.6,801.5 L980.7,809.7 L981.1,818.1" fill="none" stroke="#262523" stroke-width="1.2"/>
<path d="M712.5,873.5 L713.0,865.6 L714.0,857.7 L715.6,849.6 L717.8,841.6 L720.5,833.7 L723.7,825.7 L727.5,817.9 L731.7,810.3 L736.5,802.8 L741.7,795.5 L747.4,788.4 L753.5,781.6 L760.0,775.1 L766.9,768.9 L774.2,763.0 L781.8,757.5 L789.6,752.5 L797.7,747.8 L806.1,743.5 L814.6,739.8 L823.3,736.5 L832.2,733.6 L841.1,731.3 L850.1,729.5 L859.1,728.2 L868.0,727.4 L877.0,727.2 L885.8,727.5 L894.5,728.3 L903.1,729.6 L911.4,731.5 L919.5,733.9 L927.4,736.8 L935.0,740.2 L942.2,744.1 L949.1,748.5 L955.6,753.3 L961.7,758.5 L967.4,764.2 L972.6,770.2 L977.4,776.6 L981.7,783.4 L985.4,790.5 L988.7,797.9 L991.4,805.5 L993.5,813.4 L995.1,821.4 L996.2,829.7 L996.6,838.0" fill="none" stroke="#262523" stroke-width="1.2"/>
<path d="M716.5,880.5 L717.0,872.6 L718.0,864.7 L719.6,856.6 L721.8,848.6 L724.5,840.7 L727.7,832.7 L731.5,824.9 L735.7,817.3 L740.5,809.8 L745.7,802.5 L751.4,795.4 L757.5,788.6 L764.0,782.1 L770.9,775.9 L778.2,770.0 L785.8,764.5 L793.6,759.5 L801.7,754.8 L810.1,750.5 L818.6,746.8 L827.3,743.5 L836.2,740.6 L845.1,738.3 L854.1,736.5 L863.1,735.2 L872.0,734.4 L881.0,734.2 L889.8,734.5 L898.5,735.3 L907.1,736.6 L915.4,738.5 L923.5,740.9 L931.4,743.8 L939.0,747.2 L946.2,751.1 L953.1,755.5 L959.6,760.3 L965.7,765.5 L971.4,771.2 L976.6,777.2 L981.4,783.6 L985.7,790.4 L989.4,797.5 L992.7,804.9 L995.4,812.5 L997.5,820.4 L999.1,828.4 L1000.2,836.7 L1000.6,845.0" fill="none" stroke="#262523" stroke-width="1.2"/>
<path d="M732.0,900.5 L732.5,892.6 L733.5,884.6 L735.1,876.6 L737.3,868.6 L740.0,860.6 L743.2,852.7 L747.0,844.9 L751.2,837.2 L756.0,829.7 L761.2,822.4 L766.9,815.3 L773.0,808.5 L779.5,802.0 L786.4,795.8 L793.7,790.0 L801.3,784.5 L809.1,779.4 L817.2,774.7 L825.6,770.5 L834.1,766.7 L842.8,763.4 L851.7,760.6 L860.6,758.2 L869.6,756.4 L878.6,755.1 L887.5,754.4 L896.5,754.1 L905.3,754.4 L914.0,755.2 L922.6,756.6 L930.9,758.5 L939.0,760.8 L946.9,763.7 L954.5,767.1 L961.7,771.0 L968.6,775.4 L975.1,780.2 L981.2,785.4 L986.9,791.1 L992.1,797.2 L996.9,803.6 L1001.2,810.3 L1004.9,817.4 L1008.2,824.8 L1010.9,832.4 L1013.0,840.3 L1014.6,848.4 L1015.7,856.6 L1016.1,864.9" fill="none" stroke="#262523" stroke-width="1.2"/>
<path d="M736.0,907.5 L736.5,899.6 L737.5,891.6 L739.1,883.6 L741.3,875.6 L744.0,867.6 L747.2,859.7 L751.0,851.9 L755.2,844.2 L760.0,836.7 L765.2,829.4 L770.9,822.3 L777.0,815.5 L783.5,809.0 L790.4,802.8 L797.7,797.0 L805.3,791.5 L813.1,786.4 L821.2,781.7 L829.6,777.5 L838.1,773.7 L846.8,770.4 L855.7,767.6 L864.6,765.2 L873.6,763.4 L882.6,762.1 L891.5,761.4 L900.5,761.1 L909.3,761.4 L918.0,762.2 L926.6,763.6 L934.9,765.5 L943.0,767.8 L950.9,770.7 L958.5,774.1 L965.7,778.0 L972.6,782.4 L979.1,787.2 L985.2,792.4 L990.9,798.1 L996.1,804.2 L1000.9,810.6 L1005.2,817.3 L1008.9,824.4 L1012.2,831.8 L1014.9,839.4 L1017.0,847.3 L1018.6,855.4 L1019.7,863.6 L1020.1,871.9" fill="none" stroke="#262523" stroke-width="1.2"/>
<path d="M751.5,927.4 L752.0,919.5 L753.0,911.5 L754.6,903.5 L756.8,895.5 L759.5,887.5 L762.7,879.6 L766.5,871.8 L770.7,864.1 L775.5,856.6 L780.7,849.3 L786.4,842.3 L792.5,835.5 L799.0,828.9 L805.9,822.7 L813.2,816.9 L820.8,811.4 L828.6,806.3 L836.7,801.6 L845.1,797.4 L853.6,793.6 L862.3,790.3 L871.2,787.5 L880.1,785.2 L889.1,783.4 L898.1,782.1 L907.0,781.3 L916.0,781.0 L924.8,781.3 L933.5,782.2 L942.1,783.5 L950.4,785.4 L958.5,787.8 L966.4,790.7 L974.0,794.1 L981.2,798.0 L988.1,802.3 L994.6,807.1 L1000.7,812.4 L1006.4,818.0 L1011.6,824.1 L1016.4,830.5 L1020.7,837.3 L1024.4,844.4 L1027.7,851.7 L1030.4,859.4 L1032.5,867.2 L1034.1,875.3 L1035.2,883.5 L1035.7,891.9" fill="none" stroke="#262523" stroke-width="1.2"/>
<path d="M755.5,934.4 L756.0,926.5 L757.0,918.5 L758.6,910.5 L760.8,902.5 L763.5,894.5 L766.7,886.6 L770.5,878.8 L774.7,871.1 L779.5,863.6 L784.7,856.3 L790.4,849.3 L796.5,842.5 L803.0,835.9 L809.9,829.7 L817.2,823.9 L824.8,818.4 L832.6,813.3 L840.7,808.6 L849.1,804.4 L857.6,800.6 L866.3,797.3 L875.2,794.5 L884.1,792.2 L893.1,790.4 L902.1,789.1 L911.0,788.3 L920.0,788.0 L928.8,788.3 L937.5,789.2 L946.1,790.5 L954.4,792.4 L962.5,794.8 L970.4,797.7 L978.0,801.1 L985.2,805.0 L992.1,809.3 L998.6,814.1 L1004.7,819.4 L1010.4,825.0 L1015.6,831.1 L1020.4,837.5 L1024.7,844.3 L1028.4,851.4 L1031.7,858.7 L1034.4,866.4 L1036.5,874.2 L1038.1,882.3 L1039.2,890.5 L1039.7,898.9" fill="none" stroke="#262523" stroke-width="1.2"/>
<path d="M771.0,954.3 L771.5,946.4 L772.5,938.4 L774.1,930.4 L776.3,922.4 L779.0,914.4 L782.2,906.5 L786.0,898.7 L790.2,891.1 L795.0,883.6 L800.2,876.3 L805.9,869.2 L812.0,862.4 L818.5,855.9 L825.4,849.7 L832.7,843.8 L840.3,838.3 L848.1,833.2 L856.2,828.6 L864.6,824.3 L873.1,820.6 L881.8,817.2 L890.7,814.4 L899.6,812.1 L908.6,810.3 L917.6,809.0 L926.5,808.2 L935.5,808.0 L944.3,808.3 L953.0,809.1 L961.6,810.4 L969.9,812.3 L978.0,814.7 L985.9,817.6 L993.5,821.0 L1000.7,824.9 L1007.6,829.2 L1014.1,834.1 L1020.2,839.3 L1025.9,845.0 L1031.1,851.0 L1035.9,857.4 L1040.2,864.2 L1043.9,871.3 L1047.2,878.7 L1049.9,886.3 L1052.0,894.2 L1053.6,902.2 L1054.7,910.4 L1055.2,918.8" fill="none" stroke="#262523" stroke-width="1.2"/>
<path d="M775.0,961.3 L775.5,953.4 L776.5,945.4 L778.1,937.4 L780.3,929.4 L783.0,921.4 L786.2,913.5 L790.0,905.7 L794.2,898.1 L799.0,890.6 L804.2,883.3 L809.9,876.2 L816.0,869.4 L822.5,862.9 L829.4,856.7 L836.7,850.8 L844.3,845.3 L852.1,840.2 L860.2,835.6 L868.6,831.3 L877.1,827.6 L885.8,824.2 L894.7,821.4 L903.6,819.1 L912.6,817.3 L921.6,816.0 L930.5,815.2 L939.5,815.0 L948.3,815.3 L957.0,816.1 L965.6,817.4 L973.9,819.3 L982.0,821.7 L989.9,824.6 L997.5,828.0 L1004.7,831.9 L1011.6,836.2 L1018.1,841.1 L1024.2,846.3 L1029.9,852.0 L1035.1,858.0 L1039.9,864.4 L1044.2,871.2 L1047.9,878.3 L1051.2,885.7 L1053.9,893.3 L1056.0,901.2 L1057.6,909.2 L1058.7,917.4 L1059.2,925.8" fill="none" stroke="#262523" stroke-width="1.2"/>
<path d="M790.5,981.3 L791.0,973.4 L792.0,965.4 L793.6,957.4 L795.8,949.4 L798.5,941.4 L801.7,933.5 L805.5,925.7 L809.7,918.0 L814.5,910.5 L819.7,903.2 L825.4,896.1 L831.5,889.3 L838.0,882.8 L844.9,876.6 L852.2,870.7 L859.8,865.3 L867.6,860.2 L875.7,855.5 L884.1,851.3 L892.6,847.5 L901.3,844.2 L910.2,841.4 L919.1,839.0 L928.1,837.2 L937.1,835.9 L946.0,835.1 L955.0,834.9 L963.8,835.2 L972.5,836.0 L981.1,837.4 L989.4,839.2 L997.5,841.6 L1005.4,844.5 L1013.0,847.9 L1020.2,851.8 L1027.1,856.2 L1033.6,861.0 L1039.7,866.2 L1045.4,871.9 L1050.6,877.9 L1055.4,884.4 L1059.7,891.1 L1063.4,898.2 L1066.7,905.6 L1069.4,913.2 L1071.5,921.1 L1073.1,929.1 L1074.2,937.4 L1074.7,945.7" fill="none" stroke="#262523" stroke-width="1.2"/>
<path d="M794.5,988.3 L795.0,980.4 L796.0,972.4 L797.6,964.4 L799.8,956.4 L802.5,948.4 L805.7,940.5 L809.5,932.7 L813.7,925.0 L818.5,917.5 L823.7,910.2 L829.4,903.1 L835.5,896.3 L842.0,889.8 L848.9,883.6 L856.2,877.7 L863.8,872.3 L871.6,867.2 L879.7,862.5 L888.1,858.3 L896.6,854.5 L905.3,851.2 L914.2,848.4 L923.1,846.0 L932.1,844.2 L941.1,842.9 L950.0,842.1 L959.0,841.9 L967.8,842.2 L976.5,843.0 L985.1,844.4 L993.4,846.2 L1001.5,848.6 L1009.4,851.5 L1017.0,854.9 L1024.2,858.8 L1031.1,863.2 L1037.6,868.0 L1043.7,873.2 L1049.4,878.9 L1054.6,884.9 L1059.4,891.4 L1063.7,898.1 L1067.4,905.2 L1070.7,912.6 L1073.4,920.2 L1075.5,928.1 L1077.1,936.1 L1078.2,944.4 L1078.7,952.7" fill="none" stroke="#262523" stroke-width="1.2"/>
<path d="M810.0,1008.2 L810.5,1000.3 L811.5,992.3 L813.1,984.3 L815.3,976.3 L818.0,968.3 L821.2,960.4 L825.0,952.6 L829.2,944.9 L834.0,937.4 L839.2,930.1 L844.9,923.1 L851.0,916.2 L857.5,909.7 L864.4,903.5 L871.7,897.7 L879.3,892.2 L887.1,887.1 L895.2,882.4 L903.6,878.2 L912.1,874.4 L920.8,871.1 L929.7,868.3 L938.6,866.0 L947.6,864.1 L956.6,862.8 L965.5,862.1 L974.5,861.8 L983.3,862.1 L992.0,862.9 L1000.6,864.3 L1008.9,866.2 L1017.0,868.6 L1024.9,871.5 L1032.5,874.9 L1039.7,878.7 L1046.6,883.1 L1053.1,887.9 L1059.2,893.2 L1064.9,898.8 L1070.1,904.9 L1074.9,911.3 L1079.2,918.1 L1082.9,925.1 L1086.2,932.5 L1088.9,940.2 L1091.0,948.0 L1092.6,956.1 L1093.7,964.3 L1094.2,972.7" fill="none" stroke="#262523" stroke-width="1.2"/>
<path d="M814.0,1015.2 L814.5,1007.3 L815.5,999.3 L817.1,991.3 L819.3,983.3 L822.0,975.3 L825.2,967.4 L829.0,959.6 L833.2,951.9 L838.0,944.4 L843.2,937.1 L848.9,930.1 L855.0,923.2 L861.5,916.7 L868.4,910.5 L875.7,904.7 L883.3,899.2 L891.1,894.1 L899.2,889.4 L907.6,885.2 L916.1,881.4 L924.8,878.1 L933.7,875.3 L942.6,873.0 L951.6,871.1 L960.6,869.8 L969.5,869.1 L978.5,868.8 L987.3,869.1 L996.0,869.9 L1004.6,871.3 L1012.9,873.2 L1021.0,875.6 L1028.9,878.5 L1036.5,881.9 L1043.7,885.7 L1050.6,890.1 L1057.1,894.9 L1063.2,900.2 L1068.9,905.8 L1074.1,911.9 L1078.9,918.3 L1083.2,925.1 L1086.9,932.1 L1090.2,939.5 L1092.9,947.2 L1095.0,955.0 L1096.6,963.1 L1097.7,971.3 L1098.2,979.7" fill="none" stroke="#262523" stroke-width="1.2"/>
<path d="M829.5,1035.1 L830.0,1027.2 L831.0,1019.2 L832.6,1011.2 L834.8,1003.2 L837.5,995.2 L840.7,987.3 L844.5,979.5 L848.7,971.9 L853.5,964.4 L858.7,957.1 L864.4,950.0 L870.5,943.2 L877.0,936.7 L883.9,930.5 L891.2,924.6 L898.8,919.1 L906.6,914.0 L914.7,909.4 L923.1,905.1 L931.6,901.3 L940.3,898.0 L949.2,895.2 L958.1,892.9 L967.1,891.1 L976.1,889.8 L985.0,889.0 L994.0,888.8 L1002.8,889.1 L1011.5,889.9 L1020.1,891.2 L1028.4,893.1 L1036.5,895.5 L1044.4,898.4 L1052.0,901.8 L1059.2,905.7 L1066.1,910.0 L1072.6,914.8 L1078.7,920.1 L1084.4,925.8 L1089.6,931.8 L1094.4,938.2 L1098.7,945.0 L1102.4,952.1 L1105.7,959.5 L1108.4,967.1 L1110.5,974.9 L1112.1,983.0 L1113.2,991.2 L1113.7,999.6" fill="none" stroke="#262523" stroke-width="1.2"/>
<path d="M833.5,1042.1 L834.0,1034.2 L835.0,1026.2 L836.6,1018.2 L838.8,1010.2 L841.5,1002.2 L844.7,994.3 L848.5,986.5 L852.7,978.9 L857.5,971.4 L862.7,964.1 L868.4,957.0 L874.5,950.2 L881.0,943.7 L887.9,937.5 L895.2,931.6 L902.8,926.1 L910.6,921.0 L918.7,916.4 L927.1,912.1 L935.6,908.3 L944.3,905.0 L953.2,902.2 L962.1,899.9 L971.1,898.1 L980.1,896.8 L989.0,896.0 L998.0,895.8 L1006.8,896.1 L1015.5,896.9 L1024.1,898.2 L1032.4,900.1 L1040.5,902.5 L1048.4,905.4 L1056.0,908.8 L1063.2,912.7 L1070.1,917.0 L1076.6,921.8 L1082.7,927.1 L1088.4,932.8 L1093.6,938.8 L1098.4,945.2 L1102.7,952.0 L1106.4,959.1 L1109.7,966.5 L1112.4,974.1 L1114.5,981.9 L1116.1,990.0 L1117.2,998.2 L1117.7,1006.6" fill="none" stroke="#262523" stroke-width="1.2"/>
<path d="M849.0,1062.1 L849.5,1054.1 L850.5,1046.2 L852.1,1038.2 L854.3,1030.1 L857.0,1022.2 L860.2,1014.3 L864.0,1006.5 L868.2,998.8 L873.0,991.3 L878.2,984.0 L883.9,976.9 L890.0,970.1 L896.5,963.6 L903.4,957.4 L910.7,951.5 L918.3,946.1 L926.1,941.0 L934.2,936.3 L942.6,932.1 L951.1,928.3 L959.8,925.0 L968.7,922.1 L977.6,919.8 L986.6,918.0 L995.6,916.7 L1004.5,915.9 L1013.5,915.7 L1022.3,916.0 L1031.0,916.8 L1039.6,918.2 L1047.9,920.0 L1056.0,922.4 L1063.9,925.3 L1071.5,928.7 L1078.7,932.6 L1085.6,937.0 L1092.1,941.8 L1098.2,947.0 L1103.9,952.7 L1109.1,958.7 L1113.9,965.2 L1118.2,971.9 L1121.9,979.0 L1125.2,986.4 L1127.9,994.0 L1130.0,1001.9 L1131.6,1009.9 L1132.7,1018.2 L1133.2,1026.5" fill="none" stroke="#262523" stroke-width="1.2"/>
<path d="M853.0,1069.1 L853.5,1061.1 L854.5,1053.2 L856.1,1045.2 L858.3,1037.1 L861.0,1029.2 L864.2,1021.3 L868.0,1013.5 L872.2,1005.8 L877.0,998.3 L882.2,991.0 L887.9,983.9 L894.0,977.1 L900.5,970.6 L907.4,964.4 L914.7,958.5 L922.3,953.1 L930.1,948.0 L938.2,943.3 L946.6,939.1 L955.1,935.3 L963.8,932.0 L972.7,929.1 L981.6,926.8 L990.6,925.0 L999.6,923.7 L1008.5,922.9 L1017.5,922.7 L1026.3,923.0 L1035.0,923.8 L1043.6,925.2 L1051.9,927.0 L1060.0,929.4 L1067.9,932.3 L1075.5,935.7 L1082.7,939.6 L1089.6,944.0 L1096.1,948.8 L1102.2,954.0 L1107.9,959.7 L1113.1,965.7 L1117.9,972.2 L1122.2,978.9 L1125.9,986.0 L1129.2,993.4 L1131.9,1001.0 L1134.0,1008.9 L1135.6,1016.9 L1136.7,1025.2 L1137.2,1033.5" fill="none" stroke="#262523" stroke-width="1.2"/>
<path d="M868.5,1089.0 L869.0,1081.1 L870.0,1073.1 L871.6,1065.1 L873.8,1057.1 L876.5,1049.1 L879.7,1041.2 L883.5,1033.4 L887.7,1025.7 L892.5,1018.2 L897.7,1010.9 L903.4,1003.8 L909.5,997.0 L916.0,990.5 L922.9,984.3 L930.2,978.5 L937.8,973.0 L945.6,967.9 L953.7,963.2 L962.1,959.0 L970.6,955.2 L979.3,951.9 L988.2,949.1 L997.1,946.7 L1006.1,944.9 L1015.1,943.6 L1024.0,942.9 L1033.0,942.6 L1041.8,942.9 L1050.5,943.7 L1059.1,945.1 L1067.4,947.0 L1075.5,949.4 L1083.4,952.3 L1091.0,955.7 L1098.2,959.5 L1105.1,963.9 L1111.6,968.7 L1117.7,974.0 L1123.4,979.6 L1128.6,985.7 L1133.4,992.1 L1137.7,998.9 L1141.4,1005.9 L1144.7,1013.3 L1147.4,1020.9 L1149.5,1028.8 L1151.1,1036.9 L1152.2,1045.1 L1152.7,1053.5" fill="none" stroke="#262523" stroke-width="1.2"/>
<path d="M872.5,1096.0 L873.0,1088.1 L874.0,1080.1 L875.6,1072.1 L877.8,1064.1 L880.5,1056.1 L883.7,1048.2 L887.5,1040.4 L891.7,1032.7 L896.5,1025.2 L901.7,1017.9 L907.4,1010.8 L913.5,1004.0 L920.0,997.5 L926.9,991.3 L934.2,985.5 L941.8,980.0 L949.6,974.9 L957.7,970.2 L966.1,966.0 L974.6,962.2 L983.3,958.9 L992.2,956.1 L1001.1,953.7 L1010.1,951.9 L1019.1,950.6 L1028.0,949.9 L1037.0,949.6 L1045.8,949.9 L1054.5,950.7 L1063.1,952.1 L1071.4,954.0 L1079.5,956.4 L1087.4,959.3 L1095.0,962.7 L1102.2,966.5 L1109.1,970.9 L1115.6,975.7 L1121.7,981.0 L1127.4,986.6 L1132.6,992.7 L1137.4,999.1 L1141.7,1005.9 L1145.4,1012.9 L1148.7,1020.3 L1151.4,1027.9 L1153.5,1035.8 L1155.1,1043.9 L1156.2,1052.1 L1156.7,1060.5" fill="none" stroke="#262523" stroke-width="1.2"/>
<path d="M888.0,1115.9 L888.5,1108.0 L889.5,1100.0 L891.1,1092.0 L893.3,1084.0 L896.0,1076.0 L899.2,1068.1 L903.0,1060.3 L907.2,1052.6 L912.0,1045.1 L917.2,1037.8 L922.9,1030.8 L929.0,1024.0 L935.5,1017.4 L942.4,1011.3 L949.7,1005.4 L957.3,999.9 L965.1,994.8 L973.2,990.2 L981.6,985.9 L990.1,982.1 L998.8,978.8 L1007.7,976.0 L1016.6,973.7 L1025.6,971.9 L1034.6,970.6 L1043.5,969.8 L1052.5,969.6 L1061.3,969.8 L1070.0,970.7 L1078.6,972.0 L1086.9,973.9 L1095.0,976.3 L1102.9,979.2 L1110.5,982.6 L1117.7,986.5 L1124.6,990.8 L1131.1,995.6 L1137.2,1000.9 L1142.9,1006.5 L1148.1,1012.6 L1152.9,1019.0 L1157.2,1025.8 L1160.9,1032.9 L1164.2,1040.2 L1166.9,1047.9 L1169.0,1055.7 L1170.6,1063.8 L1171.7,1072.0 L1172.2,1080.4" fill="none" stroke="#262523" stroke-width="1.2"/>
<path d="M892.0,1122.9 L892.5,1115.0 L893.5,1107.0 L895.1,1099.0 L897.3,1091.0 L900.0,1083.0 L903.2,1075.1 L907.0,1067.3 L911.2,1059.6 L916.0,1052.1 L921.2,1044.8 L926.9,1037.8 L933.0,1031.0 L939.5,1024.4 L946.4,1018.3 L953.7,1012.4 L961.3,1006.9 L969.1,1001.8 L977.2,997.2 L985.6,992.9 L994.1,989.1 L1002.8,985.8 L1011.7,983.0 L1020.6,980.7 L1029.6,978.9 L1038.6,977.6 L1047.5,976.8 L1056.5,976.6 L1065.3,976.8 L1074.0,977.7 L1082.6,979.0 L1090.9,980.9 L1099.0,983.3 L1106.9,986.2 L1114.5,989.6 L1121.7,993.5 L1128.6,997.8 L1135.1,1002.6 L1141.2,1007.9 L1146.9,1013.5 L1152.1,1019.6 L1156.9,1026.0 L1161.2,1032.8 L1164.9,1039.9 L1168.2,1047.2 L1170.9,1054.9 L1173.0,1062.7 L1174.6,1070.8 L1175.7,1079.0 L1176.2,1087.4" fill="none" stroke="#262523" stroke-width="1.2"/>
<path d="M907.5,1142.8 L908.0,1134.9 L909.0,1127.0 L910.6,1118.9 L912.8,1110.9 L915.5,1103.0 L918.7,1095.0 L922.5,1087.2 L926.7,1079.6 L931.5,1072.1 L936.7,1064.8 L942.4,1057.7 L948.5,1050.9 L955.0,1044.4 L961.9,1038.2 L969.2,1032.3 L976.8,1026.8 L984.6,1021.8 L992.7,1017.1 L1001.1,1012.8 L1009.6,1009.1 L1018.3,1005.8 L1027.2,1002.9 L1036.1,1000.6 L1045.1,998.8 L1054.1,997.5 L1063.0,996.7 L1072.0,996.5 L1080.8,996.8 L1089.5,997.6 L1098.1,998.9 L1106.4,1000.8 L1114.5,1003.2 L1122.4,1006.1 L1130.0,1009.5 L1137.2,1013.4 L1144.1,1017.8 L1150.6,1022.6 L1156.7,1027.8 L1162.4,1033.5 L1167.6,1039.5 L1172.4,1045.9 L1176.7,1052.7 L1180.4,1059.8 L1183.7,1067.2 L1186.4,1074.8 L1188.5,1082.7 L1190.1,1090.7 L1191.2,1099.0 L1191.7,1107.3" fill="none" stroke="#262523" stroke-width="1.2"/>
<path d="M911.5,1149.8 L912.0,1141.9 L913.0,1134.0 L914.6,1125.9 L916.8,1117.9 L919.5,1110.0 L922.7,1102.0 L926.5,1094.2 L930.7,1086.6 L935.5,1079.1 L940.7,1071.8 L946.4,1064.7 L952.5,1057.9 L959.0,1051.4 L965.9,1045.2 L973.2,1039.3 L980.8,1033.8 L988.6,1028.8 L996.7,1024.1 L1005.1,1019.8 L1013.6,1016.1 L1022.3,1012.8 L1031.2,1009.9 L1040.1,1007.6 L1049.1,1005.8 L1058.1,1004.5 L1067.0,1003.7 L1076.0,1003.5 L1084.8,1003.8 L1093.5,1004.6 L1102.1,1005.9 L1110.4,1007.8 L1118.5,1010.2 L1126.4,1013.1 L1134.0,1016.5 L1141.2,1020.4 L1148.1,1024.8 L1154.6,1029.6 L1160.7,1034.8 L1166.4,1040.5 L1171.6,1046.5 L1176.4,1052.9 L1180.7,1059.7 L1184.4,1066.8 L1187.7,1074.2 L1190.4,1081.8 L1192.5,1089.7 L1194.1,1097.7 L1195.2,1106.0 L1195.7,1114.3" fill="none" stroke="#262523" stroke-width="1.2"/>
</g>
<g clip-path="url(#boreclip)">
<path d="M898.0,1129.0 L897.6,1120.0 L1064.0,1145.0 Z" fill="#706e68" stroke="#706e68" stroke-width="0.6"/>
<path d="M897.6,1120.0 L898.1,1110.9 L1064.0,1145.0 Z" fill="#74726c" stroke="#74726c" stroke-width="0.6"/>
<path d="M898.1,1110.9 L899.4,1101.7 L1064.0,1145.0 Z" fill="#787671" stroke="#787671" stroke-width="0.6"/>
<path d="M899.4,1101.7 L901.5,1092.4 L1064.0,1145.0 Z" fill="#7c7a75" stroke="#7c7a75" stroke-width="0.6"/>
<path d="M901.5,1092.4 L904.4,1083.1 L1064.0,1145.0 Z" fill="#807f79" stroke="#807f79" stroke-width="0.6"/>
<path d="M904.4,1083.1 L908.2,1073.9 L1064.0,1145.0 Z" fill="#84837d" stroke="#84837d" stroke-width="0.6"/>
<path d="M908.2,1073.9 L912.7,1064.9 L1064.0,1145.0 Z" fill="#888782" stroke="#888782" stroke-width="0.6"/>
<path d="M912.7,1064.9 L917.9,1056.0 L1064.0,1145.0 Z" fill="#8c8b86" stroke="#8c8b86" stroke-width="0.6"/>
<path d="M917.9,1056.0 L923.9,1047.3 L1064.0,1145.0 Z" fill="#8f8e89" stroke="#8f8e89" stroke-width="0.6"/>
<path d="M923.9,1047.3 L930.5,1039.0 L1064.0,1145.0 Z" fill="#908f8a" stroke="#908f8a" stroke-width="0.6"/>
<path d="M930.5,1039.0 L937.7,1031.0 L1064.0,1145.0 Z" fill="#92918c" stroke="#92918c" stroke-width="0.6"/>
<path d="M937.7,1031.0 L945.6,1023.4 L1064.0,1145.0 Z" fill="#93928d" stroke="#93928d" stroke-width="0.6"/>
<path d="M945.6,1023.4 L953.9,1016.2 L1064.0,1145.0 Z" fill="#95948f" stroke="#95948f" stroke-width="0.6"/>
<path d="M953.9,1016.2 L962.8,1009.5 L1064.0,1145.0 Z" fill="#969590" stroke="#969590" stroke-width="0.6"/>
<path d="M962.8,1009.5 L972.1,1003.3 L1064.0,1145.0 Z" fill="#95948f" stroke="#95948f" stroke-width="0.6"/>
<path d="M972.1,1003.3 L981.8,997.7 L1064.0,1145.0 Z" fill="#908f8a" stroke="#908f8a" stroke-width="0.6"/>
<path d="M981.8,997.7 L991.8,992.7 L1064.0,1145.0 Z" fill="#8b8a85" stroke="#8b8a85" stroke-width="0.6"/>
<path d="M991.8,992.7 L1002.0,988.3 L1064.0,1145.0 Z" fill="#868580" stroke="#868580" stroke-width="0.6"/>
<path d="M1002.0,988.3 L1012.4,984.6 L1064.0,1145.0 Z" fill="#81807b" stroke="#81807b" stroke-width="0.6"/>
<path d="M1012.4,984.6 L1023.0,981.5 L1064.0,1145.0 Z" fill="#7c7b76" stroke="#7c7b76" stroke-width="0.6"/>
<path d="M1023.0,981.5 L1033.6,979.1 L1064.0,1145.0 Z" fill="#797873" stroke="#797873" stroke-width="0.6"/>
<path d="M1033.6,979.1 L1044.2,977.5 L1064.0,1145.0 Z" fill="#777671" stroke="#777671" stroke-width="0.6"/>
<path d="M1044.2,977.5 L1054.8,976.6 L1064.0,1145.0 Z" fill="#767470" stroke="#767470" stroke-width="0.6"/>
<path d="M1054.8,976.6 L1065.2,976.4 L1064.0,1145.0 Z" fill="#74736e" stroke="#74736e" stroke-width="0.6"/>
<path d="M1065.2,976.4 L1075.4,976.9 L1064.0,1145.0 Z" fill="#72716c" stroke="#72716c" stroke-width="0.6"/>
<path d="M1075.4,976.9 L1085.4,978.2 L1064.0,1145.0 Z" fill="#706f6a" stroke="#706f6a" stroke-width="0.6"/>
<path d="M1085.4,978.2 L1095.0,980.1 L1064.0,1145.0 Z" fill="#6e6d68" stroke="#6e6d68" stroke-width="0.6"/>
<path d="M1095.0,980.1 L1104.3,982.8 L1064.0,1145.0 Z" fill="#6c6c66" stroke="#6c6c66" stroke-width="0.6"/>
<path d="M1104.3,982.8 L1113.1,986.2 L1064.0,1145.0 Z" fill="#6b6a65" stroke="#6b6a65" stroke-width="0.6"/>
<path d="M1113.1,986.2 L1121.4,990.2 L1064.0,1145.0 Z" fill="#696863" stroke="#696863" stroke-width="0.6"/>
<path d="M1121.4,990.2 L1129.2,994.9 L1064.0,1145.0 Z" fill="#676661" stroke="#676661" stroke-width="0.6"/>
<path d="M1129.2,994.9 L1136.3,1000.2 L1064.0,1145.0 Z" fill="#666560" stroke="#666560" stroke-width="0.6"/>
<path d="M1136.3,1000.2 L1142.9,1006.0 L1064.0,1145.0 Z" fill="#64645e" stroke="#64645e" stroke-width="0.6"/>
<path d="M1142.9,1006.0 L1148.7,1012.5 L1064.0,1145.0 Z" fill="#63625d" stroke="#63625d" stroke-width="0.6"/>
<path d="M1148.7,1012.5 L1153.9,1019.4 L1064.0,1145.0 Z" fill="#62615c" stroke="#62615c" stroke-width="0.6"/>
<path d="M1153.9,1019.4 L1158.3,1026.8 L1064.0,1145.0 Z" fill="#605f5a" stroke="#605f5a" stroke-width="0.6"/>
<path d="M1158.3,1026.8 L1161.9,1034.6 L1064.0,1145.0 Z" fill="#5f5e59" stroke="#5f5e59" stroke-width="0.6"/>
<path d="M1161.9,1034.6 L1164.8,1042.7 L1064.0,1145.0 Z" fill="#5e5c58" stroke="#5e5c58" stroke-width="0.6"/>
<path d="M1164.8,1042.7 L1166.8,1051.2 L1064.0,1145.0 Z" fill="#5c5b56" stroke="#5c5b56" stroke-width="0.6"/>
<path d="M1166.8,1051.2 L1168.0,1060.0 L1064.0,1145.0 Z" fill="#5b5a55" stroke="#5b5a55" stroke-width="0.6"/>
</g>
<path d="M898.0,1129.0 L897.6,1120.0 L898.1,1110.9 L899.4,1101.7 L901.5,1092.4 L904.4,1083.1 L908.2,1073.9 L912.7,1064.9 L917.9,1056.0 L923.9,1047.3 L930.5,1039.0 L937.7,1031.0 L945.6,1023.4 L953.9,1016.2 L962.8,1009.5 L972.1,1003.3 L981.8,997.7 L991.8,992.7 L1002.0,988.3 L1012.4,984.6 L1023.0,981.5 L1033.6,979.1 L1044.2,977.5 L1054.8,976.6 L1065.2,976.4 L1075.4,976.9 L1085.4,978.2 L1095.0,980.1 L1104.3,982.8 L1113.1,986.2 L1121.4,990.2 L1129.2,994.9 L1136.3,1000.2 L1142.9,1006.0 L1148.7,1012.5 L1153.9,1019.4 L1158.3,1026.8 L1161.9,1034.6 L1164.8,1042.7 L1166.8,1051.2 L1168.0,1060.0" fill="none" stroke="#222" stroke-width="1.3"/>
<path d="M897.2,686.8 L917.2,690.3 L899.2,703.3 Z" fill="#7a776f" stroke="#2a2a28" stroke-width="1"/>
<path d="M916.7,713.7 L936.7,717.2 L918.7,730.2 Z" fill="#7a776f" stroke="#2a2a28" stroke-width="1"/>
<path d="M936.2,740.7 L956.2,744.2 L938.2,757.2 Z" fill="#7a776f" stroke="#2a2a28" stroke-width="1"/>
<path d="M955.7,767.6 L975.7,771.1 L957.7,784.1 Z" fill="#7a776f" stroke="#2a2a28" stroke-width="1"/>
<path d="M975.2,794.5 L995.2,798.0 L977.2,811.0 Z" fill="#7a776f" stroke="#2a2a28" stroke-width="1"/>
<path d="M994.7,821.4 L1014.7,824.9 L996.7,837.9 Z" fill="#7a776f" stroke="#2a2a28" stroke-width="1"/>
<path d="M1014.2,848.4 L1034.2,851.9 L1016.2,864.9 Z" fill="#7a776f" stroke="#2a2a28" stroke-width="1"/>
<path d="M1033.7,875.3 L1053.7,878.8 L1035.7,891.8 Z" fill="#7a776f" stroke="#2a2a28" stroke-width="1"/>
<path d="M1053.2,902.2 L1073.2,905.7 L1055.2,918.7 Z" fill="#7a776f" stroke="#2a2a28" stroke-width="1"/>
<path d="M1072.7,929.2 L1092.7,932.7 L1074.7,945.7 Z" fill="#7a776f" stroke="#2a2a28" stroke-width="1"/>
<path d="M1092.2,956.1 L1112.2,959.6 L1094.2,972.6 Z" fill="#7a776f" stroke="#2a2a28" stroke-width="1"/>
<path d="M1111.7,983.0 L1131.7,986.5 L1113.7,999.5 Z" fill="#7a776f" stroke="#2a2a28" stroke-width="1"/>
<path d="M1131.2,1010.0 L1151.2,1013.5 L1133.2,1026.5 Z" fill="#7a776f" stroke="#2a2a28" stroke-width="1"/>
<path d="M1150.7,1036.9 L1170.7,1040.4 L1152.7,1053.4 Z" fill="#7a776f" stroke="#2a2a28" stroke-width="1"/>
<path d="M1170.2,1063.8 L1190.2,1067.3 L1172.2,1080.3 Z" fill="#7a776f" stroke="#2a2a28" stroke-width="1"/>
<path d="M2215.3,851.9 L2215.2,856.8 L2214.8,861.7 L2214.2,866.6 L2213.4,871.5 L2212.4,876.4 L2211.2,881.3 L2209.8,886.2 L2208.2,891.0 L2206.4,895.9 L2204.4,900.7 L2202.2,905.5 L2199.7,910.2 L2197.1,914.9 L2194.2,919.6 L2191.2,924.3 L2188.0,928.9 L2184.5,933.5 L2180.9,938.1 L2177.1,942.6 L2173.1,947.1 L2168.9,951.5 L2164.5,955.9 L2159.9,960.3 L2155.1,964.6 L2150.2,968.8 L2145.0,973.0 L2139.7,977.1 L2134.2,981.2 L2128.6,985.2 L2122.7,989.1 L2116.7,993.0 L2110.6,996.9 L2104.2,1000.6 L2097.8,1004.3 L2091.1,1007.9 L2084.3,1011.5 L2077.4,1014.9 L2070.3,1018.4 L2063.0,1021.7 L2055.6,1024.9 L2048.1,1028.1 L2040.4,1031.2 L2032.6,1034.2 L2024.7,1037.1 L2016.6,1040.0 L2008.5,1042.7 L2000.2,1045.4 L1991.8,1048.0 L1983.3,1050.5 L1974.6,1052.9 L1965.9,1055.2 L1957.1,1057.4 L1948.2,1059.6 L1939.2,1061.6 L1930.1,1063.5 L1920.9,1065.4 L1911.6,1067.1 L1902.3,1068.8 L1892.9,1070.3 L1883.4,1071.8 L1873.9,1073.2 L1864.3,1074.4 L1854.6,1075.6 L1844.9,1076.6 L1835.1,1077.6 L1825.4,1078.4 L1815.5,1079.2 L1805.7,1079.8 L1795.8,1080.4 L1785.9,1080.8 L1775.9,1081.2 L1766.0,1081.4 L1756.0,1081.5 L1746.1,1081.6 L1736.1,1081.5 L1726.1,1081.3 L1716.2,1081.0 L1706.2,1080.7 L1696.3,1080.2 L1686.4,1079.6 L1676.5,1078.9 L1666.6,1078.1 L1656.8,1077.2 L1647.0,1076.2 L1637.3,1075.1 L1627.5,1073.9 L1617.9,1072.6 L1608.3,1071.2 L1598.8,1069.7 L1589.3,1068.1 L1579.9,1066.4 L1570.5,1064.6 L1561.3,1062.7 L1552.1,1060.7 L1543.0,1058.7 L1534.0,1056.5 L1525.0,1054.2 L1516.2,1051.9 L1507.5,1049.4 L1498.8,1046.9 L1490.3,1044.3 L1481.9,1041.6 L1473.6,1038.8 L1465.5,1035.9 L1457.4,1032.9 L1449.5,1029.9 L1441.7,1026.8 L1434.0,1023.6 L1426.5,1020.3 L1419.1,1016.9 L1411.8,1013.5 L1404.7,1010.0 L1397.8,1006.4 L1391.0,1002.7 L1384.3,999.0 L1377.8,995.2 L1371.5,991.4 L1365.3,987.5 L1359.3,983.5 L1353.5,979.5 L1347.8,975.4 L1342.3,971.2 L1337.0,967.0 L1331.8,962.7 L1326.9,958.4 L1322.1,954.1 L1317.5,949.7 L1313.1,945.2 L1308.9,940.7 L1304.9,936.2 L1301.1,931.6 L1297.4,927.0 L1294.0,922.3 L1290.7,917.6 L1287.7,912.9 L1284.9,908.2 L1282.2,903.4 L1279.8,898.6 L1277.5,893.8 L1275.5,889.0 L1273.7,884.1 L1272.1,879.2 L1270.7,874.4 L1269.4,869.5 L1268.5,864.5 L1267.7,859.6 L1267.1,854.7 L1266.7,849.8 L1266.6,844.9 L1266.6,839.9 L1266.9,835.0 L1267.3,830.1 L1268.0,825.2 L1268.9,820.3 L1270.0,815.4 L1271.3,810.5 L1272.8,805.7 L1274.5,800.8 L1276.4,796.0 L1278.6,791.2 L1280.9,786.4 L1283.4,781.7 L1286.2,777.0 L1289.1,772.3 L1292.2,767.6 L1295.6,763.0 L1299.1,758.4 L1302.8,753.9 L1306.8,749.4 L1310.9,745.0 L1315.2,740.5 L1319.7,736.2 L1324.3,731.9 L1329.2,727.6 L1334.2,723.4 L1339.5,719.2 L1344.9,715.1 L1350.4,711.1 L1356.2,707.1 L1362.1,703.2 L1368.2,699.3 L1374.4,695.5 L1380.8,691.8 L1387.4,688.2 L1394.1,684.6 L1401.0,681.1 L1408.0,677.6 L1415.2,674.3 L1422.5,671.0 L1430.0,667.8 L1437.6,664.6 L1445.3,661.6 L1453.2,658.6 L1461.2,655.7 L1469.3,652.9 L1477.5,650.2 L1485.9,647.6 L1494.3,645.0 L1502.9,642.6 L1511.6,640.2 L1520.3,637.9 L1529.2,635.8 L1538.2,633.7 L1547.2,631.7 L1556.4,629.8 L1565.6,628.0 L1574.9,626.3 L1584.3,624.7 L1593.7,623.2 L1603.2,621.8 L1612.8,620.5 L1622.4,619.3 L1632.1,618.2 L1641.8,617.2 L1651.6,616.2 L1661.4,615.4 L1671.3,614.7 L1681.1,614.1 L1691.0,613.7 L1701.0,613.3 L1710.9,613.0 L1720.9,612.8 L1730.8,612.7 L1740.8,612.7 L1750.7,612.9 L1760.7,613.1 L1770.7,613.4 L1780.6,613.9 L1790.5,614.4 L1800.4,615.0 L1810.3,615.8 L1820.2,616.6 L1830.0,617.6 L1839.7,618.6 L1849.5,619.8 L1859.1,621.0 L1868.8,622.4 L1878.3,623.8 L1887.9,625.4 L1897.3,627.0 L1906.7,628.8 L1916.0,630.6 L1925.2,632.5 L1934.4,634.6 L1943.4,636.7 L1952.4,638.9 L1961.3,641.2 L1970.0,643.6 L1978.7,646.1 L1987.3,648.7 L1995.7,651.3 L2004.1,654.1 L2012.3,656.9 L2020.5,659.9 L2028.4,662.9 L2036.3,665.9 L2044.0,669.1 L2051.6,672.4 L2059.1,675.7 L2066.4,679.1 L2073.6,682.6 L2080.6,686.1 L2087.5,689.7 L2094.3,693.4 L2100.8,697.1 L2107.2,701.0 L2113.5,704.9 L2119.6,708.8 L2125.5,712.8 L2131.3,716.9 L2136.8,721.0 L2142.2,725.2 L2147.5,729.4 L2152.5,733.7 L2157.4,738.0 L2162.1,742.4 L2166.6,746.8 L2170.9,751.3 L2175.0,755.8 L2178.9,760.4 L2182.6,765.0 L2186.2,769.6 L2189.5,774.3 L2192.7,779.0 L2195.6,783.7 L2198.3,788.5 L2200.9,793.3 L2203.2,798.1 L2205.4,802.9 L2207.3,807.7 L2209.0,812.6 L2210.5,817.5 L2211.8,822.4 L2212.9,827.3 L2213.8,832.2 L2214.5,837.1 L2215.0,842.0 L2215.3,847.0 L2215.3,851.9 Z" fill="url(#ghole)"/>
<path d="M1341.3,721.9 L1348.0,725.4 L1354.6,728.9 L1361.3,732.3 L1368.0,735.7 L1374.7,739.0 L1381.3,742.2 L1388.0,745.3 L1394.7,748.4 L1401.4,751.5 L1408.0,754.4 L1414.7,757.3 L1421.4,760.2 L1428.1,762.9 L1434.7,765.7 L1441.4,768.3 L1448.1,770.9 L1454.8,773.4 L1461.4,775.9 L1468.1,778.3 L1474.8,780.6 L1481.5,782.9 L1488.1,785.2 L1494.8,787.3 L1501.5,789.4 L1508.1,791.5 L1514.8,793.5 L1521.5,795.4 L1528.2,797.3 L1534.8,799.1 L1541.5,800.8 L1548.2,802.5 L1554.9,804.2 L1561.5,805.8 L1568.2,807.3 L1574.9,808.8 L1581.6,810.2 L1588.2,811.5 L1594.9,812.9 L1601.6,814.1 L1608.3,815.3 L1614.9,816.4 L1621.6,817.5 L1628.3,818.5 L1635.0,819.5 L1641.6,820.4 L1648.3,821.2 L1655.0,822.0 L1661.6,822.7 L1668.3,823.4 L1675.0,824.0 L1681.7,824.5 L1688.3,825.0 L1695.0,825.4 L1701.7,825.7 L1708.4,826.0 L1715.0,826.2 L1721.7,826.3 L1728.4,826.4 L1735.1,826.4 L1741.7,826.3 L1748.4,826.2 L1755.1,826.0 L1761.8,825.7 L1768.4,825.4 L1775.1,825.0 L1781.8,824.5 L1788.5,824.0 L1795.1,823.4 L1801.8,822.8 L1808.5,822.1 L1815.2,821.4 L1821.8,820.6 L1828.5,819.8 L1835.2,818.9 L1841.8,817.9 L1848.5,817.0 L1855.2,815.9 L1861.9,814.9 L1868.5,813.8 L1875.2,812.6 L1881.9,811.4 L1888.6,810.2 L1895.2,808.9 L1901.9,807.6 L1908.6,806.2 L1915.3,804.8 L1921.9,803.3 L1928.6,801.8 L1935.3,800.2 L1942.0,798.6 L1948.6,796.9 L1955.3,795.1 L1962.0,793.3 L1968.7,791.4 L1975.3,789.5 L1982.0,787.5 L1988.7,785.4 L1995.3,783.3 L2002.0,781.1 L2008.7,778.8 L2015.4,776.5 L2022.0,774.1 L2028.7,771.6 L2035.4,769.0 L2042.1,766.4 L2048.7,763.7 L2055.4,760.9 L2062.1,758.0 L2068.8,755.1 L2075.4,752.1 L2082.1,748.9 L2088.8,745.8 L2095.5,742.5 L2102.1,739.1 L2108.8,735.6 L2115.5,732.1 L2122.2,728.5 L2128.8,724.7 L2135.5,720.9 L2135.9,720.3 L2132.6,717.8 L2129.2,715.4 L2125.8,713.0 L2122.3,710.6 L2118.7,708.2 L2115.1,705.8 L2111.4,703.5 L2107.6,701.2 L2103.8,698.9 L2100.0,696.6 L2096.1,694.4 L2092.1,692.2 L2088.1,690.0 L2084.0,687.8 L2079.8,685.7 L2075.7,683.6 L2071.4,681.5 L2067.1,679.4 L2062.8,677.4 L2058.4,675.4 L2053.9,673.4 L2049.4,671.4 L2044.9,669.5 L2040.3,667.6 L2035.7,665.7 L2031.0,663.8 L2026.3,662.0 L2021.5,660.2 L2016.7,658.5 L2011.8,656.8 L2006.9,655.1 L2002.0,653.4 L1997.0,651.7 L1991.9,650.1 L1986.9,648.6 L1981.8,647.0 L1976.6,645.5 L1971.4,644.0 L1966.2,642.6 L1961.0,641.1 L1955.7,639.8 L1950.4,638.4 L1945.0,637.1 L1939.6,635.8 L1934.2,634.5 L1928.8,633.3 L1923.3,632.1 L1917.8,631.0 L1912.3,629.8 L1906.7,628.8 L1901.1,627.7 L1895.5,626.7 L1889.9,625.7 L1884.2,624.8 L1878.5,623.8 L1872.8,623.0 L1867.1,622.1 L1861.4,621.3 L1855.6,620.5 L1849.8,619.8 L1844.0,619.1 L1838.2,618.4 L1832.4,617.8 L1826.5,617.2 L1820.7,616.7 L1814.8,616.1 L1808.9,615.7 L1803.0,615.2 L1797.1,614.8 L1791.2,614.4 L1785.3,614.1 L1779.4,613.8 L1773.5,613.5 L1767.5,613.3 L1761.6,613.1 L1755.6,613.0 L1749.7,612.8 L1743.7,612.8 L1737.8,612.7 L1731.8,612.7 L1725.9,612.7 L1720.0,612.8 L1714.0,612.9 L1708.1,613.0 L1702.1,613.2 L1696.2,613.4 L1690.3,613.7 L1684.4,614.0 L1678.5,614.3 L1672.6,614.7 L1666.7,615.1 L1660.9,615.5 L1655.0,616.0 L1649.2,616.5 L1643.3,617.0 L1637.5,617.6 L1631.7,618.2 L1625.9,618.9 L1620.2,619.5 L1614.4,620.3 L1608.7,621.0 L1603.0,621.8 L1597.3,622.6 L1591.7,623.5 L1586.0,624.4 L1580.4,625.3 L1574.9,626.3 L1569.3,627.3 L1563.8,628.4 L1558.3,629.4 L1552.8,630.5 L1547.3,631.7 L1541.9,632.9 L1536.5,634.1 L1531.2,635.3 L1525.9,636.6 L1520.6,637.9 L1515.3,639.2 L1510.1,640.6 L1504.9,642.0 L1499.8,643.4 L1494.7,644.9 L1489.6,646.4 L1484.6,648.0 L1479.6,649.5 L1474.7,651.1 L1469.8,652.7 L1464.9,654.4 L1460.1,656.1 L1455.3,657.8 L1450.6,659.6 L1445.9,661.3 L1441.3,663.1 L1436.7,665.0 L1432.2,666.8 L1427.7,668.7 L1423.2,670.7 L1418.8,672.6 L1414.5,674.6 L1410.2,676.6 L1406.0,678.6 L1401.8,680.7 L1397.7,682.8 L1393.6,684.9 L1389.6,687.0 L1385.6,689.2 L1381.7,691.3 L1377.8,693.6 L1374.0,695.8 L1370.3,698.0 L1366.6,700.3 L1363.0,702.6 L1359.4,704.9 L1355.9,707.3 L1352.5,709.7 L1349.1,712.1 L1345.8,714.5 L1342.5,716.9 L1339.3,719.4 Z" fill="#ffffff"/>
<path d="M1341.3,721.9 L1348.0,725.4 L1354.6,728.9 L1361.3,732.3 L1368.0,735.7 L1374.7,739.0 L1381.3,742.2 L1388.0,745.3 L1394.7,748.4 L1401.4,751.5 L1408.0,754.4 L1414.7,757.3 L1421.4,760.2 L1428.1,762.9 L1434.7,765.7 L1441.4,768.3 L1448.1,770.9 L1454.8,773.4 L1461.4,775.9 L1468.1,778.3 L1474.8,780.6 L1481.5,782.9 L1488.1,785.2 L1494.8,787.3 L1501.5,789.4 L1508.1,791.5 L1514.8,793.5 L1521.5,795.4 L1528.2,797.3 L1534.8,799.1 L1541.5,800.8 L1548.2,802.5 L1554.9,804.2 L1561.5,805.8 L1568.2,807.3 L1574.9,808.8 L1581.6,810.2 L1588.2,811.5 L1594.9,812.9 L1601.6,814.1 L1608.3,815.3 L1614.9,816.4 L1621.6,817.5 L1628.3,818.5 L1635.0,819.5 L1641.6,820.4 L1648.3,821.2 L1655.0,822.0 L1661.6,822.7 L1668.3,823.4 L1675.0,824.0 L1681.7,824.5 L1688.3,825.0 L1695.0,825.4 L1701.7,825.7 L1708.4,826.0 L1715.0,826.2 L1721.7,826.3 L1728.4,826.4 L1735.1,826.4 L1741.7,826.3 L1748.4,826.2 L1755.1,826.0 L1761.8,825.7 L1768.4,825.4 L1775.1,825.0 L1781.8,824.5 L1788.5,824.0 L1795.1,823.4 L1801.8,822.8 L1808.5,822.1 L1815.2,821.4 L1821.8,820.6 L1828.5,819.8 L1835.2,818.9 L1841.8,817.9 L1848.5,817.0 L1855.2,815.9 L1861.9,814.9 L1868.5,813.8 L1875.2,812.6 L1881.9,811.4 L1888.6,810.2 L1895.2,808.9 L1901.9,807.6 L1908.6,806.2 L1915.3,804.8 L1921.9,803.3 L1928.6,801.8 L1935.3,800.2 L1942.0,798.6 L1948.6,796.9 L1955.3,795.1 L1962.0,793.3 L1968.7,791.4 L1975.3,789.5 L1982.0,787.5 L1988.7,785.4 L1995.3,783.3 L2002.0,781.1 L2008.7,778.8 L2015.4,776.5 L2022.0,774.1 L2028.7,771.6 L2035.4,769.0 L2042.1,766.4 L2048.7,763.7 L2055.4,760.9 L2062.1,758.0 L2068.8,755.1 L2075.4,752.1 L2082.1,748.9 L2088.8,745.8 L2095.5,742.5 L2102.1,739.1 L2108.8,735.6 L2115.5,732.1 L2122.2,728.5 L2128.8,724.7 L2135.5,720.9" fill="none" stroke="#262524" stroke-width="1.2"/>
<clipPath id="pinkclip"><path d="M358.2,709.5 L444.5,694.0 L481.8,744.7 L590.0,725.0 L581.0,732.4 L615.0,738.9 L619.0,745.9 L600.5,759.3 L634.5,765.8 L638.5,772.8 L620.0,786.3 L654.0,792.8 L658.0,799.8 L639.5,813.2 L673.5,819.7 L677.5,826.7 L659.0,840.1 L693.0,846.6 L697.0,853.6 L678.5,867.0 L712.5,873.5 L716.5,880.5 L698.0,894.0 L732.0,900.5 L736.0,907.5 L717.5,920.9 L751.5,927.4 L755.5,934.4 L737.0,947.8 L771.0,954.3 L775.0,961.3 L756.5,974.8 L790.5,981.3 L794.5,988.3 L776.0,1001.7 L810.0,1008.2 L814.0,1015.2 L795.5,1028.6 L829.5,1035.1 L833.5,1042.1 L815.0,1055.6 L849.0,1062.1 L853.0,1069.1 L834.5,1082.5 L868.5,1089.0 L872.5,1096.0 L854.0,1109.4 L888.0,1115.9 L892.0,1122.9 L877.0,1133.0 L898.0,1129.0 L1064.0,1145.0 L1190.2,1067.3 L1155.7,1060.4 L1152.7,1053.4 L1170.7,1040.4 L1136.2,1033.5 L1133.2,1026.5 L1151.2,1013.5 L1116.7,1006.5 L1113.7,999.5 L1131.7,986.5 L1097.2,979.6 L1094.2,972.6 L1112.2,959.6 L1077.7,952.7 L1074.7,945.7 L1092.7,932.7 L1058.2,925.7 L1055.2,918.7 L1073.2,905.7 L1038.7,898.8 L1035.7,891.8 L1053.7,878.8 L1019.2,871.9 L1016.2,864.9 L1034.2,851.9 L999.7,844.9 L996.7,837.9 L1014.7,824.9 L980.2,818.0 L977.2,811.0 L995.2,798.0 L960.7,791.1 L957.7,784.1 L975.7,771.1 L941.2,764.2 L938.2,757.2 L956.2,744.2 L921.7,737.2 L918.7,730.2 L936.7,717.2 L902.2,710.3 L899.2,703.3 L917.2,690.3 L884.2,685.1 L879.1,676.4 L997.2,653.0 L960.0,602.3 L1492.0,508.7 L1492.0,508.7 L1500.4,507.3 L1508.8,505.9 L1517.3,504.6 L1525.8,503.3 L1534.3,502.1 L1542.8,501.0 L1551.4,499.9 L1560.0,498.8 L1568.6,497.8 L1577.2,496.8 L1585.9,495.9 L1594.6,495.1 L1603.3,494.2 L1612.0,493.5 L1620.7,492.8 L1629.5,492.1 L1638.2,491.5 L1647.0,491.0 L1655.8,490.5 L1664.6,490.0 L1673.4,489.6 L1682.2,489.3 L1691.0,489.0 L1699.8,488.7 L1708.6,488.5 L1717.4,488.4 L1726.2,488.3 L1735.1,488.2 L1743.9,488.2 L1752.7,488.3 L1761.5,488.4 L1770.3,488.6 L1779.1,488.8 L1787.9,489.1 L1796.7,489.4 L1805.5,489.7 L1814.2,490.2 L1823.0,490.6 L1831.7,491.2 L1840.5,491.7 L1849.2,492.4 L1857.8,493.0 L1866.5,493.8 L1875.2,494.5 L1883.8,495.4 L1892.4,496.2 L1901.0,497.2 L1909.5,498.1 L1918.1,499.2 L1926.6,500.2 L1935.0,501.4 L1943.5,502.5 L1951.9,503.8 L1960.3,505.0 L1968.6,506.4 L1976.9,507.7 L1985.2,509.2 L1993.5,510.6 L2001.7,512.2 L2009.8,513.7 L2017.9,515.3 L2026.0,517.0 L2034.1,518.7 L2042.1,520.5 L2050.0,522.3 L2057.9,524.1 L2065.8,526.0 L2073.6,528.0 L2081.3,530.0 L2089.1,532.0 L2096.7,534.1 L2104.3,536.2 L2111.9,538.4 L2119.4,540.6 L2126.8,542.8 L2134.2,545.1 L2141.5,547.5 L2148.8,549.9 L2156.0,552.3 L2163.1,554.8 L2170.2,557.3 L2177.2,559.8 L2184.2,562.4 L2191.1,565.1 L2197.9,567.8 L2204.7,570.5 L2211.4,573.2 L2218.0,576.0 L2224.6,578.9 L2231.0,581.7 L2237.5,584.7 L2243.8,587.6 L2250.1,590.6 L2256.2,593.6 L2262.4,596.7 L2268.4,599.8 L2274.4,602.9 L2280.3,606.1 L2286.1,609.3 L2291.8,612.5 L2297.4,615.8 L2303.0,619.1 L2308.5,622.5 L2313.9,625.8 L2319.2,629.2 L2324.5,632.7 L2329.6,636.1 L2334.7,639.6 L2339.7,643.2 L2344.6,646.7 L2349.4,650.3 L2354.1,653.9 L2358.7,657.6 L2363.2,661.2 L2367.7,664.9 L2372.0,668.7 L2376.3,672.4 L2380.5,676.2 L2384.6,680.0 L2388.6,683.8 L2392.5,687.7 L2396.3,691.5 L2400.0,695.4 L2403.6,699.3 L2407.1,703.3 L2410.5,707.2 L2413.8,711.2 L2417.1,715.2 L2420.2,719.2 L2423.2,723.3 L2426.1,727.3 L2429.0,731.4 L2431.7,735.5 L2434.3,739.6 L2436.9,743.7 L2439.3,747.9 L2441.6,752.0 L2443.9,756.2 L2446.0,760.4 L2448.0,764.6 L2449.9,768.8 L2451.8,773.0 L2453.5,777.2 L2455.1,781.5 L2456.6,785.7 L2458.0,790.0 L2459.3,794.2 L2460.5,798.5 L2461.6,802.8 L2462.6,807.1 L2463.5,811.4 L2464.3,815.7 L2465.0,820.0 L2465.5,824.3 L2466.0,828.6 L2466.4,833.0 L2466.6,837.3 L2466.8,841.6 L2466.8,845.9 L2466.8,845.9 L2466.8,850.1 L2466.6,854.3 L2466.4,858.5 L2466.1,862.7 L2465.6,866.9 L2465.1,871.1 L2464.4,875.3 L2463.7,879.4 L2462.9,883.6 L2461.9,887.8 L2460.9,892.0 L2459.8,896.1 L2458.6,900.3 L2457.2,904.4 L2455.8,908.6 L2454.3,912.7 L2452.7,916.9 L2451.0,921.0 L2449.2,925.1 L2447.3,929.2 L2445.3,933.3 L2443.2,937.4 L2441.0,941.4 L2438.7,945.5 L2436.4,949.6 L2433.9,953.6 L2431.3,957.6 L2428.7,961.6 L2425.9,965.6 L2423.1,969.6 L2420.1,973.5 L2417.1,977.5 L2414.0,981.4 L2410.8,985.3 L2407.5,989.2 L2404.1,993.1 L2400.6,997.0 L2397.0,1000.8 L2393.4,1004.6 L2389.6,1008.4 L2385.8,1012.2 L2381.9,1016.0 L2377.9,1019.7 L2373.8,1023.4 L2369.6,1027.1 L2365.3,1030.8 L2361.0,1034.4 L2356.5,1038.0 L2352.0,1041.6 L2347.4,1045.2 L2342.7,1048.8 L2337.9,1052.3 L2333.1,1055.8 L2328.2,1059.2 L2323.1,1062.7 L2318.1,1066.1 L2312.9,1069.5 L2307.6,1072.8 L2302.3,1076.2 L2296.9,1079.5 L2291.4,1082.7 L2285.9,1086.0 L2280.3,1089.2 L2274.6,1092.3 L2268.8,1095.5 L2262.9,1098.6 L2257.0,1101.7 L2251.0,1104.7 L2245.0,1107.7 L2238.9,1110.7 L2232.7,1113.7 L2226.4,1116.6 L2220.1,1119.4 L2213.7,1122.3 L2207.2,1125.1 L2200.7,1127.8 L2194.1,1130.6 L2187.5,1133.3 L2180.8,1135.9 L2174.0,1138.5 L2167.2,1141.1 L2160.3,1143.7 L2153.4,1146.2 L2146.4,1148.6 L2139.3,1151.1 L2132.2,1153.5 L2125.0,1155.8 L2117.8,1158.1 L2110.6,1160.4 L2103.2,1162.6 L2095.9,1164.8 L2088.5,1166.9 L2081.0,1169.0 L2073.5,1171.1 L2065.9,1173.1 L2058.3,1175.1 L2050.7,1177.0 L2043.0,1178.9 L2035.2,1180.8 L2027.4,1182.6 L2019.6,1184.3 L2011.8,1186.1 L2003.9,1187.7 L1995.9,1189.4 L1988.0,1190.9 L1980.0,1192.5 L1971.9,1194.0 L1963.9,1195.4 L1955.8,1196.8 L850.0,1385.0 Z M2215.3,851.9 L2215.2,856.8 L2214.8,861.7 L2214.2,866.6 L2213.4,871.5 L2212.4,876.4 L2211.2,881.3 L2209.8,886.2 L2208.2,891.0 L2206.4,895.9 L2204.4,900.7 L2202.2,905.5 L2199.7,910.2 L2197.1,914.9 L2194.2,919.6 L2191.2,924.3 L2188.0,928.9 L2184.5,933.5 L2180.9,938.1 L2177.1,942.6 L2173.1,947.1 L2168.9,951.5 L2164.5,955.9 L2159.9,960.3 L2155.1,964.6 L2150.2,968.8 L2145.0,973.0 L2139.7,977.1 L2134.2,981.2 L2128.6,985.2 L2122.7,989.1 L2116.7,993.0 L2110.6,996.9 L2104.2,1000.6 L2097.8,1004.3 L2091.1,1007.9 L2084.3,1011.5 L2077.4,1014.9 L2070.3,1018.4 L2063.0,1021.7 L2055.6,1024.9 L2048.1,1028.1 L2040.4,1031.2 L2032.6,1034.2 L2024.7,1037.1 L2016.6,1040.0 L2008.5,1042.7 L2000.2,1045.4 L1991.8,1048.0 L1983.3,1050.5 L1974.6,1052.9 L1965.9,1055.2 L1957.1,1057.4 L1948.2,1059.6 L1939.2,1061.6 L1930.1,1063.5 L1920.9,1065.4 L1911.6,1067.1 L1902.3,1068.8 L1892.9,1070.3 L1883.4,1071.8 L1873.9,1073.2 L1864.3,1074.4 L1854.6,1075.6 L1844.9,1076.6 L1835.1,1077.6 L1825.4,1078.4 L1815.5,1079.2 L1805.7,1079.8 L1795.8,1080.4 L1785.9,1080.8 L1775.9,1081.2 L1766.0,1081.4 L1756.0,1081.5 L1746.1,1081.6 L1736.1,1081.5 L1726.1,1081.3 L1716.2,1081.0 L1706.2,1080.7 L1696.3,1080.2 L1686.4,1079.6 L1676.5,1078.9 L1666.6,1078.1 L1656.8,1077.2 L1647.0,1076.2 L1637.3,1075.1 L1627.5,1073.9 L1617.9,1072.6 L1608.3,1071.2 L1598.8,1069.7 L1589.3,1068.1 L1579.9,1066.4 L1570.5,1064.6 L1561.3,1062.7 L1552.1,1060.7 L1543.0,1058.7 L1534.0,1056.5 L1525.0,1054.2 L1516.2,1051.9 L1507.5,1049.4 L1498.8,1046.9 L1490.3,1044.3 L1481.9,1041.6 L1473.6,1038.8 L1465.5,1035.9 L1457.4,1032.9 L1449.5,1029.9 L1441.7,1026.8 L1434.0,1023.6 L1426.5,1020.3 L1419.1,1016.9 L1411.8,1013.5 L1404.7,1010.0 L1397.8,1006.4 L1391.0,1002.7 L1384.3,999.0 L1377.8,995.2 L1371.5,991.4 L1365.3,987.5 L1359.3,983.5 L1353.5,979.5 L1347.8,975.4 L1342.3,971.2 L1337.0,967.0 L1331.8,962.7 L1326.9,958.4 L1322.1,954.1 L1317.5,949.7 L1313.1,945.2 L1308.9,940.7 L1304.9,936.2 L1301.1,931.6 L1297.4,927.0 L1294.0,922.3 L1290.7,917.6 L1287.7,912.9 L1284.9,908.2 L1282.2,903.4 L1279.8,898.6 L1277.5,893.8 L1275.5,889.0 L1273.7,884.1 L1272.1,879.2 L1270.7,874.4 L1269.4,869.5 L1268.5,864.5 L1267.7,859.6 L1267.1,854.7 L1266.7,849.8 L1266.6,844.9 L1266.6,839.9 L1266.9,835.0 L1267.3,830.1 L1268.0,825.2 L1268.9,820.3 L1270.0,815.4 L1271.3,810.5 L1272.8,805.7 L1274.5,800.8 L1276.4,796.0 L1278.6,791.2 L1280.9,786.4 L1283.4,781.7 L1286.2,777.0 L1289.1,772.3 L1292.2,767.6 L1295.6,763.0 L1299.1,758.4 L1302.8,753.9 L1306.8,749.4 L1310.9,745.0 L1315.2,740.5 L1319.7,736.2 L1324.3,731.9 L1329.2,727.6 L1334.2,723.4 L1339.5,719.2 L1344.9,715.1 L1350.4,711.1 L1356.2,707.1 L1362.1,703.2 L1368.2,699.3 L1374.4,695.5 L1380.8,691.8 L1387.4,688.2 L1394.1,684.6 L1401.0,681.1 L1408.0,677.6 L1415.2,674.3 L1422.5,671.0 L1430.0,667.8 L1437.6,664.6 L1445.3,661.6 L1453.2,658.6 L1461.2,655.7 L1469.3,652.9 L1477.5,650.2 L1485.9,647.6 L1494.3,645.0 L1502.9,642.6 L1511.6,640.2 L1520.3,637.9 L1529.2,635.8 L1538.2,633.7 L1547.2,631.7 L1556.4,629.8 L1565.6,628.0 L1574.9,626.3 L1584.3,624.7 L1593.7,623.2 L1603.2,621.8 L1612.8,620.5 L1622.4,619.3 L1632.1,618.2 L1641.8,617.2 L1651.6,616.2 L1661.4,615.4 L1671.3,614.7 L1681.1,614.1 L1691.0,613.7 L1701.0,613.3 L1710.9,613.0 L1720.9,612.8 L1730.8,612.7 L1740.8,612.7 L1750.7,612.9 L1760.7,613.1 L1770.7,613.4 L1780.6,613.9 L1790.5,614.4 L1800.4,615.0 L1810.3,615.8 L1820.2,616.6 L1830.0,617.6 L1839.7,618.6 L1849.5,619.8 L1859.1,621.0 L1868.8,622.4 L1878.3,623.8 L1887.9,625.4 L1897.3,627.0 L1906.7,628.8 L1916.0,630.6 L1925.2,632.5 L1934.4,634.6 L1943.4,636.7 L1952.4,638.9 L1961.3,641.2 L1970.0,643.6 L1978.7,646.1 L1987.3,648.7 L1995.7,651.3 L2004.1,654.1 L2012.3,656.9 L2020.5,659.9 L2028.4,662.9 L2036.3,665.9 L2044.0,669.1 L2051.6,672.4 L2059.1,675.7 L2066.4,679.1 L2073.6,682.6 L2080.6,686.1 L2087.5,689.7 L2094.3,693.4 L2100.8,697.1 L2107.2,701.0 L2113.5,704.9 L2119.6,708.8 L2125.5,712.8 L2131.3,716.9 L2136.8,721.0 L2142.2,725.2 L2147.5,729.4 L2152.5,733.7 L2157.4,738.0 L2162.1,742.4 L2166.6,746.8 L2170.9,751.3 L2175.0,755.8 L2178.9,760.4 L2182.6,765.0 L2186.2,769.6 L2189.5,774.3 L2192.7,779.0 L2195.6,783.7 L2198.3,788.5 L2200.9,793.3 L2203.2,798.1 L2205.4,802.9 L2207.3,807.7 L2209.0,812.6 L2210.5,817.5 L2211.8,822.4 L2212.9,827.3 L2213.8,832.2 L2214.5,837.1 L2215.0,842.0 L2215.3,847.0 L2215.3,851.9 Z" clip-rule="evenodd"/></clipPath>
<path d="M358.2,709.5 L444.5,694.0 L481.8,744.7 L590.0,725.0 L581.0,732.4 L615.0,738.9 L619.0,745.9 L600.5,759.3 L634.5,765.8 L638.5,772.8 L620.0,786.3 L654.0,792.8 L658.0,799.8 L639.5,813.2 L673.5,819.7 L677.5,826.7 L659.0,840.1 L693.0,846.6 L697.0,853.6 L678.5,867.0 L712.5,873.5 L716.5,880.5 L698.0,894.0 L732.0,900.5 L736.0,907.5 L717.5,920.9 L751.5,927.4 L755.5,934.4 L737.0,947.8 L771.0,954.3 L775.0,961.3 L756.5,974.8 L790.5,981.3 L794.5,988.3 L776.0,1001.7 L810.0,1008.2 L814.0,1015.2 L795.5,1028.6 L829.5,1035.1 L833.5,1042.1 L815.0,1055.6 L849.0,1062.1 L853.0,1069.1 L834.5,1082.5 L868.5,1089.0 L872.5,1096.0 L854.0,1109.4 L888.0,1115.9 L892.0,1122.9 L877.0,1133.0 L898.0,1129.0 L1064.0,1145.0 L1190.2,1067.3 L1155.7,1060.4 L1152.7,1053.4 L1170.7,1040.4 L1136.2,1033.5 L1133.2,1026.5 L1151.2,1013.5 L1116.7,1006.5 L1113.7,999.5 L1131.7,986.5 L1097.2,979.6 L1094.2,972.6 L1112.2,959.6 L1077.7,952.7 L1074.7,945.7 L1092.7,932.7 L1058.2,925.7 L1055.2,918.7 L1073.2,905.7 L1038.7,898.8 L1035.7,891.8 L1053.7,878.8 L1019.2,871.9 L1016.2,864.9 L1034.2,851.9 L999.7,844.9 L996.7,837.9 L1014.7,824.9 L980.2,818.0 L977.2,811.0 L995.2,798.0 L960.7,791.1 L957.7,784.1 L975.7,771.1 L941.2,764.2 L938.2,757.2 L956.2,744.2 L921.7,737.2 L918.7,730.2 L936.7,717.2 L902.2,710.3 L899.2,703.3 L917.2,690.3 L884.2,685.1 L879.1,676.4 L997.2,653.0 L960.0,602.3 L1492.0,508.7 L1492.0,508.7 L1500.4,507.3 L1508.8,505.9 L1517.3,504.6 L1525.8,503.3 L1534.3,502.1 L1542.8,501.0 L1551.4,499.9 L1560.0,498.8 L1568.6,497.8 L1577.2,496.8 L1585.9,495.9 L1594.6,495.1 L1603.3,494.2 L1612.0,493.5 L1620.7,492.8 L1629.5,492.1 L1638.2,491.5 L1647.0,491.0 L1655.8,490.5 L1664.6,490.0 L1673.4,489.6 L1682.2,489.3 L1691.0,489.0 L1699.8,488.7 L1708.6,488.5 L1717.4,488.4 L1726.2,488.3 L1735.1,488.2 L1743.9,488.2 L1752.7,488.3 L1761.5,488.4 L1770.3,488.6 L1779.1,488.8 L1787.9,489.1 L1796.7,489.4 L1805.5,489.7 L1814.2,490.2 L1823.0,490.6 L1831.7,491.2 L1840.5,491.7 L1849.2,492.4 L1857.8,493.0 L1866.5,493.8 L1875.2,494.5 L1883.8,495.4 L1892.4,496.2 L1901.0,497.2 L1909.5,498.1 L1918.1,499.2 L1926.6,500.2 L1935.0,501.4 L1943.5,502.5 L1951.9,503.8 L1960.3,505.0 L1968.6,506.4 L1976.9,507.7 L1985.2,509.2 L1993.5,510.6 L2001.7,512.2 L2009.8,513.7 L2017.9,515.3 L2026.0,517.0 L2034.1,518.7 L2042.1,520.5 L2050.0,522.3 L2057.9,524.1 L2065.8,526.0 L2073.6,528.0 L2081.3,530.0 L2089.1,532.0 L2096.7,534.1 L2104.3,536.2 L2111.9,538.4 L2119.4,540.6 L2126.8,542.8 L2134.2,545.1 L2141.5,547.5 L2148.8,549.9 L2156.0,552.3 L2163.1,554.8 L2170.2,557.3 L2177.2,559.8 L2184.2,562.4 L2191.1,565.1 L2197.9,567.8 L2204.7,570.5 L2211.4,573.2 L2218.0,576.0 L2224.6,578.9 L2231.0,581.7 L2237.5,584.7 L2243.8,587.6 L2250.1,590.6 L2256.2,593.6 L2262.4,596.7 L2268.4,599.8 L2274.4,602.9 L2280.3,606.1 L2286.1,609.3 L2291.8,612.5 L2297.4,615.8 L2303.0,619.1 L2308.5,622.5 L2313.9,625.8 L2319.2,629.2 L2324.5,632.7 L2329.6,636.1 L2334.7,639.6 L2339.7,643.2 L2344.6,646.7 L2349.4,650.3 L2354.1,653.9 L2358.7,657.6 L2363.2,661.2 L2367.7,664.9 L2372.0,668.7 L2376.3,672.4 L2380.5,676.2 L2384.6,680.0 L2388.6,683.8 L2392.5,687.7 L2396.3,691.5 L2400.0,695.4 L2403.6,699.3 L2407.1,703.3 L2410.5,707.2 L2413.8,711.2 L2417.1,715.2 L2420.2,719.2 L2423.2,723.3 L2426.1,727.3 L2429.0,731.4 L2431.7,735.5 L2434.3,739.6 L2436.9,743.7 L2439.3,747.9 L2441.6,752.0 L2443.9,756.2 L2446.0,760.4 L2448.0,764.6 L2449.9,768.8 L2451.8,773.0 L2453.5,777.2 L2455.1,781.5 L2456.6,785.7 L2458.0,790.0 L2459.3,794.2 L2460.5,798.5 L2461.6,802.8 L2462.6,807.1 L2463.5,811.4 L2464.3,815.7 L2465.0,820.0 L2465.5,824.3 L2466.0,828.6 L2466.4,833.0 L2466.6,837.3 L2466.8,841.6 L2466.8,845.9 L2466.8,845.9 L2466.8,850.1 L2466.6,854.3 L2466.4,858.5 L2466.1,862.7 L2465.6,866.9 L2465.1,871.1 L2464.4,875.3 L2463.7,879.4 L2462.9,883.6 L2461.9,887.8 L2460.9,892.0 L2459.8,896.1 L2458.6,900.3 L2457.2,904.4 L2455.8,908.6 L2454.3,912.7 L2452.7,916.9 L2451.0,921.0 L2449.2,925.1 L2447.3,929.2 L2445.3,933.3 L2443.2,937.4 L2441.0,941.4 L2438.7,945.5 L2436.4,949.6 L2433.9,953.6 L2431.3,957.6 L2428.7,961.6 L2425.9,965.6 L2423.1,969.6 L2420.1,973.5 L2417.1,977.5 L2414.0,981.4 L2410.8,985.3 L2407.5,989.2 L2404.1,993.1 L2400.6,997.0 L2397.0,1000.8 L2393.4,1004.6 L2389.6,1008.4 L2385.8,1012.2 L2381.9,1016.0 L2377.9,1019.7 L2373.8,1023.4 L2369.6,1027.1 L2365.3,1030.8 L2361.0,1034.4 L2356.5,1038.0 L2352.0,1041.6 L2347.4,1045.2 L2342.7,1048.8 L2337.9,1052.3 L2333.1,1055.8 L2328.2,1059.2 L2323.1,1062.7 L2318.1,1066.1 L2312.9,1069.5 L2307.6,1072.8 L2302.3,1076.2 L2296.9,1079.5 L2291.4,1082.7 L2285.9,1086.0 L2280.3,1089.2 L2274.6,1092.3 L2268.8,1095.5 L2262.9,1098.6 L2257.0,1101.7 L2251.0,1104.7 L2245.0,1107.7 L2238.9,1110.7 L2232.7,1113.7 L2226.4,1116.6 L2220.1,1119.4 L2213.7,1122.3 L2207.2,1125.1 L2200.7,1127.8 L2194.1,1130.6 L2187.5,1133.3 L2180.8,1135.9 L2174.0,1138.5 L2167.2,1141.1 L2160.3,1143.7 L2153.4,1146.2 L2146.4,1148.6 L2139.3,1151.1 L2132.2,1153.5 L2125.0,1155.8 L2117.8,1158.1 L2110.6,1160.4 L2103.2,1162.6 L2095.9,1164.8 L2088.5,1166.9 L2081.0,1169.0 L2073.5,1171.1 L2065.9,1173.1 L2058.3,1175.1 L2050.7,1177.0 L2043.0,1178.9 L2035.2,1180.8 L2027.4,1182.6 L2019.6,1184.3 L2011.8,1186.1 L2003.9,1187.7 L1995.9,1189.4 L1988.0,1190.9 L1980.0,1192.5 L1971.9,1194.0 L1963.9,1195.4 L1955.8,1196.8 L850.0,1385.0 Z M2215.3,851.9 L2215.2,856.8 L2214.8,861.7 L2214.2,866.6 L2213.4,871.5 L2212.4,876.4 L2211.2,881.3 L2209.8,886.2 L2208.2,891.0 L2206.4,895.9 L2204.4,900.7 L2202.2,905.5 L2199.7,910.2 L2197.1,914.9 L2194.2,919.6 L2191.2,924.3 L2188.0,928.9 L2184.5,933.5 L2180.9,938.1 L2177.1,942.6 L2173.1,947.1 L2168.9,951.5 L2164.5,955.9 L2159.9,960.3 L2155.1,964.6 L2150.2,968.8 L2145.0,973.0 L2139.7,977.1 L2134.2,981.2 L2128.6,985.2 L2122.7,989.1 L2116.7,993.0 L2110.6,996.9 L2104.2,1000.6 L2097.8,1004.3 L2091.1,1007.9 L2084.3,1011.5 L2077.4,1014.9 L2070.3,1018.4 L2063.0,1021.7 L2055.6,1024.9 L2048.1,1028.1 L2040.4,1031.2 L2032.6,1034.2 L2024.7,1037.1 L2016.6,1040.0 L2008.5,1042.7 L2000.2,1045.4 L1991.8,1048.0 L1983.3,1050.5 L1974.6,1052.9 L1965.9,1055.2 L1957.1,1057.4 L1948.2,1059.6 L1939.2,1061.6 L1930.1,1063.5 L1920.9,1065.4 L1911.6,1067.1 L1902.3,1068.8 L1892.9,1070.3 L1883.4,1071.8 L1873.9,1073.2 L1864.3,1074.4 L1854.6,1075.6 L1844.9,1076.6 L1835.1,1077.6 L1825.4,1078.4 L1815.5,1079.2 L1805.7,1079.8 L1795.8,1080.4 L1785.9,1080.8 L1775.9,1081.2 L1766.0,1081.4 L1756.0,1081.5 L1746.1,1081.6 L1736.1,1081.5 L1726.1,1081.3 L1716.2,1081.0 L1706.2,1080.7 L1696.3,1080.2 L1686.4,1079.6 L1676.5,1078.9 L1666.6,1078.1 L1656.8,1077.2 L1647.0,1076.2 L1637.3,1075.1 L1627.5,1073.9 L1617.9,1072.6 L1608.3,1071.2 L1598.8,1069.7 L1589.3,1068.1 L1579.9,1066.4 L1570.5,1064.6 L1561.3,1062.7 L1552.1,1060.7 L1543.0,1058.7 L1534.0,1056.5 L1525.0,1054.2 L1516.2,1051.9 L1507.5,1049.4 L1498.8,1046.9 L1490.3,1044.3 L1481.9,1041.6 L1473.6,1038.8 L1465.5,1035.9 L1457.4,1032.9 L1449.5,1029.9 L1441.7,1026.8 L1434.0,1023.6 L1426.5,1020.3 L1419.1,1016.9 L1411.8,1013.5 L1404.7,1010.0 L1397.8,1006.4 L1391.0,1002.7 L1384.3,999.0 L1377.8,995.2 L1371.5,991.4 L1365.3,987.5 L1359.3,983.5 L1353.5,979.5 L1347.8,975.4 L1342.3,971.2 L1337.0,967.0 L1331.8,962.7 L1326.9,958.4 L1322.1,954.1 L1317.5,949.7 L1313.1,945.2 L1308.9,940.7 L1304.9,936.2 L1301.1,931.6 L1297.4,927.0 L1294.0,922.3 L1290.7,917.6 L1287.7,912.9 L1284.9,908.2 L1282.2,903.4 L1279.8,898.6 L1277.5,893.8 L1275.5,889.0 L1273.7,884.1 L1272.1,879.2 L1270.7,874.4 L1269.4,869.5 L1268.5,864.5 L1267.7,859.6 L1267.1,854.7 L1266.7,849.8 L1266.6,844.9 L1266.6,839.9 L1266.9,835.0 L1267.3,830.1 L1268.0,825.2 L1268.9,820.3 L1270.0,815.4 L1271.3,810.5 L1272.8,805.7 L1274.5,800.8 L1276.4,796.0 L1278.6,791.2 L1280.9,786.4 L1283.4,781.7 L1286.2,777.0 L1289.1,772.3 L1292.2,767.6 L1295.6,763.0 L1299.1,758.4 L1302.8,753.9 L1306.8,749.4 L1310.9,745.0 L1315.2,740.5 L1319.7,736.2 L1324.3,731.9 L1329.2,727.6 L1334.2,723.4 L1339.5,719.2 L1344.9,715.1 L1350.4,711.1 L1356.2,707.1 L1362.1,703.2 L1368.2,699.3 L1374.4,695.5 L1380.8,691.8 L1387.4,688.2 L1394.1,684.6 L1401.0,681.1 L1408.0,677.6 L1415.2,674.3 L1422.5,671.0 L1430.0,667.8 L1437.6,664.6 L1445.3,661.6 L1453.2,658.6 L1461.2,655.7 L1469.3,652.9 L1477.5,650.2 L1485.9,647.6 L1494.3,645.0 L1502.9,642.6 L1511.6,640.2 L1520.3,637.9 L1529.2,635.8 L1538.2,633.7 L1547.2,631.7 L1556.4,629.8 L1565.6,628.0 L1574.9,626.3 L1584.3,624.7 L1593.7,623.2 L1603.2,621.8 L1612.8,620.5 L1622.4,619.3 L1632.1,618.2 L1641.8,617.2 L1651.6,616.2 L1661.4,615.4 L1671.3,614.7 L1681.1,614.1 L1691.0,613.7 L1701.0,613.3 L1710.9,613.0 L1720.9,612.8 L1730.8,612.7 L1740.8,612.7 L1750.7,612.9 L1760.7,613.1 L1770.7,613.4 L1780.6,613.9 L1790.5,614.4 L1800.4,615.0 L1810.3,615.8 L1820.2,616.6 L1830.0,617.6 L1839.7,618.6 L1849.5,619.8 L1859.1,621.0 L1868.8,622.4 L1878.3,623.8 L1887.9,625.4 L1897.3,627.0 L1906.7,628.8 L1916.0,630.6 L1925.2,632.5 L1934.4,634.6 L1943.4,636.7 L1952.4,638.9 L1961.3,641.2 L1970.0,643.6 L1978.7,646.1 L1987.3,648.7 L1995.7,651.3 L2004.1,654.1 L2012.3,656.9 L2020.5,659.9 L2028.4,662.9 L2036.3,665.9 L2044.0,669.1 L2051.6,672.4 L2059.1,675.7 L2066.4,679.1 L2073.6,682.6 L2080.6,686.1 L2087.5,689.7 L2094.3,693.4 L2100.8,697.1 L2107.2,701.0 L2113.5,704.9 L2119.6,708.8 L2125.5,712.8 L2131.3,716.9 L2136.8,721.0 L2142.2,725.2 L2147.5,729.4 L2152.5,733.7 L2157.4,738.0 L2162.1,742.4 L2166.6,746.8 L2170.9,751.3 L2175.0,755.8 L2178.9,760.4 L2182.6,765.0 L2186.2,769.6 L2189.5,774.3 L2192.7,779.0 L2195.6,783.7 L2198.3,788.5 L2200.9,793.3 L2203.2,798.1 L2205.4,802.9 L2207.3,807.7 L2209.0,812.6 L2210.5,817.5 L2211.8,822.4 L2212.9,827.3 L2213.8,832.2 L2214.5,837.1 L2215.0,842.0 L2215.3,847.0 L2215.3,851.9 Z" fill="#fdd3fd" fill-rule="evenodd"/>
<path d="M130.0,480L585.0,1390M138.6,480L593.6,1390M147.2,480L602.2,1390M155.8,480L610.8,1390M164.4,480L619.4,1390M173.0,480L628.0,1390M181.6,480L636.6,1390M190.2,480L645.2,1390M198.8,480L653.8,1390M207.4,480L662.4,1390M216.0,480L671.0,1390M224.6,480L679.6,1390M233.2,480L688.2,1390M241.8,480L696.8,1390M250.4,480L705.4,1390M259.0,480L714.0,1390M267.6,480L722.6,1390M276.2,480L731.2,1390M284.8,480L739.8,1390M293.4,480L748.4,1390M302.0,480L757.0,1390M310.6,480L765.6,1390M319.2,480L774.2,1390M327.8,480L782.8,1390M336.4,480L791.4,1390M345.0,480L800.0,1390M353.6,480L808.6,1390M362.2,480L817.2,1390M370.8,480L825.8,1390M379.4,480L834.4,1390M388.0,480L843.0,1390M396.6,480L851.6,1390M405.2,480L860.2,1390M413.8,480L868.8,1390M422.4,480L877.4,1390M431.0,480L886.0,1390M439.6,480L894.6,1390M448.2,480L903.2,1390M456.8,480L911.8,1390M465.4,480L920.4,1390M474.0,480L929.0,1390M482.6,480L937.6,1390M491.2,480L946.2,1390M499.8,480L954.8,1390M508.4,480L963.4,1390M517.0,480L972.0,1390M525.6,480L980.6,1390M534.2,480L989.2,1390M542.8,480L997.8,1390M551.4,480L1006.4,1390M560.0,480L1015.0,1390M568.6,480L1023.6,1390M577.2,480L1032.2,1390M585.8,480L1040.8,1390M594.4,480L1049.4,1390M603.0,480L1058.0,1390M611.6,480L1066.6,1390M620.2,480L1075.2,1390M628.8,480L1083.8,1390M637.4,480L1092.4,1390M646.0,480L1101.0,1390M654.6,480L1109.6,1390M663.2,480L1118.2,1390M671.8,480L1126.8,1390M680.4,480L1135.4,1390M689.0,480L1144.0,1390M697.6,480L1152.6,1390M706.2,480L1161.2,1390M714.8,480L1169.8,1390M723.4,480L1178.4,1390M732.0,480L1187.0,1390M740.6,480L1195.6,1390M749.2,480L1204.2,1390M757.8,480L1212.8,1390M766.4,480L1221.4,1390M775.0,480L1230.0,1390M783.6,480L1238.6,1390M792.2,480L1247.2,1390M800.8,480L1255.8,1390M809.4,480L1264.4,1390M818.0,480L1273.0,1390M826.6,480L1281.6,1390M835.2,480L1290.2,1390M843.8,480L1298.8,1390M852.4,480L1307.4,1390M861.0,480L1316.0,1390M869.6,480L1324.6,1390M878.2,480L1333.2,1390M886.8,480L1341.8,1390M895.4,480L1350.4,1390M904.0,480L1359.0,1390M912.6,480L1367.6,1390M921.2,480L1376.2,1390M929.8,480L1384.8,1390M938.4,480L1393.4,1390M947.0,480L1402.0,1390M955.6,480L1410.6,1390M964.2,480L1419.2,1390M972.8,480L1427.8,1390M981.4,480L1436.4,1390M990.0,480L1445.0,1390M998.6,480L1453.6,1390M1007.2,480L1462.2,1390M1015.8,480L1470.8,1390M1024.4,480L1479.4,1390M1033.0,480L1488.0,1390M1041.6,480L1496.6,1390M1050.2,480L1505.2,1390M1058.8,480L1513.8,1390M1067.4,480L1522.4,1390M1076.0,480L1531.0,1390M1084.6,480L1539.6,1390M1093.2,480L1548.2,1390M1101.8,480L1556.8,1390M1110.4,480L1565.4,1390M1119.0,480L1574.0,1390M1127.6,480L1582.6,1390M1136.2,480L1591.2,1390M1144.8,480L1599.8,1390M1153.4,480L1608.4,1390M1162.0,480L1617.0,1390M1170.6,480L1625.6,1390M1179.2,480L1634.2,1390M1187.8,480L1642.8,1390M1196.4,480L1651.4,1390M1205.0,480L1660.0,1390M1213.6,480L1668.6,1390M1222.2,480L1677.2,1390M1230.8,480L1685.8,1390M1239.4,480L1694.4,1390M1248.0,480L1703.0,1390M1256.6,480L1711.6,1390M1265.2,480L1720.2,1390M1273.8,480L1728.8,1390M1282.4,480L1737.4,1390M1291.0,480L1746.0,1390M1299.6,480L1754.6,1390M1308.2,480L1763.2,1390M1316.8,480L1771.8,1390M1325.4,480L1780.4,1390M1334.0,480L1789.0,1390M1342.6,480L1797.6,1390M1351.2,480L1806.2,1390M1359.8,480L1814.8,1390M1368.4,480L1823.4,1390M1377.0,480L1832.0,1390M1385.6,480L1840.6,1390M1394.2,480L1849.2,1390M1402.8,480L1857.8,1390M1411.4,480L1866.4,1390M1420.0,480L1875.0,1390M1428.6,480L1883.6,1390M1437.2,480L1892.2,1390M1445.8,480L1900.8,1390M1454.4,480L1909.4,1390M1463.0,480L1918.0,1390M1471.6,480L1926.6,1390M1480.2,480L1935.2,1390M1488.8,480L1943.8,1390M1497.4,480L1952.4,1390M1506.0,480L1961.0,1390M1514.6,480L1969.6,1390M1523.2,480L1978.2,1390M1531.8,480L1986.8,1390M1540.4,480L1995.4,1390M1549.0,480L2004.0,1390M1557.6,480L2012.6,1390M1566.2,480L2021.2,1390M1574.8,480L2029.8,1390M1583.4,480L2038.4,1390M1592.0,480L2047.0,1390M1600.6,480L2055.6,1390M1609.2,480L2064.2,1390M1617.8,480L2072.8,1390M1626.4,480L2081.4,1390M1635.0,480L2090.0,1390M1643.6,480L2098.6,1390M1652.2,480L2107.2,1390M1660.8,480L2115.8,1390M1669.4,480L2124.4,1390M1678.0,480L2133.0,1390M1686.6,480L2141.6,1390M1695.2,480L2150.2,1390M1703.8,480L2158.8,1390M1712.4,480L2167.4,1390M1721.0,480L2176.0,1390M1729.6,480L2184.6,1390M1738.2,480L2193.2,1390M1746.8,480L2201.8,1390M1755.4,480L2210.4,1390M1764.0,480L2219.0,1390M1772.6,480L2227.6,1390M1781.2,480L2236.2,1390M1789.8,480L2244.8,1390M1798.4,480L2253.4,1390M1807.0,480L2262.0,1390M1815.6,480L2270.6,1390M1824.2,480L2279.2,1390M1832.8,480L2287.8,1390M1841.4,480L2296.4,1390M1850.0,480L2305.0,1390M1858.6,480L2313.6,1390M1867.2,480L2322.2,1390M1875.8,480L2330.8,1390M1884.4,480L2339.4,1390M1893.0,480L2348.0,1390M1901.6,480L2356.6,1390M1910.2,480L2365.2,1390M1918.8,480L2373.8,1390M1927.4,480L2382.4,1390M1936.0,480L2391.0,1390M1944.6,480L2399.6,1390M1953.2,480L2408.2,1390M1961.8,480L2416.8,1390M1970.4,480L2425.4,1390M1979.0,480L2434.0,1390M1987.6,480L2442.6,1390M1996.2,480L2451.2,1390M2004.8,480L2459.8,1390M2013.4,480L2468.4,1390M2022.0,480L2477.0,1390M2030.6,480L2485.6,1390M2039.2,480L2494.2,1390M2047.8,480L2502.8,1390M2056.4,480L2511.4,1390M2065.0,480L2520.0,1390M2073.6,480L2528.6,1390M2082.2,480L2537.2,1390M2090.8,480L2545.8,1390M2099.4,480L2554.4,1390M2108.0,480L2563.0,1390M2116.6,480L2571.6,1390M2125.2,480L2580.2,1390M2133.8,480L2588.8,1390M2142.4,480L2597.4,1390M2151.0,480L2606.0,1390M2159.6,480L2614.6,1390M2168.2,480L2623.2,1390M2176.8,480L2631.8,1390M2185.4,480L2640.4,1390M2194.0,480L2649.0,1390M2202.6,480L2657.6,1390M2211.2,480L2666.2,1390M2219.8,480L2674.8,1390M2228.4,480L2683.4,1390M2237.0,480L2692.0,1390M2245.6,480L2700.6,1390M2254.2,480L2709.2,1390M2262.8,480L2717.8,1390M2271.4,480L2726.4,1390M2280.0,480L2735.0,1390M2288.6,480L2743.6,1390M2297.2,480L2752.2,1390M2305.8,480L2760.8,1390M2314.4,480L2769.4,1390M2323.0,480L2778.0,1390M2331.6,480L2786.6,1390M2340.2,480L2795.2,1390M2348.8,480L2803.8,1390M2357.4,480L2812.4,1390M2366.0,480L2821.0,1390M2374.6,480L2829.6,1390M2383.2,480L2838.2,1390M2391.8,480L2846.8,1390M2400.4,480L2855.4,1390M2409.0,480L2864.0,1390M2417.6,480L2872.6,1390M2426.2,480L2881.2,1390M2434.8,480L2889.8,1390M2443.4,480L2898.4,1390M2452.0,480L2907.0,1390M2460.6,480L2915.6,1390M2469.2,480L2924.2,1390M2477.8,480L2932.8,1390" stroke="#332b36" stroke-width="1.1" fill="none" clip-path="url(#pinkclip)"/>
<path d="M358.2,709.5 L444.5,694.0 L481.8,744.7 L590.0,725.0 L581.0,732.4 L615.0,738.9 L619.0,745.9 L600.5,759.3 L634.5,765.8 L638.5,772.8 L620.0,786.3 L654.0,792.8 L658.0,799.8 L639.5,813.2 L673.5,819.7 L677.5,826.7 L659.0,840.1 L693.0,846.6 L697.0,853.6 L678.5,867.0 L712.5,873.5 L716.5,880.5 L698.0,894.0 L732.0,900.5 L736.0,907.5 L717.5,920.9 L751.5,927.4 L755.5,934.4 L737.0,947.8 L771.0,954.3 L775.0,961.3 L756.5,974.8 L790.5,981.3 L794.5,988.3 L776.0,1001.7 L810.0,1008.2 L814.0,1015.2 L795.5,1028.6 L829.5,1035.1 L833.5,1042.1 L815.0,1055.6 L849.0,1062.1 L853.0,1069.1 L834.5,1082.5 L868.5,1089.0 L872.5,1096.0 L854.0,1109.4 L888.0,1115.9 L892.0,1122.9 L877.0,1133.0 L898.0,1129.0 L1064.0,1145.0 L1190.2,1067.3 L1155.7,1060.4 L1152.7,1053.4 L1170.7,1040.4 L1136.2,1033.5 L1133.2,1026.5 L1151.2,1013.5 L1116.7,1006.5 L1113.7,999.5 L1131.7,986.5 L1097.2,979.6 L1094.2,972.6 L1112.2,959.6 L1077.7,952.7 L1074.7,945.7 L1092.7,932.7 L1058.2,925.7 L1055.2,918.7 L1073.2,905.7 L1038.7,898.8 L1035.7,891.8 L1053.7,878.8 L1019.2,871.9 L1016.2,864.9 L1034.2,851.9 L999.7,844.9 L996.7,837.9 L1014.7,824.9 L980.2,818.0 L977.2,811.0 L995.2,798.0 L960.7,791.1 L957.7,784.1 L975.7,771.1 L941.2,764.2 L938.2,757.2 L956.2,744.2 L921.7,737.2 L918.7,730.2 L936.7,717.2 L902.2,710.3 L899.2,703.3 L917.2,690.3 L884.2,685.1 L879.1,676.4 L997.2,653.0 L960.0,602.3 L1492.0,508.7 L1492.0,508.7 L1500.4,507.3 L1508.8,505.9 L1517.3,504.6 L1525.8,503.3 L1534.3,502.1 L1542.8,501.0 L1551.4,499.9 L1560.0,498.8 L1568.6,497.8 L1577.2,496.8 L1585.9,495.9 L1594.6,495.1 L1603.3,494.2 L1612.0,493.5 L1620.7,492.8 L1629.5,492.1 L1638.2,491.5 L1647.0,491.0 L1655.8,490.5 L1664.6,490.0 L1673.4,489.6 L1682.2,489.3 L1691.0,489.0 L1699.8,488.7 L1708.6,488.5 L1717.4,488.4 L1726.2,488.3 L1735.1,488.2 L1743.9,488.2 L1752.7,488.3 L1761.5,488.4 L1770.3,488.6 L1779.1,488.8 L1787.9,489.1 L1796.7,489.4 L1805.5,489.7 L1814.2,490.2 L1823.0,490.6 L1831.7,491.2 L1840.5,491.7 L1849.2,492.4 L1857.8,493.0 L1866.5,493.8 L1875.2,494.5 L1883.8,495.4 L1892.4,496.2 L1901.0,497.2 L1909.5,498.1 L1918.1,499.2 L1926.6,500.2 L1935.0,501.4 L1943.5,502.5 L1951.9,503.8 L1960.3,505.0 L1968.6,506.4 L1976.9,507.7 L1985.2,509.2 L1993.5,510.6 L2001.7,512.2 L2009.8,513.7 L2017.9,515.3 L2026.0,517.0 L2034.1,518.7 L2042.1,520.5 L2050.0,522.3 L2057.9,524.1 L2065.8,526.0 L2073.6,528.0 L2081.3,530.0 L2089.1,532.0 L2096.7,534.1 L2104.3,536.2 L2111.9,538.4 L2119.4,540.6 L2126.8,542.8 L2134.2,545.1 L2141.5,547.5 L2148.8,549.9 L2156.0,552.3 L2163.1,554.8 L2170.2,557.3 L2177.2,559.8 L2184.2,562.4 L2191.1,565.1 L2197.9,567.8 L2204.7,570.5 L2211.4,573.2 L2218.0,576.0 L2224.6,578.9 L2231.0,581.7 L2237.5,584.7 L2243.8,587.6 L2250.1,590.6 L2256.2,593.6 L2262.4,596.7 L2268.4,599.8 L2274.4,602.9 L2280.3,606.1 L2286.1,609.3 L2291.8,612.5 L2297.4,615.8 L2303.0,619.1 L2308.5,622.5 L2313.9,625.8 L2319.2,629.2 L2324.5,632.7 L2329.6,636.1 L2334.7,639.6 L2339.7,643.2 L2344.6,646.7 L2349.4,650.3 L2354.1,653.9 L2358.7,657.6 L2363.2,661.2 L2367.7,664.9 L2372.0,668.7 L2376.3,672.4 L2380.5,676.2 L2384.6,680.0 L2388.6,683.8 L2392.5,687.7 L2396.3,691.5 L2400.0,695.4 L2403.6,699.3 L2407.1,703.3 L2410.5,707.2 L2413.8,711.2 L2417.1,715.2 L2420.2,719.2 L2423.2,723.3 L2426.1,727.3 L2429.0,731.4 L2431.7,735.5 L2434.3,739.6 L2436.9,743.7 L2439.3,747.9 L2441.6,752.0 L2443.9,756.2 L2446.0,760.4 L2448.0,764.6 L2449.9,768.8 L2451.8,773.0 L2453.5,777.2 L2455.1,781.5 L2456.6,785.7 L2458.0,790.0 L2459.3,794.2 L2460.5,798.5 L2461.6,802.8 L2462.6,807.1 L2463.5,811.4 L2464.3,815.7 L2465.0,820.0 L2465.5,824.3 L2466.0,828.6 L2466.4,833.0 L2466.6,837.3 L2466.8,841.6 L2466.8,845.9 L2466.8,845.9 L2466.8,850.1 L2466.6,854.3 L2466.4,858.5 L2466.1,862.7 L2465.6,866.9 L2465.1,871.1 L2464.4,875.3 L2463.7,879.4 L2462.9,883.6 L2461.9,887.8 L2460.9,892.0 L2459.8,896.1 L2458.6,900.3 L2457.2,904.4 L2455.8,908.6 L2454.3,912.7 L2452.7,916.9 L2451.0,921.0 L2449.2,925.1 L2447.3,929.2 L2445.3,933.3 L2443.2,937.4 L2441.0,941.4 L2438.7,945.5 L2436.4,949.6 L2433.9,953.6 L2431.3,957.6 L2428.7,961.6 L2425.9,965.6 L2423.1,969.6 L2420.1,973.5 L2417.1,977.5 L2414.0,981.4 L2410.8,985.3 L2407.5,989.2 L2404.1,993.1 L2400.6,997.0 L2397.0,1000.8 L2393.4,1004.6 L2389.6,1008.4 L2385.8,1012.2 L2381.9,1016.0 L2377.9,1019.7 L2373.8,1023.4 L2369.6,1027.1 L2365.3,1030.8 L2361.0,1034.4 L2356.5,1038.0 L2352.0,1041.6 L2347.4,1045.2 L2342.7,1048.8 L2337.9,1052.3 L2333.1,1055.8 L2328.2,1059.2 L2323.1,1062.7 L2318.1,1066.1 L2312.9,1069.5 L2307.6,1072.8 L2302.3,1076.2 L2296.9,1079.5 L2291.4,1082.7 L2285.9,1086.0 L2280.3,1089.2 L2274.6,1092.3 L2268.8,1095.5 L2262.9,1098.6 L2257.0,1101.7 L2251.0,1104.7 L2245.0,1107.7 L2238.9,1110.7 L2232.7,1113.7 L2226.4,1116.6 L2220.1,1119.4 L2213.7,1122.3 L2207.2,1125.1 L2200.7,1127.8 L2194.1,1130.6 L2187.5,1133.3 L2180.8,1135.9 L2174.0,1138.5 L2167.2,1141.1 L2160.3,1143.7 L2153.4,1146.2 L2146.4,1148.6 L2139.3,1151.1 L2132.2,1153.5 L2125.0,1155.8 L2117.8,1158.1 L2110.6,1160.4 L2103.2,1162.6 L2095.9,1164.8 L2088.5,1166.9 L2081.0,1169.0 L2073.5,1171.1 L2065.9,1173.1 L2058.3,1175.1 L2050.7,1177.0 L2043.0,1178.9 L2035.2,1180.8 L2027.4,1182.6 L2019.6,1184.3 L2011.8,1186.1 L2003.9,1187.7 L1995.9,1189.4 L1988.0,1190.9 L1980.0,1192.5 L1971.9,1194.0 L1963.9,1195.4 L1955.8,1196.8 L850.0,1385.0 Z M2215.3,851.9 L2215.2,856.8 L2214.8,861.7 L2214.2,866.6 L2213.4,871.5 L2212.4,876.4 L2211.2,881.3 L2209.8,886.2 L2208.2,891.0 L2206.4,895.9 L2204.4,900.7 L2202.2,905.5 L2199.7,910.2 L2197.1,914.9 L2194.2,919.6 L2191.2,924.3 L2188.0,928.9 L2184.5,933.5 L2180.9,938.1 L2177.1,942.6 L2173.1,947.1 L2168.9,951.5 L2164.5,955.9 L2159.9,960.3 L2155.1,964.6 L2150.2,968.8 L2145.0,973.0 L2139.7,977.1 L2134.2,981.2 L2128.6,985.2 L2122.7,989.1 L2116.7,993.0 L2110.6,996.9 L2104.2,1000.6 L2097.8,1004.3 L2091.1,1007.9 L2084.3,1011.5 L2077.4,1014.9 L2070.3,1018.4 L2063.0,1021.7 L2055.6,1024.9 L2048.1,1028.1 L2040.4,1031.2 L2032.6,1034.2 L2024.7,1037.1 L2016.6,1040.0 L2008.5,1042.7 L2000.2,1045.4 L1991.8,1048.0 L1983.3,1050.5 L1974.6,1052.9 L1965.9,1055.2 L1957.1,1057.4 L1948.2,1059.6 L1939.2,1061.6 L1930.1,1063.5 L1920.9,1065.4 L1911.6,1067.1 L1902.3,1068.8 L1892.9,1070.3 L1883.4,1071.8 L1873.9,1073.2 L1864.3,1074.4 L1854.6,1075.6 L1844.9,1076.6 L1835.1,1077.6 L1825.4,1078.4 L1815.5,1079.2 L1805.7,1079.8 L1795.8,1080.4 L1785.9,1080.8 L1775.9,1081.2 L1766.0,1081.4 L1756.0,1081.5 L1746.1,1081.6 L1736.1,1081.5 L1726.1,1081.3 L1716.2,1081.0 L1706.2,1080.7 L1696.3,1080.2 L1686.4,1079.6 L1676.5,1078.9 L1666.6,1078.1 L1656.8,1077.2 L1647.0,1076.2 L1637.3,1075.1 L1627.5,1073.9 L1617.9,1072.6 L1608.3,1071.2 L1598.8,1069.7 L1589.3,1068.1 L1579.9,1066.4 L1570.5,1064.6 L1561.3,1062.7 L1552.1,1060.7 L1543.0,1058.7 L1534.0,1056.5 L1525.0,1054.2 L1516.2,1051.9 L1507.5,1049.4 L1498.8,1046.9 L1490.3,1044.3 L1481.9,1041.6 L1473.6,1038.8 L1465.5,1035.9 L1457.4,1032.9 L1449.5,1029.9 L1441.7,1026.8 L1434.0,1023.6 L1426.5,1020.3 L1419.1,1016.9 L1411.8,1013.5 L1404.7,1010.0 L1397.8,1006.4 L1391.0,1002.7 L1384.3,999.0 L1377.8,995.2 L1371.5,991.4 L1365.3,987.5 L1359.3,983.5 L1353.5,979.5 L1347.8,975.4 L1342.3,971.2 L1337.0,967.0 L1331.8,962.7 L1326.9,958.4 L1322.1,954.1 L1317.5,949.7 L1313.1,945.2 L1308.9,940.7 L1304.9,936.2 L1301.1,931.6 L1297.4,927.0 L1294.0,922.3 L1290.7,917.6 L1287.7,912.9 L1284.9,908.2 L1282.2,903.4 L1279.8,898.6 L1277.5,893.8 L1275.5,889.0 L1273.7,884.1 L1272.1,879.2 L1270.7,874.4 L1269.4,869.5 L1268.5,864.5 L1267.7,859.6 L1267.1,854.7 L1266.7,849.8 L1266.6,844.9 L1266.6,839.9 L1266.9,835.0 L1267.3,830.1 L1268.0,825.2 L1268.9,820.3 L1270.0,815.4 L1271.3,810.5 L1272.8,805.7 L1274.5,800.8 L1276.4,796.0 L1278.6,791.2 L1280.9,786.4 L1283.4,781.7 L1286.2,777.0 L1289.1,772.3 L1292.2,767.6 L1295.6,763.0 L1299.1,758.4 L1302.8,753.9 L1306.8,749.4 L1310.9,745.0 L1315.2,740.5 L1319.7,736.2 L1324.3,731.9 L1329.2,727.6 L1334.2,723.4 L1339.5,719.2 L1344.9,715.1 L1350.4,711.1 L1356.2,707.1 L1362.1,703.2 L1368.2,699.3 L1374.4,695.5 L1380.8,691.8 L1387.4,688.2 L1394.1,684.6 L1401.0,681.1 L1408.0,677.6 L1415.2,674.3 L1422.5,671.0 L1430.0,667.8 L1437.6,664.6 L1445.3,661.6 L1453.2,658.6 L1461.2,655.7 L1469.3,652.9 L1477.5,650.2 L1485.9,647.6 L1494.3,645.0 L1502.9,642.6 L1511.6,640.2 L1520.3,637.9 L1529.2,635.8 L1538.2,633.7 L1547.2,631.7 L1556.4,629.8 L1565.6,628.0 L1574.9,626.3 L1584.3,624.7 L1593.7,623.2 L1603.2,621.8 L1612.8,620.5 L1622.4,619.3 L1632.1,618.2 L1641.8,617.2 L1651.6,616.2 L1661.4,615.4 L1671.3,614.7 L1681.1,614.1 L1691.0,613.7 L1701.0,613.3 L1710.9,613.0 L1720.9,612.8 L1730.8,612.7 L1740.8,612.7 L1750.7,612.9 L1760.7,613.1 L1770.7,613.4 L1780.6,613.9 L1790.5,614.4 L1800.4,615.0 L1810.3,615.8 L1820.2,616.6 L1830.0,617.6 L1839.7,618.6 L1849.5,619.8 L1859.1,621.0 L1868.8,622.4 L1878.3,623.8 L1887.9,625.4 L1897.3,627.0 L1906.7,628.8 L1916.0,630.6 L1925.2,632.5 L1934.4,634.6 L1943.4,636.7 L1952.4,638.9 L1961.3,641.2 L1970.0,643.6 L1978.7,646.1 L1987.3,648.7 L1995.7,651.3 L2004.1,654.1 L2012.3,656.9 L2020.5,659.9 L2028.4,662.9 L2036.3,665.9 L2044.0,669.1 L2051.6,672.4 L2059.1,675.7 L2066.4,679.1 L2073.6,682.6 L2080.6,686.1 L2087.5,689.7 L2094.3,693.4 L2100.8,697.1 L2107.2,701.0 L2113.5,704.9 L2119.6,708.8 L2125.5,712.8 L2131.3,716.9 L2136.8,721.0 L2142.2,725.2 L2147.5,729.4 L2152.5,733.7 L2157.4,738.0 L2162.1,742.4 L2166.6,746.8 L2170.9,751.3 L2175.0,755.8 L2178.9,760.4 L2182.6,765.0 L2186.2,769.6 L2189.5,774.3 L2192.7,779.0 L2195.6,783.7 L2198.3,788.5 L2200.9,793.3 L2203.2,798.1 L2205.4,802.9 L2207.3,807.7 L2209.0,812.6 L2210.5,817.5 L2211.8,822.4 L2212.9,827.3 L2213.8,832.2 L2214.5,837.1 L2215.0,842.0 L2215.3,847.0 L2215.3,851.9 Z" fill="none" stroke="#1a1a1a" stroke-width="1.6" stroke-linejoin="round"/>
<path d="M358.2,709.5 L358.2,454.5 L1492.0,253.8 L1500.4,252.5 L1508.9,251.1 L1517.4,249.8 L1525.9,248.6 L1534.5,247.4 L1543.0,246.3 L1551.6,245.2 L1560.3,244.2 L1568.9,243.2 L1577.6,242.2 L1586.3,241.4 L1595.0,240.5 L1603.7,239.7 L1612.4,239.0 L1621.2,238.3 L1630.0,237.7 L1638.7,237.1 L1647.5,236.6 L1656.3,236.1 L1665.1,235.7 L1674.0,235.3 L1682.8,235.0 L1691.6,234.7 L1700.5,234.5 L1709.3,234.3 L1718.1,234.2 L1727.0,234.1 L1735.8,234.1 L1744.6,234.1 L1753.5,234.2 L1762.3,234.4 L1771.1,234.5 L1780.0,234.8 L1788.8,235.1 L1797.6,235.4 L1806.3,235.8 L1815.1,236.3 L1823.9,236.8 L1832.6,237.3 L1841.4,237.9 L1850.1,238.6 L1858.8,239.3 L1867.5,240.0 L1876.1,240.8 L1884.7,241.7 L1893.4,242.6 L1901.9,243.5 L1910.5,244.5 L1919.0,245.6 L1927.5,246.7 L1936.0,247.8 L1944.5,249.0 L1952.9,250.3 L1961.3,251.6 L1969.6,252.9 L1977.9,254.3 L1986.2,255.8 L1994.5,257.3 L2002.7,258.8 L2010.8,260.4 L2019.0,262.1 L2027.0,263.8 L2035.1,265.5 L2043.1,267.3 L2051.0,269.1 L2058.9,271.0 L2066.8,272.9 L2074.6,274.9 L2082.4,276.9 L2090.1,279.0 L2097.7,281.1 L2105.3,283.2 L2112.9,285.4 L2120.4,287.6 L2127.8,289.9 L2135.2,292.3 L2142.5,294.6 L2149.8,297.0 L2157.0,299.5 L2164.1,302.0 L2171.2,304.5 L2178.2,307.1 L2185.2,309.7 L2192.1,312.4 L2198.9,315.1 L2205.6,317.9 L2212.3,320.6 L2219.0,323.5 L2225.5,326.3 L2232.0,329.2 L2238.4,332.2 L2244.7,335.2 L2251.0,338.2 L2257.2,341.2 L2263.3,344.3 L2269.3,347.4 L2275.3,350.6 L2281.2,353.8 L2287.0,357.0 L2292.7,360.3 L2298.3,363.6 L2303.9,366.9 L2309.4,370.3 L2314.8,373.7 L2320.1,377.1 L2325.3,380.6 L2330.4,384.1 L2335.5,387.6 L2340.5,391.1 L2345.4,394.7 L2350.2,398.3 L2354.9,402.0 L2359.5,405.6 L2364.0,409.3 L2368.5,413.0 L2372.8,416.8 L2377.1,420.6 L2381.3,424.4 L2385.3,428.2 L2389.3,432.0 L2393.2,435.9 L2397.0,439.8 L2400.7,443.7 L2404.3,447.7 L2407.8,451.6 L2411.2,455.6 L2414.6,459.6 L2417.8,463.6 L2420.9,467.7 L2423.9,471.7 L2426.8,475.8 L2429.7,479.9 L2432.4,484.0 L2435.0,488.1 L2437.6,492.3 L2440.0,496.5 L2442.3,500.6 L2444.5,504.8 L2446.7,509.0 L2448.7,513.2 L2450.6,517.5 L2452.4,521.7 L2454.1,526.0 L2455.7,530.2 L2457.2,534.5 L2458.7,538.8 L2460.0,543.1 L2461.2,547.4 L2462.3,551.7 L2463.2,556.0 L2464.1,560.3 L2464.9,564.7 L2465.6,569.0 L2466.2,573.3 L2466.6,577.7 L2467.0,582.0 L2467.3,586.4 L2467.4,590.7 L2467.5,595.1 L2466.8,845.9" fill="none" stroke="#262626" stroke-width="1.2"/>
<path d="M1492.0,253.8 L1492.0,508.7" stroke="#2a2a28" stroke-width="1.2"/>
<path d="M444.5,694.0 L444.6,689.3 L444.7,684.5 L445.0,679.7 L445.3,675.0 L445.8,670.2 L446.4,665.4 L447.0,660.6 L447.8,655.8 L448.7,651.0 L449.6,646.2 L450.7,641.3 L451.8,636.5 L453.1,631.7 L454.4,626.9 L455.9,622.1 L457.4,617.4 L459.1,612.6 L460.8,607.8 L462.6,603.1 L464.6,598.4 L466.6,593.7 L468.7,589.0 L470.9,584.3 L473.2,579.7 L475.6,575.1 L478.0,570.5 L480.6,566.0 L483.2,561.5 L486.0,557.0 L488.8,552.5 L491.7,548.1 L494.6,543.8 L497.7,539.4 L500.8,535.2 L504.1,530.9 L507.4,526.7 L510.7,522.6 L514.2,518.5 L517.7,514.4 L521.3,510.4 L524.9,506.5 L528.7,502.6 L532.5,498.8 L536.3,495.0 L540.3,491.3 L544.3,487.6 L548.3,484.0 L552.4,480.5 L556.6,477.1 L560.8,473.7 L565.1,470.4 L569.5,467.1 L573.8,463.9 L578.3,460.8 L582.8,457.8 L587.3,454.8 L591.9,451.9 L596.5,449.1 L601.2,446.4 L605.9,443.7 L610.6,441.1 L615.4,438.6 L620.2,436.2 L625.1,433.9 L629.9,431.6 L634.8,429.5 L639.8,427.4 L644.7,425.4 L649.7,423.5 L654.7,421.7 L659.7,420.0 L664.7,418.3 L669.8,416.8 L674.8,415.3 L679.9,414.0 L685.0,412.7 L690.1,411.5 L695.2,410.4 L700.2,409.4 L705.3,408.5 L710.4,407.7 L715.5,407.0 L720.6,406.3 L725.7,405.8 L730.7,405.4 L735.8,405.0 L740.8,404.8 L745.9,404.6 L750.9,404.6 L755.9,404.6 L760.8,404.8 L765.8,405.0 L770.7,405.3 L775.6,405.7 L780.5,406.2 L785.3,406.9 L790.1,407.6 L794.9,408.4 L799.6,409.2 L804.3,410.2 L809.0,411.3 L813.6,412.5 L818.2,413.7 L822.7,415.1 L827.2,416.5 L831.6,418.1 L836.0,419.7 L840.3,421.4 L844.6,423.2 L848.8,425.1 L853.0,427.1 L857.1,429.1 L861.1,431.3 L865.1,433.5 L869.0,435.8 L872.8,438.2 L876.6,440.7 L880.3,443.3 L884.0,445.9 L887.6,448.6 L891.1,451.4 L894.5,454.3 L897.9,457.3 L901.1,460.3 L904.3,463.4 L907.5,466.6 L910.5,469.8 L913.5,473.1 L916.3,476.5 L919.1,479.9 L921.8,483.4 L924.5,487.0 L927.0,490.7 L929.4,494.4 L931.8,498.1 L934.1,501.9 L936.3,505.8 L938.3,509.8 L940.3,513.7 L942.2,517.8 L944.1,521.9 L945.8,526.0 L947.4,530.2 L948.9,534.4 L950.3,538.7 L951.7,543.0 L952.9,547.4 L954.1,551.8 L955.1,556.2 L956.0,560.7 L956.9,565.2 L957.6,569.8 L958.3,574.3 L958.8,578.9 L959.2,583.6 L959.6,588.2 L959.8,592.9 L960.0,597.6 L960.0,602.3" fill="none" stroke="#262524" stroke-width="1.2"/>
<path d="M481.8,744.7 L481.8,740.0 L482.0,735.2 L482.2,730.4 L482.6,725.7 L483.1,720.9 L483.6,716.1 L484.3,711.3 L485.0,706.5 L485.9,701.7 L486.9,696.9 L487.9,692.0 L489.1,687.2 L490.3,682.4 L491.7,677.6 L493.1,672.8 L494.7,668.1 L496.3,663.3 L498.1,658.5 L499.9,653.8 L501.8,649.1 L503.8,644.4 L505.9,639.7 L508.1,635.0 L510.4,630.4 L512.8,625.8 L515.3,621.2 L517.8,616.7 L520.5,612.2 L523.2,607.7 L526.0,603.2 L528.9,598.8 L531.9,594.5 L535.0,590.1 L538.1,585.9 L541.3,581.6 L544.6,577.4 L548.0,573.3 L551.4,569.2 L554.9,565.1 L558.5,561.1 L562.2,557.2 L565.9,553.3 L569.7,549.5 L573.6,545.7 L577.5,542.0 L581.5,538.3 L585.6,534.7 L589.7,531.2 L593.8,527.8 L598.1,524.4 L602.4,521.1 L606.7,517.8 L611.1,514.6 L615.5,511.5 L620.0,508.5 L624.6,505.5 L629.1,502.6 L633.8,499.8 L638.4,497.1 L643.1,494.4 L647.9,491.8 L652.7,489.3 L657.5,486.9 L662.3,484.6 L667.2,482.3 L672.1,480.2 L677.0,478.1 L682.0,476.1 L686.9,474.2 L691.9,472.4 L696.9,470.7 L702.0,469.0 L707.0,467.5 L712.1,466.0 L717.2,464.7 L722.2,463.4 L727.3,462.2 L732.4,461.1 L737.5,460.1 L742.6,459.2 L747.7,458.4 L752.8,457.7 L757.8,457.0 L762.9,456.5 L768.0,456.1 L773.0,455.7 L778.1,455.5 L783.1,455.3 L788.1,455.3 L793.1,455.3 L798.1,455.5 L803.0,455.7 L808.0,456.0 L812.9,456.4 L817.7,456.9 L822.6,457.6 L827.4,458.3 L832.1,459.1 L836.9,459.9 L841.6,460.9 L846.2,462.0 L850.8,463.2 L855.4,464.4 L859.9,465.8 L864.4,467.2 L868.8,468.8 L873.2,470.4 L877.5,472.1 L881.8,473.9 L886.0,475.8 L890.2,477.8 L894.3,479.8 L898.3,482.0 L902.3,484.2 L906.2,486.5 L910.1,488.9 L913.9,491.4 L917.6,494.0 L921.2,496.6 L924.8,499.3 L928.3,502.1 L931.7,505.0 L935.1,508.0 L938.4,511.0 L941.6,514.1 L944.7,517.3 L947.7,520.5 L950.7,523.8 L953.6,527.2 L956.4,530.6 L959.1,534.1 L961.7,537.7 L964.2,541.4 L966.7,545.1 L969.1,548.8 L971.3,552.6 L973.5,556.5 L975.6,560.5 L977.6,564.4 L979.5,568.5 L981.3,572.6 L983.0,576.7 L984.6,580.9 L986.2,585.1 L987.6,589.4 L988.9,593.7 L990.2,598.1 L991.3,602.5 L992.3,606.9 L993.3,611.4 L994.1,615.9 L994.9,620.5 L995.5,625.0 L996.0,629.6 L996.5,634.3 L996.8,638.9 L997.1,643.6 L997.2,648.3 L997.2,653.0" fill="none" stroke="#262524" stroke-width="1.2" clip-path="url(#cbclip)"/>
<path d="M590.0,725.0 L590.1,721.7 L590.2,718.3 L590.5,715.0 L590.8,711.6 L591.3,708.2 L591.9,704.8 L592.5,701.4 L593.3,698.0 L594.1,694.7 L595.1,691.3 L596.1,687.9 L597.3,684.5 L598.5,681.2 L599.9,677.8 L601.3,674.5 L602.8,671.2 L604.4,667.9 L606.2,664.7 L608.0,661.4 L609.8,658.2 L611.8,655.0 L613.9,651.9 L616.0,648.8 L618.2,645.7 L620.5,642.6 L622.9,639.6 L625.4,636.7 L627.9,633.8 L630.5,630.9 L633.2,628.1 L636.0,625.3 L638.8,622.6 L641.7,619.9 L644.7,617.3 L647.7,614.8 L650.8,612.3 L653.9,609.9 L657.1,607.5 L660.3,605.2 L663.6,603.0 L667.0,600.8 L670.4,598.7 L673.8,596.7 L677.3,594.8 L680.8,592.9 L684.4,591.1 L688.0,589.4 L691.6,587.7 L695.3,586.2 L699.0,584.7 L702.7,583.3 L706.4,581.9 L710.2,580.7 L713.9,579.5 L717.7,578.5 L721.5,577.5 L725.3,576.6 L729.1,575.8 L732.9,575.0 L736.8,574.4 L740.6,573.8 L744.4,573.4 L748.2,573.0 L752.0,572.7 L755.8,572.5 L759.5,572.4 L763.3,572.4 L767.0,572.5 L770.7,572.6 L774.4,572.9 L778.1,573.2 L781.7,573.6 L785.3,574.1 L788.8,574.7 L792.3,575.4 L795.8,576.2 L799.3,577.1 L802.6,578.0 L806.0,579.1 L809.3,580.2 L812.5,581.4 L815.7,582.7 L818.8,584.1 L821.9,585.5 L824.9,587.0 L827.9,588.7 L830.7,590.3 L833.6,592.1 L836.3,593.9 L839.0,595.9 L841.6,597.9 L844.1,599.9 L846.6,602.0 L848.9,604.3 L851.2,606.5 L853.4,608.9 L855.6,611.2 L857.6,613.7 L859.6,616.2 L861.4,618.8 L863.2,621.4 L864.9,624.1 L866.5,626.9 L868.0,629.7 L869.4,632.5 L870.8,635.4 L872.0,638.4 L873.1,641.3 L874.2,644.4 L875.1,647.4 L876.0,650.5 L876.7,653.7 L877.3,656.8 L877.9,660.0 L878.3,663.3 L878.7,666.5 L878.9,669.8 L879.1,673.1 L879.1,676.4" fill="none" stroke="#262524" stroke-width="1.2"/>
<rect x="0" y="0" width="2564" height="138" fill="#f2f2f2"/><rect x="0" y="138" width="2564" height="1" fill="#d6d6d6"/><rect x="0" y="139" width="2564" height="5" fill="#f0f0f0"/><rect x="0" y="144" width="2564" height="2" fill="#f8f8f8"/><rect x="17.5" y="17" width="187" height="103" rx="7" fill="#f2f2f2" stroke="#d2d2d2" stroke-width="1.5"/><text x="66" y="74.4" font-size="20" fill="#3a3a3a" font-weight="bold" text-anchor="start" textLength="71" lengthAdjust="spacingAndGlyphs" >DESIGN</text><path d="M147.7,65.3 L158.2,65.3 L152.95,71.6 Z" fill="#3a3a3a"/><text x="253" y="24.6" font-size="21" fill="#0696d7" stroke="#0696d7" stroke-width="0.3" font-weight="normal" text-anchor="start" textLength="55" lengthAdjust="spacingAndGlyphs" >SOLID</text><text x="387.6" y="24.6" font-size="21" fill="#3c3c3c" stroke="#3c3c3c" stroke-width="0.3" font-weight="normal" text-anchor="start" textLength="82.4" lengthAdjust="spacingAndGlyphs" >SURFACE</text><text x="547.9" y="24.6" font-size="21" fill="#3c3c3c" stroke="#3c3c3c" stroke-width="0.3" font-weight="normal" text-anchor="start" textLength="50.1" lengthAdjust="spacingAndGlyphs" >MESH</text><text x="673" y="24.6" font-size="21" fill="#3c3c3c" stroke="#3c3c3c" stroke-width="0.3" font-weight="normal" text-anchor="start" textLength="124" lengthAdjust="spacingAndGlyphs" >SHEET METAL</text><text x="876" y="24.6" font-size="21" fill="#3c3c3c" stroke="#3c3c3c" stroke-width="0.3" font-weight="normal" text-anchor="start" textLength="73.7" lengthAdjust="spacingAndGlyphs" >PLASTIC</text><text x="1027.7" y="24.6" font-size="21" fill="#3c3c3c" stroke="#3c3c3c" stroke-width="0.3" font-weight="normal" text-anchor="start" textLength="82.5" lengthAdjust="spacingAndGlyphs" >UTILITIES</text><rect x="234" y="33.5" width="97" height="4.5" fill="#0696d7"/><text x="396.7" y="128" font-size="21" fill="#3c3c3c" stroke="#3c3c3c" stroke-width="0.3" font-weight="normal" text-anchor="start" textLength="70.6" lengthAdjust="spacingAndGlyphs" >CREATE</text><path d="M473,117.5 L483,117.5 L478.0,124.5 Z" fill="#3c3c3c"/><text x="858.4" y="128" font-size="21" fill="#3c3c3c" stroke="#3c3c3c" stroke-width="0.3" font-weight="normal" text-anchor="start" textLength="72.9" lengthAdjust="spacingAndGlyphs" >MODIFY</text><path d="M937,117.5 L947,117.5 L942.0,124.5 Z" fill="#3c3c3c"/><text x="1165.5" y="128" font-size="21" fill="#3c3c3c" stroke="#3c3c3c" stroke-width="0.3" font-weight="normal" text-anchor="start" textLength="91" lengthAdjust="spacingAndGlyphs" >ASSEMBLE</text><path d="M1263.5,117.5 L1273.5,117.5 L1268.5,124.5 Z" fill="#3c3c3c"/><text x="1326.6" y="128" font-size="21" fill="#3c3c3c" stroke="#3c3c3c" stroke-width="0.3" font-weight="normal" text-anchor="start" textLength="106.4" lengthAdjust="spacingAndGlyphs" >CONFIGURE</text><path d="M1438.7,117.5 L1448.7,117.5 L1443.7,124.5 Z" fill="#3c3c3c"/><text x="1504.2" y="128" font-size="21" fill="#3c3c3c" stroke="#3c3c3c" stroke-width="0.3" font-weight="normal" text-anchor="start" textLength="113.8" lengthAdjust="spacingAndGlyphs" >CONSTRUCT</text><path d="M1624.4,117.5 L1634.4,117.5 L1629.4,124.5 Z" fill="#3c3c3c"/><text x="1683" y="128" font-size="21" fill="#3c3c3c" stroke="#3c3c3c" stroke-width="0.3" font-weight="normal" text-anchor="start" textLength="74.8" lengthAdjust="spacingAndGlyphs" >INSPECT</text><path d="M1763.4,117.5 L1773.4,117.5 L1768.4,124.5 Z" fill="#3c3c3c"/><text x="1834" y="128" font-size="21" fill="#3c3c3c" stroke="#3c3c3c" stroke-width="0.3" font-weight="normal" text-anchor="start" textLength="64.4" lengthAdjust="spacingAndGlyphs" >INSERT</text><path d="M1904.6,117.5 L1914.6,117.5 L1909.6,124.5 Z" fill="#3c3c3c"/><text x="1985" y="128" font-size="21" fill="#3c3c3c" stroke="#3c3c3c" stroke-width="0.3" font-weight="normal" text-anchor="start" textLength="65" lengthAdjust="spacingAndGlyphs" >SELECT</text><path d="M2057,117.5 L2067,117.5 L2062.0,124.5 Z" fill="#3c3c3c"/><rect x="672.75" y="44" width="1.5" height="87" fill="#cfcfcf"/><rect x="1135.75" y="44" width="1.5" height="87" fill="#cfcfcf"/><rect x="1301.75" y="44" width="1.5" height="87" fill="#cfcfcf"/><rect x="1478.75" y="44" width="1.5" height="87" fill="#cfcfcf"/><rect x="1658.05" y="44" width="1.5" height="87" fill="#cfcfcf"/><rect x="1793.45" y="44" width="1.5" height="87" fill="#cfcfcf"/><rect x="1959.95" y="44" width="1.5" height="87" fill="#cfcfcf"/><rect x="4" y="151.5" width="513.5" height="40.5" fill="#f1f1f1" stroke="#d4d4d4" stroke-width="1.5"/><rect x="4" y="191" width="514" height="1.5" fill="#c6c6c6"/><path d="M11.8,172.6 L20.3,167.4 L20.3,177.8 Z M19.8,172.6 L28.2,167.4 L28.2,177.8 Z" fill="#333"/><text x="46.5" y="179" font-size="20" fill="#5e5e5e" stroke="#5e5e5e" stroke-width="0.3" font-weight="normal" text-anchor="start" textLength="86" lengthAdjust="spacingAndGlyphs" >BROWSER</text><rect x="483.5" y="165.6" width="14.3" height="14.4" rx="7" fill="#333"/><rect x="486" y="171.8" width="9.3" height="2.2" fill="#f1f1f1"/><rect x="232.1" y="44.7" width="5" height="5" fill="#606060"/>
<rect x="278.6" y="44.7" width="5" height="5" fill="#606060"/>
<rect x="232.1" y="91.1" width="5" height="5" fill="#606060"/>
<rect x="244.2" y="56.75" width="5" height="5" fill="#606060"/>
<rect x="266.5" y="56.75" width="5" height="5" fill="#606060"/>
<rect x="244.2" y="79.1" width="5" height="5" fill="#606060"/>
<path d="M239.3,46.9 L276.3,46.9 M234.6,51.8 L234.6,88.9 M281.1,51.8 L281.1,75 M239.3,93.8 L262.5,93.8 M251.3,59.2 L264.3,59.2 M246.7,63.9 L246.7,76.8 M269.2,63.9 Q267,78 251.3,81.75" stroke="#606060" stroke-width="1.3" fill="none"/>
<path d="M271.4,75.9 H278.1 V84 H287 V90.7 H278.1 V99.6 H271.4 V90.7 H263 V84 H271.4 Z" fill="#22b04b"/>
<path d="M308.0,55.0 L318.3,45.0 L348.7,45.0 L338.4,55.0 Z" fill="#87c8f6"/>
<rect x="308" y="55" width="30.4" height="35.7" fill="#66ade3"/>
<path d="M338.4,55.0 L348.7,45.0 L348.7,79.5 L338.4,90.7 Z" fill="#4592cf"/>
<rect x="308" y="92.9" width="30.4" height="6.7" fill="#b3b3b3"/>
<path d="M338.4,92.9 L348.7,82.6 L348.7,88.9 L338.4,99.6 Z" fill="#9d9d9d"/>
<path d="M354.9,52 L354.9,89" stroke="#333" stroke-width="1.4"/><path d="M350.9,53.2 L354.9,46 L358.9,53.2 Z" fill="#333"/>
<path d="M430.4,57.2 Q410,42 386,54" stroke="#333" stroke-width="1.4" fill="none"/><path d="M380.8,58.5 L382.8,50.9 L388.6,56.5 Z" fill="#333"/>
<path d="M379.9,67.4 Q406,50 433.6,67 L423.3,76.6 Q406,64 389.7,77 Z" fill="#87c8f6"/>
<path d="M379.9,67.4 L389.7,77 L389.7,94.2 L379.9,84.3 Z" fill="#4592cf"/>
<path d="M389.7,77 Q406,64 423.3,76.6 L423.3,92.5 Q406,82 389.7,94.2 Z" fill="#66ade3"/>
<path d="M424.5,77 L434.2,68.3 L434.2,83.8 L424.5,93 Z" fill="#f2f2f2" stroke="#666" stroke-width="1.2"/>
<path d="M454.4,55.0 L464.2,45.1 L508.4,45.1 L498.6,55.0 Z" fill="#f4f4f4"/>
<rect x="454.4" y="55" width="44.2" height="44.2" fill="#d9d9d9"/>
<path d="M498.6,55.0 L508.4,45.1 L508.4,89.3 L498.6,99.2 Z" fill="#b8b8b8"/>
<path d="M454.4,55.0 L464.2,45.1 L508.4,45.1 L508.4,89.3 L498.6,99.2 L454.4,99.2 Z" fill="none" stroke="#666666" stroke-width="1.3"/>
<circle cx="476.7" cy="76.4" r="14.2" fill="#f2f2f2" stroke="#666" stroke-width="1.3"/>
<path d="M473.6,66.4 A11,11 0 1 0 487.6,77.3 A11,11 0 0 1 473.6,66.4 Z" fill="#66ade3" stroke="#4592cf" stroke-width="0.6"/>
<rect x="528.6" y="48.9" width="10.2" height="10.2" fill="#f8f8f8" stroke="#666" stroke-width="1.3"/>
<rect x="563.75" y="48.3" width="12" height="11.6" fill="#66ade3"/>
<rect x="528" y="84" width="12" height="11.6" fill="#66ade3"/>
<rect x="563.75" y="84" width="12" height="11.6" fill="#66ade3"/>
<path d="M541.4,54 L561.5,54 M533.4,62.1 L533.4,81.75 M541.4,90 L561.5,90" stroke="#555" stroke-width="1.4"/>
<path d="M602.3,66 Q602.8,48.8 619,48.7 L636,48.7 L653,66 L653,85 Q652.5,99.6 637,99.6 L616,99.6 Q602.3,99.6 602.3,86 Z" fill="#cfadf8" stroke="#8c5fcc" stroke-width="1.4"/>
<rect x="605.3" y="63.3" width="33.5" height="33.2" rx="6.5" fill="#a77de6"/>
<path d="M641,69 L652,64 L652.3,85 Q651.5,95 641,98 Z" fill="#9163d6"/>
<path d="M603,78.5 Q622,83 641,80.5 L652.5,72 M619.6,49.5 Q615.5,62 616.5,99" stroke="#7b52b3" stroke-width="1.1" fill="none" opacity="0.8"/>
<path d="M641.4,45.6 L643.7,53.9 L651.2,49.6 L646.9,57.1 L655.2,59.4 L646.9,61.7 L651.2,69.2 L643.7,64.9 L641.4,73.2 L639.1,64.9 L631.6,69.2 L635.9,61.7 L627.6,59.4 L635.9,57.1 L631.6,49.6 L639.1,53.9 Z" fill="#f5a100" stroke="#f2f2f2" stroke-width="0.9"/>
<rect x="696.5" y="55" width="9.4" height="44.2" fill="#d9d9d9"/>
<path d="M705.9,99.2 L696.5,99.2 L696.5,55 L706.3,45.1 L714.7,45.1" stroke="#666666" stroke-width="1.3" fill="none"/>
<path d="M708.1,55.0 L718.4,45.1 L734.0,45.1 L723.7,55.0 Z" fill="#87c8f6"/>
<rect x="708.1" y="55" width="15.6" height="44.2" fill="#66ade3"/>
<path d="M723.7,55.0 L734.0,45.1 L734.0,88.9 L723.7,99.2 Z" fill="#4592cf"/>
<rect x="729" y="68.5" width="6" height="5" fill="#f2f2f2"/><path d="M730.5,71.2 L740,71.2" stroke="#333" stroke-width="1.4"/><path d="M739,67 L746,71.2 L739,75.6 Z" fill="#333"/>
<path d="M768.8,57.6 L788,57.6 Q810,58 810,82 L810,99.2 L768.8,99.2 Z" fill="#d9d9d9"/>
<path d="M788,56.3 L799,45.3 Q818,50 822.8,68 L811.5,79 Q808,60 788,56.3 Z" fill="#66ade3"/>
<path d="M810.0,83.0 L822.8,71.0 L822.8,86.7 L810.0,99.2 Z" fill="#b8b8b8"/>
<path d="M796.5,45.1 L781.3,45.1 L768.8,57.6 L768.8,99.2 L809.9,99.2 L822.8,86.7 L822.8,71" stroke="#666666" stroke-width="1.3" fill="none"/>
<path d="M842.5,57.6 L855.0,45.1 L896.9,45.1 L884.0,57.6 Z" fill="#f4f4f4"/>
<rect x="842.5" y="57.6" width="41.5" height="41.6" fill="#d9d9d9"/>
<path d="M884.0,57.6 L896.9,45.1 L896.9,86.7 L884.0,99.2 Z" fill="#b8b8b8"/>
<rect x="847" y="63.4" width="31.3" height="30.8" fill="#f2f2f2"/>
<path d="M849.2,65.2 L862.7,65.2 L862.7,79.0 L849.2,92.1 Z" fill="#4592cf"/>
<path d="M849.2,92.1 L862.7,79.0 L876.4,79.0 L876.4,92.4 Z" fill="#87c8f6"/>
<path d="M842.5,57.6 L855.0,45.1 L896.9,45.1 L896.9,86.7 L884.0,99.2 L842.5,99.2 Z" fill="none" stroke="#666666" stroke-width="1.3"/>
<path d="M916.0,68.8 L922.7,62.1 L933.0,62.1 L933.0,51.8 L940.2,45.0 L971.0,45.0 L964.2,51.8 Z" fill="#87c8f6"/>
<path d="M916.0,68.8 L933.0,68.8 L933.0,51.8 L964.2,51.8 L964.2,81.8 L947.3,81.8 L947.3,99.2 L916.0,99.2 Z" fill="#66ade3"/>
<path d="M964.2,51.8 L971.0,45.0 L971.0,75.5 L964.2,81.8 Z" fill="#4592cf"/>
<path d="M947.3,81.8 L953.5,81.8 L954.0,92.5 L947.3,99.2 Z" fill="#4592cf"/>
<path d="M993.3,55.0 L1003.5,45.0 L1041.0,45.0 L1030.8,55.0 Z" fill="#87c8f6"/>
<rect x="993.3" y="55" width="37.5" height="16.9" fill="#66ade3"/>
<path d="M1030.8,55.0 L1041.0,45.0 L1041.0,60.8 L1030.8,71.9 Z" fill="#4592cf"/>
<path d="M990.1,76.4 L1031.2,76.4 L1044.6,63" stroke="#f8f8f8" stroke-width="3.5" fill="none"/><path d="M990.1,76.4 L1031.2,76.4 L1044.6,63" stroke="#1a8de0" stroke-width="1.5" fill="none"/>
<rect x="993.7" y="80.9" width="37.5" height="16.5" fill="#d9d9d9"/>
<path d="M1031.2,80.9 L1041.0,73.3 L1041.0,88.0 L1031.2,97.4 Z" fill="#b8b8b8"/>
<path d="M993.7,81 L993.7,97.4 L1031.2,97.4 L1041,88 L1041,73.3" stroke="#666666" stroke-width="1.3" fill="none"/>
<path d="M1091,50 L1091,94 M1069,71.9 L1113,71.9" stroke="#333" stroke-width="3.2"/>
<path d="M1083,58.1 L1091,45.1 L1099,58.1 Z M1083,85.7 L1091,98.7 L1099,85.7 Z M1064.25,71.9 L1077.2,63.9 L1077.2,80 Z M1117.75,71.9 L1104.8,63.9 L1104.8,80 Z" fill="#333"/>
<path d="M1156.7,58.8 L1163.8,51.6 L1184.0,51.6 L1177.5,58.8 Z" fill="#87c8f6"/>
<rect x="1156.7" y="58.8" width="20.8" height="20.1" fill="#66ade3"/>
<path d="M1177.5,58.8 L1184.0,51.6 L1184.0,72.4 L1177.5,78.9 Z" fill="#4592cf"/>
<rect x="1156.7" y="78.9" width="20.8" height="20.1" fill="#d9d9d9"/>
<path d="M1177.5,78.9 L1185.3,72.4 L1204.1,72.4 L1197.6,78.9 Z" fill="#f0f0f0"/>
<rect x="1177.5" y="78.9" width="20.1" height="20.1" fill="#e0e0e0"/>
<path d="M1197.6,78.9 L1204.1,72.4 L1204.1,92.0 L1197.6,99.0 Z" fill="#b8b8b8"/>
<path d="M1156.7,78.9 L1156.7,99 L1197.6,99 L1204.1,92 L1204.1,72.4 L1185.3,72.4 L1177.5,80 L1177.5,99" stroke="#666666" stroke-width="1.3" fill="none"/>
<path d="M1197.0,45.8 L1199.2,54.0 L1206.6,49.8 L1202.4,57.2 L1210.6,59.4 L1202.4,61.6 L1206.6,69.0 L1199.2,64.8 L1197.0,73.0 L1194.8,64.8 L1187.4,69.0 L1191.6,61.6 L1183.4,59.4 L1191.6,57.2 L1187.4,49.8 L1194.8,54.0 Z" fill="#f5a100" stroke="#f2f2f2" stroke-width="0.8"/>
<path d="M1234.4,61.5 L1245,51.5 Q1250,47.5 1254,49 L1255.5,51 L1255.5,68 L1247,70 L1246.5,84 L1237,94 L1234.4,93 Z" fill="#c4c4c4" stroke="#666" stroke-width="1.3"/>
<path d="M1245,52 Q1249,48.5 1254,49.5 Q1256,51 1255.5,54 L1255.5,68 Q1251,70.5 1245.5,69 Z" fill="#e2e2e2" stroke="#666" stroke-width="1.1"/>
<path d="M1268.5,52 L1281.7,62.5 L1281.7,94 L1279,95.4 L1268.5,85 Z" fill="#d9d9d9" stroke="#666" stroke-width="1.3"/>
<path d="M1260,66 Q1264,63 1268.5,64 L1268.5,84 Q1264,86 1260,84 Z" fill="#c4c4c4" stroke="#666" stroke-width="1.1"/>
<path d="M1250.2,70 L1250.2,79 M1265.8,58.5 L1265.8,67" stroke="#1a8de0" stroke-width="1.3"/>
<path d="M1328.3,56.7 L1340.5,44.8 L1375,44.8 L1376,92.5 L1328.3,92.5 Z" fill="#ececec" stroke="#e6e6e6" stroke-width="1.2"/>
<path d="M1359,83.8 L1383.3,83.8 M1359,94.3 L1383.3,94.3 M1366.5,79 L1366.5,89 M1376.5,89.5 L1376.5,99" stroke="#e3e3e3" stroke-width="2.6"/>
<path d="M1366.5,79 L1366.5,89" stroke="#d5e9f2" stroke-width="2.6"/>
<circle cx="1369.7" cy="58.1" r="13.6" fill="#b9dcec"/>
<path d="M1366.6,55.5 L1366.6,67.5 M1360.6,61.5 L1372.6,61.5 M1374.8,51.5 L1374.8,58.5 M1371.3,55 L1378.3,55" stroke="#f4f4f4" stroke-width="2"/><circle cx="1368.5" cy="51" r="1.2" fill="#f4f4f4"/>
<rect x="1403.5" y="45.3" width="51" height="47" fill="#ececec" stroke="#e3e3e3" stroke-width="1.3"/>
<path d="M1408,60.5 L1438,60.5 M1408,69 L1431,69 M1408,77.5 L1438,77.5 M1408,86 L1431,86 M1408.5,60 L1408.5,86 M1417,60 L1417,86 M1425.5,60 L1425.5,86" stroke="#e1e1e1" stroke-width="1.4"/>
<path d="M1432,83.8 L1456.7,83.8 M1432,94.3 L1456.7,94.3 M1439.5,79 L1439.5,89 M1449.5,89.5 L1449.5,99" stroke="#e3e3e3" stroke-width="2.6"/>
<path d="M1439.5,79 L1439.5,89" stroke="#d5e9f2" stroke-width="2.6"/>
<circle cx="1443.7" cy="58.1" r="13.6" fill="#b9dcec"/>
<path d="M1440.6,55.5 L1440.6,67.5 M1434.6,61.5 L1446.6,61.5 M1448.8,51.5 L1448.8,58.5 M1445.3,55 L1452.3,55" stroke="#f4f4f4" stroke-width="2"/><circle cx="1442.5" cy="51" r="1.2" fill="#f4f4f4"/>
<rect x="1547.5" y="59.9" width="11.2" height="37" fill="#d9d9d9"/>
<path d="M1558.7,96.9 L1545.6,96.9 L1545.6,59.9 L1560.7,45.3 L1572.4,45.3" stroke="#666666" stroke-width="1.3" fill="none"/>
<path d="M1560.7,59.9 L1575.8,45.3 L1575.8,82.3 L1560.7,96.9 Z" fill="#5bc77f" stroke="#49b46c" stroke-width="0.6"/>
<path d="M1581.1,59.9 L1596.2,45.3 L1596.2,82.3 L1581.1,96.9 Z" fill="#e89a65" stroke="#d9895a" stroke-width="0.6"/>
<path d="M1703.8,58.4 L1703.8,73.5 M1750.4,58.4 L1750.4,73.5 M1707,66.2 L1747,66.2" stroke="#666" stroke-width="1.4"/>
<path d="M1704.5,66.2 L1711.5,62 L1711.5,70.4 Z M1749.7,66.2 L1742.7,62 L1742.7,70.4 Z" fill="#666"/>
<rect x="1703.1" y="75.5" width="47.7" height="10.2" fill="#f5a800"/>
<path d="M1705.7,76 L1705.7,78.7 M1711,76 L1711,80.5 M1716,76 L1716,78.7 M1721.2,76 L1721.2,80.5 M1726.3,76 L1726.3,78.7 M1731.4,76 L1731.4,80.5 M1736.6,76 L1736.6,78.7 M1741.7,76 L1741.7,80.5 M1746.8,76 L1746.8,78.7" stroke="#777" stroke-width="1.1"/>
<path d="M1822.0,65.2 L1832.5,55.0 L1865.7,52.3 L1852.6,65.2 Z" fill="#f4f4f4"/>
<rect x="1821.9" y="65.2" width="30.7" height="30.2" fill="#d9d9d9"/>
<path d="M1852.6,65.2 L1865.7,54.3 L1865.7,83.0 L1852.6,95.4 Z" fill="#b8b8b8"/>
<path d="M1844,51.9 L1865.7,51.9 L1865.7,74 M1840,95.4 L1821.9,95.4 L1821.9,65.5 L1826,61.5" stroke="#666666" stroke-width="1.3" fill="none"/>
<path d="M1814.8,51.5 L1829,51.5 L1829,45 L1844.9,54.8 L1829,64.7 L1829,58.1 L1814.8,58.1 Z" fill="#1a8de0"/>
<path d="M1846,93 L1857,82 M1855,90 L1866,79" stroke="#f2f2f2" stroke-width="7" stroke-linecap="round"/>
<rect x="1842" y="82.5" width="16" height="8.5" rx="4.25" transform="rotate(-45 1850 86.75)" fill="none" stroke="#333" stroke-width="2.8"/>
<rect x="1853" y="77" width="16" height="8.5" rx="4.25" transform="rotate(-45 1861 81.25)" fill="none" stroke="#333" stroke-width="2.8"/>
<rect x="1891" y="47.2" width="48.2" height="48.2" fill="#87c8f6" stroke="#4592cf" stroke-width="1.3"/>
<path d="M1891.6,79 Q1899,67 1905,67 Q1911,67 1918.5,84.5 Q1924,77.5 1927,78 Q1932,79 1938.6,86 L1938.6,94.8 L1891.6,94.8 Z" fill="#4592cf"/>
<circle cx="1926.6" cy="60.1" r="5.5" fill="#ffffcc" stroke="#b9dcec" stroke-width="0.6"/>
<rect x="1993.4" y="39.5" width="65.2" height="65.2" fill="#0a96d9"/>
<rect x="1999.7" y="45.3" width="46.3" height="36.1" fill="none" stroke="#7ee07e" stroke-width="1.6" stroke-dasharray="6.5,4"/>
<path d="M2034.5,69.1 L2034.5,94.5 L2040,89.3 L2045,99.7 L2049.8,97.5 L2044.8,87.5 L2052.5,87.4 Z" fill="#ffffff"/><defs><linearGradient id="gcyl" x1="0" y1="0" x2="1" y2="0"><stop offset="0" stop-color="#c8c8c8"/><stop offset="0.5" stop-color="#f6f6f6"/><stop offset="1" stop-color="#e6e6e6"/></linearGradient><linearGradient id="gtri" x1="0" y1="0" x2="1" y2="1"><stop offset="0" stop-color="#888"/><stop offset="1" stop-color="#111"/></linearGradient><linearGradient id="gcube" x1="0" y1="0" x2="0" y2="1"><stop offset="0" stop-color="#f4f6fa"/><stop offset="1" stop-color="#c9ced8"/></linearGradient></defs>
<rect x="65" y="203.0" width="357.6" height="34" fill="#f1f1f1"/>
<path d="M35,226.0 L47.4,214.0 L47.4,226.0 Z" fill="url(#gtri)" stroke="#222" stroke-width="0.8"/>
<path d="M70.4,219.8 C77.4,208.8 90.80000000000001,208.8 97.80000000000001,219.8 C90.80000000000001,230.8 77.4,230.8 70.4,219.8 Z" fill="#9a9a9a"/><circle cx="84.10000000000001" cy="219.8" r="4.6" fill="#f2f2f2"/><circle cx="84.10000000000001" cy="219.8" r="2.6" fill="#9a9a9a"/>
<rect x="108" y="206.0" width="271.5" height="27.3" fill="#9a9a9a"/>
<path d="M117,212.0 L121,208.5 L138,208.5 L138,225.0 L134,229.5 L117,229.5 Z" fill="url(#gcube)" stroke="#333" stroke-width="1"/><path d="M117,212.0 L134,212.0 L138,208.5 M134,212.0 L134,229.5" fill="none" stroke="#555" stroke-width="0.8"/>
<text x="165" y="227.3" font-size="20" fill="#ffffff" font-weight="bold" textLength="199.5" lengthAdjust="spacingAndGlyphs">magnetic stopper v3</text>
<circle cx="398.5" cy="219.3" r="10.8" fill="url(#gcube)" stroke="#777" stroke-width="1.2"/><circle cx="398.5" cy="219.3" r="3.9" fill="#333"/>
<rect x="96" y="244.3" width="244.0" height="34" fill="#f1f1f1"/>
<path d="M67.6,254.90000000000003 L76.8,261.70000000000005 L67.6,268.5 Z" fill="none" stroke="#333" stroke-width="1.3" stroke-linejoin="round"/>
<path d="M123.5,258.4 L123.5,263.4 L120.2,263.8 L120.0,264.3 L122.0,267.0 L118.6,270.4 L115.9,268.4 L115.4,268.6 L115.0,271.9 L110.0,271.9 L109.6,268.6 L109.1,268.4 L106.4,270.4 L103.0,267.0 L105.0,264.3 L104.8,263.8 L101.5,263.4 L101.5,258.4 L104.8,258.0 L105.0,257.5 L103.0,254.8 L106.4,251.4 L109.1,253.4 L109.6,253.2 L110.0,249.9 L115.0,249.9 L115.4,253.2 L115.9,253.4 L118.6,251.4 L122.0,254.8 L120.0,257.5 L120.2,258.0 Z" fill="#808080"/><circle cx="112.5" cy="260.90000000000003" r="3.6" fill="#f2f2f2"/>
<text x="146" y="268.6" font-size="20" fill="#333333" stroke="#333333" stroke-width="0.3" font-weight="normal" textLength="172.5" lengthAdjust="spacingAndGlyphs">Document Settings</text>
<rect x="96" y="285.6" width="195.8" height="34" fill="#f1f1f1"/>
<path d="M67.6,296.20000000000005 L76.8,303.00000000000006 L67.6,309.8 Z" fill="none" stroke="#333" stroke-width="1.3" stroke-linejoin="round"/>
<path d="M101,291.6 L112,291.6 L112.5,293.6 L101,293.6 Z M101,295.20000000000005 L129,295.20000000000005 L129,313.90000000000003 L101,313.90000000000003 Z" fill="#9a9a9a"/>
<text x="152.7" y="309.9" font-size="20" fill="#333333" stroke="#333333" stroke-width="0.3" font-weight="normal" textLength="121.8" lengthAdjust="spacingAndGlyphs">Named Views</text>
<rect x="96" y="326.9" width="177.0" height="34" fill="#f1f1f1"/>
<path d="M67.6,337.5 L76.8,344.3 L67.6,351.09999999999997 Z" fill="none" stroke="#333" stroke-width="1.3" stroke-linejoin="round"/>
<path d="M144,332.9 L155,332.9 L155.5,334.9 L144,334.9 Z M144,336.5 L172,336.5 L172,355.2 L144,355.2 Z" fill="#9a9a9a"/>
<path d="M102,344.0 C108.5,334.0 120.9,334.0 127.4,344.0 C120.9,354.0 108.5,354.0 102,344.0 Z" fill="none" stroke="#a3a3a3" stroke-width="1.5"/><path d="M109.7,342.5 A5,5 0 0 1 119.2,346.0" fill="none" stroke="#a3a3a3" stroke-width="1.5"/><path d="M108,336.2 L121.5,352.7" stroke="#a3a3a3" stroke-width="1.6"/>
<text x="195" y="351.2" font-size="20" fill="#333333" stroke="#333333" stroke-width="0.3" font-weight="normal" textLength="56.9" lengthAdjust="spacingAndGlyphs">Origin</text>
<rect x="96" y="368.2" width="190.6" height="34" fill="#f1f1f1"/>
<path d="M67.6,378.8 L76.8,385.6 L67.6,392.4 Z" fill="none" stroke="#333" stroke-width="1.3" stroke-linejoin="round"/>
<path d="M144,374.2 L155,374.2 L155.5,376.2 L144,376.2 Z M144,377.8 L172,377.8 L172,396.5 L144,396.5 Z" fill="#9a9a9a"/>
<path d="M101,385.3 C108,374.3 121.4,374.3 128.4,385.3 C121.4,396.3 108,396.3 101,385.3 Z" fill="#9a9a9a"/><circle cx="114.7" cy="385.3" r="4.6" fill="#f2f2f2"/><circle cx="114.7" cy="385.3" r="2.6" fill="#9a9a9a"/>
<text x="195.4" y="392.5" font-size="20" fill="#333333" stroke="#333333" stroke-width="0.3" font-weight="normal" textLength="75.1" lengthAdjust="spacingAndGlyphs">Analysis</text>
<rect x="96" y="409.5" width="177.0" height="34" fill="#f1f1f1"/>
<path d="M65.8,432.0 L78.2,420.0 L78.2,432.0 Z" fill="url(#gtri)" stroke="#222" stroke-width="0.8"/>
<path d="M144,415.5 L155,415.5 L155.5,417.5 L144,417.5 Z M144,419.1 L172,419.1 L172,437.8 L144,437.8 Z" fill="#9a9a9a"/>
<path d="M101,426.6 C108,415.6 121.4,415.6 128.4,426.6 C121.4,437.6 108,437.6 101,426.6 Z" fill="#9a9a9a"/><circle cx="114.7" cy="426.6" r="4.6" fill="#f2f2f2"/><circle cx="114.7" cy="426.6" r="2.6" fill="#9a9a9a"/>
<text x="195.4" y="433.8" font-size="20" fill="#333333" stroke="#333333" stroke-width="0.3" font-weight="normal" textLength="59.7" lengthAdjust="spacingAndGlyphs">Bodies</text>
<rect x="127.4" y="450.8" width="169.3" height="34" fill="#f1f1f1"/>
<path d="M177,458.59999999999997 Q189,453.09999999999997 201.3,458.59999999999997 L201.3,475.09999999999997 Q189,481.59999999999997 177,475.09999999999997 Z" fill="url(#gcyl)" stroke="#444" stroke-width="1.3"/><path d="M177,458.59999999999997 Q189,463.59999999999997 201.3,458.59999999999997" fill="none" stroke="#bbb" stroke-width="0.8"/>
<path d="M133.3,467.9 C139.8,457.9 152.20000000000002,457.9 158.70000000000002,467.9 C152.20000000000002,477.9 139.8,477.9 133.3,467.9 Z" fill="none" stroke="#a3a3a3" stroke-width="1.5"/><path d="M141.0,466.4 A5,5 0 0 1 150.5,469.9" fill="none" stroke="#a3a3a3" stroke-width="1.5"/><path d="M139.3,460.09999999999997 L152.8,476.59999999999997" stroke="#a3a3a3" stroke-width="1.6"/>
<text x="226.3" y="475.1" font-size="20" fill="#333333" stroke="#333333" stroke-width="0.3" font-weight="normal" textLength="55.3" lengthAdjust="spacingAndGlyphs">Body1</text>
<rect x="127.4" y="492.1" width="169.3" height="34" fill="#f1f1f1"/>
<path d="M177,499.9 Q189,494.4 201.3,499.9 L201.3,516.4 Q189,522.9 177,516.4 Z" fill="url(#gcyl)" stroke="#444" stroke-width="1.3"/><path d="M177,499.9 Q189,504.9 201.3,499.9" fill="none" stroke="#bbb" stroke-width="0.8"/>
<path d="M133.3,509.2 C139.8,499.2 152.20000000000002,499.2 158.70000000000002,509.2 C152.20000000000002,519.2 139.8,519.2 133.3,509.2 Z" fill="none" stroke="#a3a3a3" stroke-width="1.5"/><path d="M141.0,507.7 A5,5 0 0 1 150.5,511.2" fill="none" stroke="#a3a3a3" stroke-width="1.5"/><path d="M139.3,501.4 L152.8,517.9" stroke="#a3a3a3" stroke-width="1.6"/>
<text x="226.3" y="516.4" font-size="20" fill="#333333" stroke="#333333" stroke-width="0.3" font-weight="normal" textLength="55.3" lengthAdjust="spacingAndGlyphs">Body2</text>
<rect x="127.4" y="533.4" width="169.3" height="34" fill="#f1f1f1"/>
<path d="M177,541.1999999999999 Q189,535.6999999999999 201.3,541.1999999999999 L201.3,557.6999999999999 Q189,564.1999999999999 177,557.6999999999999 Z" fill="url(#gcyl)" stroke="#444" stroke-width="1.3"/><path d="M177,541.1999999999999 Q189,546.1999999999999 201.3,541.1999999999999" fill="none" stroke="#bbb" stroke-width="0.8"/>
<path d="M132.3,550.4999999999999 C139.3,539.4999999999999 152.70000000000002,539.4999999999999 159.70000000000002,550.4999999999999 C152.70000000000002,561.4999999999999 139.3,561.4999999999999 132.3,550.4999999999999 Z" fill="#9a9a9a"/><circle cx="146.0" cy="550.4999999999999" r="4.6" fill="#f2f2f2"/><circle cx="146.0" cy="550.4999999999999" r="2.6" fill="#9a9a9a"/>
<text x="226.3" y="557.7" font-size="20" fill="#333333" stroke="#333333" stroke-width="0.3" font-weight="normal" textLength="55.3" lengthAdjust="spacingAndGlyphs">Body3</text>
<rect x="96" y="574.7" width="198.0" height="34" fill="#f1f1f1"/>
<path d="M65.8,597.2 L78.2,585.2 L78.2,597.2 Z" fill="url(#gtri)" stroke="#222" stroke-width="0.8"/>
<path d="M144,580.7 L155,580.7 L155.5,582.7 L144,582.7 Z M144,584.3000000000001 L172,584.3000000000001 L172,603.0 L144,603.0 Z" fill="#9a9a9a"/>
<path d="M102,591.8 C108.5,581.8 120.9,581.8 127.4,591.8 C120.9,601.8 108.5,601.8 102,591.8 Z" fill="none" stroke="#a3a3a3" stroke-width="1.5"/><path d="M109.7,590.3 A5,5 0 0 1 119.2,593.8" fill="none" stroke="#a3a3a3" stroke-width="1.5"/><path d="M108,584.0 L121.5,600.5" stroke="#a3a3a3" stroke-width="1.6"/>
<text x="195.4" y="599.0" font-size="20" fill="#333333" stroke="#333333" stroke-width="0.3" font-weight="normal" textLength="80.1" lengthAdjust="spacingAndGlyphs">Sketches</text>
<rect x="127.4" y="616.0" width="190.6" height="34" fill="#f1f1f1"/>
<path d="M176.5,620.5 L198.5,620.5 L198.5,635.5 M176.5,620.5 L176.5,643.0 L189.5,643.0 M182.5,625.5 L193.5,625.5 M182.0,625.5 L182.0,636.5 M193.0,626.5 Q191.5,635.5 182.5,637.0" fill="none" stroke="#777" stroke-width="1.1" stroke-dasharray="3,1.5"/><rect x="175.1" y="619.1" width="2.8" height="2.8" fill="#1a8de0"/><rect x="197.1" y="619.1" width="2.8" height="2.8" fill="#1a8de0"/><rect x="175.1" y="641.6" width="2.8" height="2.8" fill="#1a8de0"/><rect x="180.6" y="624.1" width="2.8" height="2.8" fill="#1a8de0"/><rect x="191.6" y="624.1" width="2.8" height="2.8" fill="#1a8de0"/><rect x="180.6" y="635.1" width="2.8" height="2.8" fill="#1a8de0"/><path d="M188.0,644.5 L190.0,639.0 L198.0,631.0 L201.5,634.5 L193.5,642.5 Z" fill="#f3b73b"/><path d="M198.0,631.0 L199.5,629.5 Q201.5,628.5 203.0,631.0 L201.5,634.5 Z" fill="#e8323c"/><path d="M188.0,644.5 L190.0,639.0 L193.5,642.5 Z" fill="#555"/>
<path d="M132.3,633.0999999999999 C139.3,622.0999999999999 152.70000000000002,622.0999999999999 159.70000000000002,633.0999999999999 C152.70000000000002,644.0999999999999 139.3,644.0999999999999 132.3,633.0999999999999 Z" fill="#d4d4d4"/><circle cx="146.0" cy="633.0999999999999" r="4.6" fill="#f2f2f2"/><circle cx="146.0" cy="633.0999999999999" r="2.6" fill="#d4d4d4"/>
<text x="226.3" y="640.3" font-size="20" fill="#333333" stroke="#333333" stroke-width="0.3" font-weight="normal" textLength="71.2" lengthAdjust="spacingAndGlyphs">Sketch1</text>
<rect x="127.4" y="657.3" width="190.6" height="34" fill="#f1f1f1"/>
<path d="M176.5,661.8 L198.5,661.8 L198.5,676.8 M176.5,661.8 L176.5,684.3 L189.5,684.3 M182.5,666.8 L193.5,666.8 M182.0,666.8 L182.0,677.8 M193.0,667.8 Q191.5,676.8 182.5,678.3" fill="none" stroke="#777" stroke-width="1.1" stroke-dasharray="3,1.5"/><rect x="175.1" y="660.4" width="2.8" height="2.8" fill="#1a8de0"/><rect x="197.1" y="660.4" width="2.8" height="2.8" fill="#1a8de0"/><rect x="175.1" y="682.9" width="2.8" height="2.8" fill="#1a8de0"/><rect x="180.6" y="665.4" width="2.8" height="2.8" fill="#1a8de0"/><rect x="191.6" y="665.4" width="2.8" height="2.8" fill="#1a8de0"/><rect x="180.6" y="676.4" width="2.8" height="2.8" fill="#1a8de0"/><path d="M188.0,685.8 L190.0,680.3 L198.0,672.3 L201.5,675.8 L193.5,683.8 Z" fill="#f3b73b"/><path d="M198.0,672.3 L199.5,670.8 Q201.5,669.8 203.0,672.3 L201.5,675.8 Z" fill="#e8323c"/><path d="M188.0,685.8 L190.0,680.3 L193.5,683.8 Z" fill="#555"/>
<path d="M132.3,674.3999999999999 C139.3,663.3999999999999 152.70000000000002,663.3999999999999 159.70000000000002,674.3999999999999 C152.70000000000002,685.3999999999999 139.3,685.3999999999999 132.3,674.3999999999999 Z" fill="#d4d4d4"/><circle cx="146.0" cy="674.3999999999999" r="4.6" fill="#f2f2f2"/><circle cx="146.0" cy="674.3999999999999" r="2.6" fill="#d4d4d4"/>
<text x="226.3" y="681.6" font-size="20" fill="#333333" stroke="#333333" stroke-width="0.3" font-weight="normal" textLength="71.2" lengthAdjust="spacingAndGlyphs">Sketch2</text>
<rect x="127.4" y="698.6" width="190.6" height="34" fill="#f1f1f1"/>
<path d="M176.5,703.0999999999999 L198.5,703.0999999999999 L198.5,718.0999999999999 M176.5,703.0999999999999 L176.5,725.5999999999999 L189.5,725.5999999999999 M182.5,708.0999999999999 L193.5,708.0999999999999 M182.0,708.0999999999999 L182.0,719.0999999999999 M193.0,709.0999999999999 Q191.5,718.0999999999999 182.5,719.5999999999999" fill="none" stroke="#777" stroke-width="1.1" stroke-dasharray="3,1.5"/><rect x="175.1" y="701.6999999999999" width="2.8" height="2.8" fill="#1a8de0"/><rect x="197.1" y="701.6999999999999" width="2.8" height="2.8" fill="#1a8de0"/><rect x="175.1" y="724.1999999999999" width="2.8" height="2.8" fill="#1a8de0"/><rect x="180.6" y="706.6999999999999" width="2.8" height="2.8" fill="#1a8de0"/><rect x="191.6" y="706.6999999999999" width="2.8" height="2.8" fill="#1a8de0"/><rect x="180.6" y="717.6999999999999" width="2.8" height="2.8" fill="#1a8de0"/><path d="M188.0,727.0999999999999 L190.0,721.5999999999999 L198.0,713.5999999999999 L201.5,717.0999999999999 L193.5,725.0999999999999 Z" fill="#f3b73b"/><path d="M198.0,713.5999999999999 L199.5,712.0999999999999 Q201.5,711.0999999999999 203.0,713.5999999999999 L201.5,717.0999999999999 Z" fill="#e8323c"/><path d="M188.0,727.0999999999999 L190.0,721.5999999999999 L193.5,725.0999999999999 Z" fill="#555"/>
<path d="M133.3,715.6999999999998 C139.8,705.6999999999998 152.20000000000002,705.6999999999998 158.70000000000002,715.6999999999998 C152.20000000000002,725.6999999999998 139.8,725.6999999999998 133.3,715.6999999999998 Z" fill="none" stroke="#a3a3a3" stroke-width="1.5"/><path d="M141.0,714.1999999999998 A5,5 0 0 1 150.5,717.6999999999998" fill="none" stroke="#a3a3a3" stroke-width="1.5"/><path d="M139.3,707.8999999999999 L152.8,724.3999999999999" stroke="#a3a3a3" stroke-width="1.6"/>
<text x="226.3" y="722.9" font-size="20" fill="#333333" stroke="#333333" stroke-width="0.3" font-weight="normal" textLength="71.2" lengthAdjust="spacingAndGlyphs">Sketch3</text><defs><linearGradient id="gvcf" x1="0" y1="0" x2="0" y2="1"><stop offset="0" stop-color="#f0f0f0"/><stop offset="1" stop-color="#dcdcdc"/></linearGradient></defs>
<path d="M2411.1,206.6 L2488.6,189.3 L2491.9,265.0 L2405.5,277.2 Z" fill="url(#gvcf)"/>
<path d="M2488.6,189.3 L2509.7,231.8 L2513.9,299.6 L2491.9,265.0 Z" fill="#e3e3e3"/>
<path d="M2405.5,277.2 L2491.9,265.0 L2513.9,299.6 L2440.0,312.2 Z" fill="#d9d9d9"/>
<path d="M2421,263 L2485,253 L2488,273 L2424,283 Z" fill="#d2d3d6" opacity="0.7"/>
<path d="M2411.1,206.6 L2488.6,189.3 L2491.9,265.0 L2405.5,277.2 Z" fill="none" stroke="#b9b9b9" stroke-width="0.8" stroke-dasharray="7,2"/>
<path d="M2488.6,189.3 L2509.7,231.8 L2513.9,299.6 L2491.9,265.0 Z" fill="none" stroke="#b9b9b9" stroke-width="0.8" stroke-dasharray="7,2"/>
<path d="M2405.5,277.2 L2491.9,265.0 L2513.9,299.6 L2440.0,312.2 Z" fill="none" stroke="#b9b9b9" stroke-width="0.8" stroke-dasharray="7,2"/>
<text x="0" y="0" font-size="19" font-weight="bold" fill="#8c9096" transform="translate(2421.5,246) rotate(-13) skewX(-8)" textLength="60" lengthAdjust="spacingAndGlyphs">FRONT</text>
<text x="0" y="0" font-size="11" font-weight="bold" fill="#7d7d7d" transform="translate(2500.5,281.8) rotate(-11.5) scale(-1,-1)" textLength="73" lengthAdjust="spacingAndGlyphs">BOTTOM</text>
<text x="0" y="0" font-size="8" font-weight="bold" fill="#8c9096" transform="translate(2498.5,228.5) rotate(68.7) scale(1,-1)" textLength="35" lengthAdjust="spacingAndGlyphs">RIGHT</text>
<path d="M2398,275.3 L2440,312.2" stroke="#7b7bff" stroke-width="1.6"/>
<path d="M2440,312.2 L2528.8,300.5" stroke="#ff8d8d" stroke-width="1.6"/>
<text x="2382.5" y="277.6" font-size="25" fill="#7b7bff" textLength="14" lengthAdjust="spacingAndGlyphs">Z</text>
<text x="2533.5" y="308.4" font-size="25" fill="#ff7b7b" textLength="13.5" lengthAdjust="spacingAndGlyphs">X</text>
</svg></body></html>
